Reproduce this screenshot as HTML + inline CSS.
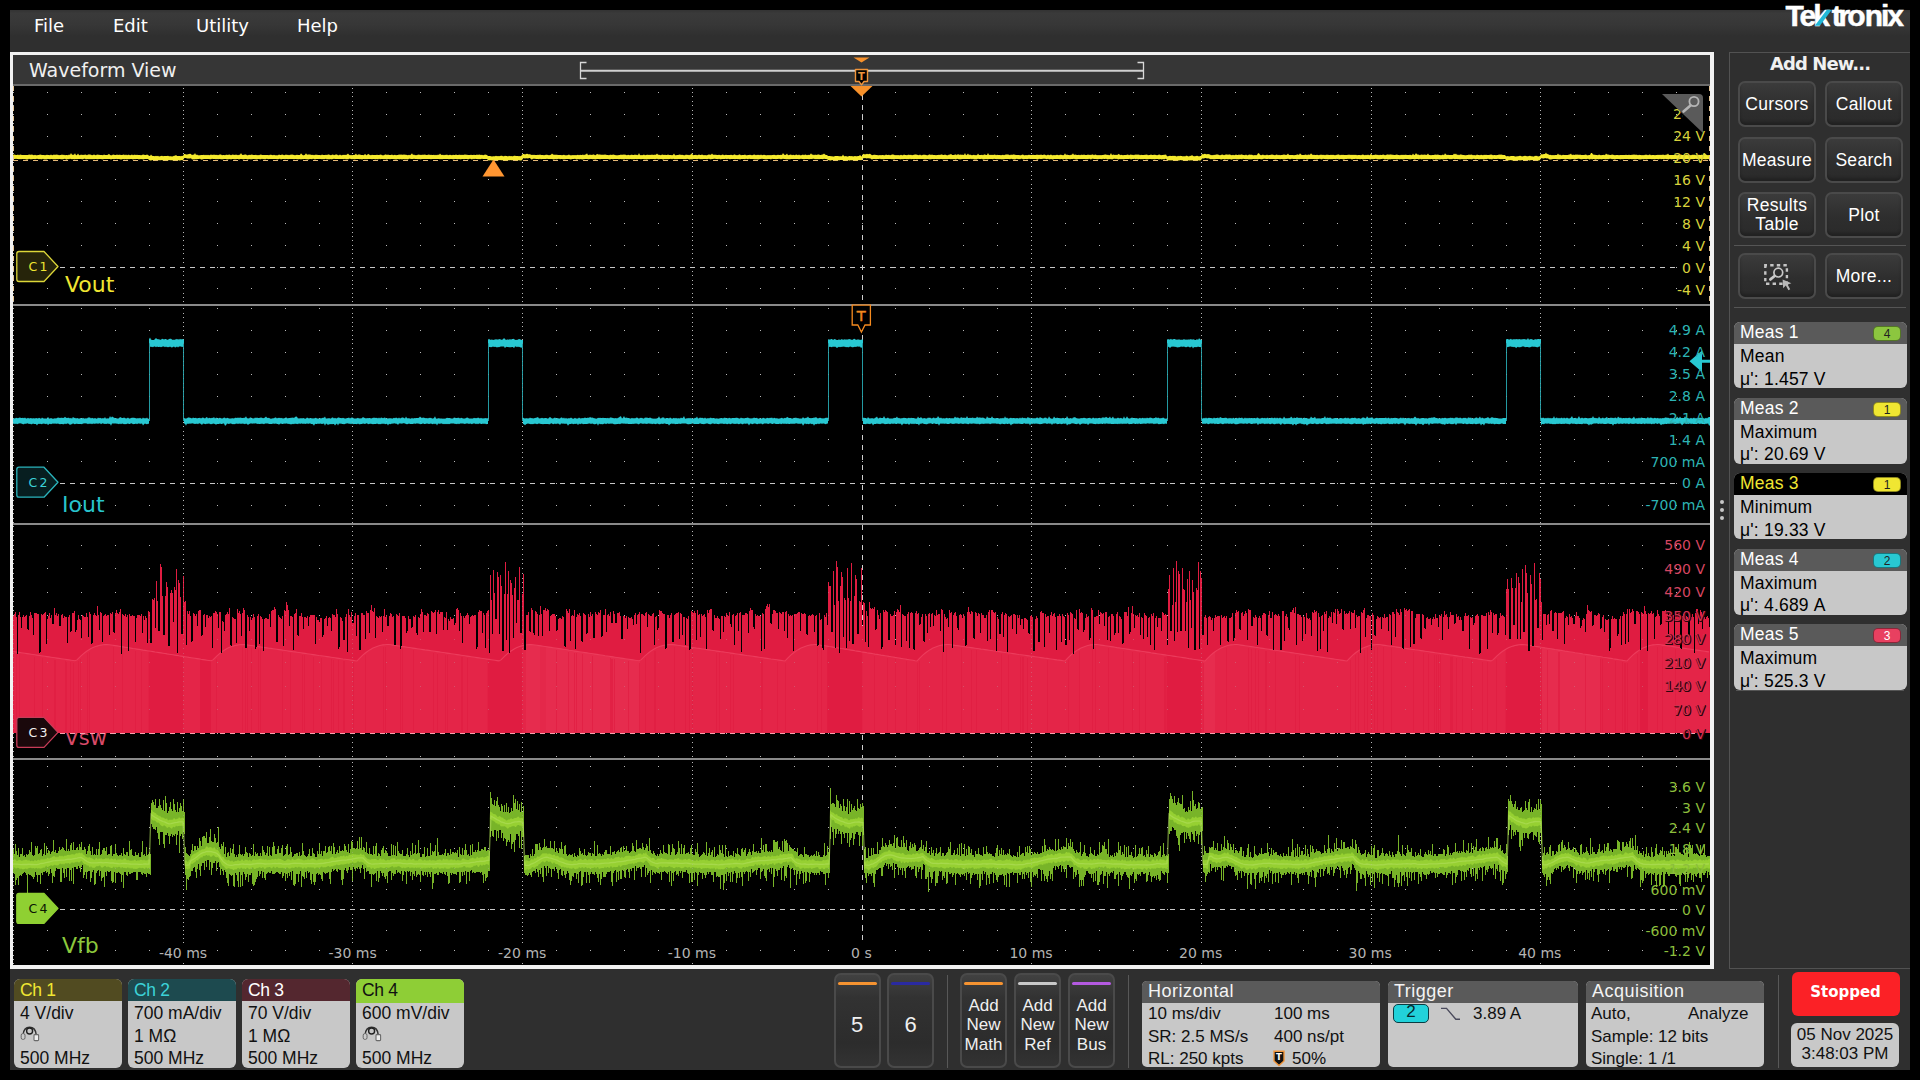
<!DOCTYPE html>
<html lang="en"><head><meta charset="utf-8"><title>Tektronix Waveform View</title>
<style>
html,body{margin:0;padding:0;background:#000;}
body{width:1920px;height:1080px;position:relative;overflow:hidden;font-family:"Liberation Sans",sans-serif;color:#fff;}
.abs{position:absolute;}
#app{position:absolute;left:10px;top:10px;width:1900px;height:1060px;background:#2f2f2f;}
#menubar{position:absolute;left:10px;top:10px;width:1900px;height:42px;background:linear-gradient(#333 0,#3a3a3a 8%,#373737 35%,#2f2f2f 62%,#2f2f2f);}
.menu{position:absolute;top:14px;font:18px "DejaVu Sans",sans-serif;color:#fff;line-height:24px;}
#wvborder{position:absolute;left:10px;top:52px;width:1704px;height:917px;background:#f2f2f2;}
#wvhead{position:absolute;left:13px;top:55px;width:1697px;height:29px;background:#363636;}
#wvline{position:absolute;left:13px;top:84px;width:1697px;height:2px;background:#6a6a6a;}
#wvtitle{position:absolute;left:29px;top:58px;font:19px "DejaVu Sans",sans-serif;color:#f0f0f0;line-height:24px;}
#plot{position:absolute;left:13px;top:86px;width:1697px;height:879px;background:#000;}
.lbl{position:absolute;font:14px "DejaVu Sans",sans-serif;line-height:18px;white-space:nowrap;}
.ylab{right:215px;text-align:right;}
.tl{color:#b4b4b4;transform:translateX(-50%);top:946px;background:#000;line-height:18px;height:18px;margin-top:-2px;padding-top:0;}
.chname{position:absolute;font:22px "DejaVu Sans",sans-serif;line-height:28px;}
/* right panel */
#rpanel{position:absolute;left:1729px;top:52px;width:181px;height:917px;border:1px solid #525252;border-right:none;box-sizing:border-box;}
#addnew{position:absolute;left:1730px;top:53px;width:180px;text-align:center;font:bold 18px "DejaVu Sans",sans-serif;letter-spacing:-.9px;color:#f0f0f0;line-height:22px;}
.btn{position:absolute;width:78px;height:46px;box-sizing:border-box;box-shadow:inset 0 -3px 3px rgba(0,0,0,.22);border:2px solid #4a4a4a;border-radius:7px;background:linear-gradient(#3b3b3b,#2e2e2e 55%,#2a2a2a);color:#fff;font:17.5px "Liberation Sans",sans-serif;letter-spacing:.3px;text-align:center;line-height:42px;}
.btn.two{line-height:19px;padding-top:2px;}
.hr{position:absolute;height:1px;background:#555;}
.meas{position:absolute;left:1734px;width:173px;height:66px;border-radius:6px;background:#c8c8c8;overflow:hidden;color:#000;font:17.5px "Liberation Sans",sans-serif;letter-spacing:.2px;}
.meas .h{position:absolute;left:0;top:0;width:100%;height:22px;background:#5a5a5a;color:#fff;line-height:21px;text-indent:6px;}
.meas .l1{position:absolute;left:6px;top:23px;line-height:22px;}
.meas .l2{position:absolute;left:6px;top:45.5px;line-height:22px;}
.chip{position:absolute;right:6px;top:4px;width:28px;height:15px;box-sizing:border-box;border:1px solid rgba(0,0,0,.4);border-radius:5px;letter-spacing:0;font:12px "Liberation Sans",sans-serif;line-height:14px;text-align:center;color:#222;text-indent:0;}
/* bottom */
.badge{position:absolute;top:979px;width:108px;height:89px;border-radius:6px;background:#c8c8c8;overflow:hidden;color:#111;font:17.5px "Liberation Sans",sans-serif;}
.badge .h{position:absolute;left:0;top:0;width:100%;height:22px;line-height:22px;text-indent:6px;letter-spacing:-.3px;}
.badge .r{position:absolute;left:6px;line-height:22px;white-space:nowrap;}
.sbtn{position:absolute;top:973px;width:47px;height:95px;box-sizing:border-box;border:2px solid #4a4a4a;border-radius:7px;background:linear-gradient(#414141,#323232 25%,#2c2c2c 75%,#333);color:#f0f0f0;text-align:center;font:17px "Liberation Sans",sans-serif;}
.sbtn .bar{position:absolute;left:2px;right:2px;top:6.5px;height:3.5px;border-radius:2px;}
.sbtn .t{position:absolute;left:0;right:0;top:21px;line-height:19.3px;}
.sbtn .n{position:absolute;left:0;right:0;top:36px;font-size:22px;line-height:28px;}
.vr{position:absolute;width:1px;background:#585858;}
.info{position:absolute;top:981px;height:86px;border-radius:5px;background:#c8c8c8;overflow:hidden;color:#111;font:17px "Liberation Sans",sans-serif;}
.info .h{position:absolute;left:0;top:0;width:100%;height:22px;background:#5a5a5a;color:#f4f4f4;line-height:21px;text-indent:6px;font-size:18px;letter-spacing:.5px;}
.info .r{position:absolute;line-height:22px;white-space:nowrap;}
#stopped{position:absolute;left:1791.5px;top:972px;width:108px;height:44px;border-radius:6px;background:#fb2126;color:#fff;font:bold 15px "DejaVu Sans",sans-serif;line-height:40px;text-align:center;}
#datebox{position:absolute;left:1791px;top:1022.5px;width:108px;height:44px;border-radius:6px;background:#c8c8c8;color:#111;font:17px "Liberation Sans",sans-serif;line-height:19.5px;text-align:center;padding-top:2px;box-sizing:border-box;}

</style></head>
<body>
<div id="app"></div>
<div id="menubar"></div>
<div class="menu" style="left:34px">File</div>
<div class="menu" style="left:113px">Edit</div>
<div class="menu" style="left:196px">Utility</div>
<div class="menu" style="left:297px">Help</div>
<svg id="logo" class="abs" style="left:1780px;top:0" width="130" height="34" viewBox="1780 0 130 34"><text y="25.7" x="1785.6 1799.6 1813.2 1831.8 1838.4 1847.2 1864.8 1881 1887.2" font-family="Liberation Sans, sans-serif" font-weight="bold" font-size="30" fill="#fff" stroke="#fff" stroke-width=".5">Tektronix</text><path d="M1814.8 25.7L1826.8 9.8H1831.8L1819.8 25.7Z" fill="#21b8d8"/></svg>
<div id="wvborder"></div><div id="wvhead"></div><div id="wvline"></div>
<div id="wvtitle">Waveform View</div>
<div id="plot"></div>
<svg class="abs" style="left:0;top:0" width="1920" height="1080" viewBox="0 0 1920 1080">
<g id="gridwaves">
<path d="M13 88.5h1M183 88.5h1M352 88.5h1M522 88.5h1M692 88.5h1M1031 88.5h1M1201 88.5h1M1371 88.5h1M1540 88.5h1M13 92.5h1M47 92.5h1M81 92.5h1M115 92.5h1M149 92.5h1M183 92.5h1M217 92.5h1M251 92.5h1M285 92.5h1M319 92.5h1M352 92.5h1M386 92.5h1M420 92.5h1M454 92.5h1M488 92.5h1M522 92.5h1M556 92.5h1M590 92.5h1M624 92.5h1M658 92.5h1M692 92.5h1M726 92.5h1M760 92.5h1M794 92.5h1M828 92.5h1M862 92.5h1M895 92.5h1M929 92.5h1M963 92.5h1M997 92.5h1M1031 92.5h1M1065 92.5h1M1099 92.5h1M1133 92.5h1M1167 92.5h1M1201 92.5h1M1235 92.5h1M1269 92.5h1M1303 92.5h1M1337 92.5h1M1371 92.5h1M1405 92.5h1M1439 92.5h1M1472 92.5h1M1506 92.5h1M1540 92.5h1M1574 92.5h1M1608 92.5h1M1642 92.5h1M1676 92.5h1M13 96.5h1M183 96.5h1M352 96.5h1M522 96.5h1M692 96.5h1M1031 96.5h1M1201 96.5h1M1371 96.5h1M1540 96.5h1M13 101.5h1M183 101.5h1M352 101.5h1M522 101.5h1M692 101.5h1M1031 101.5h1M1201 101.5h1M1371 101.5h1M1540 101.5h1M13 105.5h1M183 105.5h1M352 105.5h1M522 105.5h1M692 105.5h1M1031 105.5h1M1201 105.5h1M1371 105.5h1M1540 105.5h1M13 110.5h1M183 110.5h1M352 110.5h1M522 110.5h1M692 110.5h1M1031 110.5h1M1201 110.5h1M1371 110.5h1M1540 110.5h1M13 114.5h1M47 114.5h1M81 114.5h1M115 114.5h1M149 114.5h1M183 114.5h1M217 114.5h1M251 114.5h1M285 114.5h1M319 114.5h1M352 114.5h1M386 114.5h1M420 114.5h1M454 114.5h1M488 114.5h1M522 114.5h1M556 114.5h1M590 114.5h1M624 114.5h1M658 114.5h1M692 114.5h1M726 114.5h1M760 114.5h1M794 114.5h1M828 114.5h1M862 114.5h1M895 114.5h1M929 114.5h1M963 114.5h1M997 114.5h1M1031 114.5h1M1065 114.5h1M1099 114.5h1M1133 114.5h1M1167 114.5h1M1201 114.5h1M1235 114.5h1M1269 114.5h1M1303 114.5h1M1337 114.5h1M1371 114.5h1M1405 114.5h1M1439 114.5h1M1472 114.5h1M1506 114.5h1M1540 114.5h1M1574 114.5h1M1608 114.5h1M1642 114.5h1M1676 114.5h1M13 118.5h1M183 118.5h1M352 118.5h1M522 118.5h1M692 118.5h1M1031 118.5h1M1201 118.5h1M1371 118.5h1M1540 118.5h1M13 123.5h1M183 123.5h1M352 123.5h1M522 123.5h1M692 123.5h1M1031 123.5h1M1201 123.5h1M1371 123.5h1M1540 123.5h1M13 127.5h1M183 127.5h1M352 127.5h1M522 127.5h1M692 127.5h1M1031 127.5h1M1201 127.5h1M1371 127.5h1M1540 127.5h1M13 131.5h1M183 131.5h1M352 131.5h1M522 131.5h1M692 131.5h1M1031 131.5h1M1201 131.5h1M1371 131.5h1M1540 131.5h1M13 136.5h1M47 136.5h1M81 136.5h1M115 136.5h1M149 136.5h1M183 136.5h1M217 136.5h1M251 136.5h1M285 136.5h1M319 136.5h1M352 136.5h1M386 136.5h1M420 136.5h1M454 136.5h1M488 136.5h1M522 136.5h1M556 136.5h1M590 136.5h1M624 136.5h1M658 136.5h1M692 136.5h1M726 136.5h1M760 136.5h1M794 136.5h1M828 136.5h1M862 136.5h1M895 136.5h1M929 136.5h1M963 136.5h1M997 136.5h1M1031 136.5h1M1065 136.5h1M1099 136.5h1M1133 136.5h1M1167 136.5h1M1201 136.5h1M1235 136.5h1M1269 136.5h1M1303 136.5h1M1337 136.5h1M1371 136.5h1M1405 136.5h1M1439 136.5h1M1472 136.5h1M1506 136.5h1M1540 136.5h1M1574 136.5h1M1608 136.5h1M1642 136.5h1M1676 136.5h1M13 140.5h1M183 140.5h1M352 140.5h1M522 140.5h1M692 140.5h1M1031 140.5h1M1201 140.5h1M1371 140.5h1M1540 140.5h1M13 144.5h1M183 144.5h1M352 144.5h1M522 144.5h1M692 144.5h1M1031 144.5h1M1201 144.5h1M1371 144.5h1M1540 144.5h1M13 149.5h1M183 149.5h1M352 149.5h1M522 149.5h1M692 149.5h1M1031 149.5h1M1201 149.5h1M1371 149.5h1M1540 149.5h1M13 153.5h1M183 153.5h1M352 153.5h1M522 153.5h1M692 153.5h1M1031 153.5h1M1201 153.5h1M1371 153.5h1M1540 153.5h1M13 158.5h1M47 158.5h1M81 158.5h1M115 158.5h1M149 158.5h1M183 158.5h1M217 158.5h1M251 158.5h1M285 158.5h1M319 158.5h1M352 158.5h1M386 158.5h1M420 158.5h1M454 158.5h1M488 158.5h1M522 158.5h1M556 158.5h1M590 158.5h1M624 158.5h1M658 158.5h1M692 158.5h1M726 158.5h1M760 158.5h1M794 158.5h1M828 158.5h1M862 158.5h1M895 158.5h1M929 158.5h1M963 158.5h1M997 158.5h1M1031 158.5h1M1065 158.5h1M1099 158.5h1M1133 158.5h1M1167 158.5h1M1201 158.5h1M1235 158.5h1M1269 158.5h1M1303 158.5h1M1337 158.5h1M1371 158.5h1M1405 158.5h1M1439 158.5h1M1472 158.5h1M1506 158.5h1M1540 158.5h1M1574 158.5h1M1608 158.5h1M1642 158.5h1M1676 158.5h1M13 162.5h1M183 162.5h1M352 162.5h1M522 162.5h1M692 162.5h1M1031 162.5h1M1201 162.5h1M1371 162.5h1M1540 162.5h1M13 166.5h1M183 166.5h1M352 166.5h1M522 166.5h1M692 166.5h1M1031 166.5h1M1201 166.5h1M1371 166.5h1M1540 166.5h1M13 171.5h1M183 171.5h1M352 171.5h1M522 171.5h1M692 171.5h1M1031 171.5h1M1201 171.5h1M1371 171.5h1M1540 171.5h1M13 175.5h1M183 175.5h1M352 175.5h1M522 175.5h1M692 175.5h1M1031 175.5h1M1201 175.5h1M1371 175.5h1M1540 175.5h1M13 179.5h1M47 179.5h1M81 179.5h1M115 179.5h1M149 179.5h1M183 179.5h1M217 179.5h1M251 179.5h1M285 179.5h1M319 179.5h1M352 179.5h1M386 179.5h1M420 179.5h1M454 179.5h1M488 179.5h1M522 179.5h1M556 179.5h1M590 179.5h1M624 179.5h1M658 179.5h1M692 179.5h1M726 179.5h1M760 179.5h1M794 179.5h1M828 179.5h1M862 179.5h1M895 179.5h1M929 179.5h1M963 179.5h1M997 179.5h1M1031 179.5h1M1065 179.5h1M1099 179.5h1M1133 179.5h1M1167 179.5h1M1201 179.5h1M1235 179.5h1M1269 179.5h1M1303 179.5h1M1337 179.5h1M1371 179.5h1M1405 179.5h1M1439 179.5h1M1472 179.5h1M1506 179.5h1M1540 179.5h1M1574 179.5h1M1608 179.5h1M1642 179.5h1M1676 179.5h1M13 184.5h1M183 184.5h1M352 184.5h1M522 184.5h1M692 184.5h1M1031 184.5h1M1201 184.5h1M1371 184.5h1M1540 184.5h1M13 188.5h1M183 188.5h1M352 188.5h1M522 188.5h1M692 188.5h1M1031 188.5h1M1201 188.5h1M1371 188.5h1M1540 188.5h1M13 192.5h1M183 192.5h1M352 192.5h1M522 192.5h1M692 192.5h1M1031 192.5h1M1201 192.5h1M1371 192.5h1M1540 192.5h1M13 197.5h1M183 197.5h1M352 197.5h1M522 197.5h1M692 197.5h1M1031 197.5h1M1201 197.5h1M1371 197.5h1M1540 197.5h1M13 201.5h1M47 201.5h1M81 201.5h1M115 201.5h1M149 201.5h1M183 201.5h1M217 201.5h1M251 201.5h1M285 201.5h1M319 201.5h1M352 201.5h1M386 201.5h1M420 201.5h1M454 201.5h1M488 201.5h1M522 201.5h1M556 201.5h1M590 201.5h1M624 201.5h1M658 201.5h1M692 201.5h1M726 201.5h1M760 201.5h1M794 201.5h1M828 201.5h1M862 201.5h1M895 201.5h1M929 201.5h1M963 201.5h1M997 201.5h1M1031 201.5h1M1065 201.5h1M1099 201.5h1M1133 201.5h1M1167 201.5h1M1201 201.5h1M1235 201.5h1M1269 201.5h1M1303 201.5h1M1337 201.5h1M1371 201.5h1M1405 201.5h1M1439 201.5h1M1472 201.5h1M1506 201.5h1M1540 201.5h1M1574 201.5h1M1608 201.5h1M1642 201.5h1M1676 201.5h1M13 205.5h1M183 205.5h1M352 205.5h1M522 205.5h1M692 205.5h1M1031 205.5h1M1201 205.5h1M1371 205.5h1M1540 205.5h1M13 210.5h1M183 210.5h1M352 210.5h1M522 210.5h1M692 210.5h1M1031 210.5h1M1201 210.5h1M1371 210.5h1M1540 210.5h1M13 214.5h1M183 214.5h1M352 214.5h1M522 214.5h1M692 214.5h1M1031 214.5h1M1201 214.5h1M1371 214.5h1M1540 214.5h1M13 219.5h1M183 219.5h1M352 219.5h1M522 219.5h1M692 219.5h1M1031 219.5h1M1201 219.5h1M1371 219.5h1M1540 219.5h1M13 223.5h1M47 223.5h1M81 223.5h1M115 223.5h1M149 223.5h1M183 223.5h1M217 223.5h1M251 223.5h1M285 223.5h1M319 223.5h1M352 223.5h1M386 223.5h1M420 223.5h1M454 223.5h1M488 223.5h1M522 223.5h1M556 223.5h1M590 223.5h1M624 223.5h1M658 223.5h1M692 223.5h1M726 223.5h1M760 223.5h1M794 223.5h1M828 223.5h1M862 223.5h1M895 223.5h1M929 223.5h1M963 223.5h1M997 223.5h1M1031 223.5h1M1065 223.5h1M1099 223.5h1M1133 223.5h1M1167 223.5h1M1201 223.5h1M1235 223.5h1M1269 223.5h1M1303 223.5h1M1337 223.5h1M1371 223.5h1M1405 223.5h1M1439 223.5h1M1472 223.5h1M1506 223.5h1M1540 223.5h1M1574 223.5h1M1608 223.5h1M1642 223.5h1M1676 223.5h1M13 227.5h1M183 227.5h1M352 227.5h1M522 227.5h1M692 227.5h1M1031 227.5h1M1201 227.5h1M1371 227.5h1M1540 227.5h1M13 232.5h1M183 232.5h1M352 232.5h1M522 232.5h1M692 232.5h1M1031 232.5h1M1201 232.5h1M1371 232.5h1M1540 232.5h1M13 236.5h1M183 236.5h1M352 236.5h1M522 236.5h1M692 236.5h1M1031 236.5h1M1201 236.5h1M1371 236.5h1M1540 236.5h1M13 240.5h1M183 240.5h1M352 240.5h1M522 240.5h1M692 240.5h1M1031 240.5h1M1201 240.5h1M1371 240.5h1M1540 240.5h1M13 245.5h1M47 245.5h1M81 245.5h1M115 245.5h1M149 245.5h1M183 245.5h1M217 245.5h1M251 245.5h1M285 245.5h1M319 245.5h1M352 245.5h1M386 245.5h1M420 245.5h1M454 245.5h1M488 245.5h1M522 245.5h1M556 245.5h1M590 245.5h1M624 245.5h1M658 245.5h1M692 245.5h1M726 245.5h1M760 245.5h1M794 245.5h1M828 245.5h1M862 245.5h1M895 245.5h1M929 245.5h1M963 245.5h1M997 245.5h1M1031 245.5h1M1065 245.5h1M1099 245.5h1M1133 245.5h1M1167 245.5h1M1201 245.5h1M1235 245.5h1M1269 245.5h1M1303 245.5h1M1337 245.5h1M1371 245.5h1M1405 245.5h1M1439 245.5h1M1472 245.5h1M1506 245.5h1M1540 245.5h1M1574 245.5h1M1608 245.5h1M1642 245.5h1M1676 245.5h1M13 249.5h1M183 249.5h1M352 249.5h1M522 249.5h1M692 249.5h1M1031 249.5h1M1201 249.5h1M1371 249.5h1M1540 249.5h1M13 253.5h1M183 253.5h1M352 253.5h1M522 253.5h1M692 253.5h1M1031 253.5h1M1201 253.5h1M1371 253.5h1M1540 253.5h1M13 258.5h1M183 258.5h1M352 258.5h1M522 258.5h1M692 258.5h1M1031 258.5h1M1201 258.5h1M1371 258.5h1M1540 258.5h1M13 262.5h1M183 262.5h1M352 262.5h1M522 262.5h1M692 262.5h1M1031 262.5h1M1201 262.5h1M1371 262.5h1M1540 262.5h1M13 267.5h1M47 267.5h1M81 267.5h1M115 267.5h1M149 267.5h1M183 267.5h1M217 267.5h1M251 267.5h1M285 267.5h1M319 267.5h1M352 267.5h1M386 267.5h1M420 267.5h1M454 267.5h1M488 267.5h1M522 267.5h1M556 267.5h1M590 267.5h1M624 267.5h1M658 267.5h1M692 267.5h1M726 267.5h1M760 267.5h1M794 267.5h1M828 267.5h1M862 267.5h1M895 267.5h1M929 267.5h1M963 267.5h1M997 267.5h1M1031 267.5h1M1065 267.5h1M1099 267.5h1M1133 267.5h1M1167 267.5h1M1201 267.5h1M1235 267.5h1M1269 267.5h1M1303 267.5h1M1337 267.5h1M1371 267.5h1M1405 267.5h1M1439 267.5h1M1472 267.5h1M1506 267.5h1M1540 267.5h1M1574 267.5h1M1608 267.5h1M1642 267.5h1M1676 267.5h1M13 271.5h1M183 271.5h1M352 271.5h1M522 271.5h1M692 271.5h1M1031 271.5h1M1201 271.5h1M1371 271.5h1M1540 271.5h1M13 275.5h1M183 275.5h1M352 275.5h1M522 275.5h1M692 275.5h1M1031 275.5h1M1201 275.5h1M1371 275.5h1M1540 275.5h1M13 280.5h1M183 280.5h1M352 280.5h1M522 280.5h1M692 280.5h1M1031 280.5h1M1201 280.5h1M1371 280.5h1M1540 280.5h1M13 284.5h1M183 284.5h1M352 284.5h1M522 284.5h1M692 284.5h1M1031 284.5h1M1201 284.5h1M1371 284.5h1M1540 284.5h1M13 288.5h1M47 288.5h1M81 288.5h1M115 288.5h1M149 288.5h1M183 288.5h1M217 288.5h1M251 288.5h1M285 288.5h1M319 288.5h1M352 288.5h1M386 288.5h1M420 288.5h1M454 288.5h1M488 288.5h1M522 288.5h1M556 288.5h1M590 288.5h1M624 288.5h1M658 288.5h1M692 288.5h1M726 288.5h1M760 288.5h1M794 288.5h1M828 288.5h1M862 288.5h1M895 288.5h1M929 288.5h1M963 288.5h1M997 288.5h1M1031 288.5h1M1065 288.5h1M1099 288.5h1M1133 288.5h1M1167 288.5h1M1201 288.5h1M1235 288.5h1M1269 288.5h1M1303 288.5h1M1337 288.5h1M1371 288.5h1M1405 288.5h1M1439 288.5h1M1472 288.5h1M1506 288.5h1M1540 288.5h1M1574 288.5h1M1608 288.5h1M1642 288.5h1M1676 288.5h1M13 293.5h1M183 293.5h1M352 293.5h1M522 293.5h1M692 293.5h1M1031 293.5h1M1201 293.5h1M1371 293.5h1M1540 293.5h1M13 297.5h1M183 297.5h1M352 297.5h1M522 297.5h1M692 297.5h1M1031 297.5h1M1201 297.5h1M1371 297.5h1M1540 297.5h1M13 301.5h1M183 301.5h1M352 301.5h1M522 301.5h1M692 301.5h1M1031 301.5h1M1201 301.5h1M1371 301.5h1M1540 301.5h1M13 308.5h1M47 308.5h1M81 308.5h1M115 308.5h1M149 308.5h1M183 308.5h1M217 308.5h1M251 308.5h1M285 308.5h1M319 308.5h1M352 308.5h1M386 308.5h1M420 308.5h1M454 308.5h1M488 308.5h1M522 308.5h1M556 308.5h1M590 308.5h1M624 308.5h1M658 308.5h1M692 308.5h1M726 308.5h1M760 308.5h1M794 308.5h1M828 308.5h1M862 308.5h1M895 308.5h1M929 308.5h1M963 308.5h1M997 308.5h1M1031 308.5h1M1065 308.5h1M1099 308.5h1M1133 308.5h1M1167 308.5h1M1201 308.5h1M1235 308.5h1M1269 308.5h1M1303 308.5h1M1337 308.5h1M1371 308.5h1M1405 308.5h1M1439 308.5h1M1472 308.5h1M1506 308.5h1M1540 308.5h1M1574 308.5h1M1608 308.5h1M1642 308.5h1M1676 308.5h1M13 313.5h1M183 313.5h1M352 313.5h1M522 313.5h1M692 313.5h1M1031 313.5h1M1201 313.5h1M1371 313.5h1M1540 313.5h1M13 317.5h1M183 317.5h1M352 317.5h1M522 317.5h1M692 317.5h1M1031 317.5h1M1201 317.5h1M1371 317.5h1M1540 317.5h1M13 322.5h1M183 322.5h1M352 322.5h1M522 322.5h1M692 322.5h1M1031 322.5h1M1201 322.5h1M1371 322.5h1M1540 322.5h1M13 326.5h1M183 326.5h1M352 326.5h1M522 326.5h1M692 326.5h1M1031 326.5h1M1201 326.5h1M1371 326.5h1M1540 326.5h1M13 330.5h1M47 330.5h1M81 330.5h1M115 330.5h1M149 330.5h1M183 330.5h1M217 330.5h1M251 330.5h1M285 330.5h1M319 330.5h1M352 330.5h1M386 330.5h1M420 330.5h1M454 330.5h1M488 330.5h1M522 330.5h1M556 330.5h1M590 330.5h1M624 330.5h1M658 330.5h1M692 330.5h1M726 330.5h1M760 330.5h1M794 330.5h1M828 330.5h1M862 330.5h1M895 330.5h1M929 330.5h1M963 330.5h1M997 330.5h1M1031 330.5h1M1065 330.5h1M1099 330.5h1M1133 330.5h1M1167 330.5h1M1201 330.5h1M1235 330.5h1M1269 330.5h1M1303 330.5h1M1337 330.5h1M1371 330.5h1M1405 330.5h1M1439 330.5h1M1472 330.5h1M1506 330.5h1M1540 330.5h1M1574 330.5h1M1608 330.5h1M1642 330.5h1M1676 330.5h1M13 335.5h1M183 335.5h1M352 335.5h1M522 335.5h1M692 335.5h1M1031 335.5h1M1201 335.5h1M1371 335.5h1M1540 335.5h1M13 339.5h1M183 339.5h1M352 339.5h1M522 339.5h1M692 339.5h1M1031 339.5h1M1201 339.5h1M1371 339.5h1M1540 339.5h1M13 343.5h1M183 343.5h1M352 343.5h1M522 343.5h1M692 343.5h1M1031 343.5h1M1201 343.5h1M1371 343.5h1M1540 343.5h1M13 348.5h1M183 348.5h1M352 348.5h1M522 348.5h1M692 348.5h1M1031 348.5h1M1201 348.5h1M1371 348.5h1M1540 348.5h1M13 352.5h1M47 352.5h1M81 352.5h1M115 352.5h1M149 352.5h1M183 352.5h1M217 352.5h1M251 352.5h1M285 352.5h1M319 352.5h1M352 352.5h1M386 352.5h1M420 352.5h1M454 352.5h1M488 352.5h1M522 352.5h1M556 352.5h1M590 352.5h1M624 352.5h1M658 352.5h1M692 352.5h1M726 352.5h1M760 352.5h1M794 352.5h1M828 352.5h1M862 352.5h1M895 352.5h1M929 352.5h1M963 352.5h1M997 352.5h1M1031 352.5h1M1065 352.5h1M1099 352.5h1M1133 352.5h1M1167 352.5h1M1201 352.5h1M1235 352.5h1M1269 352.5h1M1303 352.5h1M1337 352.5h1M1371 352.5h1M1405 352.5h1M1439 352.5h1M1472 352.5h1M1506 352.5h1M1540 352.5h1M1574 352.5h1M1608 352.5h1M1642 352.5h1M1676 352.5h1M13 356.5h1M183 356.5h1M352 356.5h1M522 356.5h1M692 356.5h1M1031 356.5h1M1201 356.5h1M1371 356.5h1M1540 356.5h1M13 361.5h1M183 361.5h1M352 361.5h1M522 361.5h1M692 361.5h1M1031 361.5h1M1201 361.5h1M1371 361.5h1M1540 361.5h1M13 365.5h1M183 365.5h1M352 365.5h1M522 365.5h1M692 365.5h1M1031 365.5h1M1201 365.5h1M1371 365.5h1M1540 365.5h1M13 370.5h1M183 370.5h1M352 370.5h1M522 370.5h1M692 370.5h1M1031 370.5h1M1201 370.5h1M1371 370.5h1M1540 370.5h1M13 374.5h1M47 374.5h1M81 374.5h1M115 374.5h1M149 374.5h1M183 374.5h1M217 374.5h1M251 374.5h1M285 374.5h1M319 374.5h1M352 374.5h1M386 374.5h1M420 374.5h1M454 374.5h1M488 374.5h1M522 374.5h1M556 374.5h1M590 374.5h1M624 374.5h1M658 374.5h1M692 374.5h1M726 374.5h1M760 374.5h1M794 374.5h1M828 374.5h1M862 374.5h1M895 374.5h1M929 374.5h1M963 374.5h1M997 374.5h1M1031 374.5h1M1065 374.5h1M1099 374.5h1M1133 374.5h1M1167 374.5h1M1201 374.5h1M1235 374.5h1M1269 374.5h1M1303 374.5h1M1337 374.5h1M1371 374.5h1M1405 374.5h1M1439 374.5h1M1472 374.5h1M1506 374.5h1M1540 374.5h1M1574 374.5h1M1608 374.5h1M1642 374.5h1M1676 374.5h1M13 378.5h1M183 378.5h1M352 378.5h1M522 378.5h1M692 378.5h1M1031 378.5h1M1201 378.5h1M1371 378.5h1M1540 378.5h1M13 383.5h1M183 383.5h1M352 383.5h1M522 383.5h1M692 383.5h1M1031 383.5h1M1201 383.5h1M1371 383.5h1M1540 383.5h1M13 387.5h1M183 387.5h1M352 387.5h1M522 387.5h1M692 387.5h1M1031 387.5h1M1201 387.5h1M1371 387.5h1M1540 387.5h1M13 391.5h1M183 391.5h1M352 391.5h1M522 391.5h1M692 391.5h1M1031 391.5h1M1201 391.5h1M1371 391.5h1M1540 391.5h1M13 396.5h1M47 396.5h1M81 396.5h1M115 396.5h1M149 396.5h1M183 396.5h1M217 396.5h1M251 396.5h1M285 396.5h1M319 396.5h1M352 396.5h1M386 396.5h1M420 396.5h1M454 396.5h1M488 396.5h1M522 396.5h1M556 396.5h1M590 396.5h1M624 396.5h1M658 396.5h1M692 396.5h1M726 396.5h1M760 396.5h1M794 396.5h1M828 396.5h1M862 396.5h1M895 396.5h1M929 396.5h1M963 396.5h1M997 396.5h1M1031 396.5h1M1065 396.5h1M1099 396.5h1M1133 396.5h1M1167 396.5h1M1201 396.5h1M1235 396.5h1M1269 396.5h1M1303 396.5h1M1337 396.5h1M1371 396.5h1M1405 396.5h1M1439 396.5h1M1472 396.5h1M1506 396.5h1M1540 396.5h1M1574 396.5h1M1608 396.5h1M1642 396.5h1M1676 396.5h1M13 400.5h1M183 400.5h1M352 400.5h1M522 400.5h1M692 400.5h1M1031 400.5h1M1201 400.5h1M1371 400.5h1M1540 400.5h1M13 404.5h1M183 404.5h1M352 404.5h1M522 404.5h1M692 404.5h1M1031 404.5h1M1201 404.5h1M1371 404.5h1M1540 404.5h1M13 409.5h1M183 409.5h1M352 409.5h1M522 409.5h1M692 409.5h1M1031 409.5h1M1201 409.5h1M1371 409.5h1M1540 409.5h1M13 413.5h1M183 413.5h1M352 413.5h1M522 413.5h1M692 413.5h1M1031 413.5h1M1201 413.5h1M1371 413.5h1M1540 413.5h1M13 418.5h1M47 418.5h1M81 418.5h1M115 418.5h1M149 418.5h1M183 418.5h1M217 418.5h1M251 418.5h1M285 418.5h1M319 418.5h1M352 418.5h1M386 418.5h1M420 418.5h1M454 418.5h1M488 418.5h1M522 418.5h1M556 418.5h1M590 418.5h1M624 418.5h1M658 418.5h1M692 418.5h1M726 418.5h1M760 418.5h1M794 418.5h1M828 418.5h1M862 418.5h1M895 418.5h1M929 418.5h1M963 418.5h1M997 418.5h1M1031 418.5h1M1065 418.5h1M1099 418.5h1M1133 418.5h1M1167 418.5h1M1201 418.5h1M1235 418.5h1M1269 418.5h1M1303 418.5h1M1337 418.5h1M1371 418.5h1M1405 418.5h1M1439 418.5h1M1472 418.5h1M1506 418.5h1M1540 418.5h1M1574 418.5h1M1608 418.5h1M1642 418.5h1M1676 418.5h1M13 422.5h1M183 422.5h1M352 422.5h1M522 422.5h1M692 422.5h1M1031 422.5h1M1201 422.5h1M1371 422.5h1M1540 422.5h1M13 426.5h1M183 426.5h1M352 426.5h1M522 426.5h1M692 426.5h1M1031 426.5h1M1201 426.5h1M1371 426.5h1M1540 426.5h1M13 431.5h1M183 431.5h1M352 431.5h1M522 431.5h1M692 431.5h1M1031 431.5h1M1201 431.5h1M1371 431.5h1M1540 431.5h1M13 435.5h1M183 435.5h1M352 435.5h1M522 435.5h1M692 435.5h1M1031 435.5h1M1201 435.5h1M1371 435.5h1M1540 435.5h1M13 439.5h1M47 439.5h1M81 439.5h1M115 439.5h1M149 439.5h1M183 439.5h1M217 439.5h1M251 439.5h1M285 439.5h1M319 439.5h1M352 439.5h1M386 439.5h1M420 439.5h1M454 439.5h1M488 439.5h1M522 439.5h1M556 439.5h1M590 439.5h1M624 439.5h1M658 439.5h1M692 439.5h1M726 439.5h1M760 439.5h1M794 439.5h1M828 439.5h1M862 439.5h1M895 439.5h1M929 439.5h1M963 439.5h1M997 439.5h1M1031 439.5h1M1065 439.5h1M1099 439.5h1M1133 439.5h1M1167 439.5h1M1201 439.5h1M1235 439.5h1M1269 439.5h1M1303 439.5h1M1337 439.5h1M1371 439.5h1M1405 439.5h1M1439 439.5h1M1472 439.5h1M1506 439.5h1M1540 439.5h1M1574 439.5h1M1608 439.5h1M1642 439.5h1M1676 439.5h1M13 444.5h1M183 444.5h1M352 444.5h1M522 444.5h1M692 444.5h1M1031 444.5h1M1201 444.5h1M1371 444.5h1M1540 444.5h1M13 448.5h1M183 448.5h1M352 448.5h1M522 448.5h1M692 448.5h1M1031 448.5h1M1201 448.5h1M1371 448.5h1M1540 448.5h1M13 452.5h1M183 452.5h1M352 452.5h1M522 452.5h1M692 452.5h1M1031 452.5h1M1201 452.5h1M1371 452.5h1M1540 452.5h1M13 457.5h1M183 457.5h1M352 457.5h1M522 457.5h1M692 457.5h1M1031 457.5h1M1201 457.5h1M1371 457.5h1M1540 457.5h1M13 461.5h1M47 461.5h1M81 461.5h1M115 461.5h1M149 461.5h1M183 461.5h1M217 461.5h1M251 461.5h1M285 461.5h1M319 461.5h1M352 461.5h1M386 461.5h1M420 461.5h1M454 461.5h1M488 461.5h1M522 461.5h1M556 461.5h1M590 461.5h1M624 461.5h1M658 461.5h1M692 461.5h1M726 461.5h1M760 461.5h1M794 461.5h1M828 461.5h1M862 461.5h1M895 461.5h1M929 461.5h1M963 461.5h1M997 461.5h1M1031 461.5h1M1065 461.5h1M1099 461.5h1M1133 461.5h1M1167 461.5h1M1201 461.5h1M1235 461.5h1M1269 461.5h1M1303 461.5h1M1337 461.5h1M1371 461.5h1M1405 461.5h1M1439 461.5h1M1472 461.5h1M1506 461.5h1M1540 461.5h1M1574 461.5h1M1608 461.5h1M1642 461.5h1M1676 461.5h1M13 465.5h1M183 465.5h1M352 465.5h1M522 465.5h1M692 465.5h1M1031 465.5h1M1201 465.5h1M1371 465.5h1M1540 465.5h1M13 470.5h1M183 470.5h1M352 470.5h1M522 470.5h1M692 470.5h1M1031 470.5h1M1201 470.5h1M1371 470.5h1M1540 470.5h1M13 474.5h1M183 474.5h1M352 474.5h1M522 474.5h1M692 474.5h1M1031 474.5h1M1201 474.5h1M1371 474.5h1M1540 474.5h1M13 479.5h1M183 479.5h1M352 479.5h1M522 479.5h1M692 479.5h1M1031 479.5h1M1201 479.5h1M1371 479.5h1M1540 479.5h1M13 483.5h1M47 483.5h1M81 483.5h1M115 483.5h1M149 483.5h1M183 483.5h1M217 483.5h1M251 483.5h1M285 483.5h1M319 483.5h1M352 483.5h1M386 483.5h1M420 483.5h1M454 483.5h1M488 483.5h1M522 483.5h1M556 483.5h1M590 483.5h1M624 483.5h1M658 483.5h1M692 483.5h1M726 483.5h1M760 483.5h1M794 483.5h1M828 483.5h1M862 483.5h1M895 483.5h1M929 483.5h1M963 483.5h1M997 483.5h1M1031 483.5h1M1065 483.5h1M1099 483.5h1M1133 483.5h1M1167 483.5h1M1201 483.5h1M1235 483.5h1M1269 483.5h1M1303 483.5h1M1337 483.5h1M1371 483.5h1M1405 483.5h1M1439 483.5h1M1472 483.5h1M1506 483.5h1M1540 483.5h1M1574 483.5h1M1608 483.5h1M1642 483.5h1M1676 483.5h1M13 487.5h1M183 487.5h1M352 487.5h1M522 487.5h1M692 487.5h1M1031 487.5h1M1201 487.5h1M1371 487.5h1M1540 487.5h1M13 492.5h1M183 492.5h1M352 492.5h1M522 492.5h1M692 492.5h1M1031 492.5h1M1201 492.5h1M1371 492.5h1M1540 492.5h1M13 496.5h1M183 496.5h1M352 496.5h1M522 496.5h1M692 496.5h1M1031 496.5h1M1201 496.5h1M1371 496.5h1M1540 496.5h1M13 500.5h1M183 500.5h1M352 500.5h1M522 500.5h1M692 500.5h1M1031 500.5h1M1201 500.5h1M1371 500.5h1M1540 500.5h1M13 505.5h1M47 505.5h1M81 505.5h1M115 505.5h1M149 505.5h1M183 505.5h1M217 505.5h1M251 505.5h1M285 505.5h1M319 505.5h1M352 505.5h1M386 505.5h1M420 505.5h1M454 505.5h1M488 505.5h1M522 505.5h1M556 505.5h1M590 505.5h1M624 505.5h1M658 505.5h1M692 505.5h1M726 505.5h1M760 505.5h1M794 505.5h1M828 505.5h1M862 505.5h1M895 505.5h1M929 505.5h1M963 505.5h1M997 505.5h1M1031 505.5h1M1065 505.5h1M1099 505.5h1M1133 505.5h1M1167 505.5h1M1201 505.5h1M1235 505.5h1M1269 505.5h1M1303 505.5h1M1337 505.5h1M1371 505.5h1M1405 505.5h1M1439 505.5h1M1472 505.5h1M1506 505.5h1M1540 505.5h1M1574 505.5h1M1608 505.5h1M1642 505.5h1M1676 505.5h1M13 509.5h1M183 509.5h1M352 509.5h1M522 509.5h1M692 509.5h1M1031 509.5h1M1201 509.5h1M1371 509.5h1M1540 509.5h1M13 513.5h1M183 513.5h1M352 513.5h1M522 513.5h1M692 513.5h1M1031 513.5h1M1201 513.5h1M1371 513.5h1M1540 513.5h1M13 518.5h1M183 518.5h1M352 518.5h1M522 518.5h1M692 518.5h1M1031 518.5h1M1201 518.5h1M1371 518.5h1M1540 518.5h1M13 522.5h1M183 522.5h1M352 522.5h1M522 522.5h1M692 522.5h1M1031 522.5h1M1201 522.5h1M1371 522.5h1M1540 522.5h1M13 526.5h1M183 526.5h1M352 526.5h1M522 526.5h1M692 526.5h1M1031 526.5h1M1201 526.5h1M1371 526.5h1M1540 526.5h1M13 531.5h1M183 531.5h1M352 531.5h1M522 531.5h1M692 531.5h1M1031 531.5h1M1201 531.5h1M1371 531.5h1M1540 531.5h1M13 535.5h1M183 535.5h1M352 535.5h1M522 535.5h1M692 535.5h1M1031 535.5h1M1201 535.5h1M1371 535.5h1M1540 535.5h1M13 540.5h1M183 540.5h1M352 540.5h1M522 540.5h1M692 540.5h1M1031 540.5h1M1201 540.5h1M1371 540.5h1M1540 540.5h1M13 545.5h1M47 545.5h1M81 545.5h1M115 545.5h1M149 545.5h1M183 545.5h1M217 545.5h1M251 545.5h1M285 545.5h1M319 545.5h1M352 545.5h1M386 545.5h1M420 545.5h1M454 545.5h1M488 545.5h1M522 545.5h1M556 545.5h1M590 545.5h1M624 545.5h1M658 545.5h1M692 545.5h1M726 545.5h1M760 545.5h1M794 545.5h1M828 545.5h1M862 545.5h1M895 545.5h1M929 545.5h1M963 545.5h1M997 545.5h1M1031 545.5h1M1065 545.5h1M1099 545.5h1M1133 545.5h1M1167 545.5h1M1201 545.5h1M1235 545.5h1M1269 545.5h1M1303 545.5h1M1337 545.5h1M1371 545.5h1M1405 545.5h1M1439 545.5h1M1472 545.5h1M1506 545.5h1M1540 545.5h1M1574 545.5h1M1608 545.5h1M1642 545.5h1M1676 545.5h1M13 549.5h1M183 549.5h1M352 549.5h1M522 549.5h1M692 549.5h1M1031 549.5h1M1201 549.5h1M1371 549.5h1M1540 549.5h1M13 554.5h1M183 554.5h1M352 554.5h1M522 554.5h1M692 554.5h1M1031 554.5h1M1201 554.5h1M1371 554.5h1M1540 554.5h1M13 559.5h1M183 559.5h1M352 559.5h1M522 559.5h1M692 559.5h1M1031 559.5h1M1201 559.5h1M1371 559.5h1M1540 559.5h1M13 563.5h1M183 563.5h1M352 563.5h1M522 563.5h1M692 563.5h1M1031 563.5h1M1201 563.5h1M1371 563.5h1M1540 563.5h1M13 568.5h1M47 568.5h1M81 568.5h1M115 568.5h1M149 568.5h1M183 568.5h1M217 568.5h1M251 568.5h1M285 568.5h1M319 568.5h1M352 568.5h1M386 568.5h1M420 568.5h1M454 568.5h1M488 568.5h1M522 568.5h1M556 568.5h1M590 568.5h1M624 568.5h1M658 568.5h1M692 568.5h1M726 568.5h1M760 568.5h1M794 568.5h1M828 568.5h1M862 568.5h1M895 568.5h1M929 568.5h1M963 568.5h1M997 568.5h1M1031 568.5h1M1065 568.5h1M1099 568.5h1M1133 568.5h1M1167 568.5h1M1201 568.5h1M1235 568.5h1M1269 568.5h1M1303 568.5h1M1337 568.5h1M1371 568.5h1M1405 568.5h1M1439 568.5h1M1472 568.5h1M1506 568.5h1M1540 568.5h1M1574 568.5h1M1608 568.5h1M1642 568.5h1M1676 568.5h1M13 573.5h1M183 573.5h1M352 573.5h1M522 573.5h1M692 573.5h1M1031 573.5h1M1201 573.5h1M1371 573.5h1M1540 573.5h1M13 578.5h1M183 578.5h1M352 578.5h1M522 578.5h1M692 578.5h1M1031 578.5h1M1201 578.5h1M1371 578.5h1M1540 578.5h1M13 582.5h1M183 582.5h1M352 582.5h1M522 582.5h1M692 582.5h1M1031 582.5h1M1201 582.5h1M1371 582.5h1M1540 582.5h1M13 587.5h1M183 587.5h1M352 587.5h1M522 587.5h1M692 587.5h1M1031 587.5h1M1201 587.5h1M1371 587.5h1M1540 587.5h1M13 592.5h1M47 592.5h1M81 592.5h1M115 592.5h1M149 592.5h1M183 592.5h1M217 592.5h1M251 592.5h1M285 592.5h1M319 592.5h1M352 592.5h1M386 592.5h1M420 592.5h1M454 592.5h1M488 592.5h1M522 592.5h1M556 592.5h1M590 592.5h1M624 592.5h1M658 592.5h1M692 592.5h1M726 592.5h1M760 592.5h1M794 592.5h1M828 592.5h1M862 592.5h1M895 592.5h1M929 592.5h1M963 592.5h1M997 592.5h1M1031 592.5h1M1065 592.5h1M1099 592.5h1M1133 592.5h1M1167 592.5h1M1201 592.5h1M1235 592.5h1M1269 592.5h1M1303 592.5h1M1337 592.5h1M1371 592.5h1M1405 592.5h1M1439 592.5h1M1472 592.5h1M1506 592.5h1M1540 592.5h1M1574 592.5h1M1608 592.5h1M1642 592.5h1M1676 592.5h1M13 596.5h1M183 596.5h1M352 596.5h1M522 596.5h1M692 596.5h1M1031 596.5h1M1201 596.5h1M1371 596.5h1M1540 596.5h1M13 601.5h1M183 601.5h1M352 601.5h1M522 601.5h1M692 601.5h1M1031 601.5h1M1201 601.5h1M1371 601.5h1M1540 601.5h1M13 606.5h1M183 606.5h1M352 606.5h1M522 606.5h1M692 606.5h1M1031 606.5h1M1201 606.5h1M1371 606.5h1M1540 606.5h1M13 610.5h1M183 610.5h1M352 610.5h1M522 610.5h1M692 610.5h1M1031 610.5h1M1201 610.5h1M1371 610.5h1M1540 610.5h1M13 615.5h1M47 615.5h1M81 615.5h1M115 615.5h1M149 615.5h1M183 615.5h1M217 615.5h1M251 615.5h1M285 615.5h1M319 615.5h1M352 615.5h1M386 615.5h1M420 615.5h1M454 615.5h1M488 615.5h1M522 615.5h1M556 615.5h1M590 615.5h1M624 615.5h1M658 615.5h1M692 615.5h1M726 615.5h1M760 615.5h1M794 615.5h1M828 615.5h1M862 615.5h1M895 615.5h1M929 615.5h1M963 615.5h1M997 615.5h1M1031 615.5h1M1065 615.5h1M1099 615.5h1M1133 615.5h1M1167 615.5h1M1201 615.5h1M1235 615.5h1M1269 615.5h1M1303 615.5h1M1337 615.5h1M1371 615.5h1M1405 615.5h1M1439 615.5h1M1472 615.5h1M1506 615.5h1M1540 615.5h1M1574 615.5h1M1608 615.5h1M1642 615.5h1M1676 615.5h1M13 620.5h1M183 620.5h1M352 620.5h1M522 620.5h1M692 620.5h1M1031 620.5h1M1201 620.5h1M1371 620.5h1M1540 620.5h1M13 625.5h1M183 625.5h1M352 625.5h1M522 625.5h1M692 625.5h1M1031 625.5h1M1201 625.5h1M1371 625.5h1M1540 625.5h1M13 629.5h1M183 629.5h1M352 629.5h1M522 629.5h1M692 629.5h1M1031 629.5h1M1201 629.5h1M1371 629.5h1M1540 629.5h1M13 634.5h1M183 634.5h1M352 634.5h1M522 634.5h1M692 634.5h1M1031 634.5h1M1201 634.5h1M1371 634.5h1M1540 634.5h1M13 639.5h1M47 639.5h1M81 639.5h1M115 639.5h1M149 639.5h1M183 639.5h1M217 639.5h1M251 639.5h1M285 639.5h1M319 639.5h1M352 639.5h1M386 639.5h1M420 639.5h1M454 639.5h1M488 639.5h1M522 639.5h1M556 639.5h1M590 639.5h1M624 639.5h1M658 639.5h1M692 639.5h1M726 639.5h1M760 639.5h1M794 639.5h1M828 639.5h1M862 639.5h1M895 639.5h1M929 639.5h1M963 639.5h1M997 639.5h1M1031 639.5h1M1065 639.5h1M1099 639.5h1M1133 639.5h1M1167 639.5h1M1201 639.5h1M1235 639.5h1M1269 639.5h1M1303 639.5h1M1337 639.5h1M1371 639.5h1M1405 639.5h1M1439 639.5h1M1472 639.5h1M1506 639.5h1M1540 639.5h1M1574 639.5h1M1608 639.5h1M1642 639.5h1M1676 639.5h1M13 643.5h1M183 643.5h1M352 643.5h1M522 643.5h1M692 643.5h1M1031 643.5h1M1201 643.5h1M1371 643.5h1M1540 643.5h1M13 648.5h1M183 648.5h1M352 648.5h1M522 648.5h1M692 648.5h1M1031 648.5h1M1201 648.5h1M1371 648.5h1M1540 648.5h1M13 653.5h1M183 653.5h1M352 653.5h1M522 653.5h1M692 653.5h1M1031 653.5h1M1201 653.5h1M1371 653.5h1M1540 653.5h1M13 657.5h1M183 657.5h1M352 657.5h1M522 657.5h1M692 657.5h1M1031 657.5h1M1201 657.5h1M1371 657.5h1M1540 657.5h1M13 662.5h1M47 662.5h1M81 662.5h1M115 662.5h1M149 662.5h1M183 662.5h1M217 662.5h1M251 662.5h1M285 662.5h1M319 662.5h1M352 662.5h1M386 662.5h1M420 662.5h1M454 662.5h1M488 662.5h1M522 662.5h1M556 662.5h1M590 662.5h1M624 662.5h1M658 662.5h1M692 662.5h1M726 662.5h1M760 662.5h1M794 662.5h1M828 662.5h1M862 662.5h1M895 662.5h1M929 662.5h1M963 662.5h1M997 662.5h1M1031 662.5h1M1065 662.5h1M1099 662.5h1M1133 662.5h1M1167 662.5h1M1201 662.5h1M1235 662.5h1M1269 662.5h1M1303 662.5h1M1337 662.5h1M1371 662.5h1M1405 662.5h1M1439 662.5h1M1472 662.5h1M1506 662.5h1M1540 662.5h1M1574 662.5h1M1608 662.5h1M1642 662.5h1M1676 662.5h1M13 667.5h1M183 667.5h1M352 667.5h1M522 667.5h1M692 667.5h1M1031 667.5h1M1201 667.5h1M1371 667.5h1M1540 667.5h1M13 672.5h1M183 672.5h1M352 672.5h1M522 672.5h1M692 672.5h1M1031 672.5h1M1201 672.5h1M1371 672.5h1M1540 672.5h1M13 676.5h1M183 676.5h1M352 676.5h1M522 676.5h1M692 676.5h1M1031 676.5h1M1201 676.5h1M1371 676.5h1M1540 676.5h1M13 681.5h1M183 681.5h1M352 681.5h1M522 681.5h1M692 681.5h1M1031 681.5h1M1201 681.5h1M1371 681.5h1M1540 681.5h1M13 686.5h1M47 686.5h1M81 686.5h1M115 686.5h1M149 686.5h1M183 686.5h1M217 686.5h1M251 686.5h1M285 686.5h1M319 686.5h1M352 686.5h1M386 686.5h1M420 686.5h1M454 686.5h1M488 686.5h1M522 686.5h1M556 686.5h1M590 686.5h1M624 686.5h1M658 686.5h1M692 686.5h1M726 686.5h1M760 686.5h1M794 686.5h1M828 686.5h1M862 686.5h1M895 686.5h1M929 686.5h1M963 686.5h1M997 686.5h1M1031 686.5h1M1065 686.5h1M1099 686.5h1M1133 686.5h1M1167 686.5h1M1201 686.5h1M1235 686.5h1M1269 686.5h1M1303 686.5h1M1337 686.5h1M1371 686.5h1M1405 686.5h1M1439 686.5h1M1472 686.5h1M1506 686.5h1M1540 686.5h1M1574 686.5h1M1608 686.5h1M1642 686.5h1M1676 686.5h1M13 690.5h1M183 690.5h1M352 690.5h1M522 690.5h1M692 690.5h1M1031 690.5h1M1201 690.5h1M1371 690.5h1M1540 690.5h1M13 695.5h1M183 695.5h1M352 695.5h1M522 695.5h1M692 695.5h1M1031 695.5h1M1201 695.5h1M1371 695.5h1M1540 695.5h1M13 700.5h1M183 700.5h1M352 700.5h1M522 700.5h1M692 700.5h1M1031 700.5h1M1201 700.5h1M1371 700.5h1M1540 700.5h1M13 704.5h1M183 704.5h1M352 704.5h1M522 704.5h1M692 704.5h1M1031 704.5h1M1201 704.5h1M1371 704.5h1M1540 704.5h1M13 709.5h1M47 709.5h1M81 709.5h1M115 709.5h1M149 709.5h1M183 709.5h1M217 709.5h1M251 709.5h1M285 709.5h1M319 709.5h1M352 709.5h1M386 709.5h1M420 709.5h1M454 709.5h1M488 709.5h1M522 709.5h1M556 709.5h1M590 709.5h1M624 709.5h1M658 709.5h1M692 709.5h1M726 709.5h1M760 709.5h1M794 709.5h1M828 709.5h1M862 709.5h1M895 709.5h1M929 709.5h1M963 709.5h1M997 709.5h1M1031 709.5h1M1065 709.5h1M1099 709.5h1M1133 709.5h1M1167 709.5h1M1201 709.5h1M1235 709.5h1M1269 709.5h1M1303 709.5h1M1337 709.5h1M1371 709.5h1M1405 709.5h1M1439 709.5h1M1472 709.5h1M1506 709.5h1M1540 709.5h1M1574 709.5h1M1608 709.5h1M1642 709.5h1M1676 709.5h1M13 714.5h1M183 714.5h1M352 714.5h1M522 714.5h1M692 714.5h1M1031 714.5h1M1201 714.5h1M1371 714.5h1M1540 714.5h1M13 719.5h1M183 719.5h1M352 719.5h1M522 719.5h1M692 719.5h1M1031 719.5h1M1201 719.5h1M1371 719.5h1M1540 719.5h1M13 723.5h1M183 723.5h1M352 723.5h1M522 723.5h1M692 723.5h1M1031 723.5h1M1201 723.5h1M1371 723.5h1M1540 723.5h1M13 728.5h1M183 728.5h1M352 728.5h1M522 728.5h1M692 728.5h1M1031 728.5h1M1201 728.5h1M1371 728.5h1M1540 728.5h1M13 733.5h1M47 733.5h1M81 733.5h1M115 733.5h1M149 733.5h1M183 733.5h1M217 733.5h1M251 733.5h1M285 733.5h1M319 733.5h1M352 733.5h1M386 733.5h1M420 733.5h1M454 733.5h1M488 733.5h1M522 733.5h1M556 733.5h1M590 733.5h1M624 733.5h1M658 733.5h1M692 733.5h1M726 733.5h1M760 733.5h1M794 733.5h1M828 733.5h1M862 733.5h1M895 733.5h1M929 733.5h1M963 733.5h1M997 733.5h1M1031 733.5h1M1065 733.5h1M1099 733.5h1M1133 733.5h1M1167 733.5h1M1201 733.5h1M1235 733.5h1M1269 733.5h1M1303 733.5h1M1337 733.5h1M1371 733.5h1M1405 733.5h1M1439 733.5h1M1472 733.5h1M1506 733.5h1M1540 733.5h1M1574 733.5h1M1608 733.5h1M1642 733.5h1M1676 733.5h1M13 737.5h1M183 737.5h1M352 737.5h1M522 737.5h1M692 737.5h1M1031 737.5h1M1201 737.5h1M1371 737.5h1M1540 737.5h1M13 742.5h1M183 742.5h1M352 742.5h1M522 742.5h1M692 742.5h1M1031 742.5h1M1201 742.5h1M1371 742.5h1M1540 742.5h1M13 747.5h1M183 747.5h1M352 747.5h1M522 747.5h1M692 747.5h1M1031 747.5h1M1201 747.5h1M1371 747.5h1M1540 747.5h1M13 751.5h1M183 751.5h1M352 751.5h1M522 751.5h1M692 751.5h1M1031 751.5h1M1201 751.5h1M1371 751.5h1M1540 751.5h1M13 756.5h1M47 756.5h1M81 756.5h1M115 756.5h1M149 756.5h1M183 756.5h1M217 756.5h1M251 756.5h1M285 756.5h1M319 756.5h1M352 756.5h1M386 756.5h1M420 756.5h1M454 756.5h1M488 756.5h1M522 756.5h1M556 756.5h1M590 756.5h1M624 756.5h1M658 756.5h1M692 756.5h1M726 756.5h1M760 756.5h1M794 756.5h1M828 756.5h1M862 756.5h1M895 756.5h1M929 756.5h1M963 756.5h1M997 756.5h1M1031 756.5h1M1065 756.5h1M1099 756.5h1M1133 756.5h1M1167 756.5h1M1201 756.5h1M1235 756.5h1M1269 756.5h1M1303 756.5h1M1337 756.5h1M1371 756.5h1M1405 756.5h1M1439 756.5h1M1472 756.5h1M1506 756.5h1M1540 756.5h1M1574 756.5h1M1608 756.5h1M1642 756.5h1M1676 756.5h1M13 762.5h1M183 762.5h1M352 762.5h1M522 762.5h1M692 762.5h1M1031 762.5h1M1201 762.5h1M1371 762.5h1M1540 762.5h1M13 766.5h1M47 766.5h1M81 766.5h1M115 766.5h1M149 766.5h1M183 766.5h1M217 766.5h1M251 766.5h1M285 766.5h1M319 766.5h1M352 766.5h1M386 766.5h1M420 766.5h1M454 766.5h1M488 766.5h1M522 766.5h1M556 766.5h1M590 766.5h1M624 766.5h1M658 766.5h1M692 766.5h1M726 766.5h1M760 766.5h1M794 766.5h1M828 766.5h1M862 766.5h1M895 766.5h1M929 766.5h1M963 766.5h1M997 766.5h1M1031 766.5h1M1065 766.5h1M1099 766.5h1M1133 766.5h1M1167 766.5h1M1201 766.5h1M1235 766.5h1M1269 766.5h1M1303 766.5h1M1337 766.5h1M1371 766.5h1M1405 766.5h1M1439 766.5h1M1472 766.5h1M1506 766.5h1M1540 766.5h1M1574 766.5h1M1608 766.5h1M1642 766.5h1M1676 766.5h1M13 770.5h1M183 770.5h1M352 770.5h1M522 770.5h1M692 770.5h1M1031 770.5h1M1201 770.5h1M1371 770.5h1M1540 770.5h1M13 774.5h1M183 774.5h1M352 774.5h1M522 774.5h1M692 774.5h1M1031 774.5h1M1201 774.5h1M1371 774.5h1M1540 774.5h1M13 778.5h1M183 778.5h1M352 778.5h1M522 778.5h1M692 778.5h1M1031 778.5h1M1201 778.5h1M1371 778.5h1M1540 778.5h1M13 782.5h1M183 782.5h1M352 782.5h1M522 782.5h1M692 782.5h1M1031 782.5h1M1201 782.5h1M1371 782.5h1M1540 782.5h1M13 786.5h1M47 786.5h1M81 786.5h1M115 786.5h1M149 786.5h1M183 786.5h1M217 786.5h1M251 786.5h1M285 786.5h1M319 786.5h1M352 786.5h1M386 786.5h1M420 786.5h1M454 786.5h1M488 786.5h1M522 786.5h1M556 786.5h1M590 786.5h1M624 786.5h1M658 786.5h1M692 786.5h1M726 786.5h1M760 786.5h1M794 786.5h1M828 786.5h1M862 786.5h1M895 786.5h1M929 786.5h1M963 786.5h1M997 786.5h1M1031 786.5h1M1065 786.5h1M1099 786.5h1M1133 786.5h1M1167 786.5h1M1201 786.5h1M1235 786.5h1M1269 786.5h1M1303 786.5h1M1337 786.5h1M1371 786.5h1M1405 786.5h1M1439 786.5h1M1472 786.5h1M1506 786.5h1M1540 786.5h1M1574 786.5h1M1608 786.5h1M1642 786.5h1M1676 786.5h1M13 790.5h1M183 790.5h1M352 790.5h1M522 790.5h1M692 790.5h1M1031 790.5h1M1201 790.5h1M1371 790.5h1M1540 790.5h1M13 794.5h1M183 794.5h1M352 794.5h1M522 794.5h1M692 794.5h1M1031 794.5h1M1201 794.5h1M1371 794.5h1M1540 794.5h1M13 799.5h1M183 799.5h1M352 799.5h1M522 799.5h1M692 799.5h1M1031 799.5h1M1201 799.5h1M1371 799.5h1M1540 799.5h1M13 803.5h1M183 803.5h1M352 803.5h1M522 803.5h1M692 803.5h1M1031 803.5h1M1201 803.5h1M1371 803.5h1M1540 803.5h1M13 807.5h1M47 807.5h1M81 807.5h1M115 807.5h1M149 807.5h1M183 807.5h1M217 807.5h1M251 807.5h1M285 807.5h1M319 807.5h1M352 807.5h1M386 807.5h1M420 807.5h1M454 807.5h1M488 807.5h1M522 807.5h1M556 807.5h1M590 807.5h1M624 807.5h1M658 807.5h1M692 807.5h1M726 807.5h1M760 807.5h1M794 807.5h1M828 807.5h1M862 807.5h1M895 807.5h1M929 807.5h1M963 807.5h1M997 807.5h1M1031 807.5h1M1065 807.5h1M1099 807.5h1M1133 807.5h1M1167 807.5h1M1201 807.5h1M1235 807.5h1M1269 807.5h1M1303 807.5h1M1337 807.5h1M1371 807.5h1M1405 807.5h1M1439 807.5h1M1472 807.5h1M1506 807.5h1M1540 807.5h1M1574 807.5h1M1608 807.5h1M1642 807.5h1M1676 807.5h1M13 811.5h1M183 811.5h1M352 811.5h1M522 811.5h1M692 811.5h1M1031 811.5h1M1201 811.5h1M1371 811.5h1M1540 811.5h1M13 815.5h1M183 815.5h1M352 815.5h1M522 815.5h1M692 815.5h1M1031 815.5h1M1201 815.5h1M1371 815.5h1M1540 815.5h1M13 819.5h1M183 819.5h1M352 819.5h1M522 819.5h1M692 819.5h1M1031 819.5h1M1201 819.5h1M1371 819.5h1M1540 819.5h1M13 823.5h1M183 823.5h1M352 823.5h1M522 823.5h1M692 823.5h1M1031 823.5h1M1201 823.5h1M1371 823.5h1M1540 823.5h1M13 827.5h1M47 827.5h1M81 827.5h1M115 827.5h1M149 827.5h1M183 827.5h1M217 827.5h1M251 827.5h1M285 827.5h1M319 827.5h1M352 827.5h1M386 827.5h1M420 827.5h1M454 827.5h1M488 827.5h1M522 827.5h1M556 827.5h1M590 827.5h1M624 827.5h1M658 827.5h1M692 827.5h1M726 827.5h1M760 827.5h1M794 827.5h1M828 827.5h1M862 827.5h1M895 827.5h1M929 827.5h1M963 827.5h1M997 827.5h1M1031 827.5h1M1065 827.5h1M1099 827.5h1M1133 827.5h1M1167 827.5h1M1201 827.5h1M1235 827.5h1M1269 827.5h1M1303 827.5h1M1337 827.5h1M1371 827.5h1M1405 827.5h1M1439 827.5h1M1472 827.5h1M1506 827.5h1M1540 827.5h1M1574 827.5h1M1608 827.5h1M1642 827.5h1M1676 827.5h1M13 831.5h1M183 831.5h1M352 831.5h1M522 831.5h1M692 831.5h1M1031 831.5h1M1201 831.5h1M1371 831.5h1M1540 831.5h1M13 836.5h1M183 836.5h1M352 836.5h1M522 836.5h1M692 836.5h1M1031 836.5h1M1201 836.5h1M1371 836.5h1M1540 836.5h1M13 840.5h1M183 840.5h1M352 840.5h1M522 840.5h1M692 840.5h1M1031 840.5h1M1201 840.5h1M1371 840.5h1M1540 840.5h1M13 844.5h1M183 844.5h1M352 844.5h1M522 844.5h1M692 844.5h1M1031 844.5h1M1201 844.5h1M1371 844.5h1M1540 844.5h1M13 848.5h1M47 848.5h1M81 848.5h1M115 848.5h1M149 848.5h1M183 848.5h1M217 848.5h1M251 848.5h1M285 848.5h1M319 848.5h1M352 848.5h1M386 848.5h1M420 848.5h1M454 848.5h1M488 848.5h1M522 848.5h1M556 848.5h1M590 848.5h1M624 848.5h1M658 848.5h1M692 848.5h1M726 848.5h1M760 848.5h1M794 848.5h1M828 848.5h1M862 848.5h1M895 848.5h1M929 848.5h1M963 848.5h1M997 848.5h1M1031 848.5h1M1065 848.5h1M1099 848.5h1M1133 848.5h1M1167 848.5h1M1201 848.5h1M1235 848.5h1M1269 848.5h1M1303 848.5h1M1337 848.5h1M1371 848.5h1M1405 848.5h1M1439 848.5h1M1472 848.5h1M1506 848.5h1M1540 848.5h1M1574 848.5h1M1608 848.5h1M1642 848.5h1M1676 848.5h1M13 852.5h1M183 852.5h1M352 852.5h1M522 852.5h1M692 852.5h1M1031 852.5h1M1201 852.5h1M1371 852.5h1M1540 852.5h1M13 856.5h1M183 856.5h1M352 856.5h1M522 856.5h1M692 856.5h1M1031 856.5h1M1201 856.5h1M1371 856.5h1M1540 856.5h1M13 860.5h1M183 860.5h1M352 860.5h1M522 860.5h1M692 860.5h1M1031 860.5h1M1201 860.5h1M1371 860.5h1M1540 860.5h1M13 864.5h1M183 864.5h1M352 864.5h1M522 864.5h1M692 864.5h1M1031 864.5h1M1201 864.5h1M1371 864.5h1M1540 864.5h1M13 868.5h1M47 868.5h1M81 868.5h1M115 868.5h1M149 868.5h1M183 868.5h1M217 868.5h1M251 868.5h1M285 868.5h1M319 868.5h1M352 868.5h1M386 868.5h1M420 868.5h1M454 868.5h1M488 868.5h1M522 868.5h1M556 868.5h1M590 868.5h1M624 868.5h1M658 868.5h1M692 868.5h1M726 868.5h1M760 868.5h1M794 868.5h1M828 868.5h1M862 868.5h1M895 868.5h1M929 868.5h1M963 868.5h1M997 868.5h1M1031 868.5h1M1065 868.5h1M1099 868.5h1M1133 868.5h1M1167 868.5h1M1201 868.5h1M1235 868.5h1M1269 868.5h1M1303 868.5h1M1337 868.5h1M1371 868.5h1M1405 868.5h1M1439 868.5h1M1472 868.5h1M1506 868.5h1M1540 868.5h1M1574 868.5h1M1608 868.5h1M1642 868.5h1M1676 868.5h1M13 872.5h1M183 872.5h1M352 872.5h1M522 872.5h1M692 872.5h1M1031 872.5h1M1201 872.5h1M1371 872.5h1M1540 872.5h1M13 877.5h1M183 877.5h1M352 877.5h1M522 877.5h1M692 877.5h1M1031 877.5h1M1201 877.5h1M1371 877.5h1M1540 877.5h1M13 881.5h1M183 881.5h1M352 881.5h1M522 881.5h1M692 881.5h1M1031 881.5h1M1201 881.5h1M1371 881.5h1M1540 881.5h1M13 885.5h1M183 885.5h1M352 885.5h1M522 885.5h1M692 885.5h1M1031 885.5h1M1201 885.5h1M1371 885.5h1M1540 885.5h1M13 889.5h1M47 889.5h1M81 889.5h1M115 889.5h1M149 889.5h1M183 889.5h1M217 889.5h1M251 889.5h1M285 889.5h1M319 889.5h1M352 889.5h1M386 889.5h1M420 889.5h1M454 889.5h1M488 889.5h1M522 889.5h1M556 889.5h1M590 889.5h1M624 889.5h1M658 889.5h1M692 889.5h1M726 889.5h1M760 889.5h1M794 889.5h1M828 889.5h1M862 889.5h1M895 889.5h1M929 889.5h1M963 889.5h1M997 889.5h1M1031 889.5h1M1065 889.5h1M1099 889.5h1M1133 889.5h1M1167 889.5h1M1201 889.5h1M1235 889.5h1M1269 889.5h1M1303 889.5h1M1337 889.5h1M1371 889.5h1M1405 889.5h1M1439 889.5h1M1472 889.5h1M1506 889.5h1M1540 889.5h1M1574 889.5h1M1608 889.5h1M1642 889.5h1M1676 889.5h1M13 893.5h1M183 893.5h1M352 893.5h1M522 893.5h1M692 893.5h1M1031 893.5h1M1201 893.5h1M1371 893.5h1M1540 893.5h1M13 897.5h1M183 897.5h1M352 897.5h1M522 897.5h1M692 897.5h1M1031 897.5h1M1201 897.5h1M1371 897.5h1M1540 897.5h1M13 901.5h1M183 901.5h1M352 901.5h1M522 901.5h1M692 901.5h1M1031 901.5h1M1201 901.5h1M1371 901.5h1M1540 901.5h1M13 905.5h1M183 905.5h1M352 905.5h1M522 905.5h1M692 905.5h1M1031 905.5h1M1201 905.5h1M1371 905.5h1M1540 905.5h1M13 909.5h1M47 909.5h1M81 909.5h1M115 909.5h1M149 909.5h1M183 909.5h1M217 909.5h1M251 909.5h1M285 909.5h1M319 909.5h1M352 909.5h1M386 909.5h1M420 909.5h1M454 909.5h1M488 909.5h1M522 909.5h1M556 909.5h1M590 909.5h1M624 909.5h1M658 909.5h1M692 909.5h1M726 909.5h1M760 909.5h1M794 909.5h1M828 909.5h1M862 909.5h1M895 909.5h1M929 909.5h1M963 909.5h1M997 909.5h1M1031 909.5h1M1065 909.5h1M1099 909.5h1M1133 909.5h1M1167 909.5h1M1201 909.5h1M1235 909.5h1M1269 909.5h1M1303 909.5h1M1337 909.5h1M1371 909.5h1M1405 909.5h1M1439 909.5h1M1472 909.5h1M1506 909.5h1M1540 909.5h1M1574 909.5h1M1608 909.5h1M1642 909.5h1M1676 909.5h1M13 914.5h1M183 914.5h1M352 914.5h1M522 914.5h1M692 914.5h1M1031 914.5h1M1201 914.5h1M1371 914.5h1M1540 914.5h1M13 918.5h1M183 918.5h1M352 918.5h1M522 918.5h1M692 918.5h1M1031 918.5h1M1201 918.5h1M1371 918.5h1M1540 918.5h1M13 922.5h1M183 922.5h1M352 922.5h1M522 922.5h1M692 922.5h1M1031 922.5h1M1201 922.5h1M1371 922.5h1M1540 922.5h1M13 926.5h1M183 926.5h1M352 926.5h1M522 926.5h1M692 926.5h1M1031 926.5h1M1201 926.5h1M1371 926.5h1M1540 926.5h1M13 930.5h1M47 930.5h1M81 930.5h1M115 930.5h1M149 930.5h1M183 930.5h1M217 930.5h1M251 930.5h1M285 930.5h1M319 930.5h1M352 930.5h1M386 930.5h1M420 930.5h1M454 930.5h1M488 930.5h1M522 930.5h1M556 930.5h1M590 930.5h1M624 930.5h1M658 930.5h1M692 930.5h1M726 930.5h1M760 930.5h1M794 930.5h1M828 930.5h1M862 930.5h1M895 930.5h1M929 930.5h1M963 930.5h1M997 930.5h1M1031 930.5h1M1065 930.5h1M1099 930.5h1M1133 930.5h1M1167 930.5h1M1201 930.5h1M1235 930.5h1M1269 930.5h1M1303 930.5h1M1337 930.5h1M1371 930.5h1M1405 930.5h1M1439 930.5h1M1472 930.5h1M1506 930.5h1M1540 930.5h1M1574 930.5h1M1608 930.5h1M1642 930.5h1M1676 930.5h1M13 934.5h1M183 934.5h1M352 934.5h1M522 934.5h1M692 934.5h1M1031 934.5h1M1201 934.5h1M1371 934.5h1M1540 934.5h1M13 938.5h1M183 938.5h1M352 938.5h1M522 938.5h1M692 938.5h1M1031 938.5h1M1201 938.5h1M1371 938.5h1M1540 938.5h1M13 942.5h1M183 942.5h1M352 942.5h1M522 942.5h1M692 942.5h1M1031 942.5h1M1201 942.5h1M1371 942.5h1M1540 942.5h1M13 946.5h1M183 946.5h1M352 946.5h1M522 946.5h1M692 946.5h1M1031 946.5h1M1201 946.5h1M1371 946.5h1M1540 946.5h1M13 950.5h1M47 950.5h1M81 950.5h1M115 950.5h1M149 950.5h1M183 950.5h1M217 950.5h1M251 950.5h1M285 950.5h1M319 950.5h1M352 950.5h1M386 950.5h1M420 950.5h1M454 950.5h1M488 950.5h1M522 950.5h1M556 950.5h1M590 950.5h1M624 950.5h1M658 950.5h1M692 950.5h1M726 950.5h1M760 950.5h1M794 950.5h1M828 950.5h1M862 950.5h1M895 950.5h1M929 950.5h1M963 950.5h1M997 950.5h1M1031 950.5h1M1065 950.5h1M1099 950.5h1M1133 950.5h1M1167 950.5h1M1201 950.5h1M1235 950.5h1M1269 950.5h1M1303 950.5h1M1337 950.5h1M1371 950.5h1M1405 950.5h1M1439 950.5h1M1472 950.5h1M1506 950.5h1M1540 950.5h1M1574 950.5h1M1608 950.5h1M1642 950.5h1M1676 950.5h1M13 955.5h1M183 955.5h1M352 955.5h1M522 955.5h1M692 955.5h1M1031 955.5h1M1201 955.5h1M1371 955.5h1M1540 955.5h1M13 959.5h1M183 959.5h1M352 959.5h1M522 959.5h1M692 959.5h1M1031 959.5h1M1201 959.5h1M1371 959.5h1M1540 959.5h1M13 963.5h1M183 963.5h1M352 963.5h1M522 963.5h1M692 963.5h1M1031 963.5h1M1201 963.5h1M1371 963.5h1M1540 963.5h1" stroke="#b8b8b8" stroke-width="1" fill="none" shape-rendering="crispEdges"/>
<path d="M862.5 95V965" stroke="#d0d0d0" stroke-width="1" stroke-dasharray="5 5" shape-rendering="crispEdges"/>
<path d="M60 267.5H1675" stroke="#c8c8c8" stroke-width="1" stroke-dasharray="5 5" shape-rendering="crispEdges"/>
<path d="M60 483.5H1675" stroke="#c8c8c8" stroke-width="1" stroke-dasharray="5 5" shape-rendering="crispEdges"/>
<path d="M60 733.5H1675" stroke="#c8c8c8" stroke-width="1" stroke-dasharray="5 5" shape-rendering="crispEdges"/>
<path d="M60 909.5H1675" stroke="#c8c8c8" stroke-width="1" stroke-dasharray="5 5" shape-rendering="crispEdges"/>
<rect x="13" y="304" width="1697" height="2" fill="#8a8a8a"/>
<rect x="13" y="523" width="1697" height="2" fill="#8a8a8a"/>
<rect x="13" y="758" width="1697" height="2" fill="#8a8a8a"/>
<path d="M13 160.5H1710" stroke="#e6b878" stroke-width="1" stroke-dasharray="5 5" shape-rendering="crispEdges"/>
<polygon points="13,154.8 14,154.6 15,154.7 16,155.1 17,155.1 18,154.6 19,155.3 20,154.6 21,154.7 22,154.9 23,155.1 24,155.1 25,155.1 26,154.9 27,154.9 28,154.9 29,154.5 30,154.7 31,154.8 32,154.5 33,155.1 34,155.2 35,154.8 36,155.3 37,155.3 38,154.9 39,154.9 40,154.6 41,154.8 42,154.9 43,154.9 44,155.1 45,155.3 46,155.1 47,154.7 48,155.1 49,155 50,155.3 51,154.6 52,155.2 53,155.1 54,154.6 55,154.9 56,154.6 57,154.8 58,154.7 59,155.2 60,154.9 61,154.9 62,154.6 63,155 64,154.8 65,155.3 66,155 67,155 68,155.2 69,154.6 70,155 71,153 72,154.8 73,154.8 74,154.8 75,153.3 76,155.2 77,154.9 78,153.6 79,155 80,155.2 81,154.5 82,155.1 83,154.8 84,155.1 85,154.6 86,154.8 87,155.2 88,154.6 89,154.5 90,154.6 91,154.8 92,155.2 93,155.1 94,154.6 95,154.9 96,155.2 97,154.6 98,154.8 99,154.8 100,155 101,155 102,155.1 103,155.3 104,154.6 105,154.9 106,154.9 107,155 108,154.7 109,153.8 110,155 111,155.3 112,155.2 113,154.5 114,154.8 115,155 116,154.9 117,154.6 118,155 119,154.8 120,154.8 121,155 122,154.9 123,154.7 124,154.6 125,155.2 126,154.6 127,155.3 128,154.7 129,154.7 130,155.2 131,155 132,154.6 133,155.3 134,154.8 135,154.7 136,154.9 137,154.7 138,155.1 139,155.1 140,155 141,155.2 142,155 143,154.5 144,154.8 145,155 146,155.1 147,154.5 148,154.9 149,155.7 150,156.1 151,154.6 152,155.8 153,155.9 154,156 155,156.2 156,155.8 157,156.2 158,155.8 159,156.4 160,156.2 161,156.1 162,155.7 163,156.3 164,155.9 165,156 166,155.9 167,156 168,155.7 169,156.2 170,156.2 171,156.3 172,156.5 173,156.3 174,155.8 175,155.8 176,154.9 177,156 178,156.1 179,156 180,156 181,156.3 182,155.7 183,156.1 184,154 185,154 186,154.4 187,154.5 188,154.2 189,153.9 190,153.8 191,153.9 192,155.2 193,154.6 194,154.7 195,153.1 196,154.9 197,154.6 198,155.3 199,155.3 200,155.3 201,155.1 202,155.1 203,155.1 204,154.8 205,155.3 206,154.8 207,155.2 208,154.8 209,155.3 210,155.1 211,154.5 212,154.9 213,154.7 214,154.8 215,154.8 216,155.1 217,154.8 218,155.3 219,154.7 220,154.5 221,154.6 222,155.3 223,155 224,155 225,155.2 226,154.8 227,154.7 228,155 229,154.6 230,154.7 231,155.2 232,154.7 233,154.6 234,155.1 235,154.8 236,154.8 237,154.8 238,155.2 239,154.8 240,154.8 241,153.1 242,154.7 243,155 244,154.7 245,154.6 246,154.6 247,155.2 248,155.3 249,154.8 250,155.1 251,154.8 252,154.5 253,155 254,155.1 255,154.9 256,154.8 257,155.2 258,155 259,155.2 260,154.8 261,154.6 262,155 263,155 264,154.9 265,155.1 266,155.1 267,155 268,154.9 269,155.2 270,154.7 271,154.8 272,155.1 273,155.2 274,154.7 275,155.2 276,155.2 277,155.2 278,155.2 279,154.6 280,155.1 281,155.1 282,154.6 283,154.8 284,155.2 285,155 286,154.6 287,155 288,154.7 289,155.2 290,154.7 291,154.7 292,154.6 293,154.8 294,155 295,155.2 296,154.9 297,154.7 298,155.1 299,155.1 300,154.9 301,153.2 302,154.6 303,155.2 304,155.2 305,154.7 306,153.3 307,154.7 308,154.5 309,154.5 310,154.6 311,154.7 312,155 313,154.8 314,155.2 315,154.7 316,154.7 317,154.7 318,154.9 319,155 320,155 321,155.3 322,154.6 323,154.9 324,155 325,154.9 326,154.7 327,155 328,154.6 329,154.6 330,155 331,155.2 332,154.7 333,154.5 334,155.2 335,154.7 336,154.6 337,154.6 338,155.2 339,155.2 340,154.5 341,155.2 342,155.2 343,154.8 344,154.9 345,154.7 346,155.1 347,154.6 348,153.6 349,154.7 350,155.2 351,154.9 352,155.3 353,155 354,155.1 355,154.7 356,153.4 357,155.3 358,154.5 359,154.6 360,154.6 361,155.1 362,155 363,155.1 364,155.2 365,153.8 366,154.9 367,155.2 368,153.7 369,154.6 370,154.9 371,155.2 372,154.8 373,155.1 374,154.9 375,155.1 376,154.9 377,154.8 378,154.9 379,155 380,154.7 381,154.6 382,155.2 383,155.2 384,155.2 385,154.5 386,154.5 387,155.1 388,154.5 389,155.1 390,154.9 391,154.9 392,154.6 393,155.3 394,155 395,154.8 396,155.2 397,155.1 398,154.9 399,154.6 400,154.7 401,154.6 402,154.7 403,154.7 404,154.6 405,154.8 406,154.7 407,155.1 408,155.2 409,154.7 410,155.2 411,154.6 412,153.3 413,155 414,154.6 415,155.2 416,154.9 417,155.2 418,154.5 419,154.8 420,154.7 421,155.1 422,154.7 423,154.7 424,154.8 425,154.5 426,155 427,155 428,154.7 429,154.6 430,155 431,154.8 432,155.1 433,154.9 434,154.7 435,155.2 436,154.7 437,155.3 438,154.5 439,154.9 440,153.5 441,154.7 442,154.9 443,154.7 444,155.2 445,154.8 446,154.9 447,154.6 448,155.3 449,154.9 450,154.8 451,154.9 452,155.2 453,154.8 454,155.1 455,155.1 456,154.6 457,155.1 458,154.9 459,154.7 460,154.7 461,154.9 462,154.7 463,154.9 464,154.8 465,154.6 466,154.8 467,154.8 468,155 469,154.9 470,155 471,154.7 472,155 473,154.9 474,154.7 475,154.9 476,155 477,154.6 478,155 479,154.6 480,154.7 481,154.9 482,154.7 483,155.3 484,155 485,154.6 486,154.8 487,154.9 488,156 489,156 490,156 491,156.2 492,156.4 493,156.3 494,156.3 495,156.2 496,155.7 497,156.2 498,156.1 499,156.2 500,156 501,155.7 502,155.8 503,156.2 504,156.3 505,155.8 506,156.1 507,156 508,156.4 509,155.8 510,156.2 511,156.1 512,156.3 513,156.2 514,155.8 515,155.8 516,156.1 517,155.9 518,156.1 519,156.2 520,156.1 521,156.3 522,154.7 523,153.9 524,153.9 525,154.5 526,153.9 527,153.8 528,154.1 529,154.5 530,154 531,155.1 532,154.8 533,155 534,154.8 535,155.1 536,154.9 537,154.9 538,154.8 539,155.1 540,154.5 541,155.1 542,155.1 543,155.1 544,155.2 545,155 546,154.7 547,154.7 548,155.1 549,155.2 550,155 551,154.7 552,153.4 553,154.6 554,154.8 555,154.8 556,154.7 557,154.7 558,155 559,155.1 560,154.9 561,154.9 562,155.2 563,154.9 564,154.8 565,155.2 566,155.2 567,155.2 568,155.1 569,154.5 570,155.3 571,155.2 572,155.2 573,154.9 574,155.3 575,154.9 576,155.2 577,155.1 578,154.7 579,155.2 580,154.8 581,155 582,155 583,154.6 584,155.2 585,154.6 586,154.6 587,153.3 588,155.3 589,154.8 590,154.8 591,154.7 592,155.1 593,154.5 594,154.6 595,155.2 596,155 597,153.8 598,154.6 599,154.6 600,154.5 601,154.8 602,154.8 603,154.8 604,154.8 605,154.5 606,154.8 607,155 608,154.9 609,155.3 610,154.7 611,154.7 612,155 613,154.6 614,154.7 615,155 616,155.2 617,155.2 618,155.2 619,155.1 620,154.9 621,154.6 622,155.1 623,154.6 624,154.8 625,154.6 626,155 627,155.3 628,154.7 629,155.1 630,155.2 631,154.7 632,154.8 633,155.1 634,155.1 635,154.5 636,155.1 637,154.7 638,155.2 639,153.1 640,155.2 641,154.9 642,155.3 643,154.9 644,154.6 645,155.2 646,155.1 647,154.7 648,154.8 649,155 650,154.8 651,154.9 652,154.6 653,155.1 654,154.7 655,154.8 656,154.7 657,153.5 658,154.7 659,154.7 660,155 661,155.3 662,154.5 663,154.7 664,155.1 665,154.7 666,155.1 667,154.9 668,154.6 669,154.9 670,155.1 671,155.1 672,155.2 673,155.1 674,153.6 675,155.2 676,155.2 677,154.9 678,155.1 679,154.7 680,154.6 681,155.1 682,154.8 683,154.9 684,155.2 685,155.2 686,154.6 687,154.9 688,154.7 689,155.2 690,154.8 691,154.6 692,153.1 693,155.3 694,154.9 695,155 696,154.7 697,155.2 698,155.1 699,154.6 700,154.9 701,154.9 702,154.5 703,155 704,155.3 705,155 706,155.2 707,155.2 708,154.8 709,154.5 710,154.8 711,154.8 712,153.5 713,154.8 714,154.7 715,154.8 716,154.7 717,154.9 718,155.1 719,154.8 720,154.9 721,155.2 722,154.8 723,154.6 724,155.2 725,154.9 726,154.7 727,155 728,155.1 729,155 730,154.9 731,154.8 732,154.9 733,155.2 734,154.6 735,154.6 736,155.2 737,155.1 738,155.2 739,154.6 740,154.6 741,155.3 742,155 743,155.1 744,154.9 745,154.6 746,155.2 747,155.2 748,154.9 749,154.9 750,154.7 751,154.9 752,155.2 753,155 754,154.5 755,154.7 756,155.2 757,154.7 758,155.1 759,154.7 760,155.3 761,154.6 762,155.2 763,154.9 764,154.8 765,154.9 766,155.2 767,155.2 768,155.1 769,155.3 770,155.1 771,155.2 772,154.9 773,155 774,154.8 775,155.1 776,155.3 777,155 778,154.7 779,155.1 780,155 781,154.7 782,155 783,153.1 784,154.6 785,155.1 786,154.7 787,153.6 788,155.2 789,154.9 790,154.8 791,154.6 792,155.2 793,154.7 794,154.9 795,155.2 796,154.5 797,154.7 798,155.2 799,154.6 800,155.2 801,155.2 802,155 803,154.5 804,155.3 805,154.6 806,154.8 807,155.2 808,154.8 809,154.9 810,154.8 811,153.2 812,154.8 813,154.5 814,155.2 815,154.6 816,155 817,154.7 818,154.6 819,154.5 820,155.1 821,154.9 822,154.5 823,154.5 824,153.5 825,154.5 826,155 827,155 828,155.9 829,156.1 830,156.1 831,156.2 832,156.2 833,156.4 834,156.5 835,155.9 836,156 837,156 838,155.9 839,156.3 840,156.3 841,156.3 842,156.3 843,154.4 844,156.2 845,156.2 846,156 847,156.4 848,156.4 849,155.9 850,155.9 851,156.3 852,156 853,156.5 854,156.2 855,156 856,156.3 857,156.2 858,156 859,156 860,154.9 861,155.9 862,156.4 863,153.7 864,154.3 865,154.3 866,154.3 867,153.7 868,154.3 869,154 870,153.7 871,154.5 872,155.3 873,154.9 874,154.8 875,154.7 876,155 877,155 878,155.3 879,155.3 880,154.9 881,155.2 882,155.1 883,155 884,155.2 885,155.3 886,154.6 887,155 888,155.1 889,154.7 890,155.3 891,155.1 892,154.5 893,154.6 894,154.8 895,155.2 896,155 897,155.3 898,155.1 899,155.3 900,155.2 901,154.8 902,155.2 903,155.2 904,154.6 905,155 906,155 907,155.2 908,154.7 909,154.8 910,154.9 911,154.8 912,155.2 913,155.1 914,154.8 915,154.5 916,154.6 917,154.8 918,154.9 919,155.3 920,154.6 921,155.2 922,155.2 923,154.7 924,154.7 925,154.7 926,154.9 927,155.2 928,155.3 929,154.6 930,154.5 931,155.1 932,154.6 933,155 934,155.1 935,154.9 936,155.3 937,154.9 938,155.1 939,154.7 940,154.9 941,154.6 942,154.6 943,155 944,155.1 945,154.5 946,154.9 947,155.2 948,155.3 949,154.5 950,154.8 951,153.8 952,154.9 953,154.9 954,155 955,154.5 956,154.5 957,155.2 958,153.7 959,155 960,154.6 961,154.8 962,154.7 963,154.8 964,155.1 965,153.1 966,155.3 967,154.7 968,153.6 969,154.9 970,154.5 971,154.9 972,155.3 973,155 974,154.8 975,155.3 976,155.1 977,155.3 978,153.4 979,155 980,154.9 981,155.1 982,154.8 983,155.2 984,154.6 985,154.5 986,154.9 987,154.9 988,153.1 989,155.1 990,154.7 991,155.1 992,154.7 993,155 994,154.8 995,154.6 996,155.3 997,154.7 998,154.9 999,155 1000,155 1001,155.2 1002,155.1 1003,154.8 1004,155.2 1005,154.8 1006,154.5 1007,154.5 1008,154.6 1009,154.7 1010,155.2 1011,154.5 1012,155.1 1013,154.6 1014,154.6 1015,154.8 1016,154.9 1017,155.1 1018,154.9 1019,155.1 1020,155.2 1021,155.2 1022,154.7 1023,154.6 1024,155.2 1025,155.3 1026,155.1 1027,155.2 1028,155.1 1029,154.8 1030,155 1031,155 1032,155.1 1033,154.8 1034,155.1 1035,155 1036,154.9 1037,154.6 1038,155.1 1039,154.7 1040,155.1 1041,154.6 1042,155 1043,154.9 1044,154.6 1045,154.8 1046,155.2 1047,155.2 1048,154.5 1049,155.3 1050,155.1 1051,154.5 1052,155.3 1053,155.2 1054,155.1 1055,155.2 1056,154.9 1057,154.8 1058,155 1059,155.2 1060,154.7 1061,154.7 1062,154.9 1063,155.2 1064,154.9 1065,153.3 1066,155 1067,154.6 1068,155 1069,154.9 1070,155.2 1071,154.8 1072,154.7 1073,153.2 1074,155.1 1075,154.5 1076,154.7 1077,155 1078,155 1079,154.7 1080,155.2 1081,154.8 1082,154.7 1083,154.9 1084,154.6 1085,154.9 1086,154.9 1087,155.1 1088,154.6 1089,155 1090,154.7 1091,155 1092,154.6 1093,154.5 1094,155.3 1095,154.5 1096,154.8 1097,155.2 1098,154.9 1099,155.3 1100,154.9 1101,155.2 1102,155 1103,155.1 1104,154.8 1105,154.6 1106,154.6 1107,155 1108,154.8 1109,155.3 1110,155 1111,153 1112,155.2 1113,154.6 1114,154.8 1115,155.1 1116,154.7 1117,155.1 1118,154.6 1119,153.7 1120,155.2 1121,154.7 1122,154.9 1123,155.2 1124,154.9 1125,155.1 1126,154.9 1127,154.7 1128,154.6 1129,155.3 1130,154.8 1131,154.5 1132,154.9 1133,154.7 1134,155.2 1135,154.6 1136,154.8 1137,154.6 1138,154.7 1139,154.6 1140,155.3 1141,154.7 1142,155.1 1143,155.1 1144,155 1145,154.8 1146,154.8 1147,154.6 1148,155.3 1149,155.1 1150,155 1151,154.6 1152,154.9 1153,154.9 1154,154.7 1155,154.8 1156,155.1 1157,155.2 1158,154.9 1159,154.6 1160,154.8 1161,155.3 1162,154.9 1163,155 1164,154.8 1165,154.8 1166,154.5 1167,156.2 1168,156.2 1169,156 1170,155.8 1171,155.9 1172,156.1 1173,155.8 1174,156.1 1175,155.7 1176,156.3 1177,156.4 1178,155.8 1179,156.3 1180,155.8 1181,156 1182,156.1 1183,156.4 1184,155.9 1185,156.4 1186,155.7 1187,155.8 1188,156.3 1189,156.4 1190,155.8 1191,156.1 1192,154.9 1193,156.1 1194,156.3 1195,156.2 1196,156 1197,155.8 1198,155.9 1199,156.4 1200,156.1 1201,156.1 1202,153.7 1203,154.4 1204,154.1 1205,153.8 1206,154.2 1207,154.3 1208,154.1 1209,154.2 1210,154.6 1211,155.2 1212,155.1 1213,155.2 1214,154.7 1215,155.1 1216,154.6 1217,154.6 1218,154.6 1219,155.1 1220,155.3 1221,155 1222,154.5 1223,154.7 1224,155.3 1225,154.7 1226,154.6 1227,154.5 1228,154.7 1229,154.6 1230,154.6 1231,155 1232,155.2 1233,154.7 1234,155.2 1235,155 1236,154.5 1237,154.9 1238,154.9 1239,154.5 1240,155.1 1241,154.5 1242,154.6 1243,155 1244,155 1245,155.2 1246,154.6 1247,155.2 1248,155.3 1249,154.6 1250,154.8 1251,154.8 1252,154.7 1253,155.3 1254,155.2 1255,154.9 1256,155.3 1257,154.9 1258,153.2 1259,153.3 1260,154.8 1261,155.3 1262,155.1 1263,154.6 1264,155.2 1265,154.9 1266,155.3 1267,154.5 1268,155.2 1269,155 1270,154.9 1271,154.7 1272,154.6 1273,154.7 1274,155 1275,155.2 1276,154.7 1277,154.5 1278,155.3 1279,154.7 1280,155.2 1281,154.9 1282,154.9 1283,154.8 1284,154.5 1285,154.8 1286,155 1287,154.7 1288,153.4 1289,155 1290,155 1291,154.9 1292,155.1 1293,155.1 1294,155.2 1295,154.9 1296,155.1 1297,154.6 1298,154.6 1299,155 1300,153.3 1301,154.6 1302,155 1303,154.9 1304,154.9 1305,154.8 1306,154.5 1307,155.2 1308,154.5 1309,154.8 1310,154.7 1311,153.3 1312,154.6 1313,155 1314,154.7 1315,155.1 1316,154.9 1317,154.8 1318,155.1 1319,155.3 1320,154.7 1321,154.7 1322,154.8 1323,155 1324,154.8 1325,155.2 1326,154.8 1327,154.8 1328,154.8 1329,154.9 1330,155.1 1331,154.7 1332,154.9 1333,154.7 1334,155 1335,155.2 1336,154.9 1337,154.8 1338,154.6 1339,154.6 1340,155.3 1341,154.7 1342,155.1 1343,154.7 1344,155 1345,155 1346,154.9 1347,154.9 1348,154.7 1349,154.8 1350,154.8 1351,155 1352,154.8 1353,155 1354,154.8 1355,154.9 1356,154.8 1357,155.3 1358,154.9 1359,155.1 1360,155 1361,155.2 1362,154.8 1363,154.6 1364,155 1365,155.2 1366,154.8 1367,155.2 1368,154.6 1369,155.2 1370,155 1371,153.4 1372,155.2 1373,155 1374,155.1 1375,154.7 1376,154.5 1377,155 1378,154.7 1379,155.2 1380,154.8 1381,155 1382,155.1 1383,154.6 1384,154.7 1385,155.2 1386,155.1 1387,154.6 1388,154.5 1389,154.8 1390,154.6 1391,154.5 1392,154.7 1393,154.8 1394,155.1 1395,155 1396,154.8 1397,154.6 1398,155.1 1399,155 1400,155.3 1401,154.7 1402,154.9 1403,154.7 1404,155.1 1405,154.8 1406,154.8 1407,154.9 1408,155.1 1409,155 1410,154.7 1411,155.1 1412,155.2 1413,153.4 1414,155.1 1415,154.7 1416,153.1 1417,154.5 1418,154.6 1419,154.8 1420,155.2 1421,154.6 1422,154.7 1423,154.7 1424,154.7 1425,154.6 1426,155.1 1427,154.8 1428,153.4 1429,155 1430,155 1431,155.2 1432,154.9 1433,155 1434,155 1435,154.6 1436,154.8 1437,154.8 1438,154.5 1439,155.1 1440,154.9 1441,155.2 1442,155 1443,154.5 1444,155.2 1445,153.2 1446,154.6 1447,154.9 1448,154.7 1449,154.9 1450,155 1451,154.9 1452,155.1 1453,155.1 1454,153.6 1455,154.5 1456,153.5 1457,155.1 1458,154.5 1459,155.2 1460,154.5 1461,154.6 1462,154.8 1463,155 1464,155.1 1465,155.2 1466,155.2 1467,155 1468,155 1469,154.6 1470,154.9 1471,154.5 1472,154.7 1473,155.2 1474,154.9 1475,155.2 1476,155.3 1477,154.5 1478,155 1479,155.1 1480,155.2 1481,154.8 1482,154.9 1483,155.3 1484,154.7 1485,155.1 1486,154.7 1487,154.9 1488,154.9 1489,154.9 1490,154.8 1491,154.5 1492,154.7 1493,155.2 1494,154.9 1495,155.1 1496,155.2 1497,155.1 1498,155.1 1499,154.5 1500,154.7 1501,154.6 1502,154.7 1503,155 1504,155 1505,154.9 1506,156.3 1507,156.2 1508,155.9 1509,156.4 1510,156.3 1511,156.1 1512,156 1513,156 1514,155.9 1515,156.4 1516,156.4 1517,156.3 1518,156.3 1519,155.9 1520,155.7 1521,156 1522,156.5 1523,156.3 1524,155.9 1525,155.8 1526,156 1527,156.2 1528,156.2 1529,156 1530,155.8 1531,156.2 1532,156.3 1533,156.5 1534,156.4 1535,155.8 1536,156 1537,155.7 1538,156.4 1539,156.2 1540,155.9 1541,154 1542,154.4 1543,154.2 1544,154 1545,153.9 1546,152.6 1547,154.3 1548,153.7 1549,154.9 1550,154.7 1551,154.9 1552,155.2 1553,155.1 1554,155.2 1555,155.1 1556,155.1 1557,155 1558,153.5 1559,155 1560,154.6 1561,155.3 1562,155.2 1563,154.7 1564,154.9 1565,154.9 1566,155.1 1567,154.9 1568,155.1 1569,154.6 1570,154.6 1571,153.5 1572,155.3 1573,154.6 1574,155.1 1575,154.8 1576,154.6 1577,154.7 1578,154.6 1579,154.9 1580,154.6 1581,154.9 1582,155.1 1583,154.9 1584,155 1585,154.7 1586,154.6 1587,155.2 1588,155.2 1589,155 1590,154.9 1591,153 1592,153 1593,154.5 1594,154.7 1595,154.8 1596,155.1 1597,155 1598,155.3 1599,154.6 1600,155.1 1601,155.2 1602,155 1603,155 1604,154.7 1605,155.3 1606,153.6 1607,154.6 1608,154.6 1609,154.8 1610,154.9 1611,155.1 1612,154.6 1613,154.7 1614,154.9 1615,155.2 1616,155.1 1617,155 1618,155 1619,155.3 1620,155 1621,154.9 1622,155.1 1623,155 1624,155 1625,155 1626,154.8 1627,154.9 1628,155.1 1629,154.7 1630,154.9 1631,154.9 1632,154.7 1633,154.7 1634,154.6 1635,154.7 1636,154.8 1637,154.7 1638,155.2 1639,154.7 1640,155.1 1641,155.1 1642,155.2 1643,155 1644,155.3 1645,154.8 1646,154.7 1647,154.7 1648,155.2 1649,154.8 1650,154.6 1651,155.3 1652,155.1 1653,155.1 1654,154.9 1655,155.2 1656,154.9 1657,155 1658,154.8 1659,154.9 1660,154.8 1661,155.1 1662,154.7 1663,154.7 1664,154.7 1665,155.2 1666,154.5 1667,154.8 1668,153.6 1669,155 1670,154.9 1671,154.9 1672,155.1 1673,155.1 1674,155 1675,154.7 1676,155 1677,155.3 1678,154.9 1679,155.1 1680,155.3 1681,154.5 1682,155.1 1683,154.9 1684,155 1685,155.3 1686,154.6 1687,154.6 1688,155.2 1689,155 1690,155 1691,155.2 1692,154.8 1693,154.7 1694,154.7 1695,154.8 1696,155.3 1697,155.1 1698,154.9 1699,154.7 1700,155 1701,154.9 1702,154.6 1703,155.3 1704,153.6 1705,153.6 1706,154.5 1707,155.1 1708,155.3 1709,155 1710,155 1710,158.9 1709,158.9 1708,159.3 1707,158.9 1706,159.4 1705,159.3 1704,159.2 1703,159.1 1702,159 1701,159.2 1700,158.8 1699,159.3 1698,159.1 1697,159.3 1696,158.8 1695,159.1 1694,159.1 1693,159.3 1692,158.9 1691,159.2 1690,159.3 1689,158.9 1688,159.2 1687,158.9 1686,159.3 1685,159.2 1684,159.4 1683,159.2 1682,159.1 1681,159.1 1680,158.9 1679,159.4 1678,159 1677,159 1676,158.9 1675,159 1674,159.2 1673,159 1672,159.3 1671,159.2 1670,158.8 1669,159.3 1668,159.4 1667,159.1 1666,159.3 1665,158.8 1664,159.4 1663,159.1 1662,158.9 1661,159.2 1660,158.8 1659,159.3 1658,159.3 1657,159 1656,158.9 1655,159.3 1654,159.3 1653,159.1 1652,159.2 1651,159.1 1650,159 1649,158.9 1648,158.9 1647,159.3 1646,159.3 1645,159.1 1644,159.3 1643,159.3 1642,159.1 1641,159.4 1640,159.3 1639,159.4 1638,158.9 1637,159 1636,159.2 1635,159.2 1634,159.3 1633,158.9 1632,159.2 1631,159.1 1630,159.1 1629,159.2 1628,159.1 1627,159.1 1626,158.9 1625,159.1 1624,159 1623,159.2 1622,159 1621,159.2 1620,159.3 1619,159.1 1618,159.1 1617,159 1616,158.9 1615,159.4 1614,159.3 1613,159.1 1612,159.2 1611,158.8 1610,158.8 1609,158.9 1608,159.2 1607,159.1 1606,159.2 1605,159.2 1604,159.1 1603,158.9 1602,159.2 1601,159.3 1600,159 1599,159.2 1598,159.2 1597,158.9 1596,159.4 1595,159.4 1594,159 1593,158.9 1592,159.4 1591,158.8 1590,159.4 1589,159.2 1588,158.8 1587,159.1 1586,159.3 1585,159 1584,159 1583,159.1 1582,159.2 1581,159.3 1580,158.9 1579,158.8 1578,158.8 1577,159.1 1576,158.9 1575,159.4 1574,159.2 1573,159 1572,159 1571,159.3 1570,159.3 1569,159.3 1568,158.9 1567,159.1 1566,159.3 1565,159.4 1564,159.1 1563,158.9 1562,159 1561,159 1560,159.3 1559,159.3 1558,159.3 1557,159.2 1556,158.9 1555,158.9 1554,159 1553,159.1 1552,159.3 1551,159.4 1550,159.4 1549,159.2 1548,158.3 1547,158.5 1546,158.3 1545,158 1544,158.5 1543,158.5 1542,158.3 1541,158.2 1540,160.1 1539,160.5 1538,160.6 1537,160.5 1536,160 1535,160.1 1534,160.6 1533,160.1 1532,160.2 1531,160 1530,160.5 1529,160.4 1528,160.1 1527,160.1 1526,160.2 1525,160.6 1524,160.4 1523,160.2 1522,160.1 1521,160.4 1520,160.2 1519,160.4 1518,160 1517,160.4 1516,160.1 1515,160.5 1514,160.4 1513,160.4 1512,160.5 1511,160.1 1510,160.2 1509,160.3 1508,160.5 1507,160.1 1506,160.1 1505,159 1504,159.1 1503,159.2 1502,159 1501,159.2 1500,159 1499,158.9 1498,158.8 1497,159 1496,159 1495,159 1494,159 1493,158.8 1492,159.4 1491,159 1490,159.2 1489,159.1 1488,158.8 1487,159 1486,159.3 1485,158.9 1484,159.4 1483,159.2 1482,158.9 1481,159.3 1480,159 1479,159.4 1478,159.1 1477,159.1 1476,159.2 1475,159.2 1474,158.8 1473,159 1472,159.2 1471,159.2 1470,159.1 1469,159.2 1468,159.1 1467,159 1466,159.4 1465,159 1464,159.4 1463,159.1 1462,159.3 1461,159 1460,159.4 1459,158.9 1458,159.3 1457,158.9 1456,159.1 1455,159.3 1454,158.9 1453,158.8 1452,159.3 1451,159 1450,159.2 1449,158.9 1448,158.8 1447,158.9 1446,159.2 1445,159.1 1444,159.3 1443,159.3 1442,159.3 1441,159.1 1440,159.4 1439,159.2 1438,159.2 1437,159.3 1436,159.4 1435,159.3 1434,158.9 1433,159.4 1432,159 1431,159.1 1430,159.3 1429,159.1 1428,159.3 1427,159.1 1426,159.2 1425,159 1424,159.2 1423,159 1422,159.3 1421,159.3 1420,158.8 1419,159.4 1418,159 1417,159 1416,158.9 1415,159.4 1414,159.3 1413,159 1412,159 1411,159.2 1410,159.2 1409,159.2 1408,159.1 1407,158.9 1406,159 1405,159 1404,159.2 1403,159.2 1402,159.3 1401,158.9 1400,159.3 1399,159.3 1398,158.9 1397,159.4 1396,158.9 1395,159.2 1394,159.1 1393,159.2 1392,158.9 1391,159.2 1390,159.2 1389,159.3 1388,159.4 1387,159.2 1386,159.1 1385,159.4 1384,159.1 1383,158.8 1382,158.9 1381,159 1380,159.3 1379,159.2 1378,159.2 1377,159.2 1376,158.8 1375,159 1374,158.9 1373,159.2 1372,158.9 1371,159.3 1370,159.4 1369,159 1368,159 1367,159.1 1366,159 1365,159.3 1364,158.9 1363,159.4 1362,158.9 1361,158.9 1360,159.3 1359,158.9 1358,158.9 1357,159.3 1356,158.8 1355,158.9 1354,159.1 1353,158.9 1352,159.4 1351,159 1350,158.8 1349,158.9 1348,158.8 1347,159 1346,159 1345,159 1344,159.4 1343,159.2 1342,158.9 1341,159 1340,159 1339,159.4 1338,158.8 1337,158.8 1336,159.2 1335,159.1 1334,159.1 1333,159.1 1332,159.2 1331,159 1330,159.3 1329,158.9 1328,159.4 1327,159 1326,159.2 1325,159 1324,159.1 1323,158.8 1322,159.3 1321,159.3 1320,158.8 1319,159 1318,158.9 1317,159.4 1316,158.9 1315,159.3 1314,159 1313,159.1 1312,158.9 1311,159.1 1310,159.1 1309,159 1308,159.3 1307,159.4 1306,159 1305,159.1 1304,159.3 1303,158.9 1302,158.9 1301,159 1300,159 1299,159.2 1298,159 1297,159.4 1296,159 1295,158.9 1294,158.9 1293,159.1 1292,158.8 1291,159 1290,159.2 1289,159.1 1288,158.8 1287,159 1286,158.9 1285,159.3 1284,159.2 1283,159.2 1282,159.1 1281,159 1280,159.2 1279,159 1278,158.9 1277,159 1276,159.3 1275,159.3 1274,159.1 1273,158.9 1272,158.9 1271,159 1270,158.9 1269,158.8 1268,158.9 1267,159 1266,158.9 1265,158.8 1264,158.8 1263,159 1262,159.2 1261,159.2 1260,158.9 1259,159 1258,159.3 1257,159.3 1256,159.1 1255,159.2 1254,159 1253,159 1252,159.3 1251,159.3 1250,159.3 1249,159.2 1248,159.3 1247,159.1 1246,159.3 1245,158.9 1244,158.9 1243,158.8 1242,159.3 1241,158.9 1240,159 1239,159.3 1238,159.2 1237,159.2 1236,159.2 1235,158.9 1234,159.2 1233,158.9 1232,159.4 1231,159.4 1230,158.9 1229,159.3 1228,159.3 1227,159.3 1226,159 1225,159.4 1224,159.2 1223,159 1222,159.3 1221,159.4 1220,159.1 1219,159 1218,159.1 1217,159.1 1216,159 1215,159.3 1214,159.3 1213,159.2 1212,158.9 1211,159.2 1210,159 1209,158.5 1208,158.2 1207,158.4 1206,158 1205,158 1204,158.5 1203,158.5 1202,158.5 1201,160.3 1200,160.5 1199,160.4 1198,160.3 1197,160.4 1196,160.2 1195,160.4 1194,160.2 1193,160.2 1192,160.6 1191,160.3 1190,160.5 1189,160.4 1188,160.3 1187,160.5 1186,160.2 1185,160.5 1184,160.6 1183,160.3 1182,160.5 1181,160 1180,160.2 1179,160.6 1178,160.5 1177,160.3 1176,160.2 1175,160.4 1174,160.4 1173,160.2 1172,160.4 1171,160.3 1170,160.5 1169,160.2 1168,160.4 1167,160.1 1166,158.8 1165,159 1164,159.4 1163,159 1162,159.4 1161,159.2 1160,159.1 1159,159.4 1158,159 1157,159 1156,158.9 1155,159.2 1154,159.3 1153,158.9 1152,159.2 1151,159 1150,159.1 1149,159 1148,159.3 1147,159.3 1146,159.2 1145,159 1144,158.9 1143,159.3 1142,159 1141,159.2 1140,159 1139,158.9 1138,159.4 1137,158.8 1136,159.2 1135,159.1 1134,158.8 1133,159.1 1132,159 1131,159.4 1130,158.8 1129,159 1128,159 1127,158.9 1126,159 1125,159.1 1124,159.2 1123,159.3 1122,159.1 1121,159.2 1120,159.1 1119,159.2 1118,159.4 1117,158.8 1116,159.1 1115,158.8 1114,158.8 1113,158.9 1112,159.4 1111,158.9 1110,159.3 1109,159 1108,159.4 1107,159.3 1106,158.8 1105,159.1 1104,158.9 1103,158.8 1102,159.3 1101,159.1 1100,159.1 1099,158.9 1098,159.2 1097,159.2 1096,158.9 1095,159 1094,159.1 1093,158.8 1092,158.8 1091,159.4 1090,158.9 1089,158.8 1088,159.3 1087,159.1 1086,159.3 1085,159 1084,159 1083,158.9 1082,159 1081,159 1080,158.9 1079,159 1078,159 1077,159.4 1076,159.2 1075,159.3 1074,158.8 1073,159 1072,159.1 1071,159 1070,159.2 1069,158.9 1068,159.1 1067,159.2 1066,159.4 1065,159 1064,159 1063,159.4 1062,159.1 1061,158.9 1060,159.2 1059,158.9 1058,159 1057,159 1056,159.1 1055,159.1 1054,158.9 1053,159.4 1052,159.2 1051,159 1050,159.3 1049,159.3 1048,158.8 1047,159.2 1046,158.9 1045,158.8 1044,158.8 1043,158.8 1042,159 1041,158.9 1040,159.1 1039,158.8 1038,159.4 1037,159.4 1036,159 1035,159 1034,159.1 1033,158.9 1032,158.9 1031,159.1 1030,159 1029,158.8 1028,158.9 1027,159.2 1026,159.1 1025,159.1 1024,159.2 1023,159.2 1022,158.8 1021,158.8 1020,159.3 1019,159 1018,159.3 1017,158.8 1016,159 1015,159.4 1014,159.3 1013,159.3 1012,158.9 1011,158.8 1010,159.3 1009,158.9 1008,159 1007,158.9 1006,159 1005,159 1004,159.3 1003,159.3 1002,159.3 1001,159.2 1000,159 999,159.2 998,158.9 997,159.3 996,159 995,159.1 994,158.8 993,159.3 992,159 991,158.9 990,158.9 989,159 988,159.3 987,159.3 986,159 985,159.3 984,159.3 983,159.4 982,158.8 981,158.9 980,159 979,158.9 978,158.8 977,159.3 976,159.4 975,159.3 974,159.4 973,158.8 972,159.3 971,158.8 970,158.9 969,159 968,159.1 967,159 966,159.1 965,159.1 964,158.9 963,159.1 962,158.9 961,159.3 960,159.3 959,159.3 958,159 957,158.8 956,159.4 955,159.2 954,158.9 953,159.2 952,159.1 951,159.2 950,158.9 949,159 948,158.9 947,159.3 946,159 945,159.3 944,159 943,159.3 942,159.1 941,158.9 940,158.9 939,159.3 938,158.9 937,159.3 936,159 935,159 934,159.3 933,158.9 932,159.1 931,159.2 930,159.3 929,159.2 928,159.1 927,159 926,159.2 925,159.3 924,159.2 923,159.1 922,159.1 921,158.9 920,158.9 919,159.1 918,158.9 917,159.3 916,159.1 915,158.9 914,159.2 913,159.1 912,158.9 911,159.2 910,158.8 909,159.2 908,159 907,159.3 906,158.9 905,159 904,159 903,159.3 902,158.9 901,159.3 900,159.2 899,159 898,159 897,158.9 896,159 895,158.9 894,159.4 893,158.9 892,159.2 891,159 890,158.9 889,159 888,159.1 887,159.1 886,159 885,159.1 884,159.3 883,159.2 882,159.1 881,159.3 880,158.8 879,159 878,158.9 877,158.9 876,159.3 875,159 874,159.1 873,159.1 872,159.4 871,158.9 870,158.3 869,158.6 868,158 867,158.5 866,158.3 865,158 864,158.2 863,158.2 862,160 861,160.3 860,160.1 859,160.3 858,160 857,160.5 856,160.5 855,160.3 854,160.4 853,160 852,160.5 851,160.1 850,160.5 849,160.4 848,160 847,160.2 846,160.6 845,160.5 844,160.5 843,160.2 842,160.1 841,160 840,160 839,160.6 838,160 837,160.6 836,160.2 835,160.2 834,160.2 833,160.3 832,160.1 831,160.4 830,160.4 829,160.3 828,160.1 827,159.2 826,159.1 825,159 824,158.8 823,159.3 822,159.1 821,159.1 820,158.9 819,159.3 818,159 817,159.2 816,159 815,159.3 814,158.8 813,158.8 812,159.1 811,159.1 810,159 809,159.3 808,159.1 807,158.9 806,159.1 805,158.9 804,159.2 803,158.9 802,159.1 801,158.8 800,159 799,159.2 798,158.9 797,158.9 796,158.9 795,158.9 794,158.9 793,159 792,159.1 791,159 790,159.3 789,159.3 788,159.2 787,159.2 786,159.3 785,159 784,159.1 783,158.8 782,159 781,159.2 780,159 779,158.8 778,159 777,159.1 776,159.3 775,158.9 774,159.1 773,159 772,158.8 771,159.4 770,159 769,159.1 768,159 767,159.2 766,159.2 765,159.2 764,158.9 763,159 762,158.8 761,158.9 760,159 759,159.2 758,159.4 757,159.2 756,159.3 755,159.2 754,159.2 753,159.1 752,159 751,159.1 750,159.1 749,158.8 748,159.3 747,159.1 746,158.8 745,159.3 744,159.1 743,159.1 742,159.1 741,158.9 740,159.4 739,159 738,159.3 737,159 736,158.9 735,159.3 734,158.9 733,159 732,159.1 731,159.1 730,159.2 729,158.9 728,158.8 727,159.3 726,158.8 725,159 724,158.9 723,159.1 722,159.1 721,159.2 720,159.2 719,158.8 718,159.3 717,159 716,159 715,158.8 714,158.8 713,159.1 712,158.9 711,159.2 710,159.2 709,158.8 708,159 707,159.2 706,159 705,158.9 704,159 703,158.9 702,159.3 701,158.9 700,159.2 699,158.8 698,159.1 697,159.3 696,159.1 695,159.1 694,159 693,158.9 692,159.4 691,159.1 690,159.4 689,159.3 688,159.1 687,158.8 686,159.2 685,159 684,159.2 683,159.1 682,159 681,159.1 680,158.9 679,158.9 678,158.9 677,159.3 676,159.1 675,159.2 674,159 673,158.8 672,159.3 671,158.8 670,158.9 669,158.9 668,159.2 667,159.1 666,159.2 665,159.1 664,159.2 663,159.4 662,159.1 661,158.9 660,159.1 659,159.2 658,159.3 657,158.8 656,159.1 655,159.3 654,158.9 653,159 652,158.9 651,158.9 650,159.1 649,159.3 648,159 647,159.4 646,159.3 645,159.2 644,159.3 643,159.1 642,159 641,159.3 640,158.9 639,158.9 638,159 637,159.3 636,158.9 635,158.9 634,159.3 633,159 632,159.2 631,158.9 630,158.9 629,159.2 628,159.1 627,159.2 626,159 625,159 624,159.4 623,159 622,159.2 621,159.1 620,158.9 619,159.3 618,159 617,159 616,158.9 615,159.1 614,158.9 613,159.2 612,159.1 611,158.9 610,159.4 609,159.3 608,159.1 607,158.9 606,159 605,158.9 604,158.9 603,159 602,158.9 601,159 600,159.3 599,159.1 598,159 597,158.9 596,159.2 595,159.4 594,159.1 593,159.3 592,158.9 591,159.1 590,158.9 589,159.3 588,159.3 587,158.9 586,159 585,158.9 584,159.2 583,159.2 582,159.4 581,159 580,159.3 579,159.2 578,159 577,159.4 576,159.2 575,158.8 574,159 573,159 572,158.9 571,159.4 570,159.2 569,158.9 568,159 567,159 566,159.1 565,159.3 564,159.2 563,159.2 562,158.9 561,158.9 560,159.3 559,158.8 558,158.9 557,159.2 556,159.3 555,158.9 554,159.4 553,159.2 552,159 551,158.9 550,159 549,159 548,159.1 547,158.8 546,159 545,159 544,159 543,159.1 542,159 541,159.3 540,158.8 539,159.2 538,159.1 537,158.9 536,159.1 535,158.8 534,158.8 533,158.8 532,159.4 531,159.3 530,158 529,158 528,158.5 527,158.3 526,158.3 525,158.6 524,158.3 523,158.2 522,160.3 521,160.4 520,160.5 519,160.3 518,160.3 517,160.3 516,160.5 515,160.1 514,160.1 513,160 512,160.4 511,160 510,160.2 509,160.2 508,160.2 507,160.4 506,160.2 505,160.4 504,160.4 503,160.1 502,160.5 501,160.1 500,160.3 499,160 498,160.4 497,160 496,160.3 495,160 494,160.4 493,160.5 492,160.4 491,160.3 490,160.3 489,160.5 488,160.3 487,159.1 486,158.9 485,158.9 484,159 483,158.9 482,158.8 481,159 480,159.2 479,159 478,159.2 477,158.9 476,159.1 475,158.8 474,159.2 473,158.8 472,159.4 471,159.1 470,158.8 469,158.9 468,159.4 467,159.1 466,159 465,158.9 464,159.2 463,158.9 462,159 461,159.2 460,159.2 459,158.9 458,159.3 457,159.2 456,159 455,159.1 454,159.3 453,159.3 452,159 451,158.9 450,158.9 449,159.3 448,159 447,159.1 446,159.1 445,159 444,159.1 443,159.1 442,159.2 441,159.1 440,159.2 439,158.9 438,158.9 437,159.1 436,158.9 435,159 434,159 433,158.9 432,159.1 431,159.3 430,158.9 429,159.1 428,158.9 427,159 426,159 425,159 424,158.9 423,159 422,159.1 421,159.3 420,159.3 419,159.1 418,159.3 417,159 416,159.1 415,158.9 414,158.8 413,159.1 412,159.1 411,158.9 410,158.8 409,158.8 408,159.4 407,159.2 406,159.3 405,159.2 404,159.2 403,158.9 402,159.4 401,158.9 400,159.2 399,159.3 398,159 397,159.3 396,159.4 395,159.3 394,159.2 393,159.1 392,159 391,159 390,159.2 389,158.9 388,158.9 387,159.4 386,159.2 385,159.1 384,159.2 383,159.1 382,159 381,159 380,159.2 379,158.8 378,159.4 377,158.9 376,159.3 375,159.3 374,159.1 373,159.1 372,159.3 371,158.9 370,158.9 369,159.1 368,159 367,159.2 366,159 365,159.2 364,159 363,159.1 362,159.4 361,158.9 360,159.3 359,159.1 358,159 357,159 356,158.9 355,159.2 354,159.3 353,159 352,159.3 351,158.9 350,158.8 349,158.8 348,159.4 347,159.1 346,159.4 345,158.8 344,159.2 343,159.1 342,159 341,159 340,159.1 339,159 338,158.9 337,159 336,158.9 335,159.1 334,158.8 333,158.9 332,159.2 331,159.2 330,159 329,159.4 328,159 327,159.4 326,158.8 325,158.9 324,159.2 323,159.1 322,159.3 321,159.1 320,159 319,159 318,159 317,158.9 316,158.9 315,159.4 314,159.1 313,158.8 312,159.3 311,159.1 310,158.9 309,159.3 308,159.4 307,159.2 306,159.3 305,159 304,159.1 303,159.3 302,158.9 301,159.4 300,159 299,159.2 298,159.3 297,159.2 296,159 295,159.1 294,159.2 293,159 292,159 291,159 290,159 289,159.1 288,159.2 287,159.1 286,159 285,159.2 284,159.1 283,159 282,158.9 281,159.4 280,158.8 279,159.1 278,159.3 277,159.2 276,159 275,159.1 274,159 273,158.9 272,159 271,158.9 270,159.1 269,159 268,159.3 267,158.8 266,159 265,159.4 264,159 263,159.2 262,158.8 261,159.3 260,159.2 259,158.9 258,158.9 257,159.4 256,159.3 255,159.2 254,158.9 253,159.1 252,159.3 251,159.3 250,159.3 249,159.1 248,159.4 247,159.2 246,159 245,159.1 244,159.3 243,159.3 242,158.9 241,159 240,159.1 239,159.4 238,159 237,159 236,159.3 235,159.3 234,159.2 233,159.1 232,158.9 231,159.4 230,159 229,159.2 228,159.2 227,159.4 226,159.1 225,158.9 224,158.9 223,159.3 222,159.3 221,159.3 220,159 219,159 218,159.3 217,159 216,159.2 215,159.1 214,159 213,159 212,158.8 211,159.3 210,159.2 209,158.9 208,158.9 207,159 206,159.1 205,158.9 204,158.9 203,159.2 202,159.4 201,159.4 200,158.8 199,159 198,158.9 197,159.2 196,159.2 195,159.2 194,159.4 193,159.2 192,159.4 191,158.3 190,158.4 189,158.5 188,158.6 187,158.4 186,158 185,158.1 184,158.2 183,160.5 182,160.1 181,160.2 180,160.6 179,160.5 178,160.1 177,160.5 176,160.3 175,160.3 174,160.2 173,160.5 172,160.2 171,160.3 170,160.2 169,160.1 168,160.4 167,160.2 166,160.3 165,160.2 164,160.2 163,160.5 162,160.1 161,160.2 160,160.3 159,160.2 158,160.2 157,160 156,160.2 155,160.1 154,160.6 153,160 152,160.2 151,160.4 150,160.4 149,160 148,159 147,158.9 146,159.1 145,159 144,159.3 143,159.4 142,159 141,159.3 140,158.9 139,159.4 138,158.9 137,159 136,158.9 135,159.3 134,158.9 133,159.4 132,158.9 131,158.9 130,158.9 129,159.2 128,158.9 127,159.4 126,158.9 125,159.3 124,159.2 123,159 122,159.3 121,159.4 120,159.3 119,159 118,158.9 117,159.3 116,158.8 115,159 114,159.2 113,159 112,158.9 111,159.4 110,158.9 109,159 108,159.1 107,158.9 106,159.1 105,159.1 104,158.9 103,159.3 102,159.2 101,158.9 100,159 99,159 98,159.3 97,159.2 96,158.9 95,158.9 94,159.3 93,158.9 92,159.2 91,159.1 90,159.3 89,159 88,159.2 87,159.1 86,159.4 85,158.8 84,158.8 83,159.3 82,159.3 81,159.1 80,159 79,158.9 78,159 77,159.2 76,158.9 75,159.3 74,159.3 73,159 72,159.2 71,159 70,158.8 69,159.2 68,159 67,159.4 66,159.4 65,158.8 64,158.9 63,159.2 62,159.3 61,159.3 60,159 59,159 58,159.3 57,159.1 56,159.2 55,159.2 54,159.2 53,159.2 52,159.1 51,159.1 50,159.3 49,158.9 48,159 47,159.3 46,159.4 45,159.3 44,159.4 43,158.8 42,159.3 41,159.2 40,159.1 39,159.2 38,158.9 37,158.8 36,159 35,159.3 34,158.9 33,158.9 32,159.3 31,159.2 30,159.2 29,158.8 28,159.4 27,159.4 26,159.4 25,158.9 24,159.2 23,159.1 22,159 21,159.3 20,158.9 19,159.3 18,159.1 17,159.1 16,158.8 15,158.9 14,159.1 13,159.1" fill="#f5ea2e"/>
<polygon points="13,418.7 14,418.3 15,418.4 16,417.8 17,418 18,418.2 19,417.8 20,417.6 21,417.9 22,417.9 23,417.7 24,418.3 25,417.5 26,418.5 27,418.6 28,417.7 29,418.5 30,418.3 31,418.1 32,418.6 33,418.2 34,418.3 35,418.6 36,418 37,418.2 38,418.5 39,417.8 40,418.2 41,418.7 42,417.6 43,418.2 44,418.6 45,418.4 46,418.4 47,418.6 48,416.8 49,418.5 50,418.4 51,417.9 52,418.5 53,418.7 54,418.5 55,418.3 56,418.5 57,418 58,417.6 59,417.7 60,418.1 61,417.8 62,417.8 63,417.9 64,417.7 65,416.7 66,417.8 67,418.1 68,417.8 69,417.8 70,418.6 71,417.7 72,418.7 73,416.7 74,418 75,417.7 76,418.6 77,417.9 78,418.3 79,418.7 80,418.3 81,417.9 82,418.6 83,417.7 84,418.6 85,418.4 86,418.3 87,418.6 88,417.6 89,417.5 90,417.6 91,418.5 92,417.7 93,418.3 94,418.4 95,417.9 96,418.6 97,418.7 98,417.6 99,418.3 100,417.7 101,418.2 102,418.6 103,418.1 104,418.5 105,417.1 106,418.7 107,418.2 108,418.4 109,418.3 110,416 111,417.7 112,416.4 113,416.9 114,417.8 115,417.9 116,418.1 117,418.4 118,418.5 119,418.2 120,416.9 121,417.6 122,418.1 123,417.9 124,417.6 125,418 126,418.5 127,418.3 128,417.6 129,418.6 130,418.4 131,418 132,417.7 133,417.7 134,417.8 135,417.9 136,418.3 137,418.6 138,417.9 139,418.6 140,417.7 141,418.5 142,418.7 143,417.5 144,418.5 145,418 146,418.6 147,417.5 148,418.7 149,418.7 149,423.7 148,423.7 147,424.2 146,423.9 145,423.5 144,424.2 143,425.6 142,423.4 141,423.7 140,423.7 139,423.4 138,423.6 137,424.3 136,423.5 135,424.1 134,424 133,424.2 132,423.4 131,423.3 130,424 129,424 128,423.6 127,423.8 126,424.2 125,424.1 124,424.3 123,423.8 122,423.6 121,424.2 120,423.5 119,424.3 118,423.7 117,423.8 116,423.5 115,423.6 114,423.5 113,423.5 112,423.6 111,425.7 110,423.7 109,423.9 108,423.4 107,423.7 106,424 105,423.8 104,423.9 103,423.3 102,423.6 101,424.2 100,423.3 99,423.5 98,423.7 97,423.4 96,423.5 95,423.7 94,423.7 93,423.5 92,424.3 91,423.6 90,423.9 89,423.6 88,424.2 87,423.5 86,423.4 85,423.3 84,423.5 83,423.4 82,424.3 81,424 80,423.9 79,423.9 78,423.9 77,423.8 76,423.8 75,424.2 74,423.9 73,423.3 72,424.2 71,424.3 70,424.9 69,424.1 68,423.6 67,423.5 66,424.2 65,423.5 64,424.2 63,424.2 62,424.1 61,424.1 60,424.2 59,424.1 58,423.6 57,423.7 56,423.7 55,423.4 54,423.7 53,423.4 52,423.8 51,424.2 50,423.7 49,424.1 48,425.2 47,423.5 46,424.2 45,423.7 44,423.7 43,423.6 42,424.2 41,423.9 40,423.7 39,423.9 38,423.8 37,425.4 36,424.1 35,424.1 34,423.9 33,423.5 32,424.2 31,424.2 30,423.8 29,423.9 28,423.4 27,423.3 26,423.9 25,423.4 24,424.3 23,424.2 22,423.7 21,423.5 20,423.3 19,423.6 18,423.7 17,424.2 16,423.4 15,424.3 14,423.5 13,424.1" fill="#28c8d2"/>
<polygon points="149,339.2 150,337.5 151,339.6 152,340 153,340 154,339.9 155,339.1 156,337.9 157,338.9 158,339.2 159,339.3 160,339.8 161,339.7 162,338.8 163,338.9 164,339.5 165,339 166,339.1 167,339.7 168,339.8 169,339.1 170,338.8 171,338.8 172,339.6 173,339.9 174,339.6 175,339.9 176,338.8 177,339.6 178,339 179,339.7 180,338.8 181,339.4 182,339 183,339.3 184,339.3 184,346.8 183,346.8 182,347 181,346.4 180,346.5 179,346.5 178,347.4 177,346.6 176,347.2 175,347.4 174,346.5 173,347.1 172,347.4 171,347.3 170,346.5 169,347.3 168,346.9 167,347.3 166,346.6 165,347.3 164,346.5 163,346.6 162,346.7 161,347.3 160,346.7 159,347.1 158,346.9 157,346.6 156,347.3 155,346.4 154,346.6 153,347.2 152,346.7 151,346.9 150,346.6 149,346.9" fill="#28c8d2"/>
<polygon points="184,417.8 185,418.6 186,418.6 187,418.3 188,417.6 189,417.6 190,417.8 191,418 192,418.6 193,417.6 194,417.9 195,418 196,417.7 197,418.4 198,418 199,417.9 200,417.8 201,418.6 202,417.8 203,417.6 204,417.9 205,418.5 206,417.6 207,417.1 208,418.4 209,417.7 210,418 211,418.3 212,417.7 213,417.9 214,417.1 215,418.4 216,417.7 217,417.7 218,418.6 219,418.1 220,417.8 221,418.3 222,418.6 223,418.2 224,417.6 225,417.8 226,418.4 227,417.7 228,417.9 229,418.4 230,418.4 231,418.5 232,418.2 233,418.3 234,418.4 235,417.7 236,417.8 237,418.1 238,417.5 239,417.9 240,417.6 241,417.7 242,417.9 243,417.9 244,417.8 245,417.8 246,416.2 247,418.3 248,418.3 249,418.4 250,417.6 251,417.6 252,418.2 253,418.2 254,418.5 255,417.5 256,417.9 257,417.5 258,417.9 259,418.1 260,417.8 261,417.6 262,417.7 263,418.3 264,418.1 265,417.6 266,416.6 267,417.7 268,418.1 269,417.7 270,418.6 271,418.7 272,418.6 273,418.2 274,418.3 275,417.5 276,417.5 277,418.5 278,417.7 279,418.1 280,417.7 281,418.3 282,417.8 283,418.7 284,418.1 285,418.3 286,416.9 287,418.3 288,418.2 289,418.1 290,418.1 291,417.8 292,417.7 293,417.5 294,417.9 295,416.9 296,416.5 297,416.7 298,418.4 299,418.3 300,418.4 301,418.1 302,418.6 303,418 304,418.2 305,418.7 306,418.4 307,417.5 308,418 309,418.6 310,418 311,417.9 312,418.5 313,418.2 314,418.4 315,418 316,417.7 317,418.4 318,418.5 319,418.5 320,418 321,418.6 322,418.1 323,417.7 324,417.8 325,416.4 326,418.7 327,418.2 328,418.4 329,418.1 330,418.5 331,418.5 332,417.6 333,417.6 334,418.6 335,417.7 336,418.6 337,418.3 338,417.5 339,417.6 340,418.1 341,417.9 342,418.2 343,417.7 344,418.3 345,418.5 346,418.5 347,417.9 348,418 349,417.6 350,418.5 351,417.7 352,417.6 353,417.8 354,418.6 355,418.5 356,418.6 357,418.3 358,417.8 359,418.5 360,418.2 361,418.6 362,417.9 363,417.1 364,417.7 365,418 366,418.5 367,417.9 368,418.3 369,418.1 370,418 371,418.4 372,418.2 373,417.8 374,417.7 375,417.7 376,418 377,417.7 378,418.5 379,417.5 380,418.6 381,417.6 382,417.7 383,418.2 384,417.8 385,417.6 386,418.5 387,417.9 388,418.7 389,417.9 390,418.6 391,417.9 392,418.7 393,418.2 394,417.7 395,418.3 396,417.5 397,418.1 398,418.5 399,417.6 400,418.5 401,418 402,417.6 403,417.6 404,418 405,418.4 406,416.6 407,418.3 408,418.3 409,418.3 410,418.5 411,418.7 412,417.8 413,418.7 414,418 415,418.3 416,417.9 417,418 418,418.1 419,417.8 420,416.5 421,417.6 422,418 423,417.6 424,417.7 425,417.9 426,418.3 427,418.1 428,418.6 429,417.8 430,417.9 431,417.7 432,418.6 433,418.5 434,417.9 435,416.3 436,418.6 437,418.7 438,418.3 439,418.3 440,418.6 441,418.6 442,418.5 443,418.7 444,418.5 445,418.7 446,418.3 447,417.8 448,417.9 449,418 450,418.1 451,418.5 452,418.6 453,418.5 454,417.6 455,417.7 456,418 457,418 458,417.8 459,417.7 460,418.4 461,417.7 462,417.9 463,418.4 464,418.4 465,418.5 466,418 467,417.5 468,417.8 469,418.5 470,418.6 471,418.4 472,418.5 473,418.5 474,417.8 475,418.3 476,418 477,418.3 478,417.5 479,418 480,418.5 481,417.8 482,418.4 483,418.2 484,418.4 485,418.1 486,418.3 487,418.3 488,418.3 488,423.9 487,423.9 486,424.2 485,423.4 484,424 483,423.6 482,423.9 481,424.1 480,423.5 479,423.4 478,424.2 477,423.4 476,424.2 475,423.6 474,423.4 473,423.6 472,424.2 471,423.8 470,423.4 469,424.1 468,423.4 467,423.5 466,423.4 465,424.1 464,423.7 463,423.6 462,423.6 461,423.6 460,423.5 459,424.2 458,423.5 457,424.2 456,423.7 455,424 454,423.4 453,423.4 452,423.5 451,423.6 450,423.8 449,424.3 448,423.7 447,424.2 446,423.8 445,424.3 444,423.7 443,424.3 442,423.5 441,423.4 440,423.7 439,423.8 438,423.6 437,425.5 436,423.4 435,424.2 434,423.6 433,424.2 432,424 431,423.6 430,423.7 429,423.9 428,423.8 427,423.6 426,423.8 425,424.1 424,424 423,423.3 422,424.1 421,424 420,424.3 419,423.6 418,423.8 417,423.3 416,423.7 415,423.8 414,423.6 413,424 412,424.1 411,424.1 410,424.1 409,423.4 408,424.1 407,424.2 406,424 405,423.5 404,423.3 403,423.3 402,423.7 401,423.6 400,423.6 399,423.6 398,424.9 397,423.8 396,423.8 395,423.4 394,423.3 393,423.8 392,423.4 391,423.9 390,424.2 389,423.8 388,425.4 387,423.7 386,424.1 385,424.2 384,423.6 383,424.1 382,423.5 381,424.2 380,424.1 379,424.2 378,423.9 377,423.4 376,424.1 375,424 374,423.9 373,424.3 372,423.9 371,423.8 370,423.7 369,424.1 368,424.2 367,423.3 366,423.6 365,423.9 364,423.8 363,423.5 362,424 361,423.9 360,424.2 359,424.2 358,423.5 357,424.2 356,423.9 355,424.1 354,424.1 353,424.3 352,423.5 351,424.3 350,423.6 349,424 348,423.3 347,423.5 346,423.4 345,424.1 344,424.2 343,423.9 342,423.9 341,423.6 340,423.8 339,423.5 338,425.5 337,423.5 336,424.2 335,425.5 334,424 333,424.1 332,424.2 331,424 330,424.2 329,424.2 328,425 327,423.9 326,423.4 325,425.7 324,423.6 323,423.8 322,423.9 321,423.7 320,423.6 319,424 318,423.4 317,423.9 316,423.9 315,423.7 314,425.7 313,424.2 312,424 311,424 310,423.3 309,423.7 308,423.8 307,423.5 306,423.8 305,424 304,423.4 303,423.9 302,423.6 301,423.4 300,423.9 299,423.3 298,424.2 297,423.7 296,424.1 295,423.4 294,424.2 293,423.7 292,424.2 291,424.2 290,424.2 289,423.7 288,424 287,423.5 286,423.5 285,423.8 284,423.4 283,423.9 282,424.1 281,423.4 280,423.8 279,424.8 278,424.1 277,423.9 276,423.4 275,423.7 274,423.7 273,423.4 272,424 271,424 270,423.9 269,423.9 268,423.6 267,423.4 266,423.5 265,423.6 264,424.2 263,423.8 262,423.8 261,423.7 260,423.9 259,423.9 258,423.8 257,424 256,423.3 255,423.6 254,423.6 253,423.6 252,423.8 251,423.3 250,423.7 249,424.1 248,425.1 247,424 246,423.6 245,424.3 244,423.8 243,423.7 242,423.6 241,424.1 240,423.6 239,423.7 238,423.7 237,423.7 236,423.6 235,424.2 234,424 233,424.2 232,423.9 231,423.5 230,423.4 229,424 228,423.7 227,423.6 226,425.2 225,425.7 224,423.4 223,423.4 222,423.9 221,424.1 220,423.5 219,424.1 218,424 217,424.1 216,424.8 215,424 214,423.8 213,423.5 212,424.2 211,424 210,424.2 209,423.3 208,424 207,423.6 206,424.2 205,424.1 204,423.8 203,423.6 202,424.9 201,423.9 200,423.5 199,423.3 198,424.3 197,423.5 196,424 195,423.7 194,423.9 193,423.3 192,423.6 191,423.6 190,423.8 189,423.5 188,423.9 187,423.4 186,425.7 185,423.8 184,423.4" fill="#28c8d2"/>
<polygon points="488,339.8 489,338.8 490,339.8 491,339.7 492,339.5 493,339.9 494,339.7 495,339.5 496,339.3 497,339.4 498,339.6 499,339.2 500,339.1 501,339.7 502,339.7 503,339.2 504,338 505,339 506,340 507,339.4 508,339.6 509,339.7 510,339 511,339.7 512,339.1 513,339 514,338.8 515,339.9 516,339.8 517,339.9 518,339.6 519,338.9 520,339.2 521,339.8 522,339.9 523,339.9 523,347.2 522,347.2 521,348 520,346.8 519,347.3 518,346.5 517,347.3 516,346.4 515,346.5 514,348.3 513,346.9 512,347.1 511,347.3 510,347.2 509,347.2 508,347.1 507,347.1 506,346.7 505,348.2 504,346.6 503,346.4 502,346.4 501,346.4 500,346.8 499,347.2 498,347 497,347.4 496,347 495,346.7 494,347 493,346.5 492,347 491,347.3 490,347 489,347 488,348.8" fill="#28c8d2"/>
<polygon points="523,417.8 524,418 525,418.7 526,418 527,418.5 528,418.3 529,418.6 530,417.5 531,418.2 532,418 533,418.5 534,418.2 535,417.9 536,417.8 537,417.6 538,416.9 539,418.4 540,418.2 541,418.3 542,417.7 543,418.3 544,418.3 545,418.1 546,418 547,418.3 548,418.7 549,417.8 550,417.1 551,417.7 552,418.4 553,418.4 554,418.1 555,417.6 556,418.2 557,418.1 558,418.2 559,418.6 560,418.4 561,417.6 562,417.6 563,418.4 564,417.6 565,418.7 566,417.8 567,418.7 568,418.2 569,418.2 570,418.2 571,417.6 572,418.3 573,418.7 574,418.6 575,417.8 576,418.5 577,418.6 578,418.5 579,417.5 580,418.2 581,418.5 582,417.9 583,418.2 584,418 585,417.5 586,417.9 587,418.1 588,417.5 589,418.1 590,416.7 591,417.7 592,417.6 593,417.8 594,418.3 595,418.2 596,418.7 597,418.4 598,417.8 599,418.1 600,417.7 601,417.9 602,418 603,417.7 604,418.1 605,417.9 606,418.1 607,418.3 608,417.8 609,418.6 610,417.5 611,417.5 612,417.7 613,418.1 614,418.2 615,418.2 616,418.1 617,418.4 618,417.7 619,417.6 620,416.6 621,416.2 622,418.4 623,417.7 624,416 625,417.9 626,417.5 627,417.8 628,417.9 629,418.1 630,418.6 631,418.5 632,417.7 633,418.5 634,417.9 635,418.5 636,417.8 637,417.6 638,418 639,418.7 640,417.8 641,418.1 642,417.7 643,418.5 644,418.4 645,417.6 646,417.7 647,417.6 648,418.1 649,417.9 650,417.6 651,417.9 652,418.6 653,418.5 654,418.7 655,418.6 656,418.7 657,418.2 658,418 659,416.2 660,418.2 661,418.5 662,417.6 663,417.6 664,417.5 665,418.7 666,418 667,417.9 668,418.1 669,418.5 670,417.6 671,418.1 672,418.7 673,418.3 674,417.8 675,418.5 676,417.8 677,418.4 678,418.2 679,418.3 680,418.5 681,417.6 682,418.3 683,417.8 684,416.1 685,418.4 686,418.7 687,418.1 688,418.4 689,417.7 690,418.5 691,417.8 692,418.7 693,418.4 694,418.5 695,417.7 696,418 697,416.4 698,418.6 699,418.3 700,417.6 701,418 702,417.8 703,418.1 704,418.5 705,417.6 706,418.4 707,418.5 708,417.9 709,418.6 710,417.8 711,417.8 712,418.2 713,418.1 714,418.1 715,418.6 716,418.6 717,418.3 718,418.7 719,418.5 720,418.3 721,417.9 722,418.1 723,418.5 724,417.8 725,417.7 726,417.9 727,417.9 728,418.4 729,417.7 730,418 731,418.5 732,417.9 733,417.9 734,418 735,418.1 736,417.8 737,417.8 738,418 739,418.6 740,418.4 741,417.5 742,418.2 743,417.9 744,418.5 745,418 746,418 747,417.8 748,417.5 749,418.2 750,418.3 751,418.5 752,418.3 753,418.2 754,417.5 755,418.1 756,417.9 757,417.8 758,418.7 759,418.4 760,418.1 761,418.6 762,418.5 763,417.8 764,417.9 765,418.5 766,418.6 767,417.7 768,418.1 769,418.3 770,417.8 771,417.9 772,417.5 773,418.6 774,417.8 775,418.1 776,418.4 777,418.1 778,418.7 779,418.6 780,418.6 781,417.9 782,417.8 783,418.4 784,418.3 785,417.8 786,418.2 787,416.8 788,417.6 789,418 790,418.1 791,418 792,418.7 793,418.2 794,417.8 795,417.9 796,417.6 797,418.3 798,418.1 799,418.4 800,418.5 801,418.6 802,418.5 803,417 804,418.2 805,418.2 806,417.8 807,417.8 808,416.6 809,417.9 810,418.1 811,418.3 812,418.1 813,417.9 814,417.6 815,417.7 816,417.1 817,417.9 818,418.6 819,418 820,417.7 821,417.9 822,418.6 823,418.2 824,418.5 825,417.9 826,417.8 827,417.8 828,417.8 828,423.6 827,423.6 826,424.2 825,423.9 824,423.4 823,423.5 822,423.7 821,423.5 820,423.5 819,424.2 818,423.4 817,424 816,424.3 815,424.1 814,425.7 813,423.8 812,424.2 811,423.7 810,423.5 809,424.2 808,424 807,423.8 806,424.2 805,423.3 804,424.2 803,425.7 802,423.7 801,423.6 800,423.9 799,423.6 798,423.9 797,423.3 796,423.4 795,423.5 794,424.1 793,423.5 792,424 791,423.6 790,424 789,423.9 788,423.8 787,423.7 786,423.9 785,423.6 784,424 783,423.4 782,423.7 781,424.2 780,423.6 779,424.1 778,424 777,423.9 776,423.9 775,423.8 774,423.3 773,424 772,424 771,423.5 770,423.3 769,423.7 768,424 767,423.5 766,423.6 765,423.6 764,423.5 763,424.2 762,424.2 761,423.3 760,423.9 759,423.5 758,424.1 757,424.2 756,423.7 755,423.5 754,423.6 753,424 752,424.2 751,423.6 750,423.7 749,425.5 748,423.8 747,423.6 746,423.7 745,423.8 744,423.4 743,424.3 742,424.3 741,423.6 740,423.7 739,424.2 738,424.1 737,423.4 736,423.9 735,423.8 734,424 733,423.5 732,423.6 731,424 730,424.2 729,423.6 728,424.1 727,424.2 726,423.8 725,423.8 724,424.1 723,423.8 722,423.4 721,423.7 720,423.6 719,424.2 718,423.9 717,424.1 716,423.5 715,424.1 714,423.7 713,423.4 712,423.4 711,424.2 710,424.2 709,423.9 708,423.8 707,423.3 706,423.8 705,423.8 704,424.2 703,424.1 702,424.1 701,423.8 700,423.3 699,424 698,424.1 697,424.1 696,423.9 695,423.9 694,424.1 693,423.4 692,423.4 691,423.9 690,423.9 689,424.3 688,424.3 687,424.1 686,423.4 685,423.4 684,423.6 683,423.4 682,423.5 681,423.8 680,424 679,423.4 678,423.9 677,424.1 676,424 675,424.2 674,423.5 673,424.1 672,423.6 671,423.7 670,424.2 669,425.6 668,423.9 667,423.9 666,423.9 665,423.4 664,423.4 663,424.1 662,423.7 661,423.7 660,424.2 659,424.3 658,423.7 657,423.5 656,424.2 655,424 654,423.7 653,423.8 652,424.2 651,423.4 650,423.9 649,423.3 648,423.7 647,423.7 646,423.9 645,423.6 644,423.8 643,423.8 642,423.7 641,423.3 640,423.4 639,424.2 638,424.3 637,423.4 636,423.8 635,423.6 634,423.9 633,423.8 632,424.1 631,424 630,424 629,423.9 628,424 627,423.5 626,424 625,423.4 624,423.7 623,423.4 622,423.5 621,423.4 620,424.2 619,423.7 618,424 617,424 616,424.3 615,424.2 614,424.2 613,423.8 612,423.4 611,423.8 610,423.4 609,423.9 608,423.6 607,423.6 606,424.2 605,423.6 604,423.8 603,424.3 602,424.3 601,424 600,424.2 599,423.4 598,425.7 597,423.5 596,424.1 595,424.2 594,424.2 593,423.7 592,423.4 591,423.9 590,423.4 589,423.6 588,423.7 587,424 586,424.1 585,424.1 584,423.9 583,424.3 582,423.4 581,423.8 580,424.2 579,423.4 578,425.3 577,423.5 576,424 575,423.8 574,423.9 573,424.3 572,423.4 571,424.1 570,424 569,424.2 568,425.7 567,424.1 566,423.6 565,423.9 564,423.4 563,423.7 562,423.4 561,423.5 560,425.1 559,423.7 558,423.8 557,423.4 556,424.2 555,423.4 554,424 553,424.3 552,423.4 551,423.3 550,424.2 549,424.2 548,423.9 547,424.1 546,424.1 545,424.1 544,424 543,424.2 542,424.1 541,423.9 540,423.7 539,423.4 538,423.7 537,424.2 536,423.8 535,423.8 534,423.8 533,424.2 532,424.1 531,424.2 530,424 529,423.7 528,423.6 527,423.8 526,424.2 525,425.3 524,424.3 523,424" fill="#28c8d2"/>
<polygon points="828,339.6 829,339.3 830,339.8 831,338.9 832,338.9 833,340 834,339.3 835,339.1 836,339.7 837,340 838,340 839,339.2 840,340 841,339.5 842,339 843,339.9 844,339.2 845,339.5 846,339.5 847,339.4 848,339.6 849,339 850,339.2 851,339.5 852,339.9 853,339.4 854,338.8 855,338.9 856,339.9 857,339.6 858,339.4 859,339.5 860,339.9 861,339.8 862,339.4 863,339.4 863,347.2 862,347.2 861,348.1 860,346.5 859,346.8 858,346.5 857,346.4 856,346.9 855,346.8 854,347 853,347.2 852,347.2 851,346.7 850,346.5 849,347.3 848,347.2 847,347 846,347.3 845,346.8 844,346.7 843,346.5 842,346.9 841,346.8 840,347.3 839,346.8 838,347.2 837,348.1 836,347.2 835,346.6 834,346.9 833,346.5 832,347.3 831,346.9 830,346.7 829,347 828,346.8" fill="#28c8d2"/>
<polygon points="863,417.8 864,417.8 865,417.9 866,417.9 867,418.7 868,416.9 869,418.3 870,418.4 871,418.2 872,418.2 873,418.3 874,418.7 875,417.7 876,417.6 877,416.5 878,418.4 879,418.2 880,417.6 881,418 882,417.9 883,417.9 884,416 885,417.9 886,418.6 887,418.1 888,417.6 889,418.5 890,418.6 891,418.6 892,418.6 893,418.5 894,417.8 895,418 896,417.8 897,416.5 898,418.3 899,417.8 900,418.5 901,418.3 902,418.2 903,417.9 904,417.8 905,418 906,418 907,418.4 908,418 909,417.7 910,418.2 911,417.8 912,418.1 913,418.1 914,418 915,418.5 916,418.4 917,418.5 918,416.6 919,417.9 920,417.9 921,416.9 922,418.3 923,418.5 924,417.9 925,418.2 926,418.4 927,418.4 928,417.6 929,418.1 930,417.5 931,418.3 932,418.4 933,417.8 934,417.6 935,418.5 936,417.7 937,418 938,416.1 939,417.6 940,418.2 941,417.6 942,418.5 943,418.2 944,418.2 945,418.4 946,418.1 947,417.8 948,418.6 949,418.1 950,418.1 951,418.5 952,417.9 953,418.4 954,418 955,416.5 956,417.8 957,417.6 958,417.6 959,418.1 960,418.4 961,416.9 962,417.8 963,417.8 964,417.7 965,417.7 966,418 967,416.1 968,417.9 969,417.9 970,417.7 971,417.9 972,417.8 973,417.6 974,418.2 975,417.8 976,418.3 977,416.6 978,417.7 979,417.5 980,417.6 981,417.8 982,417.7 983,417.6 984,418 985,418.4 986,418.7 987,416.3 988,417.8 989,417.8 990,418 991,417.9 992,416.3 993,418.1 994,417.9 995,418.4 996,418.1 997,417.9 998,418 999,418.4 1000,418.5 1001,417.9 1002,418.6 1003,417.7 1004,418.5 1005,416.3 1006,418.3 1007,417.6 1008,418.4 1009,418.5 1010,417.9 1011,417.8 1012,418.3 1013,418.1 1014,417.9 1015,418.3 1016,418.2 1017,418 1018,418.3 1019,418.5 1020,417.6 1021,418.6 1022,417.5 1023,417.7 1024,418.2 1025,417.7 1026,418.6 1027,418 1028,416.8 1029,418.3 1030,417.6 1031,418.7 1032,417.7 1033,418.6 1034,417.9 1035,418.4 1036,418.1 1037,417.6 1038,417.7 1039,418.6 1040,416.8 1041,418.1 1042,417.8 1043,418.7 1044,417.7 1045,417.7 1046,417.6 1047,418.5 1048,418.4 1049,416.2 1050,418.1 1051,418.4 1052,418.7 1053,418.4 1054,416.4 1055,417.8 1056,418.3 1057,417.6 1058,418.1 1059,418.1 1060,418.2 1061,418.2 1062,418.3 1063,417.7 1064,418.2 1065,418.4 1066,418.2 1067,416.1 1068,417.9 1069,418.6 1070,418.2 1071,418.1 1072,418.7 1073,417.5 1074,417.6 1075,417.1 1076,418 1077,418.3 1078,418.4 1079,418.4 1080,418.6 1081,417.9 1082,418.3 1083,417.9 1084,417.7 1085,418 1086,418.3 1087,418.5 1088,417.9 1089,417.9 1090,417.8 1091,418.5 1092,418.6 1093,417.6 1094,418 1095,418.6 1096,417.8 1097,418.6 1098,417.9 1099,418 1100,417.8 1101,418.6 1102,417.6 1103,417.6 1104,417.5 1105,417.8 1106,416.8 1107,417.5 1108,418 1109,417.8 1110,416.4 1111,418.5 1112,417.7 1113,416.4 1114,418.4 1115,418.2 1116,418.5 1117,418.2 1118,417.5 1119,418.2 1120,418.2 1121,417.7 1122,418.6 1123,418.6 1124,416.3 1125,418.5 1126,418 1127,416.2 1128,418 1129,418.6 1130,418.5 1131,418.1 1132,417.6 1133,417.9 1134,417.9 1135,418 1136,418.3 1137,418 1138,418.7 1139,418.2 1140,417.7 1141,418.5 1142,417.9 1143,417.8 1144,418.5 1145,417.7 1146,418.4 1147,417.5 1148,418.3 1149,418 1150,417.6 1151,417.7 1152,418.1 1153,418.5 1154,418 1155,418 1156,417.1 1157,418.2 1158,417.6 1159,418.1 1160,418.5 1161,417.9 1162,418.2 1163,417.6 1164,418.1 1165,418.7 1166,418.5 1167,418.5 1167,423.8 1166,423.8 1165,423.5 1164,424.2 1163,423.8 1162,423.7 1161,424.1 1160,424.1 1159,424.3 1158,424 1157,423.3 1156,423.9 1155,423.6 1154,424.2 1153,423.4 1152,423.6 1151,423.4 1150,423.5 1149,423.8 1148,423.3 1147,423.5 1146,423.8 1145,423.8 1144,423.6 1143,423.7 1142,423.7 1141,423.9 1140,424.1 1139,423.3 1138,424.2 1137,423.5 1136,424.1 1135,424 1134,423.4 1133,423.4 1132,424.1 1131,424.1 1130,423.9 1129,424.2 1128,423.4 1127,423.5 1126,424.1 1125,423.4 1124,424 1123,423.4 1122,424.2 1121,423.3 1120,424.2 1119,423.4 1118,424.2 1117,423.7 1116,424 1115,423.7 1114,424.1 1113,423.9 1112,424.1 1111,423.9 1110,423.5 1109,423.9 1108,423.5 1107,423.8 1106,423.3 1105,424.2 1104,423.3 1103,424 1102,424 1101,423.6 1100,424.1 1099,423.7 1098,424.3 1097,423.4 1096,424.2 1095,424 1094,423.9 1093,423.7 1092,423.5 1091,423.4 1090,423.4 1089,423.7 1088,425.3 1087,423.5 1086,424.1 1085,423.8 1084,423.8 1083,423.5 1082,423.8 1081,424.1 1080,424.9 1079,423.7 1078,423.6 1077,424.3 1076,424 1075,423.9 1074,423.6 1073,423.6 1072,423.3 1071,423.7 1070,424.2 1069,424.2 1068,424.2 1067,425.4 1066,423.3 1065,424.1 1064,423.6 1063,423.7 1062,424.1 1061,424.2 1060,423.6 1059,424.1 1058,424 1057,424.2 1056,423.3 1055,423.5 1054,423.7 1053,423.6 1052,425.1 1051,423.5 1050,423.7 1049,423.6 1048,423.4 1047,424.1 1046,423.4 1045,423.3 1044,423.5 1043,423.5 1042,424 1041,424.1 1040,424.3 1039,424.1 1038,423.8 1037,423.8 1036,423.6 1035,423.7 1034,423.7 1033,423.4 1032,424.2 1031,423.4 1030,425.5 1029,423.6 1028,424.1 1027,423.5 1026,424 1025,423.6 1024,423.3 1023,424.1 1022,423.9 1021,424 1020,423.7 1019,423.7 1018,423.5 1017,424.1 1016,423.6 1015,424.1 1014,423.3 1013,424.2 1012,424.1 1011,425.5 1010,423.9 1009,423.5 1008,423.9 1007,423.9 1006,423.6 1005,424.2 1004,423.9 1003,424.1 1002,423.5 1001,424.2 1000,424.3 999,424.1 998,423.4 997,424 996,423.4 995,423.4 994,423.5 993,423.6 992,423.5 991,423.8 990,424.2 989,423.5 988,423.7 987,423.4 986,423.7 985,423.5 984,424 983,423.7 982,423.8 981,423.8 980,424.2 979,424.3 978,423.5 977,424.2 976,423.5 975,423.9 974,423.3 973,423.7 972,423.4 971,423.9 970,423.3 969,423.9 968,424.3 967,423.8 966,423.8 965,423.4 964,423.7 963,424 962,423.8 961,423.6 960,423.5 959,423.9 958,423.8 957,423.6 956,423.6 955,423.6 954,423.9 953,423.7 952,424 951,423.3 950,423.5 949,424 948,423.9 947,423.9 946,423.4 945,423.8 944,423.7 943,423.6 942,423.8 941,423.6 940,423.7 939,425.7 938,423.7 937,423.9 936,424.1 935,423.8 934,423.3 933,424.1 932,424 931,423.3 930,423.5 929,423.6 928,423.7 927,424.2 926,424.2 925,423.9 924,424.1 923,423.6 922,423.3 921,424 920,423.4 919,425.6 918,424 917,423.9 916,424 915,423.4 914,424.2 913,423.6 912,424.2 911,423.4 910,423.7 909,424.9 908,423.8 907,423.7 906,424.3 905,423.8 904,423.7 903,423.8 902,425.4 901,423.9 900,423.4 899,424 898,423.3 897,424.1 896,423.9 895,423.7 894,423.5 893,424.1 892,423.4 891,423.8 890,424.2 889,423.7 888,423.8 887,424 886,424 885,424.3 884,423.8 883,423.6 882,423.5 881,423.7 880,424.2 879,423.8 878,423.9 877,423.5 876,424.1 875,424 874,424.1 873,425.6 872,423.5 871,423.6 870,424.2 869,423.7 868,423.9 867,423.5 866,424.2 865,423.9 864,424 863,424.1" fill="#28c8d2"/>
<polygon points="1167,339.8 1168,338.9 1169,339.6 1170,339.6 1171,338.8 1172,339.8 1173,339.3 1174,338.9 1175,338.9 1176,339.8 1177,339.4 1178,339.7 1179,339.2 1180,339.7 1181,339.8 1182,339.7 1183,339.8 1184,339.1 1185,339.7 1186,339.5 1187,339.7 1188,339.5 1189,339.6 1190,339.6 1191,339.1 1192,339.8 1193,339.2 1194,339.6 1195,339.9 1196,339.9 1197,338.9 1198,339.9 1199,338.2 1200,339 1201,339.9 1202,339.9 1202,347.2 1201,347.2 1200,347 1199,347.1 1198,346.4 1197,347.3 1196,347 1195,347.2 1194,346.9 1193,348.6 1192,346.5 1191,346.9 1190,347.4 1189,347.1 1188,346.6 1187,346.9 1186,347.2 1185,346.9 1184,346.6 1183,346.8 1182,346.7 1181,346.6 1180,347.1 1179,347.3 1178,347.2 1177,347.4 1176,346.8 1175,347.1 1174,346.6 1173,346.7 1172,346.6 1171,347.1 1170,347.9 1169,346.9 1168,346.7 1167,347.1" fill="#28c8d2"/>
<polygon points="1202,418.4 1203,418.4 1204,417.7 1205,418.6 1206,417.6 1207,418.6 1208,418 1209,417.8 1210,418 1211,418.1 1212,418.2 1213,418.4 1214,417.5 1215,418.2 1216,417.9 1217,418 1218,417.5 1219,418.4 1220,417 1221,417.6 1222,418.1 1223,417.9 1224,417.9 1225,417.8 1226,417.7 1227,417.9 1228,418.7 1229,417.7 1230,418.6 1231,417.7 1232,418.7 1233,417.8 1234,417.9 1235,418.7 1236,417.8 1237,418 1238,418.6 1239,417.6 1240,418 1241,418.1 1242,417.6 1243,418.5 1244,418.5 1245,417.6 1246,418.5 1247,417.7 1248,418.4 1249,417.7 1250,418.2 1251,418 1252,418 1253,418.2 1254,418.1 1255,417.9 1256,418.5 1257,417.6 1258,417.7 1259,418.5 1260,418.4 1261,418.2 1262,417.8 1263,418.1 1264,418.3 1265,417.8 1266,418.5 1267,417.8 1268,417.8 1269,418.6 1270,418 1271,418 1272,417.5 1273,418.3 1274,418.1 1275,417.6 1276,418.5 1277,417.6 1278,418.3 1279,418.3 1280,417.5 1281,418.2 1282,418.4 1283,418.5 1284,416.4 1285,417.9 1286,418.4 1287,418.1 1288,418.4 1289,417.7 1290,418.3 1291,416.5 1292,417.6 1293,418.4 1294,417.6 1295,418.1 1296,417.9 1297,416.9 1298,417.9 1299,417.8 1300,418 1301,417.7 1302,418.1 1303,418.7 1304,417.6 1305,418 1306,418 1307,418 1308,418.7 1309,418.4 1310,418.6 1311,416.4 1312,417.7 1313,417.9 1314,417.7 1315,416.8 1316,418.7 1317,418.2 1318,418.5 1319,418.3 1320,418.4 1321,418.5 1322,417.9 1323,418 1324,417.7 1325,416 1326,418.4 1327,417.6 1328,417.8 1329,418 1330,417.5 1331,418.1 1332,418.7 1333,418.6 1334,418.3 1335,417.9 1336,418 1337,417.9 1338,418.7 1339,418.4 1340,418 1341,417.9 1342,418.2 1343,418.4 1344,418.3 1345,417.8 1346,417.8 1347,418.4 1348,417.6 1349,418.6 1350,418.4 1351,418.2 1352,417.7 1353,418 1354,417.9 1355,417.6 1356,418.3 1357,418.5 1358,418.2 1359,418 1360,418.5 1361,418.7 1362,417.8 1363,417.5 1364,417.6 1365,418.2 1366,418.2 1367,416.2 1368,417.5 1369,418.3 1370,417.6 1371,417.9 1372,417 1373,418.2 1374,418.7 1375,418.2 1376,418.1 1377,417.7 1378,418.3 1379,417.9 1380,417.9 1381,418.1 1382,418 1383,418.1 1384,418 1385,418.1 1386,417.6 1387,418.6 1388,417.7 1389,417.8 1390,418.7 1391,417.8 1392,418.3 1393,418.1 1394,418.1 1395,417.8 1396,418.1 1397,417.9 1398,418.4 1399,418.6 1400,417.9 1401,417.5 1402,418.6 1403,417.6 1404,418.2 1405,417.9 1406,418.4 1407,417.9 1408,418.2 1409,417.7 1410,418.4 1411,418.3 1412,417.9 1413,418.6 1414,417.5 1415,416.5 1416,417.5 1417,418.5 1418,417.8 1419,418.5 1420,418.6 1421,418.2 1422,418.1 1423,418 1424,418.1 1425,418.5 1426,417.9 1427,418.4 1428,418.4 1429,417.8 1430,417.9 1431,417.8 1432,417.6 1433,417.7 1434,416.9 1435,417.5 1436,418.1 1437,418 1438,418.4 1439,418.2 1440,418 1441,418.7 1442,417.8 1443,418.3 1444,417.9 1445,417.8 1446,418 1447,418.6 1448,418 1449,418.3 1450,417.8 1451,417.8 1452,418.1 1453,417.8 1454,418.5 1455,417.7 1456,417.5 1457,417.6 1458,417.7 1459,418.2 1460,417.6 1461,418 1462,418.4 1463,418 1464,417.7 1465,417.9 1466,417.7 1467,418.7 1468,417.5 1469,417.6 1470,418.1 1471,417.6 1472,418.5 1473,418.3 1474,418.5 1475,417.9 1476,417.6 1477,417.6 1478,418.6 1479,417.8 1480,416.5 1481,418.4 1482,417.6 1483,418.1 1484,418.6 1485,418.2 1486,417.9 1487,417.7 1488,417 1489,418 1490,418.6 1491,417.6 1492,417.2 1493,417.5 1494,418 1495,417.8 1496,417.9 1497,418.1 1498,418.2 1499,418.5 1500,418.4 1501,418.6 1502,418.4 1503,417.9 1504,418 1505,418 1506,418 1506,424 1505,424 1504,424 1503,423.9 1502,423.3 1501,423.7 1500,424 1499,424.3 1498,424.1 1497,423.9 1496,423.7 1495,424.2 1494,424.2 1493,423.6 1492,424 1491,423.7 1490,423.4 1489,424.1 1488,423.4 1487,423.4 1486,423.3 1485,423.4 1484,425.5 1483,423.9 1482,423.9 1481,425.5 1480,423.4 1479,423.8 1478,423.7 1477,423.9 1476,424.2 1475,424.1 1474,423.4 1473,424.2 1472,424 1471,423.9 1470,424 1469,423.5 1468,424.2 1467,424.1 1466,424.2 1465,423.3 1464,424 1463,424 1462,423.6 1461,423.5 1460,423.6 1459,423.4 1458,423.4 1457,423.4 1456,425.3 1455,423.5 1454,423.8 1453,424.2 1452,424.1 1451,424.2 1450,423.7 1449,423.5 1448,424 1447,424.1 1446,423.4 1445,425 1444,424.2 1443,424.2 1442,424.2 1441,423.7 1440,423.5 1439,423.3 1438,423.8 1437,423.5 1436,423.5 1435,423.4 1434,423.6 1433,423.8 1432,424.1 1431,423.5 1430,423.4 1429,425.4 1428,423.5 1427,423.7 1426,424.1 1425,423.5 1424,424.2 1423,425.2 1422,424.2 1421,423.7 1420,424.2 1419,423.7 1418,423.6 1417,423.9 1416,425.8 1415,423.9 1414,424.1 1413,423.8 1412,423.9 1411,423.6 1410,424.2 1409,423.7 1408,423.7 1407,423.3 1406,423.8 1405,425.4 1404,423.7 1403,423.4 1402,423.3 1401,423.6 1400,423.4 1399,424.2 1398,423.9 1397,423.5 1396,423.4 1395,424.2 1394,423.3 1393,424 1392,424.3 1391,423.7 1390,424.2 1389,423.9 1388,423.4 1387,423.5 1386,424 1385,423.8 1384,424.2 1383,423.5 1382,424.3 1381,424.2 1380,424 1379,423.7 1378,424.3 1377,423.3 1376,423.8 1375,423.9 1374,423.8 1373,423.6 1372,423.4 1371,423.9 1370,424 1369,423.4 1368,424.2 1367,423.4 1366,424.3 1365,423.9 1364,424.2 1363,425.1 1362,423.6 1361,424.1 1360,423.8 1359,424 1358,423.8 1357,423.9 1356,423.9 1355,423.4 1354,423.6 1353,423.9 1352,424.2 1351,424.3 1350,423.9 1349,423.7 1348,423.4 1347,424 1346,423.7 1345,423.9 1344,423.6 1343,423.4 1342,423.5 1341,424.3 1340,423.5 1339,423.9 1338,423.5 1337,423.9 1336,423.8 1335,423.7 1334,423.5 1333,423.8 1332,423.6 1331,423.9 1330,423.5 1329,424.2 1328,423.7 1327,424.2 1326,424.1 1325,423.4 1324,423.3 1323,424 1322,424 1321,424.1 1320,423.5 1319,423.7 1318,424.2 1317,424.1 1316,424.2 1315,423.3 1314,423.7 1313,423.9 1312,424 1311,423.8 1310,423.5 1309,424.2 1308,424.2 1307,425.7 1306,424.2 1305,423.9 1304,424.8 1303,423.8 1302,424.2 1301,423.5 1300,423.6 1299,423.6 1298,424 1297,424.1 1296,425.6 1295,424 1294,424 1293,425.5 1292,424.2 1291,423.9 1290,424.2 1289,423.7 1288,423.9 1287,423.8 1286,423.9 1285,424.2 1284,424.2 1283,423.4 1282,423.5 1281,425 1280,424.3 1279,423.5 1278,423.8 1277,423.8 1276,423.7 1275,424.2 1274,424.3 1273,423.8 1272,423.6 1271,423.9 1270,424.2 1269,423.7 1268,423.6 1267,423.9 1266,423.4 1265,424.2 1264,423.8 1263,423.4 1262,423.4 1261,423.7 1260,423.9 1259,423.4 1258,425.3 1257,423.6 1256,423.3 1255,423.8 1254,423.5 1253,423.8 1252,424 1251,424.1 1250,423.5 1249,423.3 1248,423.4 1247,423.9 1246,423.4 1245,423.5 1244,423.7 1243,423.8 1242,423.4 1241,423.5 1240,423.4 1239,423.8 1238,423.9 1237,424.2 1236,424.2 1235,424.3 1234,423.4 1233,423.5 1232,423.9 1231,423.7 1230,423.5 1229,424 1228,423.6 1227,423.5 1226,423.8 1225,423.5 1224,423.7 1223,424.3 1222,423.9 1221,423.5 1220,423.6 1219,424 1218,424 1217,424 1216,423.5 1215,424.3 1214,423.4 1213,423.5 1212,423.7 1211,423.6 1210,423.6 1209,424 1208,424.2 1207,423.5 1206,423.4 1205,424.1 1204,423.6 1203,423.9 1202,423.5" fill="#28c8d2"/>
<polygon points="1506,339.4 1507,338.9 1508,339 1509,339.7 1510,339.3 1511,338.8 1512,339.7 1513,339.2 1514,339.2 1515,339.2 1516,339.3 1517,339.1 1518,339.5 1519,338.9 1520,339.3 1521,339.6 1522,339.2 1523,339.2 1524,338.9 1525,339.2 1526,339.4 1527,339.6 1528,338 1529,339.7 1530,339.3 1531,339 1532,339.3 1533,339.8 1534,340 1535,338.9 1536,339.6 1537,339.2 1538,338.9 1539,338.9 1540,339.3 1541,339.3 1541,346.6 1540,346.6 1539,346.6 1538,347.2 1537,347.2 1536,347.1 1535,346.8 1534,346.8 1533,346.8 1532,346.6 1531,346.9 1530,347.2 1529,347.4 1528,346.9 1527,347.1 1526,346.9 1525,347.3 1524,346.4 1523,346.4 1522,346.5 1521,347.3 1520,347 1519,347.4 1518,346.8 1517,347.2 1516,348.2 1515,346.7 1514,347.3 1513,346.7 1512,347.1 1511,346.4 1510,346.6 1509,346.8 1508,347 1507,347.3 1506,346.7" fill="#28c8d2"/>
<polygon points="1541,417.6 1542,418.2 1543,417.6 1544,417.9 1545,418.6 1546,417.7 1547,418.5 1548,417.5 1549,418.6 1550,417.8 1551,418.5 1552,418.1 1553,418.3 1554,416.1 1555,418.4 1556,417.8 1557,417.6 1558,418.6 1559,417.8 1560,418.6 1561,417.8 1562,417.7 1563,418.5 1564,417.6 1565,418.2 1566,418.3 1567,417.5 1568,418.2 1569,418.4 1570,418.3 1571,417.6 1572,416 1573,418.2 1574,418.1 1575,418 1576,417.7 1577,418.7 1578,417.7 1579,416 1580,418.2 1581,418.2 1582,417.6 1583,418.2 1584,418.2 1585,417.7 1586,418.1 1587,417.9 1588,418.4 1589,417.9 1590,418.3 1591,417.8 1592,418.1 1593,416.1 1594,418 1595,417.7 1596,418.2 1597,417.9 1598,418.4 1599,416.5 1600,417.9 1601,418.5 1602,418 1603,417.6 1604,418.5 1605,418.1 1606,417.7 1607,416.7 1608,418.7 1609,418.1 1610,418.1 1611,417.6 1612,417.9 1613,417.8 1614,418.3 1615,417.6 1616,417.7 1617,418.6 1618,416.4 1619,417.6 1620,417.9 1621,417.5 1622,418.4 1623,418 1624,418.1 1625,418.3 1626,417.8 1627,418.2 1628,417.9 1629,417.8 1630,417.8 1631,418.6 1632,418.6 1633,417.7 1634,416.4 1635,418.5 1636,418.5 1637,418.1 1638,418.5 1639,417.6 1640,418.4 1641,417.6 1642,417.8 1643,418 1644,417.9 1645,417.9 1646,418.4 1647,418.1 1648,417.1 1649,418.6 1650,417.6 1651,417.7 1652,417.8 1653,418.6 1654,418 1655,417.8 1656,418.2 1657,418.2 1658,417.8 1659,418.7 1660,418.1 1661,418.4 1662,418.2 1663,418 1664,418.2 1665,417.6 1666,417.6 1667,417.8 1668,417.7 1669,418.1 1670,418.4 1671,417.7 1672,418.6 1673,418 1674,417.9 1675,418.6 1676,418.5 1677,416.4 1678,417.7 1679,418.2 1680,416.6 1681,417.9 1682,418 1683,418.1 1684,417.9 1685,416.3 1686,417.7 1687,418 1688,417.9 1689,418.5 1690,418.5 1691,417.7 1692,418.4 1693,418.2 1694,417.6 1695,418.5 1696,417.9 1697,418.4 1698,417.9 1699,417.7 1700,417.7 1701,417.8 1702,418.1 1703,418 1704,418.5 1705,418.6 1706,417.8 1707,418.6 1708,417.6 1709,417 1710,417 1710,425.6 1709,425.6 1708,423.3 1707,423.9 1706,423.6 1705,424.2 1704,424 1703,423.9 1702,424 1701,423.6 1700,423.9 1699,423.7 1698,423.3 1697,423.9 1696,423.9 1695,424.1 1694,424.1 1693,424.1 1692,423.6 1691,424.2 1690,423.3 1689,424.1 1688,423.7 1687,423.8 1686,424 1685,423.6 1684,423.4 1683,424.2 1682,425.5 1681,423.7 1680,423.5 1679,423.6 1678,423.8 1677,423.5 1676,424.1 1675,424.1 1674,423.8 1673,423.4 1672,423.4 1671,423.7 1670,423.6 1669,424 1668,423.6 1667,424 1666,424.1 1665,423.8 1664,424.2 1663,424.3 1662,424.3 1661,425.3 1660,424 1659,423.3 1658,423.8 1657,424.1 1656,423.3 1655,423.4 1654,424.3 1653,423.4 1652,424.2 1651,424 1650,423.5 1649,424 1648,423.6 1647,424.1 1646,423.3 1645,424.2 1644,423.7 1643,423.4 1642,423.9 1641,424.1 1640,423.7 1639,423.7 1638,424.1 1637,423.7 1636,423.4 1635,423.6 1634,424.1 1633,423.8 1632,423.9 1631,423.6 1630,423.4 1629,424.2 1628,423.7 1627,423.4 1626,423.8 1625,423.8 1624,423.3 1623,424.1 1622,423.7 1621,423.7 1620,423.6 1619,424.3 1618,423.4 1617,423.5 1616,424.2 1615,424.1 1614,423.9 1613,425.7 1612,423.9 1611,424.1 1610,424 1609,423.7 1608,423.5 1607,423.8 1606,424 1605,424.1 1604,424.1 1603,423.7 1602,423.4 1601,424.1 1600,423.6 1599,423.7 1598,423.9 1597,423.3 1596,423.4 1595,423.4 1594,423.6 1593,423.8 1592,424.3 1591,424.8 1590,424 1589,425.6 1588,424.2 1587,423.9 1586,423.5 1585,424.1 1584,423.5 1583,423.7 1582,424.2 1581,424 1580,423.9 1579,424 1578,423.7 1577,424.3 1576,424 1575,424.1 1574,423.5 1573,424 1572,423.6 1571,423.4 1570,424.2 1569,424.2 1568,423.8 1567,424 1566,423.4 1565,423.8 1564,424 1563,423.7 1562,423.9 1561,424 1560,423.7 1559,423.8 1558,423.9 1557,423.8 1556,424.1 1555,424.2 1554,423.9 1553,424.2 1552,423.9 1551,423.8 1550,424 1549,423.4 1548,423.6 1547,423.7 1546,423.4 1545,423.6 1544,424.2 1543,424.1 1542,424 1541,425.5" fill="#28c8d2"/>
<rect x="149" y="343.2" width="1" height="77.8" fill="#239aa2"/>
<rect x="183" y="343.2" width="1" height="77.8" fill="#239aa2"/>
<rect x="488" y="343.2" width="1" height="77.8" fill="#239aa2"/>
<rect x="522" y="343.2" width="1" height="77.8" fill="#239aa2"/>
<rect x="828" y="343.2" width="1" height="77.8" fill="#239aa2"/>
<rect x="862" y="343.2" width="1" height="77.8" fill="#239aa2"/>
<rect x="1167" y="343.2" width="1" height="77.8" fill="#239aa2"/>
<rect x="1201" y="343.2" width="1" height="77.8" fill="#239aa2"/>
<rect x="1506" y="343.2" width="1" height="77.8" fill="#239aa2"/>
<rect x="1540" y="343.2" width="1" height="77.8" fill="#239aa2"/>
<text x="64.5" y="745.3" font-family="DejaVu Sans, sans-serif" font-size="21" fill="#d84a68">Vsw</text>
<path d="M13.5 733V615.7M14.5 733V613.9M15.5 733V612M16.5 733V616.9M17.5 733V653.5M18.5 733V614.7M19.5 733V611.5M20.5 733V616.6M21.5 733V627.7M22.5 733V616.5M23.5 733V614.8M24.5 733V616.8M25.5 733V615.9M26.5 733V615.4M27.5 733V629.1M28.5 733V630.1M29.5 733V616.1M30.5 733V612.4M31.5 733V615.1M32.5 733V617.6M33.5 733V634.8M34.5 733V612.5M35.5 733V612.5M36.5 733V612.6M37.5 733V614M38.5 733V613.9M39.5 733V652.5M40.5 733V651.6M41.5 733V614M42.5 733V614.9M43.5 733V614.2M44.5 733V613.2M45.5 733V612M46.5 733V643.7M47.5 733V618.8M48.5 733V616.3M49.5 733V613.1M50.5 733V618.1M51.5 733V615.2M52.5 733V624.3M53.5 733V624.1M54.5 733V608.1M55.5 733V614.9M56.5 733V612.9M57.5 733V616.4M58.5 733V614.1M59.5 733V626.1M60.5 733V626.2M61.5 733V615.1M62.5 733V614.1M63.5 733V617.5M64.5 733V615.5M65.5 733V616.8M66.5 733V617.1M67.5 733V642.5M68.5 733V616.9M69.5 733V614.7M70.5 733V631.9M71.5 733V630.9M72.5 733V613.3M73.5 733V612.7M74.5 733V611.4M75.5 733V631.5M76.5 733V629.9M77.5 733V620.3M78.5 733V615.3M79.5 733V618.9M80.5 733V620.2M81.5 733V637.9M82.5 733V614.5M83.5 733V615.9M84.5 733V616.5M85.5 733V616.6M86.5 733V612.6M87.5 733V616.6M88.5 733V637.2M89.5 733V612.3M90.5 733V613.7M91.5 733V643.6M92.5 733V642.8M93.5 733V614.8M94.5 733V612.9M95.5 733V615.3M96.5 733V616.1M97.5 733V606.3M98.5 733V614.7M99.5 733V629.5M100.5 733V611.8M101.5 733V613.1M102.5 733V642.2M103.5 733V615.5M104.5 733V614.7M105.5 733V614.1M106.5 733V615.5M107.5 733V614.5M108.5 733V615.1M109.5 733V635.3M110.5 733V613M111.5 733V614M112.5 733V612.2M113.5 733V632.2M114.5 733V633.2M115.5 733V612.7M116.5 733V610M117.5 733V612.5M118.5 733V613.6M119.5 733V612.2M120.5 733V609.4M121.5 733V654.2M122.5 733V614M123.5 733V615.4M124.5 733V616.1M125.5 733V614.4M126.5 733V617M127.5 733V615.4M128.5 733V651.4M129.5 733V614.4M130.5 733V615.6M131.5 733V615.6M132.5 733V615.3M133.5 733V616M134.5 733V615.5M135.5 733V641.8M136.5 733V617.5M137.5 733V614.8M138.5 733V614.7M139.5 733V614.9M140.5 733V615.5M141.5 733V614M142.5 733V633.1M143.5 733V615.9M144.5 733V620.1M145.5 733V616.3M146.5 733V618.1M147.5 733V643.2M148.5 733V611.1M149.5 733V611.9M150.5 733V642.5M151.5 733V642.5M152.5 733V598.9M153.5 733V599.6M154.5 733V598.1M155.5 733V628.2M156.5 733V581M157.5 733V600.8M158.5 733V631.2M159.5 733V631.2M160.5 733V564.2M161.5 733V566.8M162.5 733V596.1M163.5 733V634.7M164.5 733V634.7M165.5 733V595.7M166.5 733V582.1M167.5 733V587.2M168.5 733V646.3M169.5 733V646.3M170.5 733V592.5M171.5 733V589.8M172.5 733V592.5M173.5 733V621.7M174.5 733V587.4M175.5 733V590.2M176.5 733V569.3M177.5 733V653.2M178.5 733V579.9M179.5 733V582.6M180.5 733V596.5M181.5 733V634.3M182.5 733V634.3M183.5 733V576.4M184.5 733V601.6M185.5 733V601.4M186.5 733V645.2M187.5 733V610.5M188.5 733V614.2M189.5 733V611.1M190.5 733V615.8M191.5 733V642M192.5 733V641.4M193.5 733V613.3M194.5 733V614.2M195.5 733V616.4M196.5 733V613.9M197.5 733V625.6M198.5 733V610.8M199.5 733V610.1M200.5 733V610.2M201.5 733V636.2M202.5 733V635.4M203.5 733V615.4M204.5 733V613.7M205.5 733V626.5M206.5 733V615.3M207.5 733V614.9M208.5 733V617.7M209.5 733V615.8M210.5 733V616.8M211.5 733V615.8M212.5 733V648M213.5 733V612.9M214.5 733V612.8M215.5 733V611.3M216.5 733V612.3M217.5 733V614M218.5 733V627.8M219.5 733V612.2M220.5 733V612.4M221.5 733V652.8M222.5 733V621M223.5 733V622.3M224.5 733V631.3M225.5 733V614.7M226.5 733V614.3M227.5 733V612.3M228.5 733V613.5M229.5 733V607.5M230.5 733V645.2M231.5 733V645.6M232.5 733V616.5M233.5 733V618M234.5 733V618.8M235.5 733V619.3M236.5 733V642.6M237.5 733V608.5M238.5 733V613.4M239.5 733V610.6M240.5 733V613.6M241.5 733V635.5M242.5 733V612.8M243.5 733V608M244.5 733V610.3M245.5 733V648.1M246.5 733V648M247.5 733V615.2M248.5 733V616.9M249.5 733V630.6M250.5 733V616.5M251.5 733V620M252.5 733V617.8M253.5 733V613.9M254.5 733V616.6M255.5 733V649.2M256.5 733V647.4M257.5 733V616M258.5 733V613.7M259.5 733V644M260.5 733V616.1M261.5 733V617.4M262.5 733V618.7M263.5 733V651.1M264.5 733V619.2M265.5 733V618.1M266.5 733V618.3M267.5 733V618.9M268.5 733V618.8M269.5 733V614.2M270.5 733V627.2M271.5 733V610.7M272.5 733V610M273.5 733V610.1M274.5 733V606.7M275.5 733V608.7M276.5 733V641.9M277.5 733V641.6M278.5 733V614.7M279.5 733V616.5M280.5 733V617.8M281.5 733V619M282.5 733V616.3M283.5 733V645.7M284.5 733V609.6M285.5 733V610.5M286.5 733V602.3M287.5 733V605.2M288.5 733V610M289.5 733V626M290.5 733V615.7M291.5 733V616.1M292.5 733V616.7M293.5 733V650.2M294.5 733V614.4M295.5 733V612.8M296.5 733V609M297.5 733V634.7M298.5 733V635.8M299.5 733V615.8M300.5 733V616.2M301.5 733V613.4M302.5 733V616.5M303.5 733V628.7M304.5 733V617.4M305.5 733V616.9M306.5 733V618.1M307.5 733V615.5M308.5 733V626M309.5 733V617M310.5 733V615.3M311.5 733V615.2M312.5 733V615.2M313.5 733V615M314.5 733V614.9M315.5 733V644.3M316.5 733V617.4M317.5 733V619.8M318.5 733V620M319.5 733V621.7M320.5 733V617.8M321.5 733V617.5M322.5 733V637.3M323.5 733V635M324.5 733V618.8M325.5 733V617.5M326.5 733V615.9M327.5 733V626.2M328.5 733V618M329.5 733V617M330.5 733V617.8M331.5 733V630.9M332.5 733V614.3M333.5 733V615M334.5 733V614.7M335.5 733V616.7M336.5 733V608.6M337.5 733V614M338.5 733V649.4M339.5 733V647.3M340.5 733V616.5M341.5 733V618.2M342.5 733V620.5M343.5 733V639.6M344.5 733V639.8M345.5 733V616.6M346.5 733V613.6M347.5 733V651.9M348.5 733V609M349.5 733V614.8M350.5 733V617.1M351.5 733V611.6M352.5 733V623.2M353.5 733V623.4M354.5 733V615.7M355.5 733V613.4M356.5 733V635.6M357.5 733V614.7M358.5 733V615.4M359.5 733V650.4M360.5 733V650.1M361.5 733V613.3M362.5 733V613.1M363.5 733V615.4M364.5 733V615.1M365.5 733V638.7M366.5 733V611.3M367.5 733V613.1M368.5 733V613.2M369.5 733V632.7M370.5 733V610.1M371.5 733V605.3M372.5 733V611M373.5 733V612M374.5 733V608.4M375.5 733V637.9M376.5 733V616M377.5 733V617.2M378.5 733V618M379.5 733V616.1M380.5 733V616.6M381.5 733V615.7M382.5 733V631.7M383.5 733V615.9M384.5 733V609.1M385.5 733V616.5M386.5 733V615M387.5 733V626M388.5 733V625.9M389.5 733V615.6M390.5 733V613.3M391.5 733V614.1M392.5 733V617.1M393.5 733V615.9M394.5 733V644.9M395.5 733V644.5M396.5 733V613.6M397.5 733V614.5M398.5 733V616.1M399.5 733V612.7M400.5 733V648.6M401.5 733V645.8M402.5 733V615.7M403.5 733V615.6M404.5 733V616.3M405.5 733V617.7M406.5 733V633M407.5 733V630.8M408.5 733V616.3M409.5 733V619.4M410.5 733V619.3M411.5 733V627.9M412.5 733V626.9M413.5 733V616.4M414.5 733V616.5M415.5 733V615M416.5 733V632.8M417.5 733V635.4M418.5 733V616.9M419.5 733V617.9M420.5 733V613.5M421.5 733V609M422.5 733V612.3M423.5 733V632.1M424.5 733V614.5M425.5 733V615.4M426.5 733V615.5M427.5 733V613.4M428.5 733V613.5M429.5 733V632.2M430.5 733V631.9M431.5 733V610.9M432.5 733V612M433.5 733V612.7M434.5 733V611.7M435.5 733V610.1M436.5 733V634.3M437.5 733V612.1M438.5 733V610.4M439.5 733V613.7M440.5 733V612M441.5 733V611.6M442.5 733V612.2M443.5 733V630.2M444.5 733V617.4M445.5 733V618.1M446.5 733V611.6M447.5 733V630M448.5 733V619.2M449.5 733V620.6M450.5 733V617.1M451.5 733V619.4M452.5 733V618.5M453.5 733V617.9M454.5 733V624.5M455.5 733V622.6M456.5 733V608.8M457.5 733V608.1M458.5 733V609.9M459.5 733V630.6M460.5 733V613.2M461.5 733V615.9M462.5 733V642.6M463.5 733V616.1M464.5 733V617.8M465.5 733V615.8M466.5 733V614.5M467.5 733V613.2M468.5 733V615.4M469.5 733V624.3M470.5 733V617.1M471.5 733V616.1M472.5 733V615M473.5 733V615.5M474.5 733V614.8M475.5 733V614.9M476.5 733V649.2M477.5 733V646.9M478.5 733V612M479.5 733V610M480.5 733V611.2M481.5 733V611.4M482.5 733V633.1M483.5 733V613.2M484.5 733V614.9M485.5 733V647.8M486.5 733V612.5M487.5 733V610.8M488.5 733V609.7M489.5 733V652.7M490.5 733V575M491.5 733V599.9M492.5 733V634.3M493.5 733V569.7M494.5 733V593.2M495.5 733V619.2M496.5 733V619.2M497.5 733V571.7M498.5 733V576.9M499.5 733V634.3M500.5 733V574.9M501.5 733V586.3M502.5 733V651M503.5 733V651M504.5 733V593.5M505.5 733V561.6M506.5 733V639.8M507.5 733V593.7M508.5 733V571M509.5 733V653.2M510.5 733V580.1M511.5 733V582.5M512.5 733V595.1M513.5 733V638.3M514.5 733V587.9M515.5 733V576.8M516.5 733V623M517.5 733V600.4M518.5 733V600M519.5 733V566.9M520.5 733V632.5M521.5 733V632.5M522.5 733V593.7M523.5 733V573.8M524.5 733V649.6M525.5 733V649.6M526.5 733V614.6M527.5 733V615.1M528.5 733V612.3M529.5 733V631.4M530.5 733V632.2M531.5 733V607.8M532.5 733V610M533.5 733V632.9M534.5 733V634.6M535.5 733V610.9M536.5 733V612.3M537.5 733V613.9M538.5 733V636.3M539.5 733V615.1M540.5 733V606.4M541.5 733V614M542.5 733V635.9M543.5 733V610.4M544.5 733V609.8M545.5 733V607.8M546.5 733V611.3M547.5 733V608.7M548.5 733V610.3M549.5 733V630.5M550.5 733V615.9M551.5 733V614.5M552.5 733V613.5M553.5 733V614.3M554.5 733V614M555.5 733V615.9M556.5 733V630.7M557.5 733V630.2M558.5 733V619.3M559.5 733V617.8M560.5 733V617.8M561.5 733V619.3M562.5 733V615.6M563.5 733V616.5M564.5 733V645.7M565.5 733V646.6M566.5 733V608.5M567.5 733V611M568.5 733V612.8M569.5 733V609.3M570.5 733V640.9M571.5 733V616.1M572.5 733V615.4M573.5 733V616.1M574.5 733V610.1M575.5 733V648.9M576.5 733V617.3M577.5 733V613.9M578.5 733V614.9M579.5 733V612.9M580.5 733V616.3M581.5 733V640.5M582.5 733V641.7M583.5 733V612.7M584.5 733V614.3M585.5 733V615M586.5 733V633.9M587.5 733V633.2M588.5 733V613.5M589.5 733V616.7M590.5 733V612.4M591.5 733V616M592.5 733V613.9M593.5 733V638M594.5 733V638.3M595.5 733V612.1M596.5 733V613.9M597.5 733V615.4M598.5 733V612.2M599.5 733V613.4M600.5 733V610.3M601.5 733V637.1M602.5 733V636.1M603.5 733V615.3M604.5 733V614.9M605.5 733V609M606.5 733V631.6M607.5 733V615M608.5 733V614M609.5 733V615.7M610.5 733V612.1M611.5 733V623.3M612.5 733V623.3M613.5 733V611.3M614.5 733V613.7M615.5 733V623.1M616.5 733V622.7M617.5 733V613.3M618.5 733V612.8M619.5 733V611.8M620.5 733V616.4M621.5 733V639.4M622.5 733V639.2M623.5 733V616M624.5 733V616.3M625.5 733V617.6M626.5 733V615.9M627.5 733V628.7M628.5 733V617.2M629.5 733V617.6M630.5 733V617.6M631.5 733V617.2M632.5 733V618.9M633.5 733V624.9M634.5 733V615.3M635.5 733V612.9M636.5 733V624.1M637.5 733V614.8M638.5 733V614M639.5 733V611.6M640.5 733V652.6M641.5 733V614.4M642.5 733V613.7M643.5 733V615.2M644.5 733V615.9M645.5 733V612.6M646.5 733V611.9M647.5 733V627.1M648.5 733V613.8M649.5 733V615.4M650.5 733V615.6M651.5 733V616.2M652.5 733V614.3M653.5 733V612.9M654.5 733V645.2M655.5 733V616.7M656.5 733V616.2M657.5 733V629.9M658.5 733V628.4M659.5 733V609.6M660.5 733V610.9M661.5 733V610.8M662.5 733V613.2M663.5 733V613.8M664.5 733V613.5M665.5 733V649.3M666.5 733V647.6M667.5 733V614.5M668.5 733V615.2M669.5 733V618.2M670.5 733V614.9M671.5 733V613M672.5 733V642.3M673.5 733V642.4M674.5 733V614.5M675.5 733V613.9M676.5 733V613.3M677.5 733V612.5M678.5 733V612.2M679.5 733V638.5M680.5 733V613.2M681.5 733V614M682.5 733V634.9M683.5 733V616.6M684.5 733V616.9M685.5 733V644.7M686.5 733V617.8M687.5 733V618.7M688.5 733V615.5M689.5 733V649.5M690.5 733V649.1M691.5 733V611.1M692.5 733V612.3M693.5 733V612.8M694.5 733V611.1M695.5 733V612.6M696.5 733V640.3M697.5 733V609.6M698.5 733V614.9M699.5 733V614.1M700.5 733V636.7M701.5 733V613.5M702.5 733V615.8M703.5 733V615.3M704.5 733V614M705.5 733V616.5M706.5 733V648.5M707.5 733V610.1M708.5 733V613.1M709.5 733V609.9M710.5 733V609.4M711.5 733V608.7M712.5 733V629.8M713.5 733V631.1M714.5 733V615.4M715.5 733V617.6M716.5 733V618.2M717.5 733V616M718.5 733V618.1M719.5 733V619.4M720.5 733V638.6M721.5 733V615.5M722.5 733V615.9M723.5 733V632M724.5 733V615.8M725.5 733V617.3M726.5 733V613.2M727.5 733V614.6M728.5 733V616M729.5 733V612.2M730.5 733V623.9M731.5 733V626.8M732.5 733V614.7M733.5 733V614.2M734.5 733V645.2M735.5 733V616.3M736.5 733V615M737.5 733V612.5M738.5 733V631.1M739.5 733V613.4M740.5 733V612.1M741.5 733V652.1M742.5 733V614.5M743.5 733V614.5M744.5 733V615.1M745.5 733V612.5M746.5 733V612.8M747.5 733V613.8M748.5 733V632.7M749.5 733V611M750.5 733V608.3M751.5 733V610.3M752.5 733V609.9M753.5 733V626.7M754.5 733V629M755.5 733V613.8M756.5 733V615.8M757.5 733V614.8M758.5 733V616.3M759.5 733V615.9M760.5 733V615.5M761.5 733V650.7M762.5 733V613M763.5 733V613.9M764.5 733V649.1M765.5 733V608.9M766.5 733V605.9M767.5 733V604.3M768.5 733V606.7M769.5 733V603.6M770.5 733V622.8M771.5 733V624M772.5 733V614.3M773.5 733V610.3M774.5 733V610.4M775.5 733V611.3M776.5 733V613.1M777.5 733V612.8M778.5 733V628.9M779.5 733V611.6M780.5 733V612.5M781.5 733V614.4M782.5 733V611.8M783.5 733V612.2M784.5 733V631.2M785.5 733V611.9M786.5 733V611.1M787.5 733V638M788.5 733V614.1M789.5 733V616.1M790.5 733V615.4M791.5 733V616.3M792.5 733V614.8M793.5 733V650.8M794.5 733V613.7M795.5 733V613.7M796.5 733V614.1M797.5 733V612.6M798.5 733V612M799.5 733V611.8M800.5 733V631.2M801.5 733V612.9M802.5 733V613.8M803.5 733V614M804.5 733V612.6M805.5 733V614.3M806.5 733V634.1M807.5 733V635.1M808.5 733V615.9M809.5 733V615.2M810.5 733V615.9M811.5 733V614.9M812.5 733V613.5M813.5 733V614.6M814.5 733V631.5M815.5 733V615.5M816.5 733V615M817.5 733V646.4M818.5 733V644.6M819.5 733V613.2M820.5 733V619.7M821.5 733V619.1M822.5 733V648.2M823.5 733V650.2M824.5 733V614.8M825.5 733V616.5M826.5 733V612.8M827.5 733V625.3M828.5 733V582.4M829.5 733V585.7M830.5 733V586M831.5 733V631.8M832.5 733V631.8M833.5 733V571.1M834.5 733V604.6M835.5 733V647.7M836.5 733V561M837.5 733V566.8M838.5 733V601.4M839.5 733V652.7M840.5 733V585.5M841.5 733V572.3M842.5 733V576.5M843.5 733V636.8M844.5 733V597.5M845.5 733V599.5M846.5 733V647.7M847.5 733V567.9M848.5 733V598.4M849.5 733V641.7M850.5 733V600.9M851.5 733V562.5M852.5 733V643.7M853.5 733V643.7M854.5 733V596.1M855.5 733V574.8M856.5 733V579M857.5 733V633.9M858.5 733V633.9M859.5 733V601M860.5 733V602.1M861.5 733V568.2M862.5 733V626.3M863.5 733V601.7M864.5 733V603.2M865.5 733V641.6M866.5 733V610.6M867.5 733V615.7M868.5 733V646.5M869.5 733V602.4M870.5 733V607.6M871.5 733V609.2M872.5 733V607.5M873.5 733V609.4M874.5 733V607.1M875.5 733V629.6M876.5 733V629M877.5 733V610.3M878.5 733V614.9M879.5 733V618.5M880.5 733V612.9M881.5 733V648.5M882.5 733V647.4M883.5 733V609.6M884.5 733V612.2M885.5 733V609.6M886.5 733V611M887.5 733V611.8M888.5 733V639.9M889.5 733V639.5M890.5 733V613.7M891.5 733V616.2M892.5 733V616.2M893.5 733V615.2M894.5 733V611.2M895.5 733V645.2M896.5 733V611.5M897.5 733V608.6M898.5 733V610.3M899.5 733V612M900.5 733V605.4M901.5 733V646.9M902.5 733V614.2M903.5 733V614.9M904.5 733V615.7M905.5 733V615.6M906.5 733V640.8M907.5 733V613.7M908.5 733V611.9M909.5 733V647.7M910.5 733V613.1M911.5 733V611.9M912.5 733V613M913.5 733V649.4M914.5 733V649.6M915.5 733V612.7M916.5 733V611.2M917.5 733V614.4M918.5 733V613.4M919.5 733V625.2M920.5 733V624.4M921.5 733V617.3M922.5 733V613.7M923.5 733V641.1M924.5 733V641.9M925.5 733V614.1M926.5 733V616.1M927.5 733V633.2M928.5 733V613.5M929.5 733V613.1M930.5 733V626.6M931.5 733V614.4M932.5 733V613M933.5 733V626M934.5 733V615M935.5 733V615.8M936.5 733V609.5M937.5 733V614.5M938.5 733V613.5M939.5 733V614.4M940.5 733V631.2M941.5 733V609M942.5 733V610.2M943.5 733V651.9M944.5 733V613.9M945.5 733V616.9M946.5 733V619.4M947.5 733V618.3M948.5 733V626.7M949.5 733V610.4M950.5 733V612.5M951.5 733V611.9M952.5 733V647.7M953.5 733V614.6M954.5 733V613.1M955.5 733V611.9M956.5 733V615.7M957.5 733V628.2M958.5 733V629.9M959.5 733V614.9M960.5 733V614.2M961.5 733V615.2M962.5 733V617.8M963.5 733V614.3M964.5 733V615.9M965.5 733V645.9M966.5 733V644.6M967.5 733V611.5M968.5 733V607.1M969.5 733V611.9M970.5 733V614.2M971.5 733V611.4M972.5 733V612.4M973.5 733V638.2M974.5 733V638.5M975.5 733V612M976.5 733V613.2M977.5 733V615.8M978.5 733V612.5M979.5 733V614.1M980.5 733V633.1M981.5 733V613.4M982.5 733V614.8M983.5 733V615.1M984.5 733V617.7M985.5 733V618M986.5 733V615.2M987.5 733V640.6M988.5 733V611.9M989.5 733V610.4M990.5 733V639.3M991.5 733V609.5M992.5 733V609.7M993.5 733V612.1M994.5 733V612.5M995.5 733V612.1M996.5 733V650.8M997.5 733V617.3M998.5 733V618.6M999.5 733V634M1000.5 733V634.3M1001.5 733V614.2M1002.5 733V612.4M1003.5 733V636.8M1004.5 733V615M1005.5 733V613.4M1006.5 733V614M1007.5 733V651.9M1008.5 733V615.5M1009.5 733V616.9M1010.5 733V615.5M1011.5 733V615.1M1012.5 733V629.1M1013.5 733V614.4M1014.5 733V613.6M1015.5 733V615.2M1016.5 733V633.7M1017.5 733V614.6M1018.5 733V617.5M1019.5 733V614.7M1020.5 733V624.6M1021.5 733V618.6M1022.5 733V619M1023.5 733V629.1M1024.5 733V617.8M1025.5 733V618M1026.5 733V618.5M1027.5 733V620.3M1028.5 733V633M1029.5 733V633.7M1030.5 733V615.9M1031.5 733V614.7M1032.5 733V616.9M1033.5 733V651.3M1034.5 733V651.4M1035.5 733V618.8M1036.5 733V616.4M1037.5 733V617.9M1038.5 733V641.7M1039.5 733V642.1M1040.5 733V611.8M1041.5 733V611.2M1042.5 733V613.1M1043.5 733V612.9M1044.5 733V647M1045.5 733V614.1M1046.5 733V616.8M1047.5 733V616.4M1048.5 733V616.2M1049.5 733V632.7M1050.5 733V614.9M1051.5 733V612.1M1052.5 733V615.7M1053.5 733V614.3M1054.5 733V613.2M1055.5 733V616.6M1056.5 733V650.3M1057.5 733V615.8M1058.5 733V616.1M1059.5 733V613.6M1060.5 733V615.7M1061.5 733V642.4M1062.5 733V614.4M1063.5 733V616.4M1064.5 733V617M1065.5 733V644.9M1066.5 733V645M1067.5 733V613.4M1068.5 733V615M1069.5 733V640M1070.5 733V612.4M1071.5 733V612.7M1072.5 733V614.3M1073.5 733V653.9M1074.5 733V618.1M1075.5 733V618.7M1076.5 733V609.8M1077.5 733V629M1078.5 733V630.1M1079.5 733V609.3M1080.5 733V613.4M1081.5 733V612.1M1082.5 733V613.4M1083.5 733V631.7M1084.5 733V630M1085.5 733V617.8M1086.5 733V614M1087.5 733V617.2M1088.5 733V616.4M1089.5 733V639.7M1090.5 733V638.1M1091.5 733V607.6M1092.5 733V610M1093.5 733V649M1094.5 733V617.2M1095.5 733V617.1M1096.5 733V615.8M1097.5 733V616.1M1098.5 733V610.2M1099.5 733V624M1100.5 733V612.1M1101.5 733V612.9M1102.5 733V614.1M1103.5 733V613.4M1104.5 733V626.3M1105.5 733V611.8M1106.5 733V611.5M1107.5 733V640.3M1108.5 733V616.8M1109.5 733V615.6M1110.5 733V640.5M1111.5 733V613.6M1112.5 733V614.1M1113.5 733V616M1114.5 733V634.7M1115.5 733V632.7M1116.5 733V613.7M1117.5 733V612.3M1118.5 733V633M1119.5 733V616M1120.5 733V616.5M1121.5 733V618.6M1122.5 733V643.8M1123.5 733V642.8M1124.5 733V612M1125.5 733V612.1M1126.5 733V612.2M1127.5 733V616.4M1128.5 733V607.4M1129.5 733V633.6M1130.5 733V631.7M1131.5 733V612.5M1132.5 733V606.4M1133.5 733V614.2M1134.5 733V628.1M1135.5 733V614.7M1136.5 733V615.9M1137.5 733V615.2M1138.5 733V617.4M1139.5 733V613.3M1140.5 733V635M1141.5 733V616.7M1142.5 733V617.5M1143.5 733V639.4M1144.5 733V612.5M1145.5 733V614.9M1146.5 733V615.7M1147.5 733V636.9M1148.5 733V617.6M1149.5 733V616.7M1150.5 733V645M1151.5 733V613.5M1152.5 733V615.5M1153.5 733V613M1154.5 733V649.8M1155.5 733V618.3M1156.5 733V616.4M1157.5 733V627M1158.5 733V617.6M1159.5 733V617.8M1160.5 733V617.6M1161.5 733V631.1M1162.5 733V612.1M1163.5 733V612.6M1164.5 733V614.9M1165.5 733V614.4M1166.5 733V614.8M1167.5 733V644.6M1168.5 733V589.1M1169.5 733V575M1170.5 733V631.1M1171.5 733V631.1M1172.5 733V604.9M1173.5 733V567.6M1174.5 733V641.8M1175.5 733V602.3M1176.5 733V561M1177.5 733V631.9M1178.5 733V571.2M1179.5 733V573.5M1180.5 733V631.3M1181.5 733V631.3M1182.5 733V567.9M1183.5 733V588.5M1184.5 733V590.3M1185.5 733V631.2M1186.5 733V601.7M1187.5 733V578.7M1188.5 733V647.9M1189.5 733V571.3M1190.5 733V600.2M1191.5 733V628.3M1192.5 733V579.6M1193.5 733V591.6M1194.5 733V649.5M1195.5 733V649.5M1196.5 733V588M1197.5 733V590.2M1198.5 733V561.9M1199.5 733V649.4M1200.5 733V571.4M1201.5 733V577.7M1202.5 733V634.6M1203.5 733V634.6M1204.5 733V617.4M1205.5 733V615.3M1206.5 733V618.1M1207.5 733V645.3M1208.5 733V617.1M1209.5 733V615.8M1210.5 733V617.4M1211.5 733V619.5M1212.5 733V618.4M1213.5 733V630.6M1214.5 733V618M1215.5 733V615.2M1216.5 733V616.7M1217.5 733V615.5M1218.5 733V616.2M1219.5 733V616.1M1220.5 733V645M1221.5 733V614.5M1222.5 733V618.3M1223.5 733V616.7M1224.5 733V616M1225.5 733V617.7M1226.5 733V615.8M1227.5 733V641M1228.5 733V641.8M1229.5 733V617.5M1230.5 733V617.7M1231.5 733V617.3M1232.5 733V613M1233.5 733V641.1M1234.5 733V638.3M1235.5 733V612.8M1236.5 733V609.5M1237.5 733V611.7M1238.5 733V610.8M1239.5 733V628.9M1240.5 733V629.8M1241.5 733V613.3M1242.5 733V611.6M1243.5 733V615.5M1244.5 733V614.1M1245.5 733V610.6M1246.5 733V612.7M1247.5 733V639.8M1248.5 733V609.2M1249.5 733V609.7M1250.5 733V610.3M1251.5 733V626.3M1252.5 733V626M1253.5 733V616.5M1254.5 733V617.6M1255.5 733V615.4M1256.5 733V617.2M1257.5 733V645.1M1258.5 733V617.7M1259.5 733V616.2M1260.5 733V618M1261.5 733V631.1M1262.5 733V614.7M1263.5 733V613.3M1264.5 733V613.2M1265.5 733V613.5M1266.5 733V635.1M1267.5 733V635.5M1268.5 733V614.8M1269.5 733V611M1270.5 733V618.1M1271.5 733V618.4M1272.5 733V611.9M1273.5 733V649.5M1274.5 733V614.7M1275.5 733V613.8M1276.5 733V615M1277.5 733V616.3M1278.5 733V614.2M1279.5 733V615.7M1280.5 733V650.4M1281.5 733V649.5M1282.5 733V611.1M1283.5 733V611M1284.5 733V640.8M1285.5 733V616.3M1286.5 733V613.8M1287.5 733V616.9M1288.5 733V628.4M1289.5 733V630.3M1290.5 733V612.1M1291.5 733V612M1292.5 733V610.3M1293.5 733V607.6M1294.5 733V612.8M1295.5 733V607.2M1296.5 733V644.9M1297.5 733V614.3M1298.5 733V614.4M1299.5 733V614.5M1300.5 733V615.2M1301.5 733V617M1302.5 733V640.5M1303.5 733V616.4M1304.5 733V617M1305.5 733V633.9M1306.5 733V612.8M1307.5 733V618.2M1308.5 733V618.6M1309.5 733V618.2M1310.5 733V619.9M1311.5 733V635.7M1312.5 733V611.9M1313.5 733V613.2M1314.5 733V610.3M1315.5 733V611.6M1316.5 733V611.3M1317.5 733V650.6M1318.5 733V613M1319.5 733V617.3M1320.5 733V649M1321.5 733V615.6M1322.5 733V614.7M1323.5 733V630.9M1324.5 733V612.3M1325.5 733V613.9M1326.5 733V611.4M1327.5 733V651.7M1328.5 733V617.5M1329.5 733V616.3M1330.5 733V617.4M1331.5 733V612.4M1332.5 733V623.3M1333.5 733V612.4M1334.5 733V613.1M1335.5 733V609.2M1336.5 733V623.8M1337.5 733V609.2M1338.5 733V611.3M1339.5 733V613.6M1340.5 733V612.7M1341.5 733V609.4M1342.5 733V629.4M1343.5 733V629.7M1344.5 733V611.1M1345.5 733V614.4M1346.5 733V613.1M1347.5 733V613.5M1348.5 733V612.8M1349.5 733V610.8M1350.5 733V628.8M1351.5 733V611.7M1352.5 733V613.1M1353.5 733V612.8M1354.5 733V609.7M1355.5 733V627.7M1356.5 733V614.8M1357.5 733V616.7M1358.5 733V615.9M1359.5 733V616.1M1360.5 733V653.2M1361.5 733V612M1362.5 733V613.1M1363.5 733V609.9M1364.5 733V608M1365.5 733V636.7M1366.5 733V617.7M1367.5 733V615.1M1368.5 733V615.2M1369.5 733V615.7M1370.5 733V616.1M1371.5 733V649.5M1372.5 733V612.6M1373.5 733V614.6M1374.5 733V634.6M1375.5 733V635.9M1376.5 733V618.6M1377.5 733V615.5M1378.5 733V616.9M1379.5 733V617.9M1380.5 733V616.8M1381.5 733V629.2M1382.5 733V616.5M1383.5 733V617.6M1384.5 733V614.4M1385.5 733V617.7M1386.5 733V617.4M1387.5 733V616.9M1388.5 733V630.7M1389.5 733V614.3M1390.5 733V615.4M1391.5 733V645.3M1392.5 733V611.6M1393.5 733V612M1394.5 733V613.8M1395.5 733V636.8M1396.5 733V609.4M1397.5 733V612.4M1398.5 733V612.9M1399.5 733V615M1400.5 733V609.3M1401.5 733V612M1402.5 733V647.5M1403.5 733V648.5M1404.5 733V607.6M1405.5 733V609.5M1406.5 733V608.6M1407.5 733V610.9M1408.5 733V610.3M1409.5 733V608.5M1410.5 733V646.5M1411.5 733V610.6M1412.5 733V610.9M1413.5 733V644.4M1414.5 733V643.9M1415.5 733V617.6M1416.5 733V614M1417.5 733V614.3M1418.5 733V613.8M1419.5 733V614.3M1420.5 733V638.4M1421.5 733V639M1422.5 733V613.8M1423.5 733V615.4M1424.5 733V628.4M1425.5 733V628.7M1426.5 733V617.8M1427.5 733V616.6M1428.5 733V619.1M1429.5 733V618.5M1430.5 733V617.8M1431.5 733V625.2M1432.5 733V618.8M1433.5 733V617.1M1434.5 733V618.6M1435.5 733V614M1436.5 733V618.2M1437.5 733V617.5M1438.5 733V626.7M1439.5 733V615.2M1440.5 733V616.2M1441.5 733V614M1442.5 733V640.3M1443.5 733V616.7M1444.5 733V610.7M1445.5 733V615M1446.5 733V614.2M1447.5 733V616.6M1448.5 733V629.1M1449.5 733V616.5M1450.5 733V612M1451.5 733V615.4M1452.5 733V615.3M1453.5 733V614.9M1454.5 733V624M1455.5 733V623.4M1456.5 733V613.9M1457.5 733V617.4M1458.5 733V615.8M1459.5 733V619.9M1460.5 733V616.9M1461.5 733V619.9M1462.5 733V631.2M1463.5 733V631M1464.5 733V615.6M1465.5 733V613.1M1466.5 733V616.1M1467.5 733V616.4M1468.5 733V614.6M1469.5 733V648.7M1470.5 733V616.8M1471.5 733V618.2M1472.5 733V616.5M1473.5 733V624.6M1474.5 733V623.2M1475.5 733V616M1476.5 733V614.8M1477.5 733V613.9M1478.5 733V615.7M1479.5 733V653.6M1480.5 733V652.8M1481.5 733V615.1M1482.5 733V614.7M1483.5 733V615.5M1484.5 733V616.2M1485.5 733V615.6M1486.5 733V613.4M1487.5 733V649.4M1488.5 733V611.5M1489.5 733V615M1490.5 733V610.4M1491.5 733V612.3M1492.5 733V633.1M1493.5 733V612.8M1494.5 733V614.8M1495.5 733V613.6M1496.5 733V614M1497.5 733V634.8M1498.5 733V632.9M1499.5 733V617.5M1500.5 733V612.9M1501.5 733V616.2M1502.5 733V614.6M1503.5 733V615.7M1504.5 733V616.8M1505.5 733V634.5M1506.5 733V588.7M1507.5 733V578.9M1508.5 733V588.9M1509.5 733V638.9M1510.5 733V638.9M1511.5 733V577.8M1512.5 733V588.3M1513.5 733V624.5M1514.5 733V624.5M1515.5 733V588.3M1516.5 733V572.7M1517.5 733V638.5M1518.5 733V577.2M1519.5 733V583M1520.5 733V638.6M1521.5 733V602.2M1522.5 733V568.9M1523.5 733V632.2M1524.5 733V632.2M1525.5 733V565.3M1526.5 733V572.6M1527.5 733V592.8M1528.5 733V650.5M1529.5 733V650.5M1530.5 733V575.1M1531.5 733V583.7M1532.5 733V645.8M1533.5 733V645.8M1534.5 733V563.3M1535.5 733V599.6M1536.5 733V598.8M1537.5 733V627.5M1538.5 733V627.5M1539.5 733V572.6M1540.5 733V579.4M1541.5 733V601.9M1542.5 733V640.2M1543.5 733V614.3M1544.5 733V614.3M1545.5 733V614.2M1546.5 733V625.1M1547.5 733V615.3M1548.5 733V613.9M1549.5 733V624M1550.5 733V610.9M1551.5 733V610.4M1552.5 733V630.8M1553.5 733V630.9M1554.5 733V612.7M1555.5 733V612.4M1556.5 733V612.9M1557.5 733V638.9M1558.5 733V612.5M1559.5 733V612.9M1560.5 733V612.8M1561.5 733V612.8M1562.5 733V612.2M1563.5 733V610.8M1564.5 733V644.2M1565.5 733V618M1566.5 733V615.8M1567.5 733V617.4M1568.5 733V624.7M1569.5 733V613.8M1570.5 733V617.3M1571.5 733V615.7M1572.5 733V618.1M1573.5 733V624M1574.5 733V624M1575.5 733V616.1M1576.5 733V612.4M1577.5 733V615.9M1578.5 733V615.6M1579.5 733V618.2M1580.5 733V627.8M1581.5 733V626.3M1582.5 733V620M1583.5 733V618.3M1584.5 733V619.3M1585.5 733V631.9M1586.5 733V613.9M1587.5 733V604.9M1588.5 733V609.8M1589.5 733V610.9M1590.5 733V612.4M1591.5 733V611.2M1592.5 733V625.7M1593.5 733V625M1594.5 733V614.7M1595.5 733V614.8M1596.5 733V616.4M1597.5 733V615.2M1598.5 733V613.4M1599.5 733V614.3M1600.5 733V629.1M1601.5 733V628.2M1602.5 733V617.1M1603.5 733V614.9M1604.5 733V632.3M1605.5 733V619.4M1606.5 733V619.5M1607.5 733V620M1608.5 733V619.2M1609.5 733V650.5M1610.5 733V648M1611.5 733V619.1M1612.5 733V616.1M1613.5 733V619.1M1614.5 733V617.6M1615.5 733V619.2M1616.5 733V618.8M1617.5 733V636.1M1618.5 733V634.4M1619.5 733V619.3M1620.5 733V616.1M1621.5 733V645.3M1622.5 733V616.3M1623.5 733V612.4M1624.5 733V613.8M1625.5 733V643.9M1626.5 733V614M1627.5 733V609.4M1628.5 733V642.1M1629.5 733V609.4M1630.5 733V613.1M1631.5 733V611.6M1632.5 733V609.4M1633.5 733V611.3M1634.5 733V623.8M1635.5 733V623.9M1636.5 733V611.4M1637.5 733V610.9M1638.5 733V612.1M1639.5 733V613.9M1640.5 733V649.7M1641.5 733V611.9M1642.5 733V612.6M1643.5 733V614.1M1644.5 733V606.4M1645.5 733V610.8M1646.5 733V613.9M1647.5 733V650.6M1648.5 733V613.1M1649.5 733V614.1M1650.5 733V613.4M1651.5 733V611.4M1652.5 733V614M1653.5 733V613M1654.5 733V639.3M1655.5 733V616.5M1656.5 733V615.9M1657.5 733V610.1M1658.5 733V614M1659.5 733V616M1660.5 733V624.8M1661.5 733V624.2M1662.5 733V611.1M1663.5 733V611.1M1664.5 733V611.2M1665.5 733V610.4M1666.5 733V613.4M1667.5 733V610.9M1668.5 733V635.3M1669.5 733V611.6M1670.5 733V616.5M1671.5 733V617.7M1672.5 733V615M1673.5 733V614.6M1674.5 733V639.7M1675.5 733V612.7M1676.5 733V613.8M1677.5 733V613.7M1678.5 733V612.4M1679.5 733V612.3M1680.5 733V648.3M1681.5 733V649M1682.5 733V616M1683.5 733V614.1M1684.5 733V614.3M1685.5 733V611.6M1686.5 733V615.9M1687.5 733V616.5M1688.5 733V637.1M1689.5 733V637.9M1690.5 733V615.1M1691.5 733V617.1M1692.5 733V613.7M1693.5 733V617.1M1694.5 733V652.5M1695.5 733V612.5M1696.5 733V609.3M1697.5 733V608.5M1698.5 733V623.8M1699.5 733V614.5M1700.5 733V610M1701.5 733V611.5M1702.5 733V629M1703.5 733V614.8M1704.5 733V617.4M1705.5 733V618.9M1706.5 733V616.6M1707.5 733V616.3M1708.5 733V618.3M1709.5 733V626.9" stroke="#e01c41" stroke-width="1" fill="none" shape-rendering="crispEdges"/>
<clipPath id="sawclip"><polygon points="13,651.5 15,651.8 17,652.1 19,652.4 21,652.7 23,653 25,653.3 27,653.6 29,653.9 31,654.2 33,654.5 35,654.8 37,655.1 39,655.4 41,655.7 43,656 45,656.3 47,656.6 49,656.9 51,657.2 53,657.5 55,657.8 57,658.1 59,658.4 61,658.7 63,659 65,659.3 67,659.6 69,659.9 71,660.2 73,660.5 75,660.8 77,659.9 79,657.8 81,655.9 83,654.1 85,652.5 87,651 89,649.7 91,648.6 93,647.6 95,646.8 97,646.1 99,645.5 101,645.1 103,644.8 105,644.6 107,644.5 109,644.7 111,645 113,645.3 115,645.6 117,645.9 119,646.2 121,646.6 123,646.9 125,647.2 127,647.5 129,647.8 131,648.1 133,648.5 135,648.8 137,649.1 139,649.4 141,649.7 143,650.1 145,650.4 147,650.7 149,651 151,651.3 153,651.6 155,652 157,652.3 159,652.6 161,652.9 163,653.2 165,653.5 167,653.9 169,654.2 171,654.5 173,654.8 175,655.1 177,655.4 179,655.8 181,656.1 183,656.4 185,656.7 187,657 189,657.4 191,657.7 193,658 195,658.3 197,658.6 199,658.9 201,659.3 203,659.6 205,659.9 207,660.2 209,660.5 211,660.8 213,659.9 215,657.8 217,655.9 219,654.1 221,652.5 223,651 225,649.7 227,648.6 229,647.6 231,646.8 233,646.1 235,645.5 237,645.1 239,644.8 241,644.6 243,644.5 245,644.6 247,644.9 249,645.2 251,645.5 253,645.8 255,646.1 257,646.4 259,646.7 261,647 263,647.3 265,647.6 267,647.9 269,648.2 271,648.4 273,648.7 275,649 277,649.3 279,649.6 281,649.9 283,650.2 285,650.5 287,650.8 289,651.1 291,651.4 293,651.7 295,651.9 297,652.2 299,652.5 301,652.8 303,653.1 305,653.4 307,653.7 309,654 311,654.3 313,654.6 315,654.9 317,655.2 319,655.5 321,655.7 323,656 325,656.3 327,656.6 329,656.9 331,657.2 333,657.5 335,657.8 337,658.1 339,658.4 341,658.7 343,659 345,659.2 347,659.5 349,659.8 351,660.1 353,660.4 355,660.7 357,661 359,658.8 361,656.8 363,654.9 365,653.3 367,651.7 369,650.4 371,649.2 373,648.1 375,647.2 377,646.4 379,645.8 381,645.3 383,644.9 385,644.7 387,644.5 389,644.5 391,644.8 393,645.1 395,645.4 397,645.7 399,646 401,646.3 403,646.6 405,646.9 407,647.2 409,647.5 411,647.8 413,648.1 415,648.4 417,648.7 419,649 421,649.3 423,649.6 425,649.9 427,650.1 429,650.4 431,650.7 433,651 435,651.3 437,651.6 439,651.9 441,652.2 443,652.5 445,652.8 447,653.1 449,653.4 451,653.7 453,654 455,654.3 457,654.6 459,654.9 461,655.2 463,655.5 465,655.8 467,656.1 469,656.4 471,656.7 473,657 475,657.3 477,657.6 479,657.9 481,658.2 483,658.5 485,658.8 487,659.1 489,659.4 491,659.7 493,660 495,660.3 497,660.6 499,660.9 501,659.9 503,657.8 505,655.9 507,654.1 509,652.5 511,651 513,649.7 515,648.6 517,647.6 519,646.8 521,646.1 523,645.5 525,645.1 527,644.8 529,644.6 531,644.5 533,644.7 535,645 537,645.3 539,645.6 541,645.9 543,646.2 545,646.5 547,646.8 549,647.1 551,647.4 553,647.7 555,648 557,648.3 559,648.6 561,648.9 563,649.2 565,649.5 567,649.8 569,650.2 571,650.5 573,650.8 575,651.1 577,651.4 579,651.7 581,652 583,652.3 585,652.6 587,652.9 589,653.2 591,653.5 593,653.8 595,654.1 597,654.4 599,654.7 601,655 603,655.3 605,655.7 607,656 609,656.3 611,656.6 613,656.9 615,657.2 617,657.5 619,657.8 621,658.1 623,658.4 625,658.7 627,659 629,659.3 631,659.6 633,659.9 635,660.2 637,660.5 639,660.8 641,659.9 643,657.8 645,655.9 647,654.1 649,652.5 651,651 653,649.7 655,648.6 657,647.6 659,646.8 661,646.1 663,645.5 665,645.1 667,644.8 669,644.6 671,644.5 673,644.6 675,644.9 677,645.2 679,645.5 681,645.8 683,646.1 685,646.4 687,646.7 689,647 691,647.3 693,647.6 695,647.9 697,648.2 699,648.4 701,648.7 703,649 705,649.3 707,649.6 709,649.9 711,650.2 713,650.5 715,650.8 717,651.1 719,651.4 721,651.7 723,651.9 725,652.2 727,652.5 729,652.8 731,653.1 733,653.4 735,653.7 737,654 739,654.3 741,654.6 743,654.9 745,655.2 747,655.5 749,655.7 751,656 753,656.3 755,656.6 757,656.9 759,657.2 761,657.5 763,657.8 765,658.1 767,658.4 769,658.7 771,659 773,659.2 775,659.5 777,659.8 779,660.1 781,660.4 783,660.7 785,661 787,658.8 789,656.8 791,654.9 793,653.3 795,651.7 797,650.4 799,649.2 801,648.1 803,647.2 805,646.4 807,645.8 809,645.3 811,644.9 813,644.7 815,644.5 817,644.5 819,644.8 821,645.2 823,645.5 825,645.8 827,646.1 829,646.5 831,646.8 833,647.1 835,647.5 837,647.8 839,648.1 841,648.5 843,648.8 845,649.1 847,649.5 849,649.8 851,650.1 853,650.4 855,650.8 857,651.1 859,651.4 861,651.8 863,652.1 865,652.4 867,652.8 869,653.1 871,653.4 873,653.7 875,654.1 877,654.4 879,654.7 881,655.1 883,655.4 885,655.7 887,656 889,656.4 891,656.7 893,657 895,657.4 897,657.7 899,658 901,658.4 903,658.7 905,659 907,659.4 909,659.7 911,660 913,660.3 915,660.7 917,661 919,658.8 921,656.8 923,654.9 925,653.3 927,651.7 929,650.4 931,649.2 933,648.1 935,647.2 937,646.4 939,645.8 941,645.3 943,644.9 945,644.7 947,644.5 949,644.5 951,644.8 953,645.1 955,645.4 957,645.6 959,645.9 961,646.2 963,646.5 965,646.8 967,647.1 969,647.3 971,647.6 973,647.9 975,648.2 977,648.5 979,648.8 981,649.1 983,649.3 985,649.6 987,649.9 989,650.2 991,650.5 993,650.8 995,651 997,651.3 999,651.6 1001,651.9 1003,652.2 1005,652.5 1007,652.8 1009,653 1011,653.3 1013,653.6 1015,653.9 1017,654.2 1019,654.5 1021,654.7 1023,655 1025,655.3 1027,655.6 1029,655.9 1031,656.2 1033,656.4 1035,656.7 1037,657 1039,657.3 1041,657.6 1043,657.9 1045,658.2 1047,658.4 1049,658.7 1051,659 1053,659.3 1055,659.6 1057,659.9 1059,660.1 1061,660.4 1063,660.7 1065,661 1067,658.8 1069,656.8 1071,654.9 1073,653.3 1075,651.7 1077,650.4 1079,649.2 1081,648.1 1083,647.2 1085,646.4 1087,645.8 1089,645.3 1091,644.9 1093,644.7 1095,644.5 1097,644.5 1099,644.8 1101,645.1 1103,645.4 1105,645.7 1107,646 1109,646.3 1111,646.6 1113,646.9 1115,647.2 1117,647.6 1119,647.9 1121,648.2 1123,648.5 1125,648.8 1127,649.1 1129,649.4 1131,649.7 1133,650 1135,650.3 1137,650.6 1139,650.9 1141,651.2 1143,651.5 1145,651.8 1147,652.1 1149,652.4 1151,652.8 1153,653.1 1155,653.4 1157,653.7 1159,654 1161,654.3 1163,654.6 1165,654.9 1167,655.2 1169,655.5 1171,655.8 1173,656.1 1175,656.4 1177,656.7 1179,657 1181,657.3 1183,657.6 1185,657.9 1187,658.2 1189,658.6 1191,658.9 1193,659.2 1195,659.5 1197,659.8 1199,660.1 1201,660.4 1203,660.7 1205,661 1207,658.8 1209,656.8 1211,654.9 1213,653.3 1215,651.7 1217,650.4 1219,649.2 1221,648.1 1223,647.2 1225,646.4 1227,645.8 1229,645.3 1231,644.9 1233,644.7 1235,644.5 1237,644.5 1239,644.8 1241,645.1 1243,645.4 1245,645.7 1247,646 1249,646.3 1251,646.6 1253,646.9 1255,647.2 1257,647.5 1259,647.8 1261,648.1 1263,648.4 1265,648.7 1267,649 1269,649.3 1271,649.6 1273,649.9 1275,650.2 1277,650.5 1279,650.8 1281,651.1 1283,651.4 1285,651.7 1287,652 1289,652.3 1291,652.6 1293,652.9 1295,653.2 1297,653.5 1299,653.8 1301,654.1 1303,654.4 1305,654.7 1307,655 1309,655.3 1311,655.6 1313,655.9 1315,656.2 1317,656.5 1319,656.8 1321,657.1 1323,657.4 1325,657.7 1327,658 1329,658.3 1331,658.6 1333,658.9 1335,659.2 1337,659.5 1339,659.8 1341,660.1 1343,660.4 1345,660.7 1347,661 1349,658.8 1351,656.8 1353,654.9 1355,653.3 1357,651.7 1359,650.4 1361,649.2 1363,648.1 1365,647.2 1367,646.4 1369,645.8 1371,645.3 1373,644.9 1375,644.7 1377,644.5 1379,644.5 1381,644.8 1383,645.1 1385,645.4 1387,645.7 1389,646 1391,646.3 1393,646.5 1395,646.8 1397,647.1 1399,647.4 1401,647.7 1403,648 1405,648.3 1407,648.6 1409,648.9 1411,649.2 1413,649.5 1415,649.8 1417,650 1419,650.3 1421,650.6 1423,650.9 1425,651.2 1427,651.5 1429,651.8 1431,652.1 1433,652.4 1435,652.7 1437,653 1439,653.3 1441,653.6 1443,653.8 1445,654.1 1447,654.4 1449,654.7 1451,655 1453,655.3 1455,655.6 1457,655.9 1459,656.2 1461,656.5 1463,656.8 1465,657.1 1467,657.3 1469,657.6 1471,657.9 1473,658.2 1475,658.5 1477,658.8 1479,659.1 1481,659.4 1483,659.7 1485,660 1487,660.3 1489,660.6 1491,660.9 1493,659.9 1495,657.8 1497,655.9 1499,654.1 1501,652.5 1503,651 1505,649.7 1507,648.6 1509,647.6 1511,646.8 1513,646.1 1515,645.5 1517,645.1 1519,644.8 1521,644.6 1523,644.5 1525,644.7 1527,645 1529,645.3 1531,645.6 1533,645.9 1535,646.3 1537,646.6 1539,646.9 1541,647.2 1543,647.5 1545,647.9 1547,648.2 1549,648.5 1551,648.8 1553,649.1 1555,649.5 1557,649.8 1559,650.1 1561,650.4 1563,650.7 1565,651.1 1567,651.4 1569,651.7 1571,652 1573,652.3 1575,652.7 1577,653 1579,653.3 1581,653.6 1583,654 1585,654.3 1587,654.6 1589,654.9 1591,655.2 1593,655.6 1595,655.9 1597,656.2 1599,656.5 1601,656.8 1603,657.2 1605,657.5 1607,657.8 1609,658.1 1611,658.4 1613,658.8 1615,659.1 1617,659.4 1619,659.7 1621,660 1623,660.4 1625,660.7 1627,661 1629,658.8 1631,656.8 1633,654.9 1635,653.3 1637,651.7 1639,650.4 1641,649.2 1643,648.1 1645,647.2 1647,646.4 1649,645.8 1651,645.3 1653,644.9 1655,644.7 1657,644.5 1659,644.5 1661,644.8 1663,645.1 1665,645.4 1667,645.7 1669,646 1671,646.3 1673,646.6 1675,646.9 1677,647.2 1679,647.5 1681,647.8 1683,648.1 1685,648.4 1687,648.7 1689,649 1691,649.3 1693,649.6 1695,649.9 1697,650.1 1699,650.4 1701,650.7 1703,651 1705,651.3 1707,651.6 1709,651.9 1710,733 13,733"/></clipPath>
<polygon points="13,651.5 15,651.8 17,652.1 19,652.4 21,652.7 23,653 25,653.3 27,653.6 29,653.9 31,654.2 33,654.5 35,654.8 37,655.1 39,655.4 41,655.7 43,656 45,656.3 47,656.6 49,656.9 51,657.2 53,657.5 55,657.8 57,658.1 59,658.4 61,658.7 63,659 65,659.3 67,659.6 69,659.9 71,660.2 73,660.5 75,660.8 77,659.9 79,657.8 81,655.9 83,654.1 85,652.5 87,651 89,649.7 91,648.6 93,647.6 95,646.8 97,646.1 99,645.5 101,645.1 103,644.8 105,644.6 107,644.5 109,644.7 111,645 113,645.3 115,645.6 117,645.9 119,646.2 121,646.6 123,646.9 125,647.2 127,647.5 129,647.8 131,648.1 133,648.5 135,648.8 137,649.1 139,649.4 141,649.7 143,650.1 145,650.4 147,650.7 149,651 151,651.3 153,651.6 155,652 157,652.3 159,652.6 161,652.9 163,653.2 165,653.5 167,653.9 169,654.2 171,654.5 173,654.8 175,655.1 177,655.4 179,655.8 181,656.1 183,656.4 185,656.7 187,657 189,657.4 191,657.7 193,658 195,658.3 197,658.6 199,658.9 201,659.3 203,659.6 205,659.9 207,660.2 209,660.5 211,660.8 213,659.9 215,657.8 217,655.9 219,654.1 221,652.5 223,651 225,649.7 227,648.6 229,647.6 231,646.8 233,646.1 235,645.5 237,645.1 239,644.8 241,644.6 243,644.5 245,644.6 247,644.9 249,645.2 251,645.5 253,645.8 255,646.1 257,646.4 259,646.7 261,647 263,647.3 265,647.6 267,647.9 269,648.2 271,648.4 273,648.7 275,649 277,649.3 279,649.6 281,649.9 283,650.2 285,650.5 287,650.8 289,651.1 291,651.4 293,651.7 295,651.9 297,652.2 299,652.5 301,652.8 303,653.1 305,653.4 307,653.7 309,654 311,654.3 313,654.6 315,654.9 317,655.2 319,655.5 321,655.7 323,656 325,656.3 327,656.6 329,656.9 331,657.2 333,657.5 335,657.8 337,658.1 339,658.4 341,658.7 343,659 345,659.2 347,659.5 349,659.8 351,660.1 353,660.4 355,660.7 357,661 359,658.8 361,656.8 363,654.9 365,653.3 367,651.7 369,650.4 371,649.2 373,648.1 375,647.2 377,646.4 379,645.8 381,645.3 383,644.9 385,644.7 387,644.5 389,644.5 391,644.8 393,645.1 395,645.4 397,645.7 399,646 401,646.3 403,646.6 405,646.9 407,647.2 409,647.5 411,647.8 413,648.1 415,648.4 417,648.7 419,649 421,649.3 423,649.6 425,649.9 427,650.1 429,650.4 431,650.7 433,651 435,651.3 437,651.6 439,651.9 441,652.2 443,652.5 445,652.8 447,653.1 449,653.4 451,653.7 453,654 455,654.3 457,654.6 459,654.9 461,655.2 463,655.5 465,655.8 467,656.1 469,656.4 471,656.7 473,657 475,657.3 477,657.6 479,657.9 481,658.2 483,658.5 485,658.8 487,659.1 489,659.4 491,659.7 493,660 495,660.3 497,660.6 499,660.9 501,659.9 503,657.8 505,655.9 507,654.1 509,652.5 511,651 513,649.7 515,648.6 517,647.6 519,646.8 521,646.1 523,645.5 525,645.1 527,644.8 529,644.6 531,644.5 533,644.7 535,645 537,645.3 539,645.6 541,645.9 543,646.2 545,646.5 547,646.8 549,647.1 551,647.4 553,647.7 555,648 557,648.3 559,648.6 561,648.9 563,649.2 565,649.5 567,649.8 569,650.2 571,650.5 573,650.8 575,651.1 577,651.4 579,651.7 581,652 583,652.3 585,652.6 587,652.9 589,653.2 591,653.5 593,653.8 595,654.1 597,654.4 599,654.7 601,655 603,655.3 605,655.7 607,656 609,656.3 611,656.6 613,656.9 615,657.2 617,657.5 619,657.8 621,658.1 623,658.4 625,658.7 627,659 629,659.3 631,659.6 633,659.9 635,660.2 637,660.5 639,660.8 641,659.9 643,657.8 645,655.9 647,654.1 649,652.5 651,651 653,649.7 655,648.6 657,647.6 659,646.8 661,646.1 663,645.5 665,645.1 667,644.8 669,644.6 671,644.5 673,644.6 675,644.9 677,645.2 679,645.5 681,645.8 683,646.1 685,646.4 687,646.7 689,647 691,647.3 693,647.6 695,647.9 697,648.2 699,648.4 701,648.7 703,649 705,649.3 707,649.6 709,649.9 711,650.2 713,650.5 715,650.8 717,651.1 719,651.4 721,651.7 723,651.9 725,652.2 727,652.5 729,652.8 731,653.1 733,653.4 735,653.7 737,654 739,654.3 741,654.6 743,654.9 745,655.2 747,655.5 749,655.7 751,656 753,656.3 755,656.6 757,656.9 759,657.2 761,657.5 763,657.8 765,658.1 767,658.4 769,658.7 771,659 773,659.2 775,659.5 777,659.8 779,660.1 781,660.4 783,660.7 785,661 787,658.8 789,656.8 791,654.9 793,653.3 795,651.7 797,650.4 799,649.2 801,648.1 803,647.2 805,646.4 807,645.8 809,645.3 811,644.9 813,644.7 815,644.5 817,644.5 819,644.8 821,645.2 823,645.5 825,645.8 827,646.1 829,646.5 831,646.8 833,647.1 835,647.5 837,647.8 839,648.1 841,648.5 843,648.8 845,649.1 847,649.5 849,649.8 851,650.1 853,650.4 855,650.8 857,651.1 859,651.4 861,651.8 863,652.1 865,652.4 867,652.8 869,653.1 871,653.4 873,653.7 875,654.1 877,654.4 879,654.7 881,655.1 883,655.4 885,655.7 887,656 889,656.4 891,656.7 893,657 895,657.4 897,657.7 899,658 901,658.4 903,658.7 905,659 907,659.4 909,659.7 911,660 913,660.3 915,660.7 917,661 919,658.8 921,656.8 923,654.9 925,653.3 927,651.7 929,650.4 931,649.2 933,648.1 935,647.2 937,646.4 939,645.8 941,645.3 943,644.9 945,644.7 947,644.5 949,644.5 951,644.8 953,645.1 955,645.4 957,645.6 959,645.9 961,646.2 963,646.5 965,646.8 967,647.1 969,647.3 971,647.6 973,647.9 975,648.2 977,648.5 979,648.8 981,649.1 983,649.3 985,649.6 987,649.9 989,650.2 991,650.5 993,650.8 995,651 997,651.3 999,651.6 1001,651.9 1003,652.2 1005,652.5 1007,652.8 1009,653 1011,653.3 1013,653.6 1015,653.9 1017,654.2 1019,654.5 1021,654.7 1023,655 1025,655.3 1027,655.6 1029,655.9 1031,656.2 1033,656.4 1035,656.7 1037,657 1039,657.3 1041,657.6 1043,657.9 1045,658.2 1047,658.4 1049,658.7 1051,659 1053,659.3 1055,659.6 1057,659.9 1059,660.1 1061,660.4 1063,660.7 1065,661 1067,658.8 1069,656.8 1071,654.9 1073,653.3 1075,651.7 1077,650.4 1079,649.2 1081,648.1 1083,647.2 1085,646.4 1087,645.8 1089,645.3 1091,644.9 1093,644.7 1095,644.5 1097,644.5 1099,644.8 1101,645.1 1103,645.4 1105,645.7 1107,646 1109,646.3 1111,646.6 1113,646.9 1115,647.2 1117,647.6 1119,647.9 1121,648.2 1123,648.5 1125,648.8 1127,649.1 1129,649.4 1131,649.7 1133,650 1135,650.3 1137,650.6 1139,650.9 1141,651.2 1143,651.5 1145,651.8 1147,652.1 1149,652.4 1151,652.8 1153,653.1 1155,653.4 1157,653.7 1159,654 1161,654.3 1163,654.6 1165,654.9 1167,655.2 1169,655.5 1171,655.8 1173,656.1 1175,656.4 1177,656.7 1179,657 1181,657.3 1183,657.6 1185,657.9 1187,658.2 1189,658.6 1191,658.9 1193,659.2 1195,659.5 1197,659.8 1199,660.1 1201,660.4 1203,660.7 1205,661 1207,658.8 1209,656.8 1211,654.9 1213,653.3 1215,651.7 1217,650.4 1219,649.2 1221,648.1 1223,647.2 1225,646.4 1227,645.8 1229,645.3 1231,644.9 1233,644.7 1235,644.5 1237,644.5 1239,644.8 1241,645.1 1243,645.4 1245,645.7 1247,646 1249,646.3 1251,646.6 1253,646.9 1255,647.2 1257,647.5 1259,647.8 1261,648.1 1263,648.4 1265,648.7 1267,649 1269,649.3 1271,649.6 1273,649.9 1275,650.2 1277,650.5 1279,650.8 1281,651.1 1283,651.4 1285,651.7 1287,652 1289,652.3 1291,652.6 1293,652.9 1295,653.2 1297,653.5 1299,653.8 1301,654.1 1303,654.4 1305,654.7 1307,655 1309,655.3 1311,655.6 1313,655.9 1315,656.2 1317,656.5 1319,656.8 1321,657.1 1323,657.4 1325,657.7 1327,658 1329,658.3 1331,658.6 1333,658.9 1335,659.2 1337,659.5 1339,659.8 1341,660.1 1343,660.4 1345,660.7 1347,661 1349,658.8 1351,656.8 1353,654.9 1355,653.3 1357,651.7 1359,650.4 1361,649.2 1363,648.1 1365,647.2 1367,646.4 1369,645.8 1371,645.3 1373,644.9 1375,644.7 1377,644.5 1379,644.5 1381,644.8 1383,645.1 1385,645.4 1387,645.7 1389,646 1391,646.3 1393,646.5 1395,646.8 1397,647.1 1399,647.4 1401,647.7 1403,648 1405,648.3 1407,648.6 1409,648.9 1411,649.2 1413,649.5 1415,649.8 1417,650 1419,650.3 1421,650.6 1423,650.9 1425,651.2 1427,651.5 1429,651.8 1431,652.1 1433,652.4 1435,652.7 1437,653 1439,653.3 1441,653.6 1443,653.8 1445,654.1 1447,654.4 1449,654.7 1451,655 1453,655.3 1455,655.6 1457,655.9 1459,656.2 1461,656.5 1463,656.8 1465,657.1 1467,657.3 1469,657.6 1471,657.9 1473,658.2 1475,658.5 1477,658.8 1479,659.1 1481,659.4 1483,659.7 1485,660 1487,660.3 1489,660.6 1491,660.9 1493,659.9 1495,657.8 1497,655.9 1499,654.1 1501,652.5 1503,651 1505,649.7 1507,648.6 1509,647.6 1511,646.8 1513,646.1 1515,645.5 1517,645.1 1519,644.8 1521,644.6 1523,644.5 1525,644.7 1527,645 1529,645.3 1531,645.6 1533,645.9 1535,646.3 1537,646.6 1539,646.9 1541,647.2 1543,647.5 1545,647.9 1547,648.2 1549,648.5 1551,648.8 1553,649.1 1555,649.5 1557,649.8 1559,650.1 1561,650.4 1563,650.7 1565,651.1 1567,651.4 1569,651.7 1571,652 1573,652.3 1575,652.7 1577,653 1579,653.3 1581,653.6 1583,654 1585,654.3 1587,654.6 1589,654.9 1591,655.2 1593,655.6 1595,655.9 1597,656.2 1599,656.5 1601,656.8 1603,657.2 1605,657.5 1607,657.8 1609,658.1 1611,658.4 1613,658.8 1615,659.1 1617,659.4 1619,659.7 1621,660 1623,660.4 1625,660.7 1627,661 1629,658.8 1631,656.8 1633,654.9 1635,653.3 1637,651.7 1639,650.4 1641,649.2 1643,648.1 1645,647.2 1647,646.4 1649,645.8 1651,645.3 1653,644.9 1655,644.7 1657,644.5 1659,644.5 1661,644.8 1663,645.1 1665,645.4 1667,645.7 1669,646 1671,646.3 1673,646.6 1675,646.9 1677,647.2 1679,647.5 1681,647.8 1683,648.1 1685,648.4 1687,648.7 1689,649 1691,649.3 1693,649.6 1695,649.9 1697,650.1 1699,650.4 1701,650.7 1703,651 1705,651.3 1707,651.6 1709,651.9 1710,733 13,733" fill="#e42548"/>
<rect x="148.6" y="641" width="34.6" height="92" fill="#e01c41"/>
<rect x="487.6" y="641" width="34.6" height="92" fill="#e01c41"/>
<rect x="827.6" y="641" width="34.6" height="92" fill="#e01c41"/>
<rect x="1166.6" y="641" width="34.6" height="92" fill="#e01c41"/>
<rect x="1505.6" y="641" width="34.6" height="92" fill="#e01c41"/>
<rect x="200" y="641" width="11" height="92" fill="#e01c41"/>
<rect x="540" y="641" width="6" height="92" fill="#e01c41"/>
<rect x="1640" y="641" width="8" height="92" fill="#e01c41"/>
<rect x="526" y="640" width="114" height="93" fill="#e83454" opacity=".5" clip-path="url(#sawclip)"/>
<rect x="1203" y="640" width="12" height="93" fill="#e83454" opacity=".5" clip-path="url(#sawclip)"/>
<rect x="1542" y="640" width="58" height="93" fill="#e83454" opacity=".5" clip-path="url(#sawclip)"/>
<polyline points="13,651.5 15,651.8 17,652.1 19,652.4 21,652.7 23,653 25,653.3 27,653.6 29,653.9 31,654.2 33,654.5 35,654.8 37,655.1 39,655.4 41,655.7 43,656 45,656.3 47,656.6 49,656.9 51,657.2 53,657.5 55,657.8 57,658.1 59,658.4 61,658.7 63,659 65,659.3 67,659.6 69,659.9 71,660.2 73,660.5 75,660.8 77,659.9 79,657.8 81,655.9 83,654.1 85,652.5 87,651 89,649.7 91,648.6 93,647.6 95,646.8 97,646.1 99,645.5 101,645.1 103,644.8 105,644.6 107,644.5 109,644.7 111,645 113,645.3 115,645.6 117,645.9 119,646.2 121,646.6 123,646.9 125,647.2 127,647.5 129,647.8 131,648.1 133,648.5 135,648.8 137,649.1 139,649.4 141,649.7 143,650.1 145,650.4 147,650.7 149,651 151,651.3 153,651.6 155,652 157,652.3 159,652.6 161,652.9 163,653.2 165,653.5 167,653.9 169,654.2 171,654.5 173,654.8 175,655.1 177,655.4 179,655.8 181,656.1 183,656.4 185,656.7 187,657 189,657.4 191,657.7 193,658 195,658.3 197,658.6 199,658.9 201,659.3 203,659.6 205,659.9 207,660.2 209,660.5 211,660.8 213,659.9 215,657.8 217,655.9 219,654.1 221,652.5 223,651 225,649.7 227,648.6 229,647.6 231,646.8 233,646.1 235,645.5 237,645.1 239,644.8 241,644.6 243,644.5 245,644.6 247,644.9 249,645.2 251,645.5 253,645.8 255,646.1 257,646.4 259,646.7 261,647 263,647.3 265,647.6 267,647.9 269,648.2 271,648.4 273,648.7 275,649 277,649.3 279,649.6 281,649.9 283,650.2 285,650.5 287,650.8 289,651.1 291,651.4 293,651.7 295,651.9 297,652.2 299,652.5 301,652.8 303,653.1 305,653.4 307,653.7 309,654 311,654.3 313,654.6 315,654.9 317,655.2 319,655.5 321,655.7 323,656 325,656.3 327,656.6 329,656.9 331,657.2 333,657.5 335,657.8 337,658.1 339,658.4 341,658.7 343,659 345,659.2 347,659.5 349,659.8 351,660.1 353,660.4 355,660.7 357,661 359,658.8 361,656.8 363,654.9 365,653.3 367,651.7 369,650.4 371,649.2 373,648.1 375,647.2 377,646.4 379,645.8 381,645.3 383,644.9 385,644.7 387,644.5 389,644.5 391,644.8 393,645.1 395,645.4 397,645.7 399,646 401,646.3 403,646.6 405,646.9 407,647.2 409,647.5 411,647.8 413,648.1 415,648.4 417,648.7 419,649 421,649.3 423,649.6 425,649.9 427,650.1 429,650.4 431,650.7 433,651 435,651.3 437,651.6 439,651.9 441,652.2 443,652.5 445,652.8 447,653.1 449,653.4 451,653.7 453,654 455,654.3 457,654.6 459,654.9 461,655.2 463,655.5 465,655.8 467,656.1 469,656.4 471,656.7 473,657 475,657.3 477,657.6 479,657.9 481,658.2 483,658.5 485,658.8 487,659.1 489,659.4 491,659.7 493,660 495,660.3 497,660.6 499,660.9 501,659.9 503,657.8 505,655.9 507,654.1 509,652.5 511,651 513,649.7 515,648.6 517,647.6 519,646.8 521,646.1 523,645.5 525,645.1 527,644.8 529,644.6 531,644.5 533,644.7 535,645 537,645.3 539,645.6 541,645.9 543,646.2 545,646.5 547,646.8 549,647.1 551,647.4 553,647.7 555,648 557,648.3 559,648.6 561,648.9 563,649.2 565,649.5 567,649.8 569,650.2 571,650.5 573,650.8 575,651.1 577,651.4 579,651.7 581,652 583,652.3 585,652.6 587,652.9 589,653.2 591,653.5 593,653.8 595,654.1 597,654.4 599,654.7 601,655 603,655.3 605,655.7 607,656 609,656.3 611,656.6 613,656.9 615,657.2 617,657.5 619,657.8 621,658.1 623,658.4 625,658.7 627,659 629,659.3 631,659.6 633,659.9 635,660.2 637,660.5 639,660.8 641,659.9 643,657.8 645,655.9 647,654.1 649,652.5 651,651 653,649.7 655,648.6 657,647.6 659,646.8 661,646.1 663,645.5 665,645.1 667,644.8 669,644.6 671,644.5 673,644.6 675,644.9 677,645.2 679,645.5 681,645.8 683,646.1 685,646.4 687,646.7 689,647 691,647.3 693,647.6 695,647.9 697,648.2 699,648.4 701,648.7 703,649 705,649.3 707,649.6 709,649.9 711,650.2 713,650.5 715,650.8 717,651.1 719,651.4 721,651.7 723,651.9 725,652.2 727,652.5 729,652.8 731,653.1 733,653.4 735,653.7 737,654 739,654.3 741,654.6 743,654.9 745,655.2 747,655.5 749,655.7 751,656 753,656.3 755,656.6 757,656.9 759,657.2 761,657.5 763,657.8 765,658.1 767,658.4 769,658.7 771,659 773,659.2 775,659.5 777,659.8 779,660.1 781,660.4 783,660.7 785,661 787,658.8 789,656.8 791,654.9 793,653.3 795,651.7 797,650.4 799,649.2 801,648.1 803,647.2 805,646.4 807,645.8 809,645.3 811,644.9 813,644.7 815,644.5 817,644.5 819,644.8 821,645.2 823,645.5 825,645.8 827,646.1 829,646.5 831,646.8 833,647.1 835,647.5 837,647.8 839,648.1 841,648.5 843,648.8 845,649.1 847,649.5 849,649.8 851,650.1 853,650.4 855,650.8 857,651.1 859,651.4 861,651.8 863,652.1 865,652.4 867,652.8 869,653.1 871,653.4 873,653.7 875,654.1 877,654.4 879,654.7 881,655.1 883,655.4 885,655.7 887,656 889,656.4 891,656.7 893,657 895,657.4 897,657.7 899,658 901,658.4 903,658.7 905,659 907,659.4 909,659.7 911,660 913,660.3 915,660.7 917,661 919,658.8 921,656.8 923,654.9 925,653.3 927,651.7 929,650.4 931,649.2 933,648.1 935,647.2 937,646.4 939,645.8 941,645.3 943,644.9 945,644.7 947,644.5 949,644.5 951,644.8 953,645.1 955,645.4 957,645.6 959,645.9 961,646.2 963,646.5 965,646.8 967,647.1 969,647.3 971,647.6 973,647.9 975,648.2 977,648.5 979,648.8 981,649.1 983,649.3 985,649.6 987,649.9 989,650.2 991,650.5 993,650.8 995,651 997,651.3 999,651.6 1001,651.9 1003,652.2 1005,652.5 1007,652.8 1009,653 1011,653.3 1013,653.6 1015,653.9 1017,654.2 1019,654.5 1021,654.7 1023,655 1025,655.3 1027,655.6 1029,655.9 1031,656.2 1033,656.4 1035,656.7 1037,657 1039,657.3 1041,657.6 1043,657.9 1045,658.2 1047,658.4 1049,658.7 1051,659 1053,659.3 1055,659.6 1057,659.9 1059,660.1 1061,660.4 1063,660.7 1065,661 1067,658.8 1069,656.8 1071,654.9 1073,653.3 1075,651.7 1077,650.4 1079,649.2 1081,648.1 1083,647.2 1085,646.4 1087,645.8 1089,645.3 1091,644.9 1093,644.7 1095,644.5 1097,644.5 1099,644.8 1101,645.1 1103,645.4 1105,645.7 1107,646 1109,646.3 1111,646.6 1113,646.9 1115,647.2 1117,647.6 1119,647.9 1121,648.2 1123,648.5 1125,648.8 1127,649.1 1129,649.4 1131,649.7 1133,650 1135,650.3 1137,650.6 1139,650.9 1141,651.2 1143,651.5 1145,651.8 1147,652.1 1149,652.4 1151,652.8 1153,653.1 1155,653.4 1157,653.7 1159,654 1161,654.3 1163,654.6 1165,654.9 1167,655.2 1169,655.5 1171,655.8 1173,656.1 1175,656.4 1177,656.7 1179,657 1181,657.3 1183,657.6 1185,657.9 1187,658.2 1189,658.6 1191,658.9 1193,659.2 1195,659.5 1197,659.8 1199,660.1 1201,660.4 1203,660.7 1205,661 1207,658.8 1209,656.8 1211,654.9 1213,653.3 1215,651.7 1217,650.4 1219,649.2 1221,648.1 1223,647.2 1225,646.4 1227,645.8 1229,645.3 1231,644.9 1233,644.7 1235,644.5 1237,644.5 1239,644.8 1241,645.1 1243,645.4 1245,645.7 1247,646 1249,646.3 1251,646.6 1253,646.9 1255,647.2 1257,647.5 1259,647.8 1261,648.1 1263,648.4 1265,648.7 1267,649 1269,649.3 1271,649.6 1273,649.9 1275,650.2 1277,650.5 1279,650.8 1281,651.1 1283,651.4 1285,651.7 1287,652 1289,652.3 1291,652.6 1293,652.9 1295,653.2 1297,653.5 1299,653.8 1301,654.1 1303,654.4 1305,654.7 1307,655 1309,655.3 1311,655.6 1313,655.9 1315,656.2 1317,656.5 1319,656.8 1321,657.1 1323,657.4 1325,657.7 1327,658 1329,658.3 1331,658.6 1333,658.9 1335,659.2 1337,659.5 1339,659.8 1341,660.1 1343,660.4 1345,660.7 1347,661 1349,658.8 1351,656.8 1353,654.9 1355,653.3 1357,651.7 1359,650.4 1361,649.2 1363,648.1 1365,647.2 1367,646.4 1369,645.8 1371,645.3 1373,644.9 1375,644.7 1377,644.5 1379,644.5 1381,644.8 1383,645.1 1385,645.4 1387,645.7 1389,646 1391,646.3 1393,646.5 1395,646.8 1397,647.1 1399,647.4 1401,647.7 1403,648 1405,648.3 1407,648.6 1409,648.9 1411,649.2 1413,649.5 1415,649.8 1417,650 1419,650.3 1421,650.6 1423,650.9 1425,651.2 1427,651.5 1429,651.8 1431,652.1 1433,652.4 1435,652.7 1437,653 1439,653.3 1441,653.6 1443,653.8 1445,654.1 1447,654.4 1449,654.7 1451,655 1453,655.3 1455,655.6 1457,655.9 1459,656.2 1461,656.5 1463,656.8 1465,657.1 1467,657.3 1469,657.6 1471,657.9 1473,658.2 1475,658.5 1477,658.8 1479,659.1 1481,659.4 1483,659.7 1485,660 1487,660.3 1489,660.6 1491,660.9 1493,659.9 1495,657.8 1497,655.9 1499,654.1 1501,652.5 1503,651 1505,649.7 1507,648.6 1509,647.6 1511,646.8 1513,646.1 1515,645.5 1517,645.1 1519,644.8 1521,644.6 1523,644.5 1525,644.7 1527,645 1529,645.3 1531,645.6 1533,645.9 1535,646.3 1537,646.6 1539,646.9 1541,647.2 1543,647.5 1545,647.9 1547,648.2 1549,648.5 1551,648.8 1553,649.1 1555,649.5 1557,649.8 1559,650.1 1561,650.4 1563,650.7 1565,651.1 1567,651.4 1569,651.7 1571,652 1573,652.3 1575,652.7 1577,653 1579,653.3 1581,653.6 1583,654 1585,654.3 1587,654.6 1589,654.9 1591,655.2 1593,655.6 1595,655.9 1597,656.2 1599,656.5 1601,656.8 1603,657.2 1605,657.5 1607,657.8 1609,658.1 1611,658.4 1613,658.8 1615,659.1 1617,659.4 1619,659.7 1621,660 1623,660.4 1625,660.7 1627,661 1629,658.8 1631,656.8 1633,654.9 1635,653.3 1637,651.7 1639,650.4 1641,649.2 1643,648.1 1645,647.2 1647,646.4 1649,645.8 1651,645.3 1653,644.9 1655,644.7 1657,644.5 1659,644.5 1661,644.8 1663,645.1 1665,645.4 1667,645.7 1669,646 1671,646.3 1673,646.6 1675,646.9 1677,647.2 1679,647.5 1681,647.8 1683,648.1 1685,648.4 1687,648.7 1689,649 1691,649.3 1693,649.6 1695,649.9 1697,650.1 1699,650.4 1701,650.7 1703,651 1705,651.3 1707,651.6 1709,651.9" fill="none" stroke="#ec3c5c" stroke-width="1.1"/>
<path d="M13.5 653.5V732M16.5 653.9V732M19.5 654.4V732M34.5 656.6V732M42.5 657.9V732M54.5 659.7V732M55.5 659.8V732M65.5 661.3V732M66.5 661.5V732M70.5 662.1V732M73.5 662.5V732M78.5 660.8V732M80.5 658.8V732M87.5 653V732M89.5 651.7V732M113.5 647.3V732M122.5 648.7V732M135.5 650.8V732M141.5 651.7V732M216.5 658.8V732M242.5 646.5V732M245.5 646.6V732M247.5 646.9V732M251.5 647.5V732M258.5 648.5V732M260.5 648.8V732M282.5 652V732M290.5 653.2V732M302.5 655V732M304.5 655.3V732M313.5 656.6V732M321.5 657.7V732M331.5 659.2V732M333.5 659.5V732M338.5 660.2V732M343.5 661V732M344.5 661.1V732M353.5 662.4V732M365.5 655.3V732M383.5 646.9V732M385.5 646.7V732M400.5 648.1V732M402.5 648.4V732M413.5 650.1V732M433.5 653V732M437.5 653.6V732M445.5 654.8V732M447.5 655.1V732M461.5 657.2V732M462.5 657.4V732M467.5 658.1V732M556.5 650.2V732M568.5 652V732M574.5 652.9V732M576.5 653.2V732M582.5 654.1V732M592.5 655.7V732M610.5 658.4V732M611.5 658.6V732M612.5 658.7V732M614.5 659V732M628.5 661.2V732M639.5 662.8V732M645.5 657.9V732M654.5 651.2V732M655.5 650.6V732M674.5 646.8V732M685.5 648.4V732M689.5 649V732M692.5 649.4V732M716.5 652.9V732M719.5 653.4V732M730.5 655V732M733.5 655.4V732M761.5 659.5V732M762.5 659.6V732M777.5 661.8V732M785.5 663V732M817.5 646.5V732M821.5 647.2V732M827.5 648.1V732M874.5 655.9V732M887.5 658V732M895.5 659.4V732M906.5 661.2V732M917.5 663V732M919.5 660.8V732M942.5 647.1V732M946.5 646.6V732M961.5 648.2V732M971.5 649.6V732M976.5 650.3V732M1001.5 653.9V732M1008.5 654.9V732M1020.5 656.6V732M1022.5 656.9V732M1023.5 657V732M1027.5 657.6V732M1047.5 660.4V732M1068.5 659.8V732M1079.5 651.2V732M1092.5 646.8V732M1095.5 646.5V732M1108.5 648.2V732M1123.5 650.5V732M1132.5 651.8V732M1139.5 652.9V732M1145.5 653.8V732M1164.5 656.7V732M1165.5 656.9V732M1203.5 662.7V732M1226.5 648.1V732M1248.5 648.1V732M1251.5 648.6V732M1255.5 649.2V732M1258.5 649.6V732M1265.5 650.7V732M1266.5 650.9V732M1275.5 652.2V732M1295.5 655.2V732M1299.5 655.8V732M1350.5 659.8V732M1355.5 655.3V732M1358.5 653V732M1364.5 649.6V732M1367.5 648.4V732M1371.5 647.3V732M1374.5 646.8V732M1377.5 646.5V732M1383.5 647.1V732M1391.5 648.3V732M1413.5 651.5V732M1423.5 652.9V732M1428.5 653.7V732M1434.5 654.5V732M1436.5 654.8V732M1438.5 655.1V732M1440.5 655.4V732M1450.5 656.9V732M1451.5 657V732M1452.5 657.2V732M1456.5 657.7V732M1462.5 658.6V732M1471.5 659.9V732M1482.5 661.5V732M1487.5 662.3V732M1496.5 658.8V732M1541.5 649.2V732M1547.5 650.2V732M1558.5 651.9V732M1559.5 652.1V732M1585.5 656.3V732M1600.5 658.7V732M1602.5 659V732M1615.5 661.1V732M1622.5 662.2V732M1624.5 662.5V732M1625.5 662.7V732M1627.5 663V732M1637.5 653.7V732M1657.5 646.5V732M1662.5 646.9V732M1675.5 648.9V732" stroke="#e01c41" stroke-width="1" fill="none" opacity=".7" shape-rendering="crispEdges"/>
<path d="M17.5 641V653.5M39.5 641V652.5M40.5 641V651.6M46.5 641V643.7M67.5 641V642.5M91.5 641V643.6M92.5 641V642.8M102.5 641V642.2M121.5 641V654.2M128.5 641V651.4M147.5 641V643.2M150.5 641V642.5M151.5 641V642.5M168.5 641V646.3M169.5 641V646.3M177.5 641V653.2M186.5 641V645.2M191.5 641V642M212.5 641V648M221.5 641V652.8M230.5 641V645.2M231.5 641V645.6M236.5 641V642.6M245.5 641V648.1M246.5 641V648M255.5 641V649.2M256.5 641V647.4M259.5 641V644M263.5 641V651.1M283.5 641V645.7M293.5 641V650.2M315.5 641V644.3M338.5 641V649.4M339.5 641V647.3M347.5 641V651.9M359.5 641V650.4M360.5 641V650.1M394.5 641V644.9M395.5 641V644.5M400.5 641V648.6M401.5 641V645.8M462.5 641V642.6M476.5 641V649.2M477.5 641V646.9M485.5 641V647.8M489.5 641V652.7M502.5 641V651M503.5 641V651M509.5 641V653.2M524.5 641V649.6M525.5 641V649.6M564.5 641V645.7M565.5 641V646.6M575.5 641V648.9M640.5 641V652.6M654.5 641V645.2M665.5 641V649.3M666.5 641V647.6M672.5 641V642.3M673.5 641V642.4M685.5 641V644.7M689.5 641V649.5M690.5 641V649.1M706.5 641V648.5M734.5 641V645.2M741.5 641V652.1M761.5 641V650.7M764.5 641V649.1M793.5 641V650.8M817.5 641V646.4M818.5 641V644.6M822.5 641V648.2M823.5 641V650.2M835.5 641V647.7M839.5 641V652.7M846.5 641V647.7M852.5 641V643.7M853.5 641V643.7M868.5 641V646.5M881.5 641V648.5M882.5 641V647.4M895.5 641V645.2M901.5 641V646.9M909.5 641V647.7M913.5 641V649.4M914.5 641V649.6M943.5 641V651.9M952.5 641V647.7M965.5 641V645.9M966.5 641V644.6M996.5 641V650.8M1007.5 641V651.9M1033.5 641V651.3M1034.5 641V651.4M1039.5 641V642.1M1044.5 641V647M1056.5 641V650.3M1061.5 641V642.4M1065.5 641V644.9M1066.5 641V645M1073.5 641V653.9M1093.5 641V649M1122.5 641V643.8M1123.5 641V642.8M1150.5 641V645M1154.5 641V649.8M1167.5 641V644.6M1188.5 641V647.9M1194.5 641V649.5M1195.5 641V649.5M1199.5 641V649.4M1207.5 641V645.3M1220.5 641V645M1257.5 641V645.1M1273.5 641V649.5M1280.5 641V650.4M1281.5 641V649.5M1296.5 641V644.9M1317.5 641V650.6M1320.5 641V649M1327.5 641V651.7M1360.5 641V653.2M1371.5 641V649.5M1391.5 641V645.3M1402.5 641V647.5M1403.5 641V648.5M1410.5 641V646.5M1413.5 641V644.4M1414.5 641V643.9M1469.5 641V648.7M1479.5 641V653.6M1480.5 641V652.8M1487.5 641V649.4M1528.5 641V650.5M1529.5 641V650.5M1532.5 641V645.8M1533.5 641V645.8M1564.5 641V644.2M1609.5 641V650.5M1610.5 641V648M1621.5 641V645.3M1625.5 641V643.9M1628.5 641V642.1M1640.5 641V649.7M1647.5 641V650.6M1680.5 641V648.3M1681.5 641V649M1694.5 641V652.5" stroke="#000" stroke-width="1" fill="none" shape-rendering="crispEdges"/>
<path d="M60 733.5H1700" stroke="#f4a0ac" stroke-width="1" stroke-dasharray="5 5" shape-rendering="crispEdges"/>
<path d="M13.5 848.9V872.7M14.5 853.7V874.3M15.5 844.2V885.2M16.5 851V880.4M17.5 854.9V878.4M18.5 847.8V885M19.5 857V875.5M20.5 854V874.9M21.5 853.6V875.5M22.5 847.6V874M23.5 856.4V872.5M24.5 855.2V872.4M25.5 856.5V872.9M26.5 854V875.3M27.5 854.8V893.2M28.5 854.4V874.1M29.5 850.4V875M30.5 851.8V875.1M31.5 842.1V876.2M32.5 854.5V877.4M33.5 855.7V878.6M34.5 854.6V876.7M35.5 846.4V871.9M36.5 847.7V874.8M37.5 846.4V882M38.5 854.1V874.7M39.5 852.8V875.2M40.5 849.5V884.4M41.5 849.4V873.2M42.5 855.6V874.9M43.5 853.5V871.9M44.5 843.2V872.2M45.5 855V870.6M46.5 845.8V872.7M47.5 853.4V871.5M48.5 850.1V876.2M49.5 851.1V873.5M50.5 853.9V869.4M51.5 851.9V872.8M52.5 851.1V883.3M53.5 840.2V876.4M54.5 851.9V877.4M55.5 849.9V870.5M56.5 853V868M57.5 853.2V868.7M58.5 850.9V869.4M59.5 846.6V869.2M60.5 849.7V882.4M61.5 848.6V881.5M62.5 846.6V867.7M63.5 847.6V872.5M64.5 849.9V877.9M65.5 850.8V868.8M66.5 839.1V876.6M67.5 850.6V867.5M68.5 849V868.1M69.5 850.6V881.1M70.5 845.2V870M71.5 842.7V880.9M72.5 849.8V868M73.5 841.5V883.5M74.5 850.2V866.9M75.5 850.1V867M76.5 847.5V869M77.5 847.3V869M78.5 849.6V866.3M79.5 844.4V868M80.5 846.7V871.7M81.5 841.8V867M82.5 850.1V864.8M83.5 850.3V877.8M84.5 846.8V875.3M85.5 849.3V872.3M86.5 853.6V878.8M87.5 851V871.9M88.5 846.1V871.4M89.5 843.8V870.5M90.5 851.2V882.3M91.5 854.9V877.7M92.5 846.9V872.1M93.5 854.5V870.4M94.5 854.1V884.5M95.5 854.6V884.1M96.5 849V873.3M97.5 855.1V870.9M98.5 848.5V870.1M99.5 842.4V876.3M100.5 854.7V870.8M101.5 854V880.9M102.5 849.9V877.6M103.5 848.4V877.1M104.5 848V886.9M105.5 850.5V871.8M106.5 846.6V875.5M107.5 854.6V870.8M108.5 853.7V872.1M109.5 853.5V872.1M110.5 846.2V870.6M111.5 845.4V880.7M112.5 855.6V883.4M113.5 854.2V882.2M114.5 854.1V872.2M115.5 844.3V882.6M116.5 852.8V873.4M117.5 855.1V872.6M118.5 855.6V871.6M119.5 854.7V873M120.5 854.6V874.4M121.5 853.1V881.8M122.5 856V875.3M123.5 848.3V887.8M124.5 854.3V872.4M125.5 855.1V871.6M126.5 851.9V874.6M127.5 851.5V875.7M128.5 855.6V872.2M129.5 841.4V874.4M130.5 850.1V874M131.5 848.9V873.3M132.5 855.4V872.7M133.5 856.4V871.7M134.5 856.3V871.9M135.5 851.9V871.5M136.5 855.2V879.5M137.5 855.1V880M138.5 852.8V871.7M139.5 856.9V872.1M140.5 856.5V872.4M141.5 852.1V873.5M142.5 841.4V874.9M143.5 855V873.4M144.5 854.4V874.4M145.5 855.5V873.8M146.5 846.7V876.6M147.5 855V873.2M148.5 854.3V873.9M149.5 852.2V874.1M150.5 853.9V874.9M151.5 802.7V824.2M152.5 799.9V827M153.5 801.7V829.1M154.5 805.4V829.2M155.5 799.1V829.7M156.5 807.6V827.4M157.5 808V832.8M158.5 805.6V838.6M159.5 799.2V844.6M160.5 805.4V832.2M161.5 808.1V832.2M162.5 810.3V832.4M163.5 800.3V844.2M164.5 811V848.2M165.5 796.3V835.1M166.5 802.8V835.2M167.5 812.6V832.8M168.5 811.1V836.4M169.5 806.6V843.5M170.5 801.8V835.5M171.5 809.3V833.9M172.5 810.8V836.7M173.5 799.4V834.8M174.5 804.1V835.8M175.5 810V834.4M176.5 811.5V844.6M177.5 801.8V834.5M178.5 812.2V831.2M179.5 808.1V853.1M180.5 802.5V836.4M181.5 806V834.3M182.5 810.6V839.2M183.5 798.9V832.2M184.5 811.8V833.5M185.5 847.1V875.2M186.5 852.8V889.6M187.5 854.1V878.8M188.5 855.1V879.9M189.5 855.7V876.5M190.5 854.1V876.4M191.5 850.4V870.6M192.5 844.1V871.2M193.5 851.3V867.7M194.5 845.6V866.5M195.5 845.7V872M196.5 849.9V877.5M197.5 845.9V868.7M198.5 847.7V864.2M199.5 837.8V870.1M200.5 841.1V875.6M201.5 845.9V865.8M202.5 836.5V862.8M203.5 835.6V863.2M204.5 835.6V869.8M205.5 838.1V861.4M206.5 831.8V866.7M207.5 843.3V859.6M208.5 842.8V860.1M209.5 837.2V869.6M210.5 829.1V862.2M211.5 840.7V874.9M212.5 842.2V867.8M213.5 842.1V862.9M214.5 833.7V863M215.5 837.8V861.2M216.5 843.4V870.7M217.5 842.1V863.4M218.5 826.9V861.8M219.5 847.1V867.4M220.5 848.6V874.7M221.5 843.8V868.6M222.5 846.3V871M223.5 841.6V875.1M224.5 853.9V869.5M225.5 846.6V872.2M226.5 856.6V878.1M227.5 853.4V882.8M228.5 852.3V886.3M229.5 855.9V874.4M230.5 848.2V874.6M231.5 852.6V875.8M232.5 848.8V874.6M233.5 844V886.4M234.5 854.4V887M235.5 856.9V872.6M236.5 854.8V874.8M237.5 857.2V880.7M238.5 853.8V887.4M239.5 845.3V872.2M240.5 854.4V886.9M241.5 855.2V874.5M242.5 854.1V886.3M243.5 856.2V871.8M244.5 854V874.4M245.5 847.1V879.7M246.5 852.2V876.6M247.5 853.2V874.2M248.5 857.2V882M249.5 852.5V875.3M250.5 854.1V874.7M251.5 855.9V873M252.5 855.4V884.4M253.5 844.4V886M254.5 855.9V885M255.5 851.7V881.9M256.5 853.6V879.2M257.5 852.6V876.6M258.5 855.6V871.4M259.5 856V876.3M260.5 853.2V873.6M261.5 856.1V870.8M262.5 845.8V877.5M263.5 850.2V871.7M264.5 852.2V877.9M265.5 854.5V879.9M266.5 853.4V874.2M267.5 845.9V873.1M268.5 855.9V871.8M269.5 846.7V873.3M270.5 854.9V872.7M271.5 856.4V871.4M272.5 846.5V874.2M273.5 842.1V874.1M274.5 845.9V873.7M275.5 854.3V872.8M276.5 853.8V872.1M277.5 849.1V872.4M278.5 845.5V872.8M279.5 852.9V874M280.5 853.4V874.3M281.5 848.1V871.7M282.5 844.5V877.5M283.5 856.3V876M284.5 855.3V872.8M285.5 854V880.9M286.5 845.8V874.4M287.5 844.1V878M288.5 855.4V872.6M289.5 853.5V875.8M290.5 846.5V872.2M291.5 851.7V880.2M292.5 856.5V870.9M293.5 855.7V884.7M294.5 854.1V886.3M295.5 853.6V883.5M296.5 853V873.8M297.5 853.3V874M298.5 855.6V882.1M299.5 851.8V874.3M300.5 856.2V870.7M301.5 854.7V887.3M302.5 842.7V875.5M303.5 850.6V876.7M304.5 855.2V879M305.5 856V871.6M306.5 856.5V878M307.5 856.4V871M308.5 854.2V873.2M309.5 848.9V872.1M310.5 855.7V880.4M311.5 856.1V883.7M312.5 847.6V874.4M313.5 853.1V882M314.5 853.8V884.6M315.5 856.6V881.9M316.5 856.8V873.9M317.5 851.1V873.3M318.5 853.8V874.5M319.5 843.1V873.7M320.5 853.7V874.7M321.5 851V878.9M322.5 856.1V881.4M323.5 851.4V871.9M324.5 850.9V872.5M325.5 845.8V874M326.5 852.6V873.1M327.5 851.8V873.4M328.5 846.5V872M329.5 845.6V879M330.5 851.3V884.2M331.5 846.2V871.6M332.5 854V869.3M333.5 842.5V870.7M334.5 847.2V870.2M335.5 853.7V869M336.5 851.8V870.5M337.5 850.2V871.8M338.5 853V868.7M339.5 845.7V870M340.5 850.7V870.3M341.5 851.4V880M342.5 850.1V885.1M343.5 850.5V879M344.5 844.2V869.7M345.5 845.5V868.2M346.5 849.8V870.5M347.5 851.5V873.1M348.5 844.2V870.3M349.5 852.5V866.6M350.5 848.9V869.9M351.5 841.4V869.6M352.5 842.2V881.4M353.5 848.1V867.2M354.5 848.1V869.1M355.5 848.5V871.1M356.5 848.3V868.2M357.5 840.6V868.8M358.5 848.5V867.4M359.5 836.6V869M360.5 847.5V872.6M361.5 836.9V867.8M362.5 849.5V865.1M363.5 846.8V868.8M364.5 848.1V879.3M365.5 852.3V867.6M366.5 842.4V872M367.5 853.4V870.9M368.5 853.6V871M369.5 847.7V874.4M370.5 853.9V874.4M371.5 854.4V886.6M372.5 855.3V873.5M373.5 845.5V874.8M374.5 854.4V873.7M375.5 846.4V872.8M376.5 842.9V880.7M377.5 856.4V871.1M378.5 853.1V881.7M379.5 853.6V877.8M380.5 855.8V870.6M381.5 849.7V873.1M382.5 847.8V875.8M383.5 846.2V873.4M384.5 852.9V877.1M385.5 849.6V879M386.5 851.4V876.2M387.5 853V882.6M388.5 856.2V871.5M389.5 855.9V871.4M390.5 856.3V870.8M391.5 844.3V880M392.5 855.2V872.7M393.5 845.3V875.8M394.5 855V874.2M395.5 845.7V873.9M396.5 855.8V870.1M397.5 842.3V873.4M398.5 850.6V871.9M399.5 852.8V873M400.5 853.9V874.4M401.5 853.7V871.3M402.5 850.4V881.1M403.5 855.7V874.9M404.5 856.4V871M405.5 855.6V871.9M406.5 854.4V884.2M407.5 847.9V871.1M408.5 855.3V872.4M409.5 856.5V871.2M410.5 851V876.2M411.5 855.3V871.8M412.5 842.9V880.1M413.5 853.6V874M414.5 853.4V876.4M415.5 845.3V871.3M416.5 853.5V876.7M417.5 853.2V874.6M418.5 840V873.7M419.5 853.2V874.5M420.5 856.8V882.3M421.5 856.5V871.3M422.5 853.5V874.5M423.5 853.7V875.5M424.5 847.4V872.3M425.5 857V875.3M426.5 855.8V872.4M427.5 848.2V877.3M428.5 856.2V871.8M429.5 855.9V873.7M430.5 842.5V877M431.5 854.8V871.7M432.5 850.9V888.6M433.5 851.6V883.2M434.5 851.1V874.3M435.5 845.3V874.2M436.5 855.6V872.5M437.5 837.9V874.5M438.5 852.3V874.7M439.5 855.4V872.1M440.5 855.2V872.7M441.5 855V873M442.5 854.4V873.5M443.5 855.3V872.3M444.5 852.5V874.1M445.5 849V874.7M446.5 855.5V871.9M447.5 852.9V876.2M448.5 853.1V884.1M449.5 855.1V882.7M450.5 849.3V873.1M451.5 853.5V874.5M452.5 851.6V873.1M453.5 852.3V874.4M454.5 853.3V874.4M455.5 851.9V874.1M456.5 853V874.7M457.5 849.9V871.9M458.5 856.7V871.5M459.5 846.8V883.3M460.5 854.3V882M461.5 855.3V872.4M462.5 848.2V876M463.5 854.5V872M464.5 849.6V874.7M465.5 844V870.9M466.5 850.2V884.2M467.5 854.5V871.9M468.5 853.9V872.2M469.5 855.7V880.5M470.5 845.1V870.6M471.5 855.1V870.2M472.5 844V872.9M473.5 852.3V872.4M474.5 852V872.7M475.5 849.5V873M476.5 851.9V871.8M477.5 850.2V872M478.5 842.4V872.1M479.5 851.4V871.6M480.5 850.6V872.7M481.5 849.2V871.7M482.5 848.9V875.4M483.5 850.4V882.9M484.5 846.9V873.6M485.5 846.7V881.3M486.5 850.6V877.6M487.5 849.6V877M488.5 849.8V870.9M489.5 851.2V871.1M490.5 791.7V836.7M491.5 798.2V830.5M492.5 804.3V836.2M493.5 805.1V836.7M494.5 799.8V829.6M495.5 806.1V829.8M496.5 801.1V840.6M497.5 797.4V831.2M498.5 805.3V838.3M499.5 806.6V829.6M500.5 810.9V830.4M501.5 804.3V837.6M502.5 806.1V832.6M503.5 811.8V840.6M504.5 804.5V838.2M505.5 811.6V838.7M506.5 802.6V846.4M507.5 811.9V842.4M508.5 806.6V840.2M509.5 812.6V842.4M510.5 812.3V833.5M511.5 808V849M512.5 811.4V844.1M513.5 794.6V842.1M514.5 802.9V851.9M515.5 798.9V839.9M516.5 808.7V833.9M517.5 801.4V833.9M518.5 810.4V835.6M519.5 803.8V848M520.5 811.5V830.6M521.5 801.6V849.1M522.5 811.5V837M523.5 806.2V837.1M524.5 855.6V872.7M525.5 855.4V875.2M526.5 855.2V875.4M527.5 854.8V875.9M528.5 855V875.4M529.5 858V873.1M530.5 854.4V874.6M531.5 855.9V877.1M532.5 848.6V871.6M533.5 855.5V871M534.5 854V871.3M535.5 843.8V873.1M536.5 844.3V869.1M537.5 844V871.5M538.5 850.2V876.5M539.5 842.7V870M540.5 846.6V874.3M541.5 850.4V868.3M542.5 848.1V876.7M543.5 847.3V881.8M544.5 839.1V865.6M545.5 847.4V867.7M546.5 845.9V876.1M547.5 848.1V866.3M548.5 847.5V873.3M549.5 847.7V868.1M550.5 841.2V868.8M551.5 847.6V877.4M552.5 848V868.8M553.5 849V868.6M554.5 841.2V871.1M555.5 852.1V866.9M556.5 847.7V868.6M557.5 851.4V872.8M558.5 852.6V878.6M559.5 847.5V869.5M560.5 848.9V868.6M561.5 841.8V875.4M562.5 849V876.2M563.5 853.9V871.4M564.5 845.9V874.6M565.5 844.8V877.7M566.5 853.6V873.5M567.5 855.5V871.3M568.5 855.2V873.3M569.5 854.1V880.4M570.5 854.5V885.2M571.5 854.7V881M572.5 853.7V875.6M573.5 857.2V876.8M574.5 853.2V873.4M575.5 855.6V872.9M576.5 856.5V879.4M577.5 854.8V873.6M578.5 856.2V882.7M579.5 847.9V871.9M580.5 850.9V871.4M581.5 853.8V886.4M582.5 852.9V884.8M583.5 854.7V877.1M584.5 849.1V871.8M585.5 855.2V872.3M586.5 855.5V883.1M587.5 855.1V872.2M588.5 851.5V875M589.5 853.2V882.8M590.5 852.8V874.4M591.5 855.6V871.6M592.5 853.4V874M593.5 854.3V873.7M594.5 841.2V874.7M595.5 855.9V871.6M596.5 856V874.3M597.5 845.3V878.3M598.5 853.5V882.3M599.5 853.4V874.1M600.5 854V885.4M601.5 855.5V878.5M602.5 854.2V872.3M603.5 854.9V877M604.5 851.7V876.7M605.5 850V877M606.5 849.8V873.5M607.5 853.9V872.3M608.5 854.3V871.8M609.5 853.9V872.1M610.5 846V870.5M611.5 854.7V882.2M612.5 852.4V885.7M613.5 851.8V872.6M614.5 850.5V870.5M615.5 854.2V870.3M616.5 851.5V881.7M617.5 851.3V871.7M618.5 849.7V879.9M619.5 852.3V870.6M620.5 848.1V879.2M621.5 847V878.8M622.5 852.2V870.2M623.5 846V870.5M624.5 850.6V877.2M625.5 850V877.7M626.5 845.9V869.7M627.5 851.3V869.3M628.5 851.4V872M629.5 852.7V878.3M630.5 851.7V868.6M631.5 851.2V870.5M632.5 843.1V868M633.5 846.1V868.3M634.5 851.2V880M635.5 852.2V866.4M636.5 839.7V871.1M637.5 849.4V867.7M638.5 849.1V867.7M639.5 848V867.3M640.5 847.6V868.9M641.5 848.6V877.2M642.5 843V866.5M643.5 846.8V867.1M644.5 849.6V865.3M645.5 847.7V876.9M646.5 844.1V868.1M647.5 845.6V874.8M648.5 851.4V872.8M649.5 838.3V870.7M650.5 849.9V883.4M651.5 853.4V869.6M652.5 853.5V874.8M653.5 850.9V872M654.5 852.9V872.6M655.5 855.3V874.3M656.5 855.8V871.6M657.5 853.8V873.4M658.5 855.5V873.1M659.5 853.9V874.2M660.5 850V871.5M661.5 852.6V879.9M662.5 853.7V871.8M663.5 845.2V871.9M664.5 851.6V871.1M665.5 853.4V872.1M666.5 853.1V872.6M667.5 854V873.6M668.5 843.8V872.1M669.5 845.4V881.9M670.5 855.1V870.8M671.5 852.1V886M672.5 843.8V872.9M673.5 848.1V881.2M674.5 848.8V872.4M675.5 855.1V871.4M676.5 853.8V874.5M677.5 852.2V873.9M678.5 840.5V875.7M679.5 848.1V871.3M680.5 854.1V872.9M681.5 844.3V871.2M682.5 853.8V877.9M683.5 848.1V872.3M684.5 844.5V872.4M685.5 853.5V871.5M686.5 852.9V870.4M687.5 852.7V873.4M688.5 852.4V874.2M689.5 853.8V882.8M690.5 848.2V872.6M691.5 844.5V882.2M692.5 853.8V881.5M693.5 854.8V872.9M694.5 854.6V880.2M695.5 849.2V871.5M696.5 851.8V873M697.5 842.9V886.2M698.5 854V875.2M699.5 856.7V871.8M700.5 856.4V872.5M701.5 855.1V873.3M702.5 854.3V879.4M703.5 851.7V873.4M704.5 853V875M705.5 855V878.2M706.5 842.3V875.4M707.5 856.4V872.2M708.5 853.4V874.2M709.5 847.9V872.1M710.5 855.1V872.1M711.5 852.4V874.9M712.5 849.9V874.6M713.5 857.1V882.4M714.5 847.3V872.3M715.5 856.8V872.2M716.5 855.5V876.6M717.5 854V875.5M718.5 855.3V876.6M719.5 845V877.1M720.5 849.7V888.9M721.5 852.8V875.3M722.5 845.3V874.5M723.5 854.3V890.3M724.5 857.2V882.7M725.5 845.3V873.7M726.5 855.7V880.8M727.5 856.7V871.6M728.5 850.5V876M729.5 855.9V872.7M730.5 854.6V882.2M731.5 855.2V872.4M732.5 856.1V882.4M733.5 850.5V874.4M734.5 856.5V870.7M735.5 853.4V873.2M736.5 853.7V882.6M737.5 848.1V878.4M738.5 853.9V873.3M739.5 854.6V877.9M740.5 855.6V872.2M741.5 848.8V876.6M742.5 847.9V886M743.5 851.9V871.7M744.5 850.2V873.5M745.5 847.9V872.2M746.5 855.7V871.1M747.5 853.5V872.3M748.5 852V880.5M749.5 848.9V872.3M750.5 852.4V877.2M751.5 854.5V869.4M752.5 851.2V873.4M753.5 844.2V871.9M754.5 851.6V870.8M755.5 851.7V870.2M756.5 851.1V875.3M757.5 853.2V870.2M758.5 850.9V868.4M759.5 853.2V868.1M760.5 853.4V879.2M761.5 837.5V871.8M762.5 850.2V871.1M763.5 845.2V869.4M764.5 852.3V876M765.5 844.3V877.6M766.5 844.3V881.1M767.5 850.9V870M768.5 851.9V868.8M769.5 850.6V872.3M770.5 851.7V868.2M771.5 850V874.3M772.5 851.6V867.8M773.5 840.1V886.5M774.5 840V876.8M775.5 842.2V869.1M776.5 841.6V870.5M777.5 841.1V876.4M778.5 848.8V869.7M779.5 847.4V869.5M780.5 849.9V868.4M781.5 851.1V879.7M782.5 840.8V867.6M783.5 852V866.1M784.5 838.9V881M785.5 841.3V875.8M786.5 839.6V878.3M787.5 843.2V866.8M788.5 851.1V865.3M789.5 845.4V868.1M790.5 847.1V887.8M791.5 848.4V869.2M792.5 848.9V868.4M793.5 848.9V870.4M794.5 851.3V875.4M795.5 851V869.6M796.5 852.2V884.5M797.5 847.6V873.5M798.5 856V870.6M799.5 854.5V879.3M800.5 854.2V873.8M801.5 854.1V871.4M802.5 854.5V873.4M803.5 856.6V883.7M804.5 847V872.2M805.5 853.7V883.2M806.5 853.7V881.3M807.5 854.9V871.5M808.5 855.4V873.2M809.5 857.4V882.3M810.5 855.5V874.3M811.5 855.4V872M812.5 855.8V872.9M813.5 854.7V873.1M814.5 853.8V874.6M815.5 855.6V872.7M816.5 850.8V874.5M817.5 855.6V872.6M818.5 851.9V872.7M819.5 854.8V874.7M820.5 857.3V871.4M821.5 856.8V871.9M822.5 856.9V871.8M823.5 854.8V873.8M824.5 843.2V873.7M825.5 856.4V884.9M826.5 855.4V872.6M827.5 845.6V872.7M828.5 851.9V877.6M829.5 848.5V872.8M830.5 787.7V838.6M831.5 803.8V826.9M832.5 803.3V831.9M833.5 802.7V845M834.5 803.8V829.4M835.5 806.7V838.4M836.5 795.3V834.1M837.5 800.4V828.7M838.5 800.7V833.7M839.5 808.3V830.9M840.5 803.6V834.4M841.5 805.6V843.6M842.5 810.5V831.6M843.5 799.1V833.9M844.5 805.9V837.8M845.5 811.2V832.9M846.5 807.2V832.8M847.5 799.1V843M848.5 813.6V832.7M849.5 801.2V846.8M850.5 811.7V840.2M851.5 803.9V837.9M852.5 810.1V833.1M853.5 808.4V844.9M854.5 805.6V838.7M855.5 810V833.5M856.5 811.4V832.1M857.5 799.4V832.4M858.5 808V835.4M859.5 808.6V845.5M860.5 803.7V836.4M861.5 807.4V832.2M862.5 802.5V845.8M863.5 805.6V834.9M864.5 849.2V873M865.5 847.1V878.4M866.5 858V883.1M867.5 857.5V873.1M868.5 847.8V876M869.5 855.6V874.4M870.5 855.9V873.9M871.5 848.1V876.4M872.5 854.5V873.3M873.5 847.8V882.6M874.5 853.8V886.9M875.5 853.5V873.9M876.5 854.4V870.2M877.5 841.9V870.4M878.5 853.5V868.7M879.5 849.8V867.6M880.5 850.1V868M881.5 847.3V875.7M882.5 837.5V875.7M883.5 846.1V866.7M884.5 847.4V865.3M885.5 842.9V862.9M886.5 844.5V866.3M887.5 847.2V863.5M888.5 844.7V868.8M889.5 840.2V864.4M890.5 844.2V867M891.5 844.4V865.8M892.5 845.9V870M893.5 842.5V862.8M894.5 834.9V877.8M895.5 848.4V863.7M896.5 837.9V863.9M897.5 836.6V866.7M898.5 846.2V875.3M899.5 846.5V868.4M900.5 847.1V870.4M901.5 840.4V867.5M902.5 847.1V874.8M903.5 836.4V868.2M904.5 843.1V870.6M905.5 846.8V878.4M906.5 840.2V867.8M907.5 849.8V867M908.5 850.6V866.1M909.5 846.2V867.8M910.5 842.2V867.3M911.5 847.7V869.5M912.5 843.9V869M913.5 847.1V869.2M914.5 842.5V865.9M915.5 845.4V875.9M916.5 850.8V877.9M917.5 850.5V867.1M918.5 850V871.5M919.5 847.7V868.7M920.5 847.4V867.1M921.5 840.4V878.8M922.5 848.8V870.2M923.5 845.2V864.2M924.5 850.6V865.3M925.5 847.4V878.6M926.5 840.5V879.4M927.5 852.7V877M928.5 853.2V892.3M929.5 851.3V871.5M930.5 855.2V876.8M931.5 847.3V883M932.5 853.3V879M933.5 850V872.3M934.5 855.6V871.3M935.5 853.1V886M936.5 847.6V883.4M937.5 853.5V882.7M938.5 853.4V875.6M939.5 852.4V871.1M940.5 847V871.6M941.5 855.6V870.7M942.5 853.3V880.1M943.5 852.5V875.7M944.5 855.5V877.7M945.5 855.2V871.8M946.5 852.7V883.7M947.5 852.4V882.6M948.5 847.4V871.5M949.5 848.6V874.1M950.5 841.8V874.4M951.5 855V872.7M952.5 854.7V877.4M953.5 853V874.8M954.5 849.8V873.3M955.5 855.2V885.4M956.5 854.2V873.8M957.5 848.2V872.7M958.5 855.1V873.5M959.5 844V875.4M960.5 856.2V876.9M961.5 842.9V873.6M962.5 853.6V874.9M963.5 853.7V874M964.5 843.9V876.2M965.5 855.8V873.1M966.5 849V879.8M967.5 855.4V872.3M968.5 845.8V873.6M969.5 846.9V872.9M970.5 853.3V883.8M971.5 848.8V877.6M972.5 855.1V875M973.5 855.4V872.8M974.5 856.8V875M975.5 851.4V873.9M976.5 854.2V874.3M977.5 853.6V879.7M978.5 848.2V873.8M979.5 854.2V887.7M980.5 855.2V885.8M981.5 854.9V874.2M982.5 856.4V879.7M983.5 847.3V871M984.5 854.2V873.6M985.5 854V872M986.5 845.8V885M987.5 852V875.3M988.5 853.5V878.1M989.5 852.6V883.5M990.5 853.7V873.8M991.5 853.6V874M992.5 855.6V872.2M993.5 856V883.1M994.5 857V873.1M995.5 853.2V874.9M996.5 848.1V879.9M997.5 844.5V882.3M998.5 856.1V877.2M999.5 850.2V874.5M1000.5 853.8V874.7M1001.5 848.3V874.6M1002.5 855.4V873.8M1003.5 849.8V875.6M1004.5 855.4V885.4M1005.5 853.8V874.8M1006.5 855.1V887.3M1007.5 852.8V872.8M1008.5 853.8V873.5M1009.5 849V887M1010.5 855.1V873.3M1011.5 855.8V873M1012.5 856.6V872.2M1013.5 854.7V874.5M1014.5 856V873.2M1015.5 855.9V873.2M1016.5 857V872.8M1017.5 852V882.5M1018.5 856.5V873.3M1019.5 846.3V874.7M1020.5 854.6V875M1021.5 854V872.4M1022.5 853.1V879.3M1023.5 852.8V874.3M1024.5 856.1V878.9M1025.5 846.9V872.4M1026.5 851.6V874.7M1027.5 845.5V872.7M1028.5 853V878M1029.5 846V872.4M1030.5 848.9V881.9M1031.5 854.5V887.2M1032.5 851.9V871.6M1033.5 853.8V877.4M1034.5 852V875.4M1035.5 853.1V875.7M1036.5 854.4V874M1037.5 851.6V878M1038.5 854.1V869.4M1039.5 853.8V868.9M1040.5 853V869.5M1041.5 853.4V880.8M1042.5 845.6V869.6M1043.5 852.1V874.3M1044.5 839V881.4M1045.5 844.6V876.4M1046.5 850.7V878.7M1047.5 848.8V881.8M1048.5 850.1V876M1049.5 846.5V871.4M1050.5 849.2V879.4M1051.5 849.8V873.8M1052.5 849V880.6M1053.5 849.6V867.6M1054.5 851.1V866M1055.5 838.7V869.7M1056.5 850.8V866.2M1057.5 850.3V866.7M1058.5 839.3V868.9M1059.5 848.6V865.8M1060.5 849.6V865.1M1061.5 846.5V871.8M1062.5 848.7V865.5M1063.5 846.2V868.6M1064.5 846.9V871.9M1065.5 846.5V867.7M1066.5 838.4V878.4M1067.5 849V864.8M1068.5 843.4V865.4M1069.5 846.2V866.7M1070.5 839.2V868.3M1071.5 847.1V866.9M1072.5 842.3V867.3M1073.5 848.6V879.2M1074.5 850.5V871.9M1075.5 853.3V877.1M1076.5 849.9V874.6M1077.5 851.7V870.2M1078.5 852.5V874M1079.5 851.6V887M1080.5 842.1V879.8M1081.5 855.6V885.5M1082.5 854.4V880.2M1083.5 851.8V885.6M1084.5 844.5V877.3M1085.5 852.9V874.7M1086.5 856.1V871.2M1087.5 856.3V871.3M1088.5 856.8V872.8M1089.5 854.1V873.5M1090.5 846.8V874.4M1091.5 852.8V878.1M1092.5 853.7V874.3M1093.5 855.2V881.8M1094.5 849.5V872.9M1095.5 855.9V881.2M1096.5 856.4V870.6M1097.5 854.2V885.3M1098.5 855.2V884.5M1099.5 841.5V881.5M1100.5 853V875M1101.5 852.2V874.1M1102.5 845.3V870.9M1103.5 846.4V883.9M1104.5 842.1V876.4M1105.5 848.5V876.4M1106.5 849.1V871.8M1107.5 854.1V888M1108.5 838.9V873.9M1109.5 856.5V875.5M1110.5 854.8V872.6M1111.5 856.2V871.6M1112.5 855.3V873.3M1113.5 856.7V871.4M1114.5 853.3V879M1115.5 856.2V879.4M1116.5 852.1V874.9M1117.5 852.9V873.9M1118.5 842.1V886.1M1119.5 849.8V871.9M1120.5 846.3V875M1121.5 855V879.5M1122.5 852.1V876.4M1123.5 854.4V874.1M1124.5 845.3V871.6M1125.5 856.9V872M1126.5 846.5V875.4M1127.5 856.9V877.2M1128.5 846.4V877.9M1129.5 854.7V888.5M1130.5 854.8V874.8M1131.5 851.9V875.5M1132.5 855.7V874.1M1133.5 857.8V871.9M1134.5 856.6V883.1M1135.5 845.3V879M1136.5 856.6V881.3M1137.5 855.8V873.7M1138.5 854.3V875.2M1139.5 848.3V873.6M1140.5 854.1V876.3M1141.5 848V871.9M1142.5 847V871.9M1143.5 856V873.6M1144.5 855.2V873.9M1145.5 856.9V872.8M1146.5 850.1V882.3M1147.5 854.3V881.3M1148.5 845.8V875.4M1149.5 857.1V872.4M1150.5 853.9V875.6M1151.5 855.3V881.9M1152.5 855.3V877.1M1153.5 857.1V876.3M1154.5 853.3V877.8M1155.5 853.6V875.8M1156.5 855.7V880M1157.5 855V875M1158.5 852.3V878.8M1159.5 851.4V881.1M1160.5 845.5V880.1M1161.5 856.7V871.3M1162.5 855.3V872.8M1163.5 843.2V874.2M1164.5 854.4V874.9M1165.5 856V871.8M1166.5 855V872.8M1167.5 855.6V883.2M1168.5 854.3V873.3M1169.5 799.4V834.1M1170.5 793.4V831.3M1171.5 796.1V830.6M1172.5 798.8V826.6M1173.5 802.9V827.8M1174.5 796.3V830.3M1175.5 802.5V830.1M1176.5 805.2V836.4M1177.5 802.3V837.9M1178.5 797.8V844.5M1179.5 802.6V850.5M1180.5 804.4V834.5M1181.5 803.9V833.4M1182.5 794.7V832.7M1183.5 809.4V831.7M1184.5 807.8V842.5M1185.5 811.9V832.1M1186.5 810.9V839.2M1187.5 812.3V833M1188.5 806.9V835.8M1189.5 809.8V839.2M1190.5 800.9V841.7M1191.5 810.5V832.2M1192.5 790.9V834.3M1193.5 800.4V840.2M1194.5 806.2V841.8M1195.5 803.6V830.6M1196.5 808.7V836.1M1197.5 807.8V834.1M1198.5 802.2V843.9M1199.5 803V835.4M1200.5 809.3V832.2M1201.5 808.2V844.2M1202.5 807V831.3M1203.5 855.4V872.4M1204.5 846V873M1205.5 851.3V882.2M1206.5 853.1V876.4M1207.5 852.6V873.6M1208.5 852.5V872.2M1209.5 846.9V872.7M1210.5 847.5V864.2M1211.5 846.8V870.8M1212.5 846.5V867.8M1213.5 840.5V868.4M1214.5 849.8V866.5M1215.5 847.8V872.2M1216.5 850.4V867M1217.5 842.8V870.4M1218.5 850.8V866.8M1219.5 850.7V866.6M1220.5 850.9V867.5M1221.5 843.6V880.2M1222.5 849.7V866M1223.5 846.6V880.7M1224.5 836.1V868.2M1225.5 848.3V868.2M1226.5 848.5V865.8M1227.5 839.8V867.4M1228.5 843.3V865.1M1229.5 849.7V865.9M1230.5 843.9V865.7M1231.5 847.4V869.2M1232.5 849.5V866.6M1233.5 844.4V867M1234.5 852.8V871.8M1235.5 850V876.1M1236.5 850.4V874.9M1237.5 850.6V880M1238.5 853V871.2M1239.5 850.9V873.2M1240.5 847.3V870.6M1241.5 847.3V878M1242.5 856.4V871M1243.5 850.5V871.8M1244.5 857.1V876.3M1245.5 856.6V872.6M1246.5 854.7V872.5M1247.5 847.7V888.6M1248.5 843.5V875M1249.5 857.2V872.6M1250.5 852.3V883.5M1251.5 856.8V884.5M1252.5 857.5V873.2M1253.5 856.9V873M1254.5 846.4V879.3M1255.5 854.3V888.7M1256.5 854.6V874.5M1257.5 855.7V873.1M1258.5 854.6V872M1259.5 852.9V883.4M1260.5 854V878M1261.5 847.9V880.9M1262.5 853.5V877.4M1263.5 854.2V872.4M1264.5 852.8V883.1M1265.5 853.2V876M1266.5 853.4V878.3M1267.5 843.3V873.8M1268.5 851.8V881.9M1269.5 856.2V870.3M1270.5 853.8V872.7M1271.5 847.6V870.6M1272.5 855.2V883.9M1273.5 850.4V874.3M1274.5 853.3V873.3M1275.5 851.9V881.8M1276.5 851.8V873.4M1277.5 854.9V872.9M1278.5 854.5V882.7M1279.5 855.8V872.3M1280.5 853.7V874.1M1281.5 856.4V878.3M1282.5 856.6V875.3M1283.5 852.9V875M1284.5 855.6V872.6M1285.5 855.6V874.7M1286.5 854.3V873.5M1287.5 856.3V871.8M1288.5 846.7V873.4M1289.5 855.9V873.5M1290.5 855.5V872.3M1291.5 852.2V884.7M1292.5 839.3V873.9M1293.5 849.8V874.4M1294.5 857.3V871.7M1295.5 848.3V875.4M1296.5 856.4V872.7M1297.5 844.1V878.2M1298.5 857.1V883.4M1299.5 847V874.2M1300.5 854.9V874M1301.5 851.2V873.1M1302.5 851.4V874.7M1303.5 854.7V873M1304.5 853.5V874.7M1305.5 844.7V872.2M1306.5 856.3V871.7M1307.5 848.7V875.2M1308.5 854.2V883.9M1309.5 856.5V876M1310.5 845.2V871.9M1311.5 852.3V876.5M1312.5 846.1V870.4M1313.5 849.4V871M1314.5 852.5V877.5M1315.5 851.8V887.3M1316.5 848.8V876.9M1317.5 851.1V871.7M1318.5 851.2V872.9M1319.5 850.9V869.4M1320.5 852.4V877.1M1321.5 854.1V868.7M1322.5 852.9V869.4M1323.5 852.9V876.4M1324.5 845.2V870.6M1325.5 851.1V868.8M1326.5 853.2V867.2M1327.5 848.8V874.4M1328.5 834.8V872.6M1329.5 848.4V875.4M1330.5 852.6V866.7M1331.5 849.3V870M1332.5 851.4V867.4M1333.5 852.2V875.6M1334.5 843.3V872.5M1335.5 849.1V868.9M1336.5 838.3V867.9M1337.5 851.4V866M1338.5 847.6V867.4M1339.5 847.8V870.4M1340.5 849.2V878M1341.5 840.1V865.6M1342.5 848.5V868.1M1343.5 842.2V871.1M1344.5 842.2V875M1345.5 848.1V869.6M1346.5 848.1V877.5M1347.5 847.1V873.5M1348.5 846.6V867.5M1349.5 849V867.2M1350.5 846.3V874.1M1351.5 846.6V870M1352.5 839.4V863.6M1353.5 847.9V865.4M1354.5 848.6V867.5M1355.5 839.6V869.5M1356.5 843.8V890.9M1357.5 852.8V883.4M1358.5 847V871M1359.5 850.3V873.2M1360.5 853.3V879.4M1361.5 855.4V879.4M1362.5 853.8V873.9M1363.5 853.5V875M1364.5 853.1V878.1M1365.5 850.1V886.1M1366.5 857V871.3M1367.5 854.1V874M1368.5 851.9V877.3M1369.5 854.2V874.5M1370.5 854.6V884.5M1371.5 846.1V873.4M1372.5 855.2V881.7M1373.5 848V873.9M1374.5 845.1V888.3M1375.5 858V872.4M1376.5 857.8V873M1377.5 850.1V877.9M1378.5 849.5V873.1M1379.5 856.3V881.9M1380.5 854.8V874.3M1381.5 853.4V872.8M1382.5 848V883.7M1383.5 852.9V873.8M1384.5 855.6V873.5M1385.5 853.6V875.4M1386.5 852.9V874.7M1387.5 853.9V876M1388.5 855.8V886.3M1389.5 850.8V874M1390.5 854.5V873.7M1391.5 856.8V871.2M1392.5 852.4V877.6M1393.5 855.1V877.8M1394.5 857.2V886.9M1395.5 854.4V879.9M1396.5 853.9V874.5M1397.5 850.6V883.3M1398.5 835.4V887M1399.5 852.2V883M1400.5 854.3V872.2M1401.5 855.5V885.7M1402.5 845V876.4M1403.5 853.7V875M1404.5 854.7V880.6M1405.5 856.1V871.5M1406.5 852.5V877.4M1407.5 844.9V885.8M1408.5 849.5V872.1M1409.5 851.6V878.2M1410.5 852.3V872.2M1411.5 848.3V880.9M1412.5 855.5V872.5M1413.5 855.9V871.5M1414.5 856.6V879.6M1415.5 851.7V871.8M1416.5 856V871.7M1417.5 855.4V872M1418.5 853.3V884.3M1419.5 854.7V874.1M1420.5 848.5V877.4M1421.5 855.8V880.9M1422.5 856.7V871.6M1423.5 857.3V874.2M1424.5 853.6V875.4M1425.5 851.9V874.8M1426.5 853.9V879.2M1427.5 855.4V873.9M1428.5 850.1V874.7M1429.5 854.3V873.5M1430.5 851.3V871.4M1431.5 854.6V873.2M1432.5 843.6V873.2M1433.5 855.8V872M1434.5 854.3V873.2M1435.5 854.4V878.2M1436.5 855.6V872.9M1437.5 856.4V877.1M1438.5 854.3V873.8M1439.5 853.5V873.6M1440.5 853.8V873.1M1441.5 854.1V872.7M1442.5 853.7V874M1443.5 848.6V875.3M1444.5 850.4V874.9M1445.5 856V872.3M1446.5 853.8V878M1447.5 845V874.6M1448.5 847.3V873M1449.5 855.4V872.6M1450.5 853.3V873.5M1451.5 855.1V870.6M1452.5 853V885.3M1453.5 851.6V873.3M1454.5 851.6V873.1M1455.5 843.3V882.5M1456.5 851.7V876.5M1457.5 851.1V874.9M1458.5 853.1V870.1M1459.5 851.3V870.3M1460.5 853.1V871.1M1461.5 850.8V880.8M1462.5 851.7V870.7M1463.5 840.1V872M1464.5 852.1V880.4M1465.5 852.9V871.7M1466.5 850.4V876.9M1467.5 850.5V870M1468.5 842.6V871.3M1469.5 853.1V868.4M1470.5 851.8V873.8M1471.5 842.7V876.8M1472.5 853.2V868M1473.5 846.1V875.5M1474.5 849.7V868.2M1475.5 846.6V880.6M1476.5 839.2V874.1M1477.5 850.6V878.9M1478.5 851.2V867.8M1479.5 848.6V870.4M1480.5 848.1V866.6M1481.5 851V867.5M1482.5 846.5V880.7M1483.5 847.8V867.4M1484.5 851.2V866.4M1485.5 847.5V875.2M1486.5 847.3V869.9M1487.5 848.6V872.2M1488.5 836.9V868.9M1489.5 848.8V866.3M1490.5 847.3V868.3M1491.5 847.7V869.1M1492.5 847.4V867.8M1493.5 847.8V874.7M1494.5 840.9V864.4M1495.5 846.9V878.6M1496.5 838.3V869.3M1497.5 837.8V871M1498.5 849.2V865.1M1499.5 847.8V872.2M1500.5 845.1V881.3M1501.5 850.5V870.4M1502.5 850.2V885.2M1503.5 852.5V882.7M1504.5 853.9V871.2M1505.5 852.7V879.3M1506.5 843.7V874.1M1507.5 856.4V871.9M1508.5 799.1V834.6M1509.5 801.4V830.1M1510.5 794.7V825.3M1511.5 801.2V839.2M1512.5 804.2V830.1M1513.5 807.4V835.5M1514.5 804.2V832.1M1515.5 801.1V834.5M1516.5 808.6V829.8M1517.5 806.8V831.8M1518.5 809.6V831.9M1519.5 809.5V846.9M1520.5 807.7V850.5M1521.5 807V839.8M1522.5 812.1V845.6M1523.5 810.7V833.3M1524.5 810.3V838.4M1525.5 800.7V833.2M1526.5 807.6V832.9M1527.5 809.6V837.9M1528.5 801.9V838.6M1529.5 798.6V833.6M1530.5 812.2V833.1M1531.5 806.8V832.3M1532.5 811.7V831.6M1533.5 809.9V840.4M1534.5 807.9V834.9M1535.5 809.3V836.2M1536.5 803.5V837.2M1537.5 810.1V831.6M1538.5 799.1V841.7M1539.5 809.1V843.7M1540.5 799.6V832.8M1541.5 803.7V844.1M1542.5 856.1V873.2M1543.5 853.3V874.9M1544.5 847.1V877.1M1545.5 854.6V873.8M1546.5 852.9V886.2M1547.5 852.1V879.8M1548.5 853.6V876.6M1549.5 846.6V879.9M1550.5 844.7V883.6M1551.5 855.8V873.1M1552.5 851.2V873.6M1553.5 850.7V872.1M1554.5 854.5V868.7M1555.5 853.9V867.9M1556.5 851V870.1M1557.5 852.1V867.6M1558.5 845.2V868.6M1559.5 844.2V865.8M1560.5 851.2V865.5M1561.5 842.1V872M1562.5 840.3V867.1M1563.5 848.1V870.3M1564.5 845V868.5M1565.5 847V868.2M1566.5 849.6V865.8M1567.5 849.1V865.4M1568.5 841.8V867.7M1569.5 848.2V870.7M1570.5 849.5V866.4M1571.5 849.7V867M1572.5 849.3V867.3M1573.5 846.5V878.2M1574.5 851.7V868.3M1575.5 847.9V870.1M1576.5 849.9V882.7M1577.5 851.5V874.4M1578.5 852.5V870.5M1579.5 854.6V873.6M1580.5 844.9V872.9M1581.5 844.4V870.9M1582.5 854.4V875M1583.5 852.3V872.6M1584.5 852.9V872.4M1585.5 852.3V880.1M1586.5 847V870.4M1587.5 851.1V878.5M1588.5 853.4V873.4M1589.5 855.3V879.6M1590.5 837.9V870.5M1591.5 854.1V876.7M1592.5 847V869.3M1593.5 852.3V880.7M1594.5 851.7V872M1595.5 854V869.3M1596.5 853.9V868.8M1597.5 851.6V875.1M1598.5 848.9V882.1M1599.5 843.7V874.3M1600.5 851.6V870.2M1601.5 851.3V869.9M1602.5 849.6V871.5M1603.5 853.2V874.2M1604.5 843.5V868.7M1605.5 850.5V875.2M1606.5 846.9V870.9M1607.5 843.1V869.6M1608.5 842.8V869.2M1609.5 850.8V882.5M1610.5 849.3V870.6M1611.5 849.8V869.7M1612.5 851.8V867.4M1613.5 848.9V870.8M1614.5 849.2V871.1M1615.5 849.4V869.4M1616.5 848.8V871.8M1617.5 840.4V872.3M1618.5 840.9V867M1619.5 842.3V869.2M1620.5 849.7V866.8M1621.5 850.9V870.2M1622.5 842.1V866.5M1623.5 842V868.2M1624.5 847.4V868.4M1625.5 846V867.1M1626.5 842.2V864.9M1627.5 843.8V876.8M1628.5 847.1V867.4M1629.5 840.7V865.5M1630.5 837.8V866.5M1631.5 848.4V878.9M1632.5 837.5V877.5M1633.5 845.9V870.5M1634.5 850.3V865.1M1635.5 834.9V868.9M1636.5 850.4V870M1637.5 845.7V868.2M1638.5 854.4V868.5M1639.5 850.6V870.2M1640.5 853.2V886.5M1641.5 853.4V879.9M1642.5 855.4V883.2M1643.5 850.6V880.8M1644.5 856.6V871.4M1645.5 854.2V878.1M1646.5 846.7V874.1M1647.5 855.9V872.6M1648.5 853.3V875.2M1649.5 856V874.4M1650.5 856.5V872.5M1651.5 846.8V885.1M1652.5 851.5V873.6M1653.5 856.7V874.9M1654.5 856V872.8M1655.5 848.1V881.3M1656.5 844.4V886.7M1657.5 854.3V875M1658.5 855.2V873.9M1659.5 852.6V885.6M1660.5 850.1V885M1661.5 851V875.2M1662.5 847.3V872.2M1663.5 854.8V887.1M1664.5 851V886.1M1665.5 856.9V874.1M1666.5 851V872M1667.5 853.6V874.1M1668.5 851V876M1669.5 853V876.2M1670.5 849.3V873.8M1671.5 855.9V872.6M1672.5 854.2V874.2M1673.5 855.3V873.4M1674.5 856.4V872.7M1675.5 846.9V875.6M1676.5 846.9V876.6M1677.5 848.8V874.7M1678.5 843.7V875.4M1679.5 852.9V884.3M1680.5 852.8V885.8M1681.5 854.4V874.5M1682.5 853.5V872.6M1683.5 854.7V874.2M1684.5 849.5V875M1685.5 853.6V881.7M1686.5 847.1V871.9M1687.5 849.6V881.7M1688.5 857.2V878.2M1689.5 842.4V873.3M1690.5 844.6V873.4M1691.5 848.4V880.1M1692.5 844.8V874.7M1693.5 854.1V881.9M1694.5 852.5V873.9M1695.5 854.4V875.5M1696.5 852.9V876.6M1697.5 854V874.2M1698.5 855V872.8M1699.5 856V878.1M1700.5 845.2V878.3M1701.5 854.9V882.1M1702.5 854.9V873.2M1703.5 853.3V875.1M1704.5 845V875.3M1705.5 855.1V873.3M1706.5 856.8V871.3M1707.5 856.4V877.5M1708.5 856.1V871.9M1709.5 856.3V875.4" stroke="#78b428" stroke-width="1" fill="none" shape-rendering="crispEdges"/>
<polygon points="13,860.1 14,859.8 15,858.9 16,860.2 17,861.1 18,860.5 19,859.5 20,860.3 21,860.2 22,861.3 23,860 24,860.5 25,859.4 26,860 27,859.5 28,861.1 29,859.4 30,861.2 31,861 32,860.5 33,861.2 34,861.1 35,859.6 36,861.1 37,860.5 38,859.7 39,859.8 40,860.8 41,858.5 42,860 43,858.5 44,859.9 45,858.3 46,859.5 47,858.1 48,857.6 49,858.9 50,857.7 51,857.9 52,856.9 53,856.5 54,855.9 55,856.5 56,857.4 57,856.4 58,857.4 59,856 60,855.5 61,856.4 62,855.6 63,856.5 64,856.2 65,855.2 66,855.9 67,855.1 68,855 69,854.7 70,855.2 71,854.2 72,854.5 73,854 74,854.7 75,854.3 76,853.3 77,853.2 78,853.6 79,852.6 80,853 81,853.4 82,852.3 83,854.6 84,855.1 85,855.7 86,857.3 87,856.9 88,858.1 89,857.1 90,857.6 91,858.3 92,858.3 93,858.9 94,859.4 95,859.8 96,857.5 97,858.4 98,859.4 99,857.9 100,859.2 101,857.9 102,859 103,859.3 104,859 105,858.9 106,857.7 107,859 108,857.9 109,858.7 110,859.7 111,858 112,858.9 113,859 114,859.7 115,858.2 116,859.4 117,860.4 118,858.6 119,860.2 120,858.5 121,859.5 122,859.8 123,859.5 124,858.6 125,858.3 126,858.9 127,860.5 128,859.5 129,860.4 130,860.5 131,860.8 132,860.5 133,860.6 134,860.2 135,859.3 136,860.7 137,861.1 138,859.7 139,860.9 140,859.4 141,860.1 142,859.7 143,860.6 144,859.2 145,860.6 146,860.3 147,860.6 148,859.7 149,859.3 150,859.8 151,810.1 152,810 153,811.7 154,812.3 155,812.9 156,813.3 157,814.9 158,814.7 159,816.5 160,815.6 161,817.2 162,817.5 163,817.4 164,817.9 165,818.8 166,819.1 167,818.2 168,820.6 169,820 170,819.6 171,820 172,819.4 173,819.7 174,817.8 175,819.1 176,819.4 177,818.6 178,819.1 179,817 180,818.3 181,818.5 182,817.8 183,817.8 184,818.2 185,861.4 186,860.2 187,861.3 188,861.9 189,859.7 190,859.7 191,857.1 192,855.2 193,854.5 194,854 195,853.3 196,853.4 197,851.8 198,852.4 199,850.2 200,850.6 201,850.2 202,849 203,849.5 204,848.9 205,848.8 206,846.8 207,846.3 208,847.4 209,847.7 210,846.8 211,847.5 212,847.4 213,848.7 214,847 215,848.1 216,849.9 217,849.2 218,850.3 219,851.6 220,853.8 221,854.4 222,856.9 223,856.4 224,857.4 225,859.9 226,859 227,860.8 228,859.8 229,860 230,861 231,861.6 232,860.2 233,861.6 234,861.9 235,860.8 236,861.3 237,860.7 238,860.1 239,860.8 240,861.1 241,860.4 242,859 243,860.2 244,861.2 245,859.3 246,860 247,859.5 248,860.5 249,860.4 250,859.6 251,861.4 252,860.2 253,859.7 254,858.9 255,860.1 256,859.7 257,859.4 258,859.8 259,858.9 260,859 261,858.3 262,859.5 263,859.2 264,859.5 265,860 266,858.6 267,860.4 268,859.5 269,860 270,859.8 271,859.8 272,859.1 273,859.2 274,859.5 275,858.7 276,859 277,859.6 278,858.6 279,858.8 280,859 281,858.9 282,859.9 283,860.1 284,861.1 285,860.9 286,860.5 287,859.5 288,859 289,859.5 290,859.6 291,860.7 292,858.6 293,859.1 294,860.1 295,859.8 296,859.5 297,859 298,858.4 299,858.4 300,859.2 301,859.2 302,859.6 303,860.3 304,860.3 305,860.2 306,859.6 307,860.3 308,858.6 309,860.1 310,859.6 311,858.9 312,858.3 313,858.4 314,858.9 315,859.5 316,859.7 317,860.4 318,859.1 319,859.6 320,858.8 321,858.9 322,858.5 323,859.5 324,859.4 325,859 326,858.6 327,859.4 328,858.6 329,859.2 330,857.7 331,857.4 332,856.7 333,856.4 334,858.3 335,858.1 336,857.8 337,857.8 338,855.9 339,857.7 340,856.3 341,856.1 342,856.3 343,856.2 344,855.1 345,857 346,855.7 347,855.9 348,856.5 349,854.5 350,854.9 351,854.6 352,854.4 353,853.8 354,854.6 355,854.2 356,854.5 357,854.8 358,854.4 359,854.9 360,854.3 361,853.3 362,854.9 363,854.5 364,854.5 365,856.4 366,857.6 367,858.6 368,859.3 369,859.3 370,859.8 371,859.5 372,858.9 373,859.3 374,859.1 375,859 376,859 377,859.7 378,860.3 379,859.7 380,858.3 381,858.5 382,860.1 383,858.5 384,859.5 385,860 386,860.7 387,860 388,859.6 389,860.2 390,859.9 391,858.7 392,858.6 393,858.6 394,858.3 395,858.5 396,860 397,859.7 398,858.8 399,859.8 400,859 401,858.5 402,860.2 403,858.9 404,859.3 405,858.9 406,860.1 407,860.3 408,859.7 409,858.5 410,858.6 411,859.9 412,859.5 413,858.8 414,859.1 415,860.8 416,860.1 417,860.7 418,860.2 419,858.9 420,858.7 421,859.3 422,860 423,860.8 424,859.9 425,859.4 426,860.7 427,860.3 428,860.4 429,860.2 430,859.2 431,860.7 432,860.2 433,860.2 434,860.3 435,860.6 436,860.8 437,860 438,859.7 439,859.8 440,859.2 441,860 442,860.8 443,859 444,858.6 445,860.2 446,858.6 447,859.7 448,858.9 449,860.8 450,859.3 451,859.7 452,858.9 453,860.5 454,859.4 455,859.8 456,860.7 457,860.2 458,859.7 459,860.6 460,860.3 461,860.7 462,859 463,858.4 464,858.5 465,859.5 466,859.4 467,859.9 468,859.9 469,860 470,858.3 471,858.6 472,857.9 473,857.5 474,858.7 475,858.3 476,858.7 477,856.6 478,857.6 479,858.2 480,857.3 481,857.6 482,856.7 483,857.1 484,857.7 485,856.9 486,857 487,856 488,856 489,856.4 490,811.3 491,812.3 492,812.2 493,813.7 494,814.1 495,814.2 496,814.8 497,816.2 498,817.2 499,815.9 500,816.2 501,817.1 502,817.8 503,817.6 504,819.2 505,819 506,820.4 507,820.4 508,819.5 509,819.5 510,819.3 511,818.1 512,819 513,818.9 514,818.3 515,818.1 516,817.9 517,817.6 518,816.6 519,817.1 520,818.5 521,817.7 522,818.3 523,817.4 524,860.6 525,862 526,860.2 527,860.4 528,861 529,861.3 530,860.8 531,859.6 532,858.7 533,860.1 534,858.4 535,857.9 536,858.7 537,856.6 538,856.2 539,856.9 540,856.1 541,855.1 542,853.7 543,853.2 544,853.6 545,853.3 546,853.4 547,853.3 548,854.5 549,852.9 550,854.2 551,854.1 552,855.3 553,855.1 554,854.2 555,855.3 556,856.4 557,855.4 558,856.1 559,856.7 560,858 561,857 562,857.8 563,858 564,858.8 565,859.8 566,859.3 567,860.3 568,860.3 569,860.8 570,860.4 571,860.4 572,861.6 573,860.7 574,860.4 575,859.2 576,860.7 577,861 578,859.9 579,859.7 580,858.9 581,858.5 582,860.1 583,859.9 584,859.5 585,858.6 586,858.7 587,860.3 588,860.1 589,858.8 590,860.1 591,858.9 592,859.1 593,860.1 594,860.6 595,860.4 596,860 597,858.6 598,859.4 599,859.1 600,859.8 601,859.1 602,859.5 603,859.2 604,859 605,858.8 606,859.4 607,858.2 608,858 609,858.4 610,859.6 611,857.6 612,858.4 613,859 614,858.6 615,857.6 616,857.2 617,857.2 618,857 619,856.5 620,858 621,857.8 622,856.4 623,858 624,857.4 625,856.4 626,855.8 627,855.9 628,855.8 629,855.7 630,855.7 631,856.2 632,856.6 633,856.1 634,856.1 635,856.2 636,854.4 637,855.4 638,853.7 639,853.5 640,853.8 641,853.3 642,854.9 643,853.5 644,852.8 645,854 646,851.7 647,854.8 648,855.1 649,856.7 650,856.3 651,858.4 652,858 653,857.8 654,857.9 655,859.7 656,860.2 657,859.1 658,858.4 659,858.5 660,859 661,858 662,858.1 663,858.9 664,858.4 665,859.5 666,858.8 667,859.9 668,859.7 669,859.8 670,859 671,859.8 672,859.2 673,859.9 674,859.6 675,858.6 676,859.1 677,858.8 678,858.1 679,858.2 680,860 681,858.9 682,860.4 683,859.3 684,859.7 685,858.8 686,859.3 687,859.9 688,859.1 689,858.7 690,858.8 691,859.9 692,859.7 693,860.3 694,860.5 695,860.9 696,860.5 697,859.3 698,860.9 699,860.7 700,859.4 701,860.2 702,859.9 703,859.9 704,859.4 705,860 706,860.4 707,859.1 708,860.7 709,860.6 710,861.1 711,859.6 712,860.1 713,859.7 714,859.8 715,861.2 716,860.1 717,859.9 718,859.7 719,859.9 720,860.8 721,859.3 722,859.6 723,859.8 724,861.2 725,860.1 726,859.9 727,859.6 728,858.9 729,859.3 730,858.9 731,859.6 732,858.6 733,858.5 734,859.4 735,860.2 736,858.7 737,860 738,860.4 739,858.8 740,858.7 741,860.9 742,859.8 743,860.4 744,860 745,860.3 746,859.2 747,858.3 748,858.8 749,859 750,859 751,858.8 752,857.1 753,856.9 754,857.9 755,856.3 756,856.9 757,857.3 758,855.9 759,856.4 760,857.2 761,856.8 762,857.3 763,856.2 764,856.4 765,855.4 766,857.1 767,857.1 768,855.4 769,856.6 770,856.6 771,856.9 772,855 773,856.5 774,855.9 775,856.2 776,855.9 777,855.3 778,855.8 779,856 780,854 781,854.3 782,855.1 783,853.9 784,853.9 785,854.2 786,854 787,854.5 788,853.2 789,853.6 790,853.9 791,853.5 792,853.8 793,854.5 794,857.3 795,858.7 796,858.5 797,857.9 798,859.1 799,858.7 800,859.4 801,859.8 802,860.8 803,859.7 804,860.5 805,859.9 806,859.3 807,860.5 808,860.8 809,859.6 810,859.5 811,860.5 812,859.2 813,859.3 814,859.8 815,860.8 816,860.9 817,861 818,860.4 819,861.2 820,861 821,861.3 822,861.1 823,859.9 824,859.9 825,860.5 826,859.7 827,860 828,859 829,860.7 830,809.7 831,811.4 832,812.5 833,812.5 834,813.2 835,814.4 836,814.4 837,814.1 838,816.3 839,815.8 840,817.1 841,817.1 842,817.2 843,818.4 844,819.2 845,817.6 846,819.1 847,818.2 848,819.8 849,820.6 850,819.8 851,818.7 852,819.5 853,818.8 854,819 855,818.8 856,818.2 857,818.9 858,817.4 859,817.1 860,818.5 861,818 862,817.5 863,818.8 864,861.8 865,861.6 866,861.7 867,860 868,860.6 869,861.8 870,860.1 871,859.7 872,859.1 873,860.4 874,859.3 875,859.4 876,858.5 877,857.8 878,856.8 879,857.1 880,854.3 881,855 882,852.7 883,853.5 884,851.6 885,852.6 886,851 887,852.2 888,850.8 889,850 890,850.3 891,851.8 892,851.8 893,851.8 894,851.6 895,852.6 896,852.5 897,853.1 898,852.9 899,852.8 900,852.9 901,854 902,853 903,852.9 904,853.7 905,855 906,854.7 907,855.1 908,854 909,854.7 910,854.1 911,854.9 912,854.5 913,853.6 914,853.7 915,854.4 916,853 917,853.2 918,853.1 919,854.5 920,853.6 921,853.1 922,853.2 923,852.6 924,854.5 925,854.7 926,856.3 927,856.2 928,857.9 929,857.2 930,859.2 931,857.7 932,857.9 933,858.7 934,859.2 935,859.9 936,860.3 937,859.9 938,859.4 939,860.3 940,858.8 941,859.5 942,859.6 943,858.9 944,859.4 945,859.5 946,859.4 947,858.8 948,858.4 949,860 950,860 951,859.5 952,859.6 953,860.5 954,860 955,859 956,859.2 957,858.9 958,860.2 959,860.6 960,859.4 961,859.4 962,861.1 963,861 964,860.5 965,860.4 966,859.1 967,859.9 968,860.2 969,859 970,860.7 971,859.4 972,860.4 973,861 974,859 975,859.4 976,859.7 977,860.8 978,860 979,859.7 980,860.5 981,860.6 982,860 983,859.9 984,859.3 985,859.8 986,860.1 987,859.5 988,860 989,859.5 990,858.7 991,858.8 992,858.8 993,860.6 994,859.3 995,860.7 996,861 997,860.8 998,860.1 999,860 1000,860.1 1001,859.8 1002,860.8 1003,860.6 1004,860.5 1005,860.3 1006,859.6 1007,859 1008,860.2 1009,859.6 1010,859.2 1011,860.7 1012,860.2 1013,860.8 1014,861.2 1015,859.8 1016,860.9 1017,861.3 1018,861.1 1019,860.9 1020,860 1021,861.4 1022,861.4 1023,860.7 1024,859.4 1025,860.8 1026,859.3 1027,860.4 1028,858.7 1029,860.4 1030,859 1031,858 1032,858.3 1033,858.3 1034,857.5 1035,857.4 1036,858 1037,857.6 1038,858.2 1039,857.1 1040,857.5 1041,857.6 1042,857.2 1043,856.8 1044,855.6 1045,855.7 1046,856.3 1047,854.4 1048,854 1049,855 1050,855 1051,854.1 1052,853.9 1053,855 1054,855.4 1055,853.7 1056,854.1 1057,854.3 1058,853 1059,853.5 1060,852.6 1061,853.4 1062,853.9 1063,853.4 1064,853.8 1065,853.5 1066,852.1 1067,851.9 1068,853 1069,851.9 1070,853.3 1071,853.7 1072,853.8 1073,855.5 1074,856.1 1075,857.2 1076,858.9 1077,858.3 1078,858.5 1079,858.8 1080,860.3 1081,860.3 1082,860.1 1083,859.8 1084,858.7 1085,860 1086,859.1 1087,859.5 1088,860.7 1089,860.7 1090,859.2 1091,859.1 1092,860.4 1093,859.6 1094,859.1 1095,858.9 1096,859.7 1097,859 1098,858.4 1099,859.2 1100,859.8 1101,858.8 1102,859.9 1103,859.7 1104,859.9 1105,859.8 1106,860.2 1107,860 1108,859.7 1109,859.6 1110,860.8 1111,859.3 1112,858.8 1113,860.1 1114,859.3 1115,860.3 1116,859.7 1117,859.4 1118,860.9 1119,859.5 1120,860.9 1121,860.7 1122,859.4 1123,859.8 1124,861.1 1125,859.3 1126,861.1 1127,861.5 1128,860.2 1129,861.5 1130,860 1131,860 1132,861.7 1133,860.2 1134,860.2 1135,860.4 1136,861.5 1137,860.5 1138,860.4 1139,860.5 1140,860.5 1141,860.4 1142,860 1143,860.5 1144,861 1145,859.7 1146,859.6 1147,860.6 1148,860.4 1149,861.2 1150,861.4 1151,861.5 1152,859.8 1153,859.4 1154,859.5 1155,860.9 1156,860.1 1157,858.6 1158,860.6 1159,860.5 1160,858.8 1161,859.4 1162,859.5 1163,859.8 1164,859.3 1165,860.7 1166,860.3 1167,859.7 1168,858.6 1169,810.6 1170,810.4 1171,810.7 1172,811.9 1173,812.5 1174,813.9 1175,813.8 1176,815.1 1177,816.1 1178,814.8 1179,815.2 1180,817.2 1181,817.5 1182,816.2 1183,817.5 1184,817.4 1185,818.5 1186,819.7 1187,819.7 1188,818.1 1189,819.2 1190,819.4 1191,819.1 1192,817.3 1193,817.1 1194,818 1195,817.2 1196,816.3 1197,818 1198,817.5 1199,817.2 1200,816.9 1201,816.8 1202,817.6 1203,860.1 1204,860.6 1205,859.5 1206,860.2 1207,859.5 1208,860.3 1209,851.8 1210,853.1 1211,852.4 1212,853.4 1213,852.7 1214,854.3 1215,854.4 1216,854 1217,854.4 1218,855.1 1219,854.9 1220,854.6 1221,854.7 1222,853.7 1223,853.4 1224,853 1225,852.2 1226,853.8 1227,852.9 1228,852.1 1229,853.7 1230,854.9 1231,854.4 1232,854.5 1233,855.7 1234,855.9 1235,856.7 1236,856.8 1237,857.1 1238,858.3 1239,858.5 1240,859.1 1241,860.3 1242,859.9 1243,859.3 1244,860.6 1245,860.3 1246,860.1 1247,860.2 1248,860.1 1249,860.9 1250,860.7 1251,860.1 1252,860.8 1253,859.8 1254,861.2 1255,860.3 1256,860.1 1257,859.9 1258,859.6 1259,860.5 1260,859.6 1261,860.3 1262,860 1263,859.1 1264,859.1 1265,858.2 1266,859.4 1267,858.2 1268,860.1 1269,858.6 1270,858 1271,860.2 1272,859.4 1273,858.9 1274,860.5 1275,859.6 1276,859.1 1277,859.5 1278,860.6 1279,859.2 1280,861 1281,859.5 1282,859.9 1283,859.4 1284,858.9 1285,859.9 1286,860.2 1287,859.5 1288,859.9 1289,861.1 1290,859.5 1291,859.7 1292,861.3 1293,860.1 1294,861.3 1295,860.5 1296,859.4 1297,859.6 1298,859.4 1299,859.8 1300,861.4 1301,859.3 1302,860.5 1303,860.7 1304,860.1 1305,859.1 1306,859.2 1307,859.6 1308,860.9 1309,859.5 1310,859.4 1311,858.3 1312,859.7 1313,859.3 1314,858.3 1315,858 1316,857.8 1317,857.5 1318,858.7 1319,856.7 1320,856.5 1321,857.7 1322,856.5 1323,857.5 1324,855.4 1325,856.4 1326,855.9 1327,856.4 1328,855.5 1329,855.2 1330,855.7 1331,855.4 1332,855 1333,855.9 1334,856 1335,854.5 1336,853.9 1337,854.5 1338,854.3 1339,854.8 1340,855.1 1341,854.5 1342,852.8 1343,853.9 1344,854.9 1345,853.5 1346,854 1347,853.2 1348,853.7 1349,853.2 1350,853.7 1351,853.6 1352,851.8 1353,853.5 1354,854 1355,856.3 1356,855.4 1357,857.3 1358,858 1359,858.7 1360,860.1 1361,860.5 1362,859.3 1363,859.1 1364,860.9 1365,859.7 1366,859.1 1367,858.8 1368,861.2 1369,861 1370,860.9 1371,860 1372,861.5 1373,860.7 1374,860.3 1375,860.8 1376,860.5 1377,861.5 1378,860.3 1379,859.9 1380,861.2 1381,859.9 1382,860.6 1383,860.1 1384,859.4 1385,861 1386,860.6 1387,859.3 1388,859 1389,860.1 1390,860 1391,860.7 1392,859.3 1393,859.7 1394,859.1 1395,859.9 1396,859.4 1397,859.8 1398,859.3 1399,860 1400,860.6 1401,859.2 1402,860.2 1403,860.3 1404,860 1405,860.1 1406,859.4 1407,858.9 1408,859.8 1409,859.3 1410,859.3 1411,860.6 1412,859.7 1413,860 1414,860.1 1415,860.1 1416,859.7 1417,861 1418,860.2 1419,861.2 1420,860.7 1421,860.2 1422,860.4 1423,860.6 1424,860.1 1425,860 1426,859.5 1427,859.4 1428,860.2 1429,860.4 1430,859.7 1431,858.8 1432,860.3 1433,860.5 1434,860.8 1435,860.6 1436,860.6 1437,858.8 1438,860.8 1439,860.6 1440,859.4 1441,859.2 1442,859 1443,859.6 1444,858.8 1445,858.9 1446,859.9 1447,859.8 1448,859.6 1449,858.6 1450,858.4 1451,857.8 1452,859.4 1453,857.7 1454,857.7 1455,859.2 1456,859 1457,858 1458,857.8 1459,858 1460,857.3 1461,857.5 1462,856.6 1463,857.4 1464,857.3 1465,857.2 1466,857.7 1467,857.4 1468,856.2 1469,856.5 1470,856.2 1471,855.9 1472,855.4 1473,855.6 1474,856.4 1475,856.8 1476,856.9 1477,855.7 1478,855.3 1479,854.4 1480,854.1 1481,856.2 1482,854.6 1483,854.3 1484,854.1 1485,855.3 1486,853.8 1487,853.5 1488,854.7 1489,853.5 1490,852.6 1491,854.1 1492,853.5 1493,853.4 1494,852.4 1495,853.6 1496,853.1 1497,852.3 1498,852.5 1499,854.7 1500,854.5 1501,855.4 1502,856.7 1503,856.9 1504,857.6 1505,858.9 1506,858.7 1507,860.4 1508,809.6 1509,811.6 1510,811.4 1511,812.1 1512,813.7 1513,813.5 1514,815.5 1515,815.7 1516,816.3 1517,816.3 1518,816.2 1519,817.8 1520,818.3 1521,817.6 1522,818.6 1523,818.4 1524,818.4 1525,818.7 1526,819.4 1527,818.7 1528,818.1 1529,817.9 1530,817.5 1531,818.7 1532,818.2 1533,817.1 1534,817.8 1535,817.7 1536,817.3 1537,817.7 1538,817 1539,817.8 1540,817.5 1541,817.6 1542,860.3 1543,859.7 1544,860.8 1545,860.5 1546,860.7 1547,859.9 1548,859.2 1549,859.6 1550,860.3 1551,859.7 1552,858.5 1553,859.1 1554,858.3 1555,855.9 1556,857.2 1557,854.8 1558,856.4 1559,855 1560,855.1 1561,853.8 1562,853.4 1563,853.8 1564,854 1565,852.9 1566,853 1567,853.9 1568,852.4 1569,853.4 1570,854.3 1571,853.9 1572,855.6 1573,856.1 1574,855.3 1575,857.2 1576,856.2 1577,857.7 1578,856.7 1579,856.8 1580,857.7 1581,857.3 1582,858.9 1583,857.6 1584,857.5 1585,858.1 1586,858.4 1587,860.2 1588,860.3 1589,858.6 1590,858.2 1591,858.5 1592,857.4 1593,858.8 1594,857.4 1595,858.2 1596,857.1 1597,857.3 1598,857.3 1599,858 1600,856 1601,856.4 1602,855.4 1603,856 1604,855.1 1605,856.5 1606,855.2 1607,856.4 1608,856.2 1609,855.4 1610,856.6 1611,855 1612,854.9 1613,855.7 1614,856.2 1615,854.5 1616,855.1 1617,855.5 1618,853.5 1619,854.8 1620,853.3 1621,854.1 1622,854.8 1623,854.7 1624,853.9 1625,852.2 1626,852.6 1627,852.7 1628,853.8 1629,853.3 1630,852.8 1631,853.1 1632,852 1633,852.1 1634,854.7 1635,855.3 1636,856.7 1637,857.2 1638,858.4 1639,858 1640,857.8 1641,860.5 1642,858.7 1643,859.6 1644,860.4 1645,859.6 1646,860.1 1647,861 1648,860.4 1649,860.9 1650,861.5 1651,860.1 1652,859.8 1653,859.8 1654,859.9 1655,861.5 1656,861.3 1657,859.4 1658,859.7 1659,860.7 1660,860.9 1661,860.6 1662,860.3 1663,860.5 1664,859.5 1665,859.9 1666,861.4 1667,860.5 1668,861.2 1669,861 1670,860.4 1671,859.7 1672,860.6 1673,859.2 1674,860 1675,860.5 1676,861 1677,859.1 1678,860 1679,859.6 1680,860.9 1681,859.5 1682,861.1 1683,861.1 1684,861.2 1685,861 1686,859.9 1687,859.4 1688,861.1 1689,860.8 1690,859.4 1691,860.7 1692,861.1 1693,860.4 1694,859.4 1695,859.8 1696,859.6 1697,860.4 1698,860.5 1699,860.1 1700,859.3 1701,859.8 1702,860.7 1703,859.9 1704,860.1 1705,860.7 1706,859 1707,860.6 1708,859.7 1709,858.7 1710,858.7 1710,868.6 1709,868.6 1708,868.6 1707,867.5 1706,868.4 1705,868.6 1704,869 1703,869.3 1702,868.4 1701,868.6 1700,868.2 1699,868.1 1698,867 1697,868.8 1696,867.2 1695,868 1694,867.8 1693,867.5 1692,869.6 1691,867.8 1690,869.2 1689,868.6 1688,868.5 1687,869.6 1686,867.4 1685,867.7 1684,868.5 1683,868 1682,867.9 1681,868.5 1680,868.3 1679,868.7 1678,868.7 1677,868.4 1676,868.5 1675,868.7 1674,868.2 1673,868.3 1672,867.6 1671,868 1670,869.5 1669,869.1 1668,869.3 1667,869.6 1666,869.4 1665,868.3 1664,867.6 1663,867.4 1662,867.7 1661,869.2 1660,868.7 1659,869.1 1658,867.8 1657,869.5 1656,868.5 1655,868 1654,868.8 1653,869 1652,869.1 1651,868.6 1650,867.6 1649,869.1 1648,867.3 1647,868.9 1646,868.1 1645,867.8 1644,867.7 1643,869.2 1642,867.8 1641,866.8 1640,866.8 1639,867.3 1638,864.8 1637,864.7 1636,865.1 1635,862.9 1634,862.5 1633,861.4 1632,860.7 1631,860.2 1630,861.3 1629,861.5 1628,861.9 1627,860.8 1626,861.3 1625,862.5 1624,862.5 1623,861.1 1622,862.5 1621,862.5 1620,861.5 1619,862 1618,863.5 1617,863.3 1616,863.6 1615,864.2 1614,864.1 1613,864.7 1612,864.7 1611,863.1 1610,864.9 1609,863.5 1608,864.8 1607,863.2 1606,863.7 1605,863.4 1604,863.8 1603,865.3 1602,865.4 1601,865.3 1600,865.5 1599,866 1598,866 1597,865.5 1596,865.4 1595,866.2 1594,867 1593,867 1592,866.7 1591,865.6 1590,867.3 1589,868 1588,867.1 1587,868.1 1586,867.4 1585,867.5 1584,866.6 1583,866.3 1582,866.3 1581,867.5 1580,866.2 1579,864.8 1578,864.5 1577,865.8 1576,865.7 1575,864.1 1574,863.5 1573,862.5 1572,862.8 1571,862.1 1570,862.5 1569,862 1568,861.7 1567,860.5 1566,861.8 1565,861.2 1564,861.7 1563,862.4 1562,861.9 1561,862.3 1560,863 1559,862.8 1558,863.6 1557,864.1 1556,863.6 1555,864.9 1554,865.1 1553,866.3 1552,866.6 1551,866.6 1550,868.6 1549,866.6 1548,866.8 1547,868.4 1546,868.6 1545,868 1544,869.9 1543,869.1 1542,867.9 1541,826.4 1540,825.6 1539,825.3 1538,826.2 1537,826.3 1536,825.9 1535,826.3 1534,826.6 1533,825.2 1532,826.5 1531,827.1 1530,826.1 1529,826.8 1528,827.8 1527,828.3 1526,828.6 1525,828.2 1524,827.7 1523,827.9 1522,827.4 1521,825.5 1520,825.3 1519,826.8 1518,825 1517,825.4 1516,824.6 1515,823.6 1514,823.3 1513,821.4 1512,822.8 1511,821.5 1510,819.6 1509,819.7 1508,819.5 1507,868.5 1506,867.2 1505,866.6 1504,866 1503,867.1 1502,866.5 1501,865 1500,863.9 1499,863.6 1498,860.2 1497,861.8 1496,860.2 1495,862.5 1494,860.4 1493,861.8 1492,861.4 1491,862.1 1490,861.3 1489,861.5 1488,861.2 1487,862 1486,861.5 1485,862.9 1484,863.4 1483,862.5 1482,862.5 1481,863.9 1480,862.6 1479,862.9 1478,863.8 1477,863 1476,864.4 1475,863.1 1474,863.8 1473,864.6 1472,865.6 1471,863.6 1470,864.4 1469,864.8 1468,863.9 1467,864.1 1466,865 1465,866.2 1464,865 1463,864.9 1462,865.9 1461,866.4 1460,864.7 1459,866.6 1458,866.3 1457,866.7 1456,865.6 1455,866.5 1454,866.8 1453,865.7 1452,865.6 1451,866.3 1450,866.8 1449,866.6 1448,866.4 1447,868.2 1446,867.6 1445,868.2 1444,867.6 1443,866.5 1442,867.5 1441,867 1440,866.9 1439,867.7 1438,868.7 1437,868.1 1436,867.8 1435,868.6 1434,868.6 1433,868.1 1432,867.5 1431,868.4 1430,868.2 1429,868 1428,868.1 1427,869.4 1426,868.3 1425,868.6 1424,868.2 1423,867.8 1422,869.2 1421,868.8 1420,868.3 1419,867.9 1418,869.2 1417,868.7 1416,867.1 1415,868.1 1414,868.4 1413,867.5 1412,867.8 1411,867.6 1410,868.9 1409,868.5 1408,867 1407,867.4 1406,867.9 1405,868.3 1404,868.1 1403,867 1402,869.1 1401,867.8 1400,868.2 1399,869 1398,867.6 1397,867.8 1396,867.9 1395,867.6 1394,869.3 1393,868.1 1392,867.4 1391,867.2 1390,868 1389,868.8 1388,869.4 1387,869.4 1386,867.9 1385,868 1384,868.1 1383,869.2 1382,868 1381,869.7 1380,868.3 1379,869.8 1378,869.8 1377,870 1376,869 1375,869.4 1374,868.9 1373,868.3 1372,868.5 1371,868.9 1370,867.5 1369,869.2 1368,867.8 1367,868.3 1366,869.2 1365,867.3 1364,868.2 1363,867.2 1362,868.7 1361,867.8 1360,866.8 1359,866.6 1358,865.2 1357,864.7 1356,864.7 1355,862.9 1354,861.5 1353,860.6 1352,860.4 1351,861.5 1350,862 1349,861.4 1348,860.4 1347,862 1346,861.6 1345,861.4 1344,861.2 1343,862.2 1342,862.7 1341,862.4 1340,861.5 1339,861.7 1338,861.9 1337,862.8 1336,862.9 1335,864.1 1334,864 1333,863.1 1332,864.1 1331,863.8 1330,863.6 1329,864.9 1328,863.2 1327,864.6 1326,865 1325,864.4 1324,863.5 1323,864 1322,865.9 1321,864.8 1320,865 1319,865.5 1318,865.8 1317,866.3 1316,865.2 1315,866.9 1314,866.9 1313,866.9 1312,866.1 1311,868.4 1310,867.1 1309,868.3 1308,868.2 1307,869 1306,868.8 1305,867.3 1304,867.8 1303,867.4 1302,867.8 1301,868.2 1300,868.3 1299,869.5 1298,869.4 1297,868 1296,869.3 1295,868.6 1294,868.3 1293,868.3 1292,869 1291,867.5 1290,868.7 1289,867.5 1288,867.5 1287,868.7 1286,869.1 1285,868.5 1284,867.7 1283,868.7 1282,869.1 1281,868.7 1280,869.2 1279,867.4 1278,869.1 1277,867.4 1276,868.2 1275,867.8 1274,868.6 1273,867.4 1272,867.3 1271,867.9 1270,867.7 1269,866.9 1268,866.7 1267,868 1266,867.9 1265,867.6 1264,867.5 1263,867.4 1262,866.9 1261,867.7 1260,867.7 1259,866.8 1258,868.4 1257,868.5 1256,869.5 1255,869.6 1254,868.1 1253,868.8 1252,869.8 1251,869.1 1250,868.1 1249,869 1248,869.5 1247,869.7 1246,869.7 1245,867.8 1244,867.6 1243,867.8 1242,868.9 1241,868.3 1240,867.7 1239,866.2 1238,867.1 1237,864.7 1236,866.2 1235,864.9 1234,864.1 1233,863.2 1232,862.9 1231,862.5 1230,862.4 1229,863 1228,862 1227,861.6 1226,860.2 1225,860.9 1224,861.6 1223,860.9 1222,861.4 1221,862.5 1220,863.2 1219,862.6 1218,862.1 1217,863.8 1216,862.9 1215,862 1214,861.7 1213,862.3 1212,861.5 1211,859.8 1210,860.7 1209,860.3 1208,868.7 1207,869.5 1206,867.8 1205,867.8 1204,868.2 1203,867.9 1202,824.4 1201,825.4 1200,825.9 1199,824.3 1198,824.9 1197,826.2 1196,824.9 1195,826.1 1194,825.6 1193,826.4 1192,825.3 1191,827.4 1190,826.4 1189,828.1 1188,827.5 1187,827.4 1186,827.1 1185,826.1 1184,825.9 1183,826.2 1182,825.8 1181,824.5 1180,824.6 1179,824.5 1178,824 1177,824.1 1176,822.5 1175,822.5 1174,822.6 1173,820.1 1172,819.6 1171,820.2 1170,819.3 1169,818.8 1168,867.1 1167,868.5 1166,869.1 1165,868.1 1164,868.1 1163,868.8 1162,867.9 1161,867.2 1160,868.3 1159,868 1158,867.9 1157,867.4 1156,868.6 1155,868.7 1154,868.2 1153,869 1152,867.8 1151,869.2 1150,869.2 1149,868.2 1148,868 1147,870 1146,869.4 1145,868.3 1144,868.3 1143,869.4 1142,869.7 1141,869 1140,868.8 1139,868.8 1138,868.7 1137,868.2 1136,869.8 1135,868.7 1134,869.8 1133,869.9 1132,868.3 1131,867.8 1130,869.2 1129,869 1128,868.5 1127,869 1126,869.1 1125,869.6 1124,869.3 1123,868 1122,868.9 1121,869.1 1120,867.3 1119,868.1 1118,868.2 1117,867.1 1116,869 1115,867.9 1114,867.6 1113,867.4 1112,868 1111,867.5 1110,869 1109,868.6 1108,867.7 1107,868.7 1106,866.6 1105,866.2 1104,867.5 1103,868 1102,866.5 1101,867.5 1100,866.9 1099,866.6 1098,867.2 1097,868 1096,867.1 1095,868.4 1094,868.6 1093,868.2 1092,869.1 1091,869 1090,867.2 1089,867.2 1088,867.9 1087,869 1086,868.9 1085,868.5 1084,868.9 1083,867.6 1082,867 1081,868.4 1080,868.1 1079,866.9 1078,867.5 1077,866.3 1076,865.5 1075,864.7 1074,865.7 1073,862.7 1072,861.8 1071,861 1070,860.4 1069,860.7 1068,861.9 1067,860.6 1066,860.5 1065,861.4 1064,862 1063,861.7 1062,860.6 1061,862.2 1060,861.9 1059,862.5 1058,861.1 1057,863.1 1056,862.4 1055,863.4 1054,861.8 1053,861.6 1052,864 1051,862.6 1050,863 1049,862.7 1048,862.8 1047,864.1 1046,862.8 1045,864.8 1044,863.3 1043,865.3 1042,864.6 1041,864.4 1040,864.6 1039,864.6 1038,865.6 1037,865.9 1036,865.6 1035,866.8 1034,866.5 1033,867.7 1032,868.1 1031,868.2 1030,866.9 1029,867.6 1028,866.6 1027,868.2 1026,867.2 1025,867.8 1024,868 1023,868.7 1022,868.6 1021,869.9 1020,869.5 1019,869.1 1018,869.3 1017,869.7 1016,869.4 1015,869.9 1014,867.9 1013,869.4 1012,869.4 1011,869.4 1010,868.9 1009,869.2 1008,868.2 1007,868.8 1006,867.4 1005,868.9 1004,868.5 1003,868.2 1002,867.7 1001,868.5 1000,868.9 999,868.2 998,869.3 997,868.8 996,867.8 995,869 994,867.2 993,867.4 992,867.9 991,868.4 990,867.4 989,868.9 988,868.2 987,868.5 986,867.9 985,867.3 984,867.8 983,866.9 982,867.5 981,867.9 980,867.6 979,869.2 978,867.8 977,869.1 976,868.6 975,868.7 974,869.2 973,867.2 972,867.8 971,867.9 970,868.4 969,867.6 968,868.9 967,868.5 966,867.4 965,869.6 964,869.3 963,869 962,868.5 961,867.6 960,867.8 959,868.2 958,867.7 957,867.7 956,868.5 955,867.9 954,867 953,867.2 952,868.4 951,867 950,867 949,867.8 948,868.3 947,867.2 946,868.3 945,868.6 944,868.5 943,868 942,867.7 941,866.8 940,868.1 939,867.6 938,867.8 937,867.1 936,867.2 935,866.9 934,867.2 933,867.2 932,867.7 931,866.6 930,866.9 929,865.2 928,866.2 927,864.6 926,863.9 925,863.7 924,861.5 923,860.6 922,860 921,861.7 920,861.2 919,862.2 918,861.9 917,861.6 916,861.4 915,861.6 914,862.4 913,861.4 912,861.7 911,862.8 910,861.4 909,861.9 908,863.1 907,862.4 906,861.7 905,862.9 904,863.3 903,861 902,863.3 901,862.8 900,860.6 899,861.2 898,861.8 897,861.3 896,861.5 895,860.1 894,860.7 893,859.3 892,858.1 891,858.3 890,858.7 889,859.4 888,858.2 887,859.7 886,860.2 885,859.6 884,861.3 883,860.2 882,861.7 881,862.8 880,862.5 879,863.1 878,864.4 877,865.7 876,867 875,867.1 874,867.8 873,868.4 872,867 871,868.4 870,868.9 869,870.4 868,870.1 867,868.7 866,868.6 865,868.5 864,869.9 863,826.7 862,825.5 861,826.2 860,827 859,826.5 858,826.1 857,825.2 856,825.4 855,826.2 854,826.6 853,826.2 852,827.9 851,826.3 850,828.7 849,828.6 848,827.4 847,827.5 846,826.3 845,827.5 844,825.2 843,824.7 842,825.4 841,826.3 840,825 839,824.3 838,823.9 837,823.4 836,823.1 835,822.9 834,820.4 833,819.8 832,820.6 831,818 830,817.3 829,868.9 828,867.3 827,868.7 826,867.3 825,868.9 824,869.2 823,869.1 822,867.6 821,869.2 820,868.9 819,869.2 818,867.3 817,867.2 816,867.4 815,867.7 814,868.2 813,868.1 812,869 811,868.6 810,867.4 809,868.7 808,868.1 807,868.5 806,868.1 805,868.7 804,868.3 803,867.6 802,868.4 801,868.5 800,869 799,867.6 798,866.6 797,867.3 796,866.8 795,865.5 794,863.8 793,862.8 792,862.6 791,860.7 790,862.6 789,861.1 788,863.4 787,861.5 786,861.6 785,862.2 784,862 783,862.2 782,863.6 781,864 780,863.6 779,863.1 778,862.8 777,863.9 776,862.9 775,865 774,864.8 773,862.8 772,864.1 771,864.2 770,863.8 769,864.8 768,865.1 767,865.4 766,863.5 765,864.8 764,865.7 763,865.4 762,863.9 761,864.1 760,865.8 759,864.8 758,864.4 757,866 756,864.1 755,864.6 754,866 753,866.3 752,866.1 751,866 750,866.5 749,865.8 748,867.6 747,866.8 746,866.9 745,868.1 744,867 743,867 742,868.2 741,869 740,868.1 739,868.5 738,867.2 737,867.1 736,866.5 735,867.9 734,867.3 733,868.4 732,868 731,867.3 730,867.8 729,868.4 728,867.6 727,867.2 726,867.5 725,868.6 724,869.1 723,869.5 722,869 721,869.2 720,869.4 719,869 718,869.5 717,868 716,869.8 715,869.1 714,867.5 713,869.2 712,867.8 711,869.2 710,868.2 709,868.8 708,867.8 707,868.2 706,868.2 705,868.1 704,868.6 703,868.1 702,868.9 701,869 700,867.7 699,867.7 698,868.2 697,868.3 696,867.3 695,868.3 694,867.1 693,867.4 692,867.1 691,868.6 690,867.6 689,866.7 688,868.1 687,867.2 686,867.2 685,866.5 684,867.8 683,867.8 682,868.6 681,867.9 680,867.4 679,866.9 678,867.2 677,867.6 676,866.8 675,868.3 674,868.1 673,867.9 672,866.8 671,867.4 670,866.3 669,866.3 668,866.9 667,866.9 666,867.3 665,867.1 664,866.5 663,867.4 662,867.3 661,866.3 660,866.6 659,867.3 658,868.4 657,868.5 656,867.1 655,867 654,866 653,866.4 652,866.1 651,865.7 650,865.4 649,863.3 648,862.5 647,861.1 646,860.6 645,861.2 644,862.7 643,862.7 642,862.3 641,861.9 640,861.4 639,862.5 638,861.7 637,862.7 636,863.5 635,862.4 634,864.7 633,863.3 632,863.5 631,863.7 630,863.7 629,863.7 628,864.2 627,864.7 626,865.1 625,865.2 624,865.1 623,865.3 622,865.5 621,866.8 620,866.8 619,864.7 618,866.7 617,866.9 616,866.9 615,867.2 614,866.8 613,867.6 612,867.5 611,865.8 610,867.5 609,868 608,867 607,866.9 606,868.3 605,866.5 604,868.2 603,868 602,868.1 601,868.3 600,868.4 599,868.9 598,867.1 597,867.3 596,868.8 595,867.1 594,867.7 593,867.9 592,867.9 591,868.4 590,868.8 589,867.8 588,868 587,868.5 586,867.1 585,867.3 584,868.6 583,867.6 582,867 581,868.3 580,867.8 579,866.9 578,869 577,868.3 576,869.4 575,869 574,868.5 573,867.5 572,869.2 571,868.3 570,868.7 569,867.9 568,867.4 567,868.5 566,867.2 565,867.5 564,867.4 563,866.6 562,867.5 561,866.9 560,865.5 559,865.7 558,864.4 557,864 556,864.3 555,863.4 554,862 553,863.8 552,863.6 551,861.9 550,861.3 549,862.2 548,861.4 547,860.6 546,861.3 545,862.3 544,862.4 543,861.1 542,862 541,862.6 540,864.2 539,863.8 538,865.7 537,866.3 536,866.6 535,867.5 534,867.9 533,867 532,867.2 531,868.8 530,869 529,869.4 528,870.1 527,868.4 526,870.5 525,869.8 524,869.8 523,826 522,826.9 521,825.2 520,826 519,825.1 518,825 517,825.4 516,827.1 515,827 514,825.7 513,826.6 512,826.1 511,827.3 510,826.9 509,827.6 508,828.8 507,828.2 506,827.1 505,826.5 504,825.9 503,826.7 502,826.1 501,826.8 500,825.3 499,823.5 498,825 497,822.7 496,823.8 495,821.7 494,821.6 493,820.6 492,820.4 491,819.3 490,819.1 489,865.5 488,864.4 487,864.2 486,864 485,865.2 484,865.1 483,864.4 482,866.3 481,864.7 480,864.7 479,866.7 478,866.9 477,865.1 476,865.2 475,866 474,865.5 473,866.8 472,866.9 471,867.5 470,867.8 469,867.5 468,867.6 467,867.3 466,867.7 465,866.3 464,866.1 463,866.7 462,867.5 461,867.3 460,867.8 459,867.3 458,868.5 457,867.2 456,868.3 455,868.3 454,867 453,867.5 452,868.1 451,867 450,868.7 449,868.2 448,869.2 447,868.3 446,868.9 445,867.1 444,868.8 443,868.2 442,868.3 441,868.3 440,868.9 439,868.5 438,867.3 437,868 436,869.1 435,867.8 434,868.7 433,868.9 432,867.4 431,867.1 430,868.1 429,868.1 428,867.3 427,868.4 426,867.5 425,868.9 424,867.2 423,868.7 422,868.1 421,868.7 420,867 419,868.5 418,867 417,868.4 416,867.5 415,867.6 414,868.6 413,867.3 412,868.1 411,867.3 410,868.6 409,867.3 408,867.1 407,867.7 406,867.6 405,868.5 404,867.6 403,867.8 402,868.5 401,867.3 400,867.1 399,865.9 398,866.4 397,866.4 396,867.5 395,866.6 394,867.9 393,866.6 392,866.1 391,867 390,867 389,868 388,867.5 387,867.8 386,867.1 385,868.1 384,868 383,868.3 382,867.4 381,867.4 380,867.2 379,868.6 378,867.7 377,868.2 376,868.2 375,869 374,869 373,867.4 372,868.4 371,868.9 370,867.2 369,867 368,867.4 367,867.3 366,864.8 365,864.1 364,863.7 363,862.1 362,862.5 361,861.3 360,862.4 359,861.8 358,861.1 357,862 356,863 355,862.7 354,863.4 353,862 352,862.4 351,863 350,862.7 349,864.4 348,863.5 347,863.6 346,864 345,864.1 344,864.4 343,864.6 342,864.4 341,864.2 340,865 339,864.9 338,865.3 337,864.4 336,864.8 335,865.7 334,865.2 333,866.5 332,866.2 331,866.2 330,867.3 329,866.3 328,866.1 327,866.7 326,866.9 325,867.5 324,867.1 323,867.7 322,866.5 321,866.8 320,867.7 319,868 318,867.2 317,867.6 316,867.4 315,868.7 314,868.3 313,867 312,867.9 311,867.1 310,867.8 309,867.2 308,867.2 307,867.5 306,869 305,867.6 304,867.5 303,868.9 302,868 301,866.9 300,867.8 299,866.4 298,867.4 297,867.8 296,866.7 295,867.3 294,868 293,867.7 292,867.6 291,868.1 290,868.8 289,868.4 288,868.1 287,867.1 286,868.4 285,868.3 284,868.4 283,867.7 282,867.8 281,867.9 280,867.7 279,868.2 278,867.4 277,866.8 276,867.5 275,868.4 274,866.6 273,866.9 272,868.4 271,868.1 270,866.9 269,867 268,867.6 267,867.3 266,868 265,868.9 264,868.4 263,866.8 262,867.9 261,867.9 260,867.2 259,867.3 258,868.2 257,867.7 256,868.6 255,869 254,869 253,867.1 252,867.7 251,868.5 250,869.1 249,869.2 248,867.9 247,867.4 246,868.9 245,869 244,868 243,869.2 242,868.1 241,867.5 240,868.9 239,868.4 238,867.8 237,868.7 236,869.8 235,868.9 234,869.9 233,869.9 232,868.8 231,869.2 230,868.5 229,868.5 228,868.1 227,869.3 226,868.8 225,868.2 224,866.4 223,866 222,865 221,863 220,861.3 219,858.6 218,857 217,857.2 216,857.2 215,856.8 214,855.4 213,855.2 212,856.4 211,856.7 210,856.4 209,854.7 208,856.3 207,854.9 206,855 205,855.9 204,855.8 203,855.9 202,858 201,856.8 200,858.8 199,858.4 198,861 197,859.8 196,861 195,862.3 194,862.4 193,863.5 192,863.9 191,863.6 190,869.5 189,868.1 188,870 187,868.8 186,868.4 185,869.6 184,827.4 183,826 182,825.5 181,825.9 180,825.7 179,826 178,826.1 177,826.6 176,825.6 175,827.4 174,827.1 173,826.8 172,828.7 171,828.3 170,827.5 169,826.8 168,827.4 167,828 166,826.4 165,825.9 164,824.9 163,826.5 162,825.9 161,825.4 160,824.4 159,822.7 158,822.4 157,822.8 156,821.4 155,820.4 154,820.6 153,820.6 152,819.7 151,818.1 150,868.4 149,867.7 148,868.6 147,868.6 146,867.1 145,868.9 144,868.4 143,868 142,867.8 141,868.4 140,867.5 139,868 138,868.3 137,869.1 136,868.7 135,869.1 134,868.5 133,868.9 132,867.4 131,869 130,867.4 129,868.7 128,866.9 127,868.1 126,868.5 125,867.8 124,868 123,867.8 122,866.7 121,868.8 120,866.7 119,867.1 118,866.8 117,868.1 116,866.4 115,868.4 114,866.3 113,867.4 112,868 111,868 110,867.2 109,867.2 108,866.3 107,867.6 106,866.4 105,865.8 104,866.6 103,867.2 102,867.8 101,867.1 100,865.6 99,865.8 98,866.6 97,865.9 96,866.5 95,867.6 94,867.9 93,867.4 92,867.8 91,866 90,867.7 89,866.5 88,865 87,866 86,864.1 85,864.5 84,863.8 83,863.1 82,861.1 81,860.8 80,862.2 79,862.5 78,862.3 77,861.5 76,862.6 75,861.8 74,863.5 73,862.3 72,862.7 71,862.5 70,864.4 69,863.2 68,863.1 67,863.7 66,862.9 65,863.6 64,864.8 63,863.4 62,864.4 61,863.8 60,863.6 59,864.6 58,865.4 57,865.3 56,865.5 55,864.7 54,864.9 53,865.8 52,865.7 51,865 50,866.1 49,866.1 48,867.2 47,866.8 46,865.6 45,867.5 44,867.7 43,867.4 42,868.4 41,868.2 40,869 39,867.7 38,868.7 37,868.2 36,867.8 35,868.7 34,868.3 33,868.1 32,868.5 31,867.8 30,867.7 29,868.3 28,868.2 27,869.4 26,868.4 25,868.8 24,869.3 23,869.3 22,869.3 21,868.2 20,869.5 19,868 18,868 17,867.7 16,869.1 15,867.4 14,867.4 13,868.6" fill="#96d032"/>
<polyline points="13,863.9 15,864.1 17,864.2 19,864.3 21,864.6 23,864.4 25,864.5 27,864.5 29,864.2 31,864.5 33,864.4 35,864.6 37,864.7 39,864.2 41,863.5 43,863.3 45,862.8 47,862.4 49,862 51,861.3 53,860.8 55,860.7 57,860.5 59,860.4 61,860.1 63,860.1 65,859.8 67,859.3 69,859.2 71,859.3 73,858.9 75,858.5 77,858.1 79,857.6 81,857.4 83,858.6 85,860.1 87,861.5 89,862.3 91,862.9 93,862.9 95,862.9 97,862.9 99,862.7 101,862.5 103,862.8 105,862.7 107,862.7 109,862.8 111,863 113,863 115,863.3 117,863.5 119,863.8 121,863.7 123,863.5 125,863.4 127,863.7 129,863.9 131,864.2 133,864.1 135,864.1 137,864.1 139,864.4 141,864.3 143,864.2 145,864 147,864.1 149,864.1 151,814.1 153,816 155,817.3 157,818.4 159,819.6 161,820.7 163,821.5 165,822.2 167,823.2 169,823.8 171,823.6 173,823.1 175,822.7 177,822.4 179,821.8 181,821.9 183,821.9 185,865.1 187,865.1 189,864.9 191,860.5 193,859.5 195,858.3 197,856.8 199,855.1 201,853.6 203,852.7 205,852.1 207,851.4 209,851.5 211,851.7 213,852.1 215,852.5 217,853.5 219,855.5 221,858.7 223,861.4 225,863.1 227,864.5 229,865.1 231,865.4 233,865.1 235,864.7 237,864.7 239,864.5 241,864.1 243,864 245,864.3 247,864.2 249,864.5 251,864.5 253,864 255,863.9 257,863.5 259,863.5 261,863.5 263,863.6 265,864 267,863.8 269,863.8 271,863.9 273,863.7 275,863.5 277,863.6 279,863.5 281,863.6 283,864.1 285,863.9 287,864 289,864 291,863.7 293,863.4 295,863.2 297,863.4 299,863.3 301,863.5 303,863.8 305,863.8 307,863.7 309,863.7 311,863.6 313,863.4 315,863.8 317,863.8 319,863.6 321,863.5 323,863.4 325,863 327,862.6 329,862.3 331,861.9 333,861.4 335,861.3 337,861 339,860.7 341,860.4 343,860.1 345,860.1 347,859.9 349,859.5 351,859.3 353,858.8 355,858.5 357,858.1 359,857.9 361,857.8 363,857.8 365,860 367,862.1 369,863.5 371,863.9 373,864.2 375,863.9 377,863.8 379,863.7 381,863.5 383,863.7 385,863.6 387,863.7 389,863.5 391,863.5 393,863 395,863 397,863 399,862.9 401,863.2 403,863.7 405,863.7 407,863.9 409,863.6 411,863.5 413,863.8 415,864.1 417,863.8 419,863.9 421,863.9 423,863.9 425,864 427,864.1 429,864 431,864.1 433,864.1 435,864 437,863.7 439,863.8 441,864 443,863.8 445,863.6 447,863.8 449,864 451,864 453,864 455,863.9 457,863.9 459,864 461,863.7 463,863.2 465,863 467,863.2 469,863.2 471,862.6 473,862.3 475,862.1 477,861.7 479,861.5 481,861.2 483,861.4 485,861 487,860.4 489,860.3 491,816.1 493,817.3 495,818.4 497,819.6 499,820.5 501,821.8 503,822.4 505,823.1 507,823.7 509,823.7 511,823.1 513,822.4 515,821.9 517,821.8 519,821.3 521,821.8 523,822.2 525,865.3 527,865.3 529,865.3 531,864.1 533,863.3 535,862.5 537,861.2 539,860 541,858.9 543,858 545,857.4 547,857.2 549,857.8 551,858.1 553,858.8 555,859.5 557,860.2 559,861.4 561,862 563,862.6 565,863.4 567,864 569,864.3 571,864.6 573,864.5 575,864.3 577,864.1 579,863.7 581,863.6 583,863.6 585,863.7 587,864 589,863.8 591,863.6 593,864 595,863.7 597,863.8 599,863.8 601,863.5 603,863.3 605,863.2 607,863.1 609,863 611,862.7 613,862.5 615,862.3 617,861.9 619,861.7 621,861.7 623,861.3 625,861 627,860.3 629,860.1 631,860.1 633,859.7 635,859.3 637,858.6 639,858.3 641,858.1 643,857.7 645,857.2 647,858 649,859.8 651,861.5 653,862.4 655,863.1 657,863.6 659,863.2 661,862.8 663,862.8 665,862.8 667,862.9 669,863 671,863 673,863 675,863.2 677,863 679,863.4 681,863.4 683,863.3 685,863.2 687,863.1 689,863.5 691,863.9 693,863.9 695,864.2 697,864.1 699,864.2 701,864.2 703,864 705,864.1 707,864.3 709,864.4 711,864.2 713,864.3 715,864.5 717,864.7 719,864.8 721,864.4 723,864.5 725,864.2 727,864.2 729,864 731,863.8 733,863.7 735,863.4 737,863.5 739,863.6 741,863.9 743,863.9 745,863.4 747,862.9 749,862.5 751,862 753,861.5 755,861.1 757,861 759,860.6 761,860.7 763,860.7 765,860.6 767,860.4 769,860.2 771,860 773,859.7 775,859.9 777,859.6 779,859 781,859.1 783,859 785,858.6 787,858.4 789,858 791,857.4 793,859.7 795,861.7 797,863 799,863.7 801,864 803,864.1 805,864 807,864.3 809,864.5 811,864.1 813,864.3 815,864.1 817,864.1 819,864.3 821,864.3 823,864.3 825,864.2 827,864 829,864.1 831,814.8 833,816.5 835,818 837,819.2 839,820.1 841,821.2 843,821.7 845,822.6 847,823.2 849,823.7 851,823.2 853,822.6 855,822.2 857,822.1 859,822 861,822.4 863,822.5 865,865.1 867,865.1 869,865.4 871,864.3 873,863.9 875,862.8 877,861.7 879,860.1 881,858.3 883,857.1 885,855.9 887,855.3 889,854.8 891,855 893,855.3 895,856.2 897,856.8 899,857.4 901,857.8 903,858 905,858.2 907,858.4 909,858.3 911,858.6 913,858.3 915,858.2 917,857.9 919,857.5 921,857.1 923,856.6 925,859 927,860.5 929,861.5 931,862.9 933,863.4 935,863.4 937,863.5 939,863.6 941,863.2 943,863.4 945,863.5 947,863.4 949,863.7 951,863.8 953,863.9 955,863.8 957,864 959,864.5 961,864.2 963,864.3 965,864.5 967,864.2 969,864 971,864.2 973,864.1 975,864.2 977,864.2 979,864.3 981,864.1 983,863.9 985,863.8 987,864 989,863.9 991,863.8 993,863.9 995,864 997,864.3 999,864.3 1001,864.4 1003,864.6 1005,864.3 1007,864.1 1009,864.2 1011,864.4 1013,864.5 1015,864.8 1017,864.8 1019,864.7 1021,864.7 1023,864.6 1025,864.2 1027,863.5 1029,863.4 1031,863.2 1033,862.7 1035,862.1 1037,862.1 1039,861.3 1041,860.8 1043,860.4 1045,859.9 1047,859.3 1049,859 1051,858.9 1053,858.6 1055,858.5 1057,858.5 1059,857.7 1061,857.2 1063,857.1 1065,857.1 1067,856.9 1069,857 1071,857 1073,859.5 1075,861.5 1077,862.8 1079,863.6 1081,863.7 1083,863.6 1085,863.8 1087,863.8 1089,863.9 1091,864.2 1093,863.8 1095,863.7 1097,863.4 1099,863.2 1101,863.1 1103,862.9 1105,863.1 1107,863.5 1109,863.7 1111,863.9 1113,864.1 1115,864 1117,863.9 1119,864 1121,864 1123,864.2 1125,864.4 1127,864.9 1129,865 1131,864.7 1133,864.8 1135,864.8 1137,864.7 1139,864.7 1141,864.8 1143,864.8 1145,864.8 1147,865 1149,864.8 1151,864.6 1153,864.5 1155,864.1 1157,863.7 1159,863.6 1161,864 1163,864.1 1165,863.9 1167,863.7 1169,814.1 1171,815.7 1173,817.1 1175,818.2 1177,819.2 1179,820.2 1181,821 1183,821.6 1185,822.3 1187,823.1 1189,823 1191,822.3 1193,821.5 1195,821.2 1197,821.1 1199,821.1 1201,821.2 1203,864.4 1205,864.3 1207,864.4 1209,856.9 1211,856.1 1213,857.6 1215,858.5 1217,858.8 1219,858.6 1221,858.2 1223,857.5 1225,857.3 1227,857.1 1229,857.8 1231,858.3 1233,859.5 1235,860.6 1237,861.6 1239,862.5 1241,863.3 1243,864 1245,864.6 1247,864.7 1249,864.9 1251,864.9 1253,865 1255,864.5 1257,864.4 1259,863.8 1261,863.8 1263,863.3 1265,863.3 1267,863.4 1269,863.2 1271,863.3 1273,863.8 1275,863.7 1277,863.9 1279,864 1281,863.9 1283,864 1285,864.1 1287,864 1289,864.1 1291,864.2 1293,864.6 1295,864.5 1297,864.4 1299,864.5 1301,864.4 1303,864 1305,864.1 1307,864.2 1309,863.6 1311,863.2 1313,862.6 1315,862.2 1317,861.8 1319,861.7 1321,861.4 1323,860.7 1325,860.3 1327,860.2 1329,859.9 1331,859.5 1333,859.3 1335,859 1337,858.7 1339,858.4 1341,857.9 1343,857.9 1345,857.5 1347,857.4 1349,857.2 1351,856.8 1353,856.6 1355,859.3 1357,861.4 1359,862.8 1361,863.7 1363,864.2 1365,864.3 1367,864 1369,864.3 1371,864.8 1373,864.9 1375,865.1 1377,865 1379,864.8 1381,864.7 1383,864.8 1385,864.5 1387,864.2 1389,864 1391,864 1393,864.2 1395,864.2 1397,864.4 1399,864.2 1401,864.1 1403,863.8 1405,863.8 1407,863.6 1409,863.8 1411,864 1413,863.7 1415,863.7 1417,864.1 1419,864.4 1421,864.3 1423,864.4 1425,864.3 1427,864.4 1429,863.9 1431,863.9 1433,863.9 1435,863.8 1437,863.9 1439,863.6 1441,863.4 1443,863.4 1445,863.4 1447,863.1 1449,862.9 1451,862.8 1453,862.5 1455,862.3 1457,861.8 1459,861.4 1461,861.3 1463,861.1 1465,861 1467,860.8 1469,860.8 1471,860.6 1473,860.4 1475,860.1 1477,859.7 1479,859.4 1481,859.3 1483,859.4 1485,858.4 1487,858.1 1489,858.1 1491,857.7 1493,857.6 1495,857.3 1497,857.1 1499,858.4 1501,860.5 1503,862 1505,863.3 1507,864.2 1509,815.5 1511,817 1513,818.2 1515,819.7 1517,820.8 1519,821.6 1521,822.4 1523,822.8 1525,823.6 1527,823.8 1529,823 1531,822.4 1533,822 1535,821.5 1537,821.7 1539,821.7 1541,821.8 1543,864.7 1545,864.8 1547,864.8 1549,863.6 1551,863 1553,862.2 1555,860.9 1557,859.9 1559,858.7 1561,858 1563,857.5 1565,857.6 1567,857.2 1569,857.5 1571,858.5 1573,859.4 1575,860.3 1577,861.1 1579,861.7 1581,862.3 1583,862.5 1585,862.9 1587,863.2 1589,863 1591,862.4 1593,862.1 1595,861.6 1597,861.2 1599,861.1 1601,860.5 1603,860.4 1605,860.3 1607,859.8 1609,860.3 1611,859.7 1613,859.6 1615,859.2 1617,858.9 1619,858.4 1621,858 1623,857.8 1625,857.4 1627,857.4 1629,857.1 1631,856.7 1633,856.6 1635,858.8 1637,861 1639,862.2 1641,863.5 1643,864 1645,864.3 1647,864.3 1649,864.4 1651,864.7 1653,864.4 1655,864.5 1657,864.4 1659,864.2 1661,864.7 1663,864.1 1665,864.4 1667,864.5 1669,864.7 1671,864.5 1673,864.4 1675,864.2 1677,864.3 1679,864.3 1681,864.5 1683,864.5 1685,864.3 1687,864.4 1689,864.6 1691,864.2 1693,864.4 1695,864 1697,864.1 1699,864 1701,864 1703,864.2 1705,864.2 1707,864 1709,863.8" fill="none" stroke="#b4e060" stroke-width="1.3" opacity=".55"/>
<path d="M13 88.5h1M183 88.5h1M352 88.5h1M522 88.5h1M692 88.5h1M1031 88.5h1M1201 88.5h1M1371 88.5h1M1540 88.5h1M13 92.5h1M47 92.5h1M81 92.5h1M115 92.5h1M149 92.5h1M183 92.5h1M217 92.5h1M251 92.5h1M285 92.5h1M319 92.5h1M352 92.5h1M386 92.5h1M420 92.5h1M454 92.5h1M488 92.5h1M522 92.5h1M556 92.5h1M590 92.5h1M624 92.5h1M658 92.5h1M692 92.5h1M726 92.5h1M760 92.5h1M794 92.5h1M828 92.5h1M862 92.5h1M895 92.5h1M929 92.5h1M963 92.5h1M997 92.5h1M1031 92.5h1M1065 92.5h1M1099 92.5h1M1133 92.5h1M1167 92.5h1M1201 92.5h1M1235 92.5h1M1269 92.5h1M1303 92.5h1M1337 92.5h1M1371 92.5h1M1405 92.5h1M1439 92.5h1M1472 92.5h1M1506 92.5h1M1540 92.5h1M1574 92.5h1M1608 92.5h1M1642 92.5h1M1676 92.5h1M13 96.5h1M183 96.5h1M352 96.5h1M522 96.5h1M692 96.5h1M1031 96.5h1M1201 96.5h1M1371 96.5h1M1540 96.5h1M13 101.5h1M183 101.5h1M352 101.5h1M522 101.5h1M692 101.5h1M1031 101.5h1M1201 101.5h1M1371 101.5h1M1540 101.5h1M13 105.5h1M183 105.5h1M352 105.5h1M522 105.5h1M692 105.5h1M1031 105.5h1M1201 105.5h1M1371 105.5h1M1540 105.5h1M13 110.5h1M183 110.5h1M352 110.5h1M522 110.5h1M692 110.5h1M1031 110.5h1M1201 110.5h1M1371 110.5h1M1540 110.5h1M13 114.5h1M47 114.5h1M81 114.5h1M115 114.5h1M149 114.5h1M183 114.5h1M217 114.5h1M251 114.5h1M285 114.5h1M319 114.5h1M352 114.5h1M386 114.5h1M420 114.5h1M454 114.5h1M488 114.5h1M522 114.5h1M556 114.5h1M590 114.5h1M624 114.5h1M658 114.5h1M692 114.5h1M726 114.5h1M760 114.5h1M794 114.5h1M828 114.5h1M862 114.5h1M895 114.5h1M929 114.5h1M963 114.5h1M997 114.5h1M1031 114.5h1M1065 114.5h1M1099 114.5h1M1133 114.5h1M1167 114.5h1M1201 114.5h1M1235 114.5h1M1269 114.5h1M1303 114.5h1M1337 114.5h1M1371 114.5h1M1405 114.5h1M1439 114.5h1M1472 114.5h1M1506 114.5h1M1540 114.5h1M1574 114.5h1M1608 114.5h1M1642 114.5h1M1676 114.5h1M13 118.5h1M183 118.5h1M352 118.5h1M522 118.5h1M692 118.5h1M1031 118.5h1M1201 118.5h1M1371 118.5h1M1540 118.5h1M13 123.5h1M183 123.5h1M352 123.5h1M522 123.5h1M692 123.5h1M1031 123.5h1M1201 123.5h1M1371 123.5h1M1540 123.5h1M13 127.5h1M183 127.5h1M352 127.5h1M522 127.5h1M692 127.5h1M1031 127.5h1M1201 127.5h1M1371 127.5h1M1540 127.5h1M13 131.5h1M183 131.5h1M352 131.5h1M522 131.5h1M692 131.5h1M1031 131.5h1M1201 131.5h1M1371 131.5h1M1540 131.5h1M13 136.5h1M47 136.5h1M81 136.5h1M115 136.5h1M149 136.5h1M183 136.5h1M217 136.5h1M251 136.5h1M285 136.5h1M319 136.5h1M352 136.5h1M386 136.5h1M420 136.5h1M454 136.5h1M488 136.5h1M522 136.5h1M556 136.5h1M590 136.5h1M624 136.5h1M658 136.5h1M692 136.5h1M726 136.5h1M760 136.5h1M794 136.5h1M828 136.5h1M862 136.5h1M895 136.5h1M929 136.5h1M963 136.5h1M997 136.5h1M1031 136.5h1M1065 136.5h1M1099 136.5h1M1133 136.5h1M1167 136.5h1M1201 136.5h1M1235 136.5h1M1269 136.5h1M1303 136.5h1M1337 136.5h1M1371 136.5h1M1405 136.5h1M1439 136.5h1M1472 136.5h1M1506 136.5h1M1540 136.5h1M1574 136.5h1M1608 136.5h1M1642 136.5h1M1676 136.5h1M13 140.5h1M183 140.5h1M352 140.5h1M522 140.5h1M692 140.5h1M1031 140.5h1M1201 140.5h1M1371 140.5h1M1540 140.5h1M13 144.5h1M183 144.5h1M352 144.5h1M522 144.5h1M692 144.5h1M1031 144.5h1M1201 144.5h1M1371 144.5h1M1540 144.5h1M13 149.5h1M183 149.5h1M352 149.5h1M522 149.5h1M692 149.5h1M1031 149.5h1M1201 149.5h1M1371 149.5h1M1540 149.5h1M13 153.5h1M183 153.5h1M352 153.5h1M522 153.5h1M692 153.5h1M1031 153.5h1M1201 153.5h1M1371 153.5h1M1540 153.5h1M13 158.5h1M47 158.5h1M81 158.5h1M115 158.5h1M149 158.5h1M183 158.5h1M217 158.5h1M251 158.5h1M285 158.5h1M319 158.5h1M352 158.5h1M386 158.5h1M420 158.5h1M454 158.5h1M488 158.5h1M522 158.5h1M556 158.5h1M590 158.5h1M624 158.5h1M658 158.5h1M692 158.5h1M726 158.5h1M760 158.5h1M794 158.5h1M828 158.5h1M862 158.5h1M895 158.5h1M929 158.5h1M963 158.5h1M997 158.5h1M1031 158.5h1M1065 158.5h1M1099 158.5h1M1133 158.5h1M1167 158.5h1M1201 158.5h1M1235 158.5h1M1269 158.5h1M1303 158.5h1M1337 158.5h1M1371 158.5h1M1405 158.5h1M1439 158.5h1M1472 158.5h1M1506 158.5h1M1540 158.5h1M1574 158.5h1M1608 158.5h1M1642 158.5h1M1676 158.5h1M13 162.5h1M183 162.5h1M352 162.5h1M522 162.5h1M692 162.5h1M1031 162.5h1M1201 162.5h1M1371 162.5h1M1540 162.5h1M13 166.5h1M183 166.5h1M352 166.5h1M522 166.5h1M692 166.5h1M1031 166.5h1M1201 166.5h1M1371 166.5h1M1540 166.5h1M13 171.5h1M183 171.5h1M352 171.5h1M522 171.5h1M692 171.5h1M1031 171.5h1M1201 171.5h1M1371 171.5h1M1540 171.5h1M13 175.5h1M183 175.5h1M352 175.5h1M522 175.5h1M692 175.5h1M1031 175.5h1M1201 175.5h1M1371 175.5h1M1540 175.5h1M13 179.5h1M47 179.5h1M81 179.5h1M115 179.5h1M149 179.5h1M183 179.5h1M217 179.5h1M251 179.5h1M285 179.5h1M319 179.5h1M352 179.5h1M386 179.5h1M420 179.5h1M454 179.5h1M488 179.5h1M522 179.5h1M556 179.5h1M590 179.5h1M624 179.5h1M658 179.5h1M692 179.5h1M726 179.5h1M760 179.5h1M794 179.5h1M828 179.5h1M862 179.5h1M895 179.5h1M929 179.5h1M963 179.5h1M997 179.5h1M1031 179.5h1M1065 179.5h1M1099 179.5h1M1133 179.5h1M1167 179.5h1M1201 179.5h1M1235 179.5h1M1269 179.5h1M1303 179.5h1M1337 179.5h1M1371 179.5h1M1405 179.5h1M1439 179.5h1M1472 179.5h1M1506 179.5h1M1540 179.5h1M1574 179.5h1M1608 179.5h1M1642 179.5h1M1676 179.5h1M13 184.5h1M183 184.5h1M352 184.5h1M522 184.5h1M692 184.5h1M1031 184.5h1M1201 184.5h1M1371 184.5h1M1540 184.5h1M13 188.5h1M183 188.5h1M352 188.5h1M522 188.5h1M692 188.5h1M1031 188.5h1M1201 188.5h1M1371 188.5h1M1540 188.5h1M13 192.5h1M183 192.5h1M352 192.5h1M522 192.5h1M692 192.5h1M1031 192.5h1M1201 192.5h1M1371 192.5h1M1540 192.5h1M13 197.5h1M183 197.5h1M352 197.5h1M522 197.5h1M692 197.5h1M1031 197.5h1M1201 197.5h1M1371 197.5h1M1540 197.5h1M13 201.5h1M47 201.5h1M81 201.5h1M115 201.5h1M149 201.5h1M183 201.5h1M217 201.5h1M251 201.5h1M285 201.5h1M319 201.5h1M352 201.5h1M386 201.5h1M420 201.5h1M454 201.5h1M488 201.5h1M522 201.5h1M556 201.5h1M590 201.5h1M624 201.5h1M658 201.5h1M692 201.5h1M726 201.5h1M760 201.5h1M794 201.5h1M828 201.5h1M862 201.5h1M895 201.5h1M929 201.5h1M963 201.5h1M997 201.5h1M1031 201.5h1M1065 201.5h1M1099 201.5h1M1133 201.5h1M1167 201.5h1M1201 201.5h1M1235 201.5h1M1269 201.5h1M1303 201.5h1M1337 201.5h1M1371 201.5h1M1405 201.5h1M1439 201.5h1M1472 201.5h1M1506 201.5h1M1540 201.5h1M1574 201.5h1M1608 201.5h1M1642 201.5h1M1676 201.5h1M13 205.5h1M183 205.5h1M352 205.5h1M522 205.5h1M692 205.5h1M1031 205.5h1M1201 205.5h1M1371 205.5h1M1540 205.5h1M13 210.5h1M183 210.5h1M352 210.5h1M522 210.5h1M692 210.5h1M1031 210.5h1M1201 210.5h1M1371 210.5h1M1540 210.5h1M13 214.5h1M183 214.5h1M352 214.5h1M522 214.5h1M692 214.5h1M1031 214.5h1M1201 214.5h1M1371 214.5h1M1540 214.5h1M13 219.5h1M183 219.5h1M352 219.5h1M522 219.5h1M692 219.5h1M1031 219.5h1M1201 219.5h1M1371 219.5h1M1540 219.5h1M13 223.5h1M47 223.5h1M81 223.5h1M115 223.5h1M149 223.5h1M183 223.5h1M217 223.5h1M251 223.5h1M285 223.5h1M319 223.5h1M352 223.5h1M386 223.5h1M420 223.5h1M454 223.5h1M488 223.5h1M522 223.5h1M556 223.5h1M590 223.5h1M624 223.5h1M658 223.5h1M692 223.5h1M726 223.5h1M760 223.5h1M794 223.5h1M828 223.5h1M862 223.5h1M895 223.5h1M929 223.5h1M963 223.5h1M997 223.5h1M1031 223.5h1M1065 223.5h1M1099 223.5h1M1133 223.5h1M1167 223.5h1M1201 223.5h1M1235 223.5h1M1269 223.5h1M1303 223.5h1M1337 223.5h1M1371 223.5h1M1405 223.5h1M1439 223.5h1M1472 223.5h1M1506 223.5h1M1540 223.5h1M1574 223.5h1M1608 223.5h1M1642 223.5h1M1676 223.5h1M13 227.5h1M183 227.5h1M352 227.5h1M522 227.5h1M692 227.5h1M1031 227.5h1M1201 227.5h1M1371 227.5h1M1540 227.5h1M13 232.5h1M183 232.5h1M352 232.5h1M522 232.5h1M692 232.5h1M1031 232.5h1M1201 232.5h1M1371 232.5h1M1540 232.5h1M13 236.5h1M183 236.5h1M352 236.5h1M522 236.5h1M692 236.5h1M1031 236.5h1M1201 236.5h1M1371 236.5h1M1540 236.5h1M13 240.5h1M183 240.5h1M352 240.5h1M522 240.5h1M692 240.5h1M1031 240.5h1M1201 240.5h1M1371 240.5h1M1540 240.5h1M13 245.5h1M47 245.5h1M81 245.5h1M115 245.5h1M149 245.5h1M183 245.5h1M217 245.5h1M251 245.5h1M285 245.5h1M319 245.5h1M352 245.5h1M386 245.5h1M420 245.5h1M454 245.5h1M488 245.5h1M522 245.5h1M556 245.5h1M590 245.5h1M624 245.5h1M658 245.5h1M692 245.5h1M726 245.5h1M760 245.5h1M794 245.5h1M828 245.5h1M862 245.5h1M895 245.5h1M929 245.5h1M963 245.5h1M997 245.5h1M1031 245.5h1M1065 245.5h1M1099 245.5h1M1133 245.5h1M1167 245.5h1M1201 245.5h1M1235 245.5h1M1269 245.5h1M1303 245.5h1M1337 245.5h1M1371 245.5h1M1405 245.5h1M1439 245.5h1M1472 245.5h1M1506 245.5h1M1540 245.5h1M1574 245.5h1M1608 245.5h1M1642 245.5h1M1676 245.5h1M13 249.5h1M183 249.5h1M352 249.5h1M522 249.5h1M692 249.5h1M1031 249.5h1M1201 249.5h1M1371 249.5h1M1540 249.5h1M13 253.5h1M183 253.5h1M352 253.5h1M522 253.5h1M692 253.5h1M1031 253.5h1M1201 253.5h1M1371 253.5h1M1540 253.5h1M13 258.5h1M183 258.5h1M352 258.5h1M522 258.5h1M692 258.5h1M1031 258.5h1M1201 258.5h1M1371 258.5h1M1540 258.5h1M13 262.5h1M183 262.5h1M352 262.5h1M522 262.5h1M692 262.5h1M1031 262.5h1M1201 262.5h1M1371 262.5h1M1540 262.5h1M13 267.5h1M47 267.5h1M81 267.5h1M115 267.5h1M149 267.5h1M183 267.5h1M217 267.5h1M251 267.5h1M285 267.5h1M319 267.5h1M352 267.5h1M386 267.5h1M420 267.5h1M454 267.5h1M488 267.5h1M522 267.5h1M556 267.5h1M590 267.5h1M624 267.5h1M658 267.5h1M692 267.5h1M726 267.5h1M760 267.5h1M794 267.5h1M828 267.5h1M862 267.5h1M895 267.5h1M929 267.5h1M963 267.5h1M997 267.5h1M1031 267.5h1M1065 267.5h1M1099 267.5h1M1133 267.5h1M1167 267.5h1M1201 267.5h1M1235 267.5h1M1269 267.5h1M1303 267.5h1M1337 267.5h1M1371 267.5h1M1405 267.5h1M1439 267.5h1M1472 267.5h1M1506 267.5h1M1540 267.5h1M1574 267.5h1M1608 267.5h1M1642 267.5h1M1676 267.5h1M13 271.5h1M183 271.5h1M352 271.5h1M522 271.5h1M692 271.5h1M1031 271.5h1M1201 271.5h1M1371 271.5h1M1540 271.5h1M13 275.5h1M183 275.5h1M352 275.5h1M522 275.5h1M692 275.5h1M1031 275.5h1M1201 275.5h1M1371 275.5h1M1540 275.5h1M13 280.5h1M183 280.5h1M352 280.5h1M522 280.5h1M692 280.5h1M1031 280.5h1M1201 280.5h1M1371 280.5h1M1540 280.5h1M13 284.5h1M183 284.5h1M352 284.5h1M522 284.5h1M692 284.5h1M1031 284.5h1M1201 284.5h1M1371 284.5h1M1540 284.5h1M13 288.5h1M47 288.5h1M81 288.5h1M115 288.5h1M149 288.5h1M183 288.5h1M217 288.5h1M251 288.5h1M285 288.5h1M319 288.5h1M352 288.5h1M386 288.5h1M420 288.5h1M454 288.5h1M488 288.5h1M522 288.5h1M556 288.5h1M590 288.5h1M624 288.5h1M658 288.5h1M692 288.5h1M726 288.5h1M760 288.5h1M794 288.5h1M828 288.5h1M862 288.5h1M895 288.5h1M929 288.5h1M963 288.5h1M997 288.5h1M1031 288.5h1M1065 288.5h1M1099 288.5h1M1133 288.5h1M1167 288.5h1M1201 288.5h1M1235 288.5h1M1269 288.5h1M1303 288.5h1M1337 288.5h1M1371 288.5h1M1405 288.5h1M1439 288.5h1M1472 288.5h1M1506 288.5h1M1540 288.5h1M1574 288.5h1M1608 288.5h1M1642 288.5h1M1676 288.5h1M13 293.5h1M183 293.5h1M352 293.5h1M522 293.5h1M692 293.5h1M1031 293.5h1M1201 293.5h1M1371 293.5h1M1540 293.5h1M13 297.5h1M183 297.5h1M352 297.5h1M522 297.5h1M692 297.5h1M1031 297.5h1M1201 297.5h1M1371 297.5h1M1540 297.5h1M13 301.5h1M183 301.5h1M352 301.5h1M522 301.5h1M692 301.5h1M1031 301.5h1M1201 301.5h1M1371 301.5h1M1540 301.5h1M13 308.5h1M47 308.5h1M81 308.5h1M115 308.5h1M149 308.5h1M183 308.5h1M217 308.5h1M251 308.5h1M285 308.5h1M319 308.5h1M352 308.5h1M386 308.5h1M420 308.5h1M454 308.5h1M488 308.5h1M522 308.5h1M556 308.5h1M590 308.5h1M624 308.5h1M658 308.5h1M692 308.5h1M726 308.5h1M760 308.5h1M794 308.5h1M828 308.5h1M862 308.5h1M895 308.5h1M929 308.5h1M963 308.5h1M997 308.5h1M1031 308.5h1M1065 308.5h1M1099 308.5h1M1133 308.5h1M1167 308.5h1M1201 308.5h1M1235 308.5h1M1269 308.5h1M1303 308.5h1M1337 308.5h1M1371 308.5h1M1405 308.5h1M1439 308.5h1M1472 308.5h1M1506 308.5h1M1540 308.5h1M1574 308.5h1M1608 308.5h1M1642 308.5h1M1676 308.5h1M13 313.5h1M183 313.5h1M352 313.5h1M522 313.5h1M692 313.5h1M1031 313.5h1M1201 313.5h1M1371 313.5h1M1540 313.5h1M13 317.5h1M183 317.5h1M352 317.5h1M522 317.5h1M692 317.5h1M1031 317.5h1M1201 317.5h1M1371 317.5h1M1540 317.5h1M13 322.5h1M183 322.5h1M352 322.5h1M522 322.5h1M692 322.5h1M1031 322.5h1M1201 322.5h1M1371 322.5h1M1540 322.5h1M13 326.5h1M183 326.5h1M352 326.5h1M522 326.5h1M692 326.5h1M1031 326.5h1M1201 326.5h1M1371 326.5h1M1540 326.5h1M13 330.5h1M47 330.5h1M81 330.5h1M115 330.5h1M149 330.5h1M183 330.5h1M217 330.5h1M251 330.5h1M285 330.5h1M319 330.5h1M352 330.5h1M386 330.5h1M420 330.5h1M454 330.5h1M488 330.5h1M522 330.5h1M556 330.5h1M590 330.5h1M624 330.5h1M658 330.5h1M692 330.5h1M726 330.5h1M760 330.5h1M794 330.5h1M828 330.5h1M862 330.5h1M895 330.5h1M929 330.5h1M963 330.5h1M997 330.5h1M1031 330.5h1M1065 330.5h1M1099 330.5h1M1133 330.5h1M1167 330.5h1M1201 330.5h1M1235 330.5h1M1269 330.5h1M1303 330.5h1M1337 330.5h1M1371 330.5h1M1405 330.5h1M1439 330.5h1M1472 330.5h1M1506 330.5h1M1540 330.5h1M1574 330.5h1M1608 330.5h1M1642 330.5h1M1676 330.5h1M13 335.5h1M183 335.5h1M352 335.5h1M522 335.5h1M692 335.5h1M1031 335.5h1M1201 335.5h1M1371 335.5h1M1540 335.5h1M13 339.5h1M183 339.5h1M352 339.5h1M522 339.5h1M692 339.5h1M1031 339.5h1M1201 339.5h1M1371 339.5h1M1540 339.5h1M13 343.5h1M183 343.5h1M352 343.5h1M522 343.5h1M692 343.5h1M1031 343.5h1M1201 343.5h1M1371 343.5h1M1540 343.5h1M13 348.5h1M183 348.5h1M352 348.5h1M522 348.5h1M692 348.5h1M1031 348.5h1M1201 348.5h1M1371 348.5h1M1540 348.5h1M13 352.5h1M47 352.5h1M81 352.5h1M115 352.5h1M149 352.5h1M183 352.5h1M217 352.5h1M251 352.5h1M285 352.5h1M319 352.5h1M352 352.5h1M386 352.5h1M420 352.5h1M454 352.5h1M488 352.5h1M522 352.5h1M556 352.5h1M590 352.5h1M624 352.5h1M658 352.5h1M692 352.5h1M726 352.5h1M760 352.5h1M794 352.5h1M828 352.5h1M862 352.5h1M895 352.5h1M929 352.5h1M963 352.5h1M997 352.5h1M1031 352.5h1M1065 352.5h1M1099 352.5h1M1133 352.5h1M1167 352.5h1M1201 352.5h1M1235 352.5h1M1269 352.5h1M1303 352.5h1M1337 352.5h1M1371 352.5h1M1405 352.5h1M1439 352.5h1M1472 352.5h1M1506 352.5h1M1540 352.5h1M1574 352.5h1M1608 352.5h1M1642 352.5h1M1676 352.5h1M13 356.5h1M183 356.5h1M352 356.5h1M522 356.5h1M692 356.5h1M1031 356.5h1M1201 356.5h1M1371 356.5h1M1540 356.5h1M13 361.5h1M183 361.5h1M352 361.5h1M522 361.5h1M692 361.5h1M1031 361.5h1M1201 361.5h1M1371 361.5h1M1540 361.5h1M13 365.5h1M183 365.5h1M352 365.5h1M522 365.5h1M692 365.5h1M1031 365.5h1M1201 365.5h1M1371 365.5h1M1540 365.5h1M13 370.5h1M183 370.5h1M352 370.5h1M522 370.5h1M692 370.5h1M1031 370.5h1M1201 370.5h1M1371 370.5h1M1540 370.5h1M13 374.5h1M47 374.5h1M81 374.5h1M115 374.5h1M149 374.5h1M183 374.5h1M217 374.5h1M251 374.5h1M285 374.5h1M319 374.5h1M352 374.5h1M386 374.5h1M420 374.5h1M454 374.5h1M488 374.5h1M522 374.5h1M556 374.5h1M590 374.5h1M624 374.5h1M658 374.5h1M692 374.5h1M726 374.5h1M760 374.5h1M794 374.5h1M828 374.5h1M862 374.5h1M895 374.5h1M929 374.5h1M963 374.5h1M997 374.5h1M1031 374.5h1M1065 374.5h1M1099 374.5h1M1133 374.5h1M1167 374.5h1M1201 374.5h1M1235 374.5h1M1269 374.5h1M1303 374.5h1M1337 374.5h1M1371 374.5h1M1405 374.5h1M1439 374.5h1M1472 374.5h1M1506 374.5h1M1540 374.5h1M1574 374.5h1M1608 374.5h1M1642 374.5h1M1676 374.5h1M13 378.5h1M183 378.5h1M352 378.5h1M522 378.5h1M692 378.5h1M1031 378.5h1M1201 378.5h1M1371 378.5h1M1540 378.5h1M13 383.5h1M183 383.5h1M352 383.5h1M522 383.5h1M692 383.5h1M1031 383.5h1M1201 383.5h1M1371 383.5h1M1540 383.5h1M13 387.5h1M183 387.5h1M352 387.5h1M522 387.5h1M692 387.5h1M1031 387.5h1M1201 387.5h1M1371 387.5h1M1540 387.5h1M13 391.5h1M183 391.5h1M352 391.5h1M522 391.5h1M692 391.5h1M1031 391.5h1M1201 391.5h1M1371 391.5h1M1540 391.5h1M13 396.5h1M47 396.5h1M81 396.5h1M115 396.5h1M149 396.5h1M183 396.5h1M217 396.5h1M251 396.5h1M285 396.5h1M319 396.5h1M352 396.5h1M386 396.5h1M420 396.5h1M454 396.5h1M488 396.5h1M522 396.5h1M556 396.5h1M590 396.5h1M624 396.5h1M658 396.5h1M692 396.5h1M726 396.5h1M760 396.5h1M794 396.5h1M828 396.5h1M862 396.5h1M895 396.5h1M929 396.5h1M963 396.5h1M997 396.5h1M1031 396.5h1M1065 396.5h1M1099 396.5h1M1133 396.5h1M1167 396.5h1M1201 396.5h1M1235 396.5h1M1269 396.5h1M1303 396.5h1M1337 396.5h1M1371 396.5h1M1405 396.5h1M1439 396.5h1M1472 396.5h1M1506 396.5h1M1540 396.5h1M1574 396.5h1M1608 396.5h1M1642 396.5h1M1676 396.5h1M13 400.5h1M183 400.5h1M352 400.5h1M522 400.5h1M692 400.5h1M1031 400.5h1M1201 400.5h1M1371 400.5h1M1540 400.5h1M13 404.5h1M183 404.5h1M352 404.5h1M522 404.5h1M692 404.5h1M1031 404.5h1M1201 404.5h1M1371 404.5h1M1540 404.5h1M13 409.5h1M183 409.5h1M352 409.5h1M522 409.5h1M692 409.5h1M1031 409.5h1M1201 409.5h1M1371 409.5h1M1540 409.5h1M13 413.5h1M183 413.5h1M352 413.5h1M522 413.5h1M692 413.5h1M1031 413.5h1M1201 413.5h1M1371 413.5h1M1540 413.5h1M13 418.5h1M47 418.5h1M81 418.5h1M115 418.5h1M149 418.5h1M183 418.5h1M217 418.5h1M251 418.5h1M285 418.5h1M319 418.5h1M352 418.5h1M386 418.5h1M420 418.5h1M454 418.5h1M488 418.5h1M522 418.5h1M556 418.5h1M590 418.5h1M624 418.5h1M658 418.5h1M692 418.5h1M726 418.5h1M760 418.5h1M794 418.5h1M828 418.5h1M862 418.5h1M895 418.5h1M929 418.5h1M963 418.5h1M997 418.5h1M1031 418.5h1M1065 418.5h1M1099 418.5h1M1133 418.5h1M1167 418.5h1M1201 418.5h1M1235 418.5h1M1269 418.5h1M1303 418.5h1M1337 418.5h1M1371 418.5h1M1405 418.5h1M1439 418.5h1M1472 418.5h1M1506 418.5h1M1540 418.5h1M1574 418.5h1M1608 418.5h1M1642 418.5h1M1676 418.5h1M13 422.5h1M183 422.5h1M352 422.5h1M522 422.5h1M692 422.5h1M1031 422.5h1M1201 422.5h1M1371 422.5h1M1540 422.5h1M13 426.5h1M183 426.5h1M352 426.5h1M522 426.5h1M692 426.5h1M1031 426.5h1M1201 426.5h1M1371 426.5h1M1540 426.5h1M13 431.5h1M183 431.5h1M352 431.5h1M522 431.5h1M692 431.5h1M1031 431.5h1M1201 431.5h1M1371 431.5h1M1540 431.5h1M13 435.5h1M183 435.5h1M352 435.5h1M522 435.5h1M692 435.5h1M1031 435.5h1M1201 435.5h1M1371 435.5h1M1540 435.5h1M13 439.5h1M47 439.5h1M81 439.5h1M115 439.5h1M149 439.5h1M183 439.5h1M217 439.5h1M251 439.5h1M285 439.5h1M319 439.5h1M352 439.5h1M386 439.5h1M420 439.5h1M454 439.5h1M488 439.5h1M522 439.5h1M556 439.5h1M590 439.5h1M624 439.5h1M658 439.5h1M692 439.5h1M726 439.5h1M760 439.5h1M794 439.5h1M828 439.5h1M862 439.5h1M895 439.5h1M929 439.5h1M963 439.5h1M997 439.5h1M1031 439.5h1M1065 439.5h1M1099 439.5h1M1133 439.5h1M1167 439.5h1M1201 439.5h1M1235 439.5h1M1269 439.5h1M1303 439.5h1M1337 439.5h1M1371 439.5h1M1405 439.5h1M1439 439.5h1M1472 439.5h1M1506 439.5h1M1540 439.5h1M1574 439.5h1M1608 439.5h1M1642 439.5h1M1676 439.5h1M13 444.5h1M183 444.5h1M352 444.5h1M522 444.5h1M692 444.5h1M1031 444.5h1M1201 444.5h1M1371 444.5h1M1540 444.5h1M13 448.5h1M183 448.5h1M352 448.5h1M522 448.5h1M692 448.5h1M1031 448.5h1M1201 448.5h1M1371 448.5h1M1540 448.5h1M13 452.5h1M183 452.5h1M352 452.5h1M522 452.5h1M692 452.5h1M1031 452.5h1M1201 452.5h1M1371 452.5h1M1540 452.5h1M13 457.5h1M183 457.5h1M352 457.5h1M522 457.5h1M692 457.5h1M1031 457.5h1M1201 457.5h1M1371 457.5h1M1540 457.5h1M13 461.5h1M47 461.5h1M81 461.5h1M115 461.5h1M149 461.5h1M183 461.5h1M217 461.5h1M251 461.5h1M285 461.5h1M319 461.5h1M352 461.5h1M386 461.5h1M420 461.5h1M454 461.5h1M488 461.5h1M522 461.5h1M556 461.5h1M590 461.5h1M624 461.5h1M658 461.5h1M692 461.5h1M726 461.5h1M760 461.5h1M794 461.5h1M828 461.5h1M862 461.5h1M895 461.5h1M929 461.5h1M963 461.5h1M997 461.5h1M1031 461.5h1M1065 461.5h1M1099 461.5h1M1133 461.5h1M1167 461.5h1M1201 461.5h1M1235 461.5h1M1269 461.5h1M1303 461.5h1M1337 461.5h1M1371 461.5h1M1405 461.5h1M1439 461.5h1M1472 461.5h1M1506 461.5h1M1540 461.5h1M1574 461.5h1M1608 461.5h1M1642 461.5h1M1676 461.5h1M13 465.5h1M183 465.5h1M352 465.5h1M522 465.5h1M692 465.5h1M1031 465.5h1M1201 465.5h1M1371 465.5h1M1540 465.5h1M13 470.5h1M183 470.5h1M352 470.5h1M522 470.5h1M692 470.5h1M1031 470.5h1M1201 470.5h1M1371 470.5h1M1540 470.5h1M13 474.5h1M183 474.5h1M352 474.5h1M522 474.5h1M692 474.5h1M1031 474.5h1M1201 474.5h1M1371 474.5h1M1540 474.5h1M13 479.5h1M183 479.5h1M352 479.5h1M522 479.5h1M692 479.5h1M1031 479.5h1M1201 479.5h1M1371 479.5h1M1540 479.5h1M13 483.5h1M47 483.5h1M81 483.5h1M115 483.5h1M149 483.5h1M183 483.5h1M217 483.5h1M251 483.5h1M285 483.5h1M319 483.5h1M352 483.5h1M386 483.5h1M420 483.5h1M454 483.5h1M488 483.5h1M522 483.5h1M556 483.5h1M590 483.5h1M624 483.5h1M658 483.5h1M692 483.5h1M726 483.5h1M760 483.5h1M794 483.5h1M828 483.5h1M862 483.5h1M895 483.5h1M929 483.5h1M963 483.5h1M997 483.5h1M1031 483.5h1M1065 483.5h1M1099 483.5h1M1133 483.5h1M1167 483.5h1M1201 483.5h1M1235 483.5h1M1269 483.5h1M1303 483.5h1M1337 483.5h1M1371 483.5h1M1405 483.5h1M1439 483.5h1M1472 483.5h1M1506 483.5h1M1540 483.5h1M1574 483.5h1M1608 483.5h1M1642 483.5h1M1676 483.5h1M13 487.5h1M183 487.5h1M352 487.5h1M522 487.5h1M692 487.5h1M1031 487.5h1M1201 487.5h1M1371 487.5h1M1540 487.5h1M13 492.5h1M183 492.5h1M352 492.5h1M522 492.5h1M692 492.5h1M1031 492.5h1M1201 492.5h1M1371 492.5h1M1540 492.5h1M13 496.5h1M183 496.5h1M352 496.5h1M522 496.5h1M692 496.5h1M1031 496.5h1M1201 496.5h1M1371 496.5h1M1540 496.5h1M13 500.5h1M183 500.5h1M352 500.5h1M522 500.5h1M692 500.5h1M1031 500.5h1M1201 500.5h1M1371 500.5h1M1540 500.5h1M13 505.5h1M47 505.5h1M81 505.5h1M115 505.5h1M149 505.5h1M183 505.5h1M217 505.5h1M251 505.5h1M285 505.5h1M319 505.5h1M352 505.5h1M386 505.5h1M420 505.5h1M454 505.5h1M488 505.5h1M522 505.5h1M556 505.5h1M590 505.5h1M624 505.5h1M658 505.5h1M692 505.5h1M726 505.5h1M760 505.5h1M794 505.5h1M828 505.5h1M862 505.5h1M895 505.5h1M929 505.5h1M963 505.5h1M997 505.5h1M1031 505.5h1M1065 505.5h1M1099 505.5h1M1133 505.5h1M1167 505.5h1M1201 505.5h1M1235 505.5h1M1269 505.5h1M1303 505.5h1M1337 505.5h1M1371 505.5h1M1405 505.5h1M1439 505.5h1M1472 505.5h1M1506 505.5h1M1540 505.5h1M1574 505.5h1M1608 505.5h1M1642 505.5h1M1676 505.5h1M13 509.5h1M183 509.5h1M352 509.5h1M522 509.5h1M692 509.5h1M1031 509.5h1M1201 509.5h1M1371 509.5h1M1540 509.5h1M13 513.5h1M183 513.5h1M352 513.5h1M522 513.5h1M692 513.5h1M1031 513.5h1M1201 513.5h1M1371 513.5h1M1540 513.5h1M13 518.5h1M183 518.5h1M352 518.5h1M522 518.5h1M692 518.5h1M1031 518.5h1M1201 518.5h1M1371 518.5h1M1540 518.5h1M13 522.5h1M183 522.5h1M352 522.5h1M522 522.5h1M692 522.5h1M1031 522.5h1M1201 522.5h1M1371 522.5h1M1540 522.5h1M13 526.5h1M183 526.5h1M352 526.5h1M522 526.5h1M692 526.5h1M1031 526.5h1M1201 526.5h1M1371 526.5h1M1540 526.5h1M13 531.5h1M183 531.5h1M352 531.5h1M522 531.5h1M692 531.5h1M1031 531.5h1M1201 531.5h1M1371 531.5h1M1540 531.5h1M13 535.5h1M183 535.5h1M352 535.5h1M522 535.5h1M692 535.5h1M1031 535.5h1M1201 535.5h1M1371 535.5h1M1540 535.5h1M13 540.5h1M183 540.5h1M352 540.5h1M522 540.5h1M692 540.5h1M1031 540.5h1M1201 540.5h1M1371 540.5h1M1540 540.5h1M13 545.5h1M47 545.5h1M81 545.5h1M115 545.5h1M149 545.5h1M183 545.5h1M217 545.5h1M251 545.5h1M285 545.5h1M319 545.5h1M352 545.5h1M386 545.5h1M420 545.5h1M454 545.5h1M488 545.5h1M522 545.5h1M556 545.5h1M590 545.5h1M624 545.5h1M658 545.5h1M692 545.5h1M726 545.5h1M760 545.5h1M794 545.5h1M828 545.5h1M862 545.5h1M895 545.5h1M929 545.5h1M963 545.5h1M997 545.5h1M1031 545.5h1M1065 545.5h1M1099 545.5h1M1133 545.5h1M1167 545.5h1M1201 545.5h1M1235 545.5h1M1269 545.5h1M1303 545.5h1M1337 545.5h1M1371 545.5h1M1405 545.5h1M1439 545.5h1M1472 545.5h1M1506 545.5h1M1540 545.5h1M1574 545.5h1M1608 545.5h1M1642 545.5h1M1676 545.5h1M13 549.5h1M183 549.5h1M352 549.5h1M522 549.5h1M692 549.5h1M1031 549.5h1M1201 549.5h1M1371 549.5h1M1540 549.5h1M13 554.5h1M183 554.5h1M352 554.5h1M522 554.5h1M692 554.5h1M1031 554.5h1M1201 554.5h1M1371 554.5h1M1540 554.5h1M13 559.5h1M183 559.5h1M352 559.5h1M522 559.5h1M692 559.5h1M1031 559.5h1M1201 559.5h1M1371 559.5h1M1540 559.5h1M13 563.5h1M183 563.5h1M352 563.5h1M522 563.5h1M692 563.5h1M1031 563.5h1M1201 563.5h1M1371 563.5h1M1540 563.5h1M13 568.5h1M47 568.5h1M81 568.5h1M115 568.5h1M149 568.5h1M183 568.5h1M217 568.5h1M251 568.5h1M285 568.5h1M319 568.5h1M352 568.5h1M386 568.5h1M420 568.5h1M454 568.5h1M488 568.5h1M522 568.5h1M556 568.5h1M590 568.5h1M624 568.5h1M658 568.5h1M692 568.5h1M726 568.5h1M760 568.5h1M794 568.5h1M828 568.5h1M862 568.5h1M895 568.5h1M929 568.5h1M963 568.5h1M997 568.5h1M1031 568.5h1M1065 568.5h1M1099 568.5h1M1133 568.5h1M1167 568.5h1M1201 568.5h1M1235 568.5h1M1269 568.5h1M1303 568.5h1M1337 568.5h1M1371 568.5h1M1405 568.5h1M1439 568.5h1M1472 568.5h1M1506 568.5h1M1540 568.5h1M1574 568.5h1M1608 568.5h1M1642 568.5h1M1676 568.5h1M13 573.5h1M183 573.5h1M352 573.5h1M522 573.5h1M692 573.5h1M1031 573.5h1M1201 573.5h1M1371 573.5h1M1540 573.5h1M13 578.5h1M183 578.5h1M352 578.5h1M522 578.5h1M692 578.5h1M1031 578.5h1M1201 578.5h1M1371 578.5h1M1540 578.5h1M13 582.5h1M183 582.5h1M352 582.5h1M522 582.5h1M692 582.5h1M1031 582.5h1M1201 582.5h1M1371 582.5h1M1540 582.5h1M13 587.5h1M183 587.5h1M352 587.5h1M522 587.5h1M692 587.5h1M1031 587.5h1M1201 587.5h1M1371 587.5h1M1540 587.5h1M13 592.5h1M47 592.5h1M81 592.5h1M115 592.5h1M149 592.5h1M183 592.5h1M217 592.5h1M251 592.5h1M285 592.5h1M319 592.5h1M352 592.5h1M386 592.5h1M420 592.5h1M454 592.5h1M488 592.5h1M522 592.5h1M556 592.5h1M590 592.5h1M624 592.5h1M658 592.5h1M692 592.5h1M726 592.5h1M760 592.5h1M794 592.5h1M828 592.5h1M862 592.5h1M895 592.5h1M929 592.5h1M963 592.5h1M997 592.5h1M1031 592.5h1M1065 592.5h1M1099 592.5h1M1133 592.5h1M1167 592.5h1M1201 592.5h1M1235 592.5h1M1269 592.5h1M1303 592.5h1M1337 592.5h1M1371 592.5h1M1405 592.5h1M1439 592.5h1M1472 592.5h1M1506 592.5h1M1540 592.5h1M1574 592.5h1M1608 592.5h1M1642 592.5h1M1676 592.5h1M13 596.5h1M183 596.5h1M352 596.5h1M522 596.5h1M692 596.5h1M1031 596.5h1M1201 596.5h1M1371 596.5h1M1540 596.5h1M13 601.5h1M183 601.5h1M352 601.5h1M522 601.5h1M692 601.5h1M1031 601.5h1M1201 601.5h1M1371 601.5h1M1540 601.5h1M13 606.5h1M183 606.5h1M352 606.5h1M522 606.5h1M692 606.5h1M1031 606.5h1M1201 606.5h1M1371 606.5h1M1540 606.5h1M13 610.5h1M183 610.5h1M352 610.5h1M522 610.5h1M692 610.5h1M1031 610.5h1M1201 610.5h1M1371 610.5h1M1540 610.5h1M13 615.5h1M47 615.5h1M81 615.5h1M115 615.5h1M149 615.5h1M183 615.5h1M217 615.5h1M251 615.5h1M285 615.5h1M319 615.5h1M352 615.5h1M386 615.5h1M420 615.5h1M454 615.5h1M488 615.5h1M522 615.5h1M556 615.5h1M590 615.5h1M624 615.5h1M658 615.5h1M692 615.5h1M726 615.5h1M760 615.5h1M794 615.5h1M828 615.5h1M862 615.5h1M895 615.5h1M929 615.5h1M963 615.5h1M997 615.5h1M1031 615.5h1M1065 615.5h1M1099 615.5h1M1133 615.5h1M1167 615.5h1M1201 615.5h1M1235 615.5h1M1269 615.5h1M1303 615.5h1M1337 615.5h1M1371 615.5h1M1405 615.5h1M1439 615.5h1M1472 615.5h1M1506 615.5h1M1540 615.5h1M1574 615.5h1M1608 615.5h1M1642 615.5h1M1676 615.5h1M13 620.5h1M183 620.5h1M352 620.5h1M522 620.5h1M692 620.5h1M1031 620.5h1M1201 620.5h1M1371 620.5h1M1540 620.5h1M13 625.5h1M183 625.5h1M352 625.5h1M522 625.5h1M692 625.5h1M1031 625.5h1M1201 625.5h1M1371 625.5h1M1540 625.5h1M13 629.5h1M183 629.5h1M352 629.5h1M522 629.5h1M692 629.5h1M1031 629.5h1M1201 629.5h1M1371 629.5h1M1540 629.5h1M13 634.5h1M183 634.5h1M352 634.5h1M522 634.5h1M692 634.5h1M1031 634.5h1M1201 634.5h1M1371 634.5h1M1540 634.5h1M13 639.5h1M47 639.5h1M81 639.5h1M115 639.5h1M149 639.5h1M183 639.5h1M217 639.5h1M251 639.5h1M285 639.5h1M319 639.5h1M352 639.5h1M386 639.5h1M420 639.5h1M454 639.5h1M488 639.5h1M522 639.5h1M556 639.5h1M590 639.5h1M624 639.5h1M658 639.5h1M692 639.5h1M726 639.5h1M760 639.5h1M794 639.5h1M828 639.5h1M862 639.5h1M895 639.5h1M929 639.5h1M963 639.5h1M997 639.5h1M1031 639.5h1M1065 639.5h1M1099 639.5h1M1133 639.5h1M1167 639.5h1M1201 639.5h1M1235 639.5h1M1269 639.5h1M1303 639.5h1M1337 639.5h1M1371 639.5h1M1405 639.5h1M1439 639.5h1M1472 639.5h1M1506 639.5h1M1540 639.5h1M1574 639.5h1M1608 639.5h1M1642 639.5h1M1676 639.5h1M13 643.5h1M183 643.5h1M352 643.5h1M522 643.5h1M692 643.5h1M1031 643.5h1M1201 643.5h1M1371 643.5h1M1540 643.5h1M13 648.5h1M183 648.5h1M352 648.5h1M522 648.5h1M692 648.5h1M1031 648.5h1M1201 648.5h1M1371 648.5h1M1540 648.5h1M13 653.5h1M183 653.5h1M352 653.5h1M522 653.5h1M692 653.5h1M1031 653.5h1M1201 653.5h1M1371 653.5h1M1540 653.5h1M13 657.5h1M183 657.5h1M352 657.5h1M522 657.5h1M692 657.5h1M1031 657.5h1M1201 657.5h1M1371 657.5h1M1540 657.5h1M13 662.5h1M47 662.5h1M81 662.5h1M115 662.5h1M149 662.5h1M183 662.5h1M217 662.5h1M251 662.5h1M285 662.5h1M319 662.5h1M352 662.5h1M386 662.5h1M420 662.5h1M454 662.5h1M488 662.5h1M522 662.5h1M556 662.5h1M590 662.5h1M624 662.5h1M658 662.5h1M692 662.5h1M726 662.5h1M760 662.5h1M794 662.5h1M828 662.5h1M862 662.5h1M895 662.5h1M929 662.5h1M963 662.5h1M997 662.5h1M1031 662.5h1M1065 662.5h1M1099 662.5h1M1133 662.5h1M1167 662.5h1M1201 662.5h1M1235 662.5h1M1269 662.5h1M1303 662.5h1M1337 662.5h1M1371 662.5h1M1405 662.5h1M1439 662.5h1M1472 662.5h1M1506 662.5h1M1540 662.5h1M1574 662.5h1M1608 662.5h1M1642 662.5h1M1676 662.5h1M13 667.5h1M183 667.5h1M352 667.5h1M522 667.5h1M692 667.5h1M1031 667.5h1M1201 667.5h1M1371 667.5h1M1540 667.5h1M13 672.5h1M183 672.5h1M352 672.5h1M522 672.5h1M692 672.5h1M1031 672.5h1M1201 672.5h1M1371 672.5h1M1540 672.5h1M13 676.5h1M183 676.5h1M352 676.5h1M522 676.5h1M692 676.5h1M1031 676.5h1M1201 676.5h1M1371 676.5h1M1540 676.5h1M13 681.5h1M183 681.5h1M352 681.5h1M522 681.5h1M692 681.5h1M1031 681.5h1M1201 681.5h1M1371 681.5h1M1540 681.5h1M13 686.5h1M47 686.5h1M81 686.5h1M115 686.5h1M149 686.5h1M183 686.5h1M217 686.5h1M251 686.5h1M285 686.5h1M319 686.5h1M352 686.5h1M386 686.5h1M420 686.5h1M454 686.5h1M488 686.5h1M522 686.5h1M556 686.5h1M590 686.5h1M624 686.5h1M658 686.5h1M692 686.5h1M726 686.5h1M760 686.5h1M794 686.5h1M828 686.5h1M862 686.5h1M895 686.5h1M929 686.5h1M963 686.5h1M997 686.5h1M1031 686.5h1M1065 686.5h1M1099 686.5h1M1133 686.5h1M1167 686.5h1M1201 686.5h1M1235 686.5h1M1269 686.5h1M1303 686.5h1M1337 686.5h1M1371 686.5h1M1405 686.5h1M1439 686.5h1M1472 686.5h1M1506 686.5h1M1540 686.5h1M1574 686.5h1M1608 686.5h1M1642 686.5h1M1676 686.5h1M13 690.5h1M183 690.5h1M352 690.5h1M522 690.5h1M692 690.5h1M1031 690.5h1M1201 690.5h1M1371 690.5h1M1540 690.5h1M13 695.5h1M183 695.5h1M352 695.5h1M522 695.5h1M692 695.5h1M1031 695.5h1M1201 695.5h1M1371 695.5h1M1540 695.5h1M13 700.5h1M183 700.5h1M352 700.5h1M522 700.5h1M692 700.5h1M1031 700.5h1M1201 700.5h1M1371 700.5h1M1540 700.5h1M13 704.5h1M183 704.5h1M352 704.5h1M522 704.5h1M692 704.5h1M1031 704.5h1M1201 704.5h1M1371 704.5h1M1540 704.5h1M13 709.5h1M47 709.5h1M81 709.5h1M115 709.5h1M149 709.5h1M183 709.5h1M217 709.5h1M251 709.5h1M285 709.5h1M319 709.5h1M352 709.5h1M386 709.5h1M420 709.5h1M454 709.5h1M488 709.5h1M522 709.5h1M556 709.5h1M590 709.5h1M624 709.5h1M658 709.5h1M692 709.5h1M726 709.5h1M760 709.5h1M794 709.5h1M828 709.5h1M862 709.5h1M895 709.5h1M929 709.5h1M963 709.5h1M997 709.5h1M1031 709.5h1M1065 709.5h1M1099 709.5h1M1133 709.5h1M1167 709.5h1M1201 709.5h1M1235 709.5h1M1269 709.5h1M1303 709.5h1M1337 709.5h1M1371 709.5h1M1405 709.5h1M1439 709.5h1M1472 709.5h1M1506 709.5h1M1540 709.5h1M1574 709.5h1M1608 709.5h1M1642 709.5h1M1676 709.5h1M13 714.5h1M183 714.5h1M352 714.5h1M522 714.5h1M692 714.5h1M1031 714.5h1M1201 714.5h1M1371 714.5h1M1540 714.5h1M13 719.5h1M183 719.5h1M352 719.5h1M522 719.5h1M692 719.5h1M1031 719.5h1M1201 719.5h1M1371 719.5h1M1540 719.5h1M13 723.5h1M183 723.5h1M352 723.5h1M522 723.5h1M692 723.5h1M1031 723.5h1M1201 723.5h1M1371 723.5h1M1540 723.5h1M13 728.5h1M183 728.5h1M352 728.5h1M522 728.5h1M692 728.5h1M1031 728.5h1M1201 728.5h1M1371 728.5h1M1540 728.5h1M13 733.5h1M47 733.5h1M81 733.5h1M115 733.5h1M149 733.5h1M183 733.5h1M217 733.5h1M251 733.5h1M285 733.5h1M319 733.5h1M352 733.5h1M386 733.5h1M420 733.5h1M454 733.5h1M488 733.5h1M522 733.5h1M556 733.5h1M590 733.5h1M624 733.5h1M658 733.5h1M692 733.5h1M726 733.5h1M760 733.5h1M794 733.5h1M828 733.5h1M862 733.5h1M895 733.5h1M929 733.5h1M963 733.5h1M997 733.5h1M1031 733.5h1M1065 733.5h1M1099 733.5h1M1133 733.5h1M1167 733.5h1M1201 733.5h1M1235 733.5h1M1269 733.5h1M1303 733.5h1M1337 733.5h1M1371 733.5h1M1405 733.5h1M1439 733.5h1M1472 733.5h1M1506 733.5h1M1540 733.5h1M1574 733.5h1M1608 733.5h1M1642 733.5h1M1676 733.5h1M13 737.5h1M183 737.5h1M352 737.5h1M522 737.5h1M692 737.5h1M1031 737.5h1M1201 737.5h1M1371 737.5h1M1540 737.5h1M13 742.5h1M183 742.5h1M352 742.5h1M522 742.5h1M692 742.5h1M1031 742.5h1M1201 742.5h1M1371 742.5h1M1540 742.5h1M13 747.5h1M183 747.5h1M352 747.5h1M522 747.5h1M692 747.5h1M1031 747.5h1M1201 747.5h1M1371 747.5h1M1540 747.5h1M13 751.5h1M183 751.5h1M352 751.5h1M522 751.5h1M692 751.5h1M1031 751.5h1M1201 751.5h1M1371 751.5h1M1540 751.5h1M13 756.5h1M47 756.5h1M81 756.5h1M115 756.5h1M149 756.5h1M183 756.5h1M217 756.5h1M251 756.5h1M285 756.5h1M319 756.5h1M352 756.5h1M386 756.5h1M420 756.5h1M454 756.5h1M488 756.5h1M522 756.5h1M556 756.5h1M590 756.5h1M624 756.5h1M658 756.5h1M692 756.5h1M726 756.5h1M760 756.5h1M794 756.5h1M828 756.5h1M862 756.5h1M895 756.5h1M929 756.5h1M963 756.5h1M997 756.5h1M1031 756.5h1M1065 756.5h1M1099 756.5h1M1133 756.5h1M1167 756.5h1M1201 756.5h1M1235 756.5h1M1269 756.5h1M1303 756.5h1M1337 756.5h1M1371 756.5h1M1405 756.5h1M1439 756.5h1M1472 756.5h1M1506 756.5h1M1540 756.5h1M1574 756.5h1M1608 756.5h1M1642 756.5h1M1676 756.5h1M13 762.5h1M183 762.5h1M352 762.5h1M522 762.5h1M692 762.5h1M1031 762.5h1M1201 762.5h1M1371 762.5h1M1540 762.5h1M13 766.5h1M47 766.5h1M81 766.5h1M115 766.5h1M149 766.5h1M183 766.5h1M217 766.5h1M251 766.5h1M285 766.5h1M319 766.5h1M352 766.5h1M386 766.5h1M420 766.5h1M454 766.5h1M488 766.5h1M522 766.5h1M556 766.5h1M590 766.5h1M624 766.5h1M658 766.5h1M692 766.5h1M726 766.5h1M760 766.5h1M794 766.5h1M828 766.5h1M862 766.5h1M895 766.5h1M929 766.5h1M963 766.5h1M997 766.5h1M1031 766.5h1M1065 766.5h1M1099 766.5h1M1133 766.5h1M1167 766.5h1M1201 766.5h1M1235 766.5h1M1269 766.5h1M1303 766.5h1M1337 766.5h1M1371 766.5h1M1405 766.5h1M1439 766.5h1M1472 766.5h1M1506 766.5h1M1540 766.5h1M1574 766.5h1M1608 766.5h1M1642 766.5h1M1676 766.5h1M13 770.5h1M183 770.5h1M352 770.5h1M522 770.5h1M692 770.5h1M1031 770.5h1M1201 770.5h1M1371 770.5h1M1540 770.5h1M13 774.5h1M183 774.5h1M352 774.5h1M522 774.5h1M692 774.5h1M1031 774.5h1M1201 774.5h1M1371 774.5h1M1540 774.5h1M13 778.5h1M183 778.5h1M352 778.5h1M522 778.5h1M692 778.5h1M1031 778.5h1M1201 778.5h1M1371 778.5h1M1540 778.5h1M13 782.5h1M183 782.5h1M352 782.5h1M522 782.5h1M692 782.5h1M1031 782.5h1M1201 782.5h1M1371 782.5h1M1540 782.5h1M13 786.5h1M47 786.5h1M81 786.5h1M115 786.5h1M149 786.5h1M183 786.5h1M217 786.5h1M251 786.5h1M285 786.5h1M319 786.5h1M352 786.5h1M386 786.5h1M420 786.5h1M454 786.5h1M488 786.5h1M522 786.5h1M556 786.5h1M590 786.5h1M624 786.5h1M658 786.5h1M692 786.5h1M726 786.5h1M760 786.5h1M794 786.5h1M828 786.5h1M862 786.5h1M895 786.5h1M929 786.5h1M963 786.5h1M997 786.5h1M1031 786.5h1M1065 786.5h1M1099 786.5h1M1133 786.5h1M1167 786.5h1M1201 786.5h1M1235 786.5h1M1269 786.5h1M1303 786.5h1M1337 786.5h1M1371 786.5h1M1405 786.5h1M1439 786.5h1M1472 786.5h1M1506 786.5h1M1540 786.5h1M1574 786.5h1M1608 786.5h1M1642 786.5h1M1676 786.5h1M13 790.5h1M183 790.5h1M352 790.5h1M522 790.5h1M692 790.5h1M1031 790.5h1M1201 790.5h1M1371 790.5h1M1540 790.5h1M13 794.5h1M183 794.5h1M352 794.5h1M522 794.5h1M692 794.5h1M1031 794.5h1M1201 794.5h1M1371 794.5h1M1540 794.5h1M13 799.5h1M183 799.5h1M352 799.5h1M522 799.5h1M692 799.5h1M1031 799.5h1M1201 799.5h1M1371 799.5h1M1540 799.5h1M13 803.5h1M183 803.5h1M352 803.5h1M522 803.5h1M692 803.5h1M1031 803.5h1M1201 803.5h1M1371 803.5h1M1540 803.5h1M13 807.5h1M47 807.5h1M81 807.5h1M115 807.5h1M149 807.5h1M183 807.5h1M217 807.5h1M251 807.5h1M285 807.5h1M319 807.5h1M352 807.5h1M386 807.5h1M420 807.5h1M454 807.5h1M488 807.5h1M522 807.5h1M556 807.5h1M590 807.5h1M624 807.5h1M658 807.5h1M692 807.5h1M726 807.5h1M760 807.5h1M794 807.5h1M828 807.5h1M862 807.5h1M895 807.5h1M929 807.5h1M963 807.5h1M997 807.5h1M1031 807.5h1M1065 807.5h1M1099 807.5h1M1133 807.5h1M1167 807.5h1M1201 807.5h1M1235 807.5h1M1269 807.5h1M1303 807.5h1M1337 807.5h1M1371 807.5h1M1405 807.5h1M1439 807.5h1M1472 807.5h1M1506 807.5h1M1540 807.5h1M1574 807.5h1M1608 807.5h1M1642 807.5h1M1676 807.5h1M13 811.5h1M183 811.5h1M352 811.5h1M522 811.5h1M692 811.5h1M1031 811.5h1M1201 811.5h1M1371 811.5h1M1540 811.5h1M13 815.5h1M183 815.5h1M352 815.5h1M522 815.5h1M692 815.5h1M1031 815.5h1M1201 815.5h1M1371 815.5h1M1540 815.5h1M13 819.5h1M183 819.5h1M352 819.5h1M522 819.5h1M692 819.5h1M1031 819.5h1M1201 819.5h1M1371 819.5h1M1540 819.5h1M13 823.5h1M183 823.5h1M352 823.5h1M522 823.5h1M692 823.5h1M1031 823.5h1M1201 823.5h1M1371 823.5h1M1540 823.5h1M13 827.5h1M47 827.5h1M81 827.5h1M115 827.5h1M149 827.5h1M183 827.5h1M217 827.5h1M251 827.5h1M285 827.5h1M319 827.5h1M352 827.5h1M386 827.5h1M420 827.5h1M454 827.5h1M488 827.5h1M522 827.5h1M556 827.5h1M590 827.5h1M624 827.5h1M658 827.5h1M692 827.5h1M726 827.5h1M760 827.5h1M794 827.5h1M828 827.5h1M862 827.5h1M895 827.5h1M929 827.5h1M963 827.5h1M997 827.5h1M1031 827.5h1M1065 827.5h1M1099 827.5h1M1133 827.5h1M1167 827.5h1M1201 827.5h1M1235 827.5h1M1269 827.5h1M1303 827.5h1M1337 827.5h1M1371 827.5h1M1405 827.5h1M1439 827.5h1M1472 827.5h1M1506 827.5h1M1540 827.5h1M1574 827.5h1M1608 827.5h1M1642 827.5h1M1676 827.5h1M13 831.5h1M183 831.5h1M352 831.5h1M522 831.5h1M692 831.5h1M1031 831.5h1M1201 831.5h1M1371 831.5h1M1540 831.5h1M13 836.5h1M183 836.5h1M352 836.5h1M522 836.5h1M692 836.5h1M1031 836.5h1M1201 836.5h1M1371 836.5h1M1540 836.5h1M13 840.5h1M183 840.5h1M352 840.5h1M522 840.5h1M692 840.5h1M1031 840.5h1M1201 840.5h1M1371 840.5h1M1540 840.5h1M13 844.5h1M183 844.5h1M352 844.5h1M522 844.5h1M692 844.5h1M1031 844.5h1M1201 844.5h1M1371 844.5h1M1540 844.5h1M13 848.5h1M47 848.5h1M81 848.5h1M115 848.5h1M149 848.5h1M183 848.5h1M217 848.5h1M251 848.5h1M285 848.5h1M319 848.5h1M352 848.5h1M386 848.5h1M420 848.5h1M454 848.5h1M488 848.5h1M522 848.5h1M556 848.5h1M590 848.5h1M624 848.5h1M658 848.5h1M692 848.5h1M726 848.5h1M760 848.5h1M794 848.5h1M828 848.5h1M862 848.5h1M895 848.5h1M929 848.5h1M963 848.5h1M997 848.5h1M1031 848.5h1M1065 848.5h1M1099 848.5h1M1133 848.5h1M1167 848.5h1M1201 848.5h1M1235 848.5h1M1269 848.5h1M1303 848.5h1M1337 848.5h1M1371 848.5h1M1405 848.5h1M1439 848.5h1M1472 848.5h1M1506 848.5h1M1540 848.5h1M1574 848.5h1M1608 848.5h1M1642 848.5h1M1676 848.5h1M13 852.5h1M183 852.5h1M352 852.5h1M522 852.5h1M692 852.5h1M1031 852.5h1M1201 852.5h1M1371 852.5h1M1540 852.5h1M13 856.5h1M183 856.5h1M352 856.5h1M522 856.5h1M692 856.5h1M1031 856.5h1M1201 856.5h1M1371 856.5h1M1540 856.5h1M13 860.5h1M183 860.5h1M352 860.5h1M522 860.5h1M692 860.5h1M1031 860.5h1M1201 860.5h1M1371 860.5h1M1540 860.5h1M13 864.5h1M183 864.5h1M352 864.5h1M522 864.5h1M692 864.5h1M1031 864.5h1M1201 864.5h1M1371 864.5h1M1540 864.5h1M13 868.5h1M47 868.5h1M81 868.5h1M115 868.5h1M149 868.5h1M183 868.5h1M217 868.5h1M251 868.5h1M285 868.5h1M319 868.5h1M352 868.5h1M386 868.5h1M420 868.5h1M454 868.5h1M488 868.5h1M522 868.5h1M556 868.5h1M590 868.5h1M624 868.5h1M658 868.5h1M692 868.5h1M726 868.5h1M760 868.5h1M794 868.5h1M828 868.5h1M862 868.5h1M895 868.5h1M929 868.5h1M963 868.5h1M997 868.5h1M1031 868.5h1M1065 868.5h1M1099 868.5h1M1133 868.5h1M1167 868.5h1M1201 868.5h1M1235 868.5h1M1269 868.5h1M1303 868.5h1M1337 868.5h1M1371 868.5h1M1405 868.5h1M1439 868.5h1M1472 868.5h1M1506 868.5h1M1540 868.5h1M1574 868.5h1M1608 868.5h1M1642 868.5h1M1676 868.5h1M13 872.5h1M183 872.5h1M352 872.5h1M522 872.5h1M692 872.5h1M1031 872.5h1M1201 872.5h1M1371 872.5h1M1540 872.5h1M13 877.5h1M183 877.5h1M352 877.5h1M522 877.5h1M692 877.5h1M1031 877.5h1M1201 877.5h1M1371 877.5h1M1540 877.5h1M13 881.5h1M183 881.5h1M352 881.5h1M522 881.5h1M692 881.5h1M1031 881.5h1M1201 881.5h1M1371 881.5h1M1540 881.5h1M13 885.5h1M183 885.5h1M352 885.5h1M522 885.5h1M692 885.5h1M1031 885.5h1M1201 885.5h1M1371 885.5h1M1540 885.5h1M13 889.5h1M47 889.5h1M81 889.5h1M115 889.5h1M149 889.5h1M183 889.5h1M217 889.5h1M251 889.5h1M285 889.5h1M319 889.5h1M352 889.5h1M386 889.5h1M420 889.5h1M454 889.5h1M488 889.5h1M522 889.5h1M556 889.5h1M590 889.5h1M624 889.5h1M658 889.5h1M692 889.5h1M726 889.5h1M760 889.5h1M794 889.5h1M828 889.5h1M862 889.5h1M895 889.5h1M929 889.5h1M963 889.5h1M997 889.5h1M1031 889.5h1M1065 889.5h1M1099 889.5h1M1133 889.5h1M1167 889.5h1M1201 889.5h1M1235 889.5h1M1269 889.5h1M1303 889.5h1M1337 889.5h1M1371 889.5h1M1405 889.5h1M1439 889.5h1M1472 889.5h1M1506 889.5h1M1540 889.5h1M1574 889.5h1M1608 889.5h1M1642 889.5h1M1676 889.5h1M13 893.5h1M183 893.5h1M352 893.5h1M522 893.5h1M692 893.5h1M1031 893.5h1M1201 893.5h1M1371 893.5h1M1540 893.5h1M13 897.5h1M183 897.5h1M352 897.5h1M522 897.5h1M692 897.5h1M1031 897.5h1M1201 897.5h1M1371 897.5h1M1540 897.5h1M13 901.5h1M183 901.5h1M352 901.5h1M522 901.5h1M692 901.5h1M1031 901.5h1M1201 901.5h1M1371 901.5h1M1540 901.5h1M13 905.5h1M183 905.5h1M352 905.5h1M522 905.5h1M692 905.5h1M1031 905.5h1M1201 905.5h1M1371 905.5h1M1540 905.5h1M13 909.5h1M47 909.5h1M81 909.5h1M115 909.5h1M149 909.5h1M183 909.5h1M217 909.5h1M251 909.5h1M285 909.5h1M319 909.5h1M352 909.5h1M386 909.5h1M420 909.5h1M454 909.5h1M488 909.5h1M522 909.5h1M556 909.5h1M590 909.5h1M624 909.5h1M658 909.5h1M692 909.5h1M726 909.5h1M760 909.5h1M794 909.5h1M828 909.5h1M862 909.5h1M895 909.5h1M929 909.5h1M963 909.5h1M997 909.5h1M1031 909.5h1M1065 909.5h1M1099 909.5h1M1133 909.5h1M1167 909.5h1M1201 909.5h1M1235 909.5h1M1269 909.5h1M1303 909.5h1M1337 909.5h1M1371 909.5h1M1405 909.5h1M1439 909.5h1M1472 909.5h1M1506 909.5h1M1540 909.5h1M1574 909.5h1M1608 909.5h1M1642 909.5h1M1676 909.5h1M13 914.5h1M183 914.5h1M352 914.5h1M522 914.5h1M692 914.5h1M1031 914.5h1M1201 914.5h1M1371 914.5h1M1540 914.5h1M13 918.5h1M183 918.5h1M352 918.5h1M522 918.5h1M692 918.5h1M1031 918.5h1M1201 918.5h1M1371 918.5h1M1540 918.5h1M13 922.5h1M183 922.5h1M352 922.5h1M522 922.5h1M692 922.5h1M1031 922.5h1M1201 922.5h1M1371 922.5h1M1540 922.5h1M13 926.5h1M183 926.5h1M352 926.5h1M522 926.5h1M692 926.5h1M1031 926.5h1M1201 926.5h1M1371 926.5h1M1540 926.5h1M13 930.5h1M47 930.5h1M81 930.5h1M115 930.5h1M149 930.5h1M183 930.5h1M217 930.5h1M251 930.5h1M285 930.5h1M319 930.5h1M352 930.5h1M386 930.5h1M420 930.5h1M454 930.5h1M488 930.5h1M522 930.5h1M556 930.5h1M590 930.5h1M624 930.5h1M658 930.5h1M692 930.5h1M726 930.5h1M760 930.5h1M794 930.5h1M828 930.5h1M862 930.5h1M895 930.5h1M929 930.5h1M963 930.5h1M997 930.5h1M1031 930.5h1M1065 930.5h1M1099 930.5h1M1133 930.5h1M1167 930.5h1M1201 930.5h1M1235 930.5h1M1269 930.5h1M1303 930.5h1M1337 930.5h1M1371 930.5h1M1405 930.5h1M1439 930.5h1M1472 930.5h1M1506 930.5h1M1540 930.5h1M1574 930.5h1M1608 930.5h1M1642 930.5h1M1676 930.5h1M13 934.5h1M183 934.5h1M352 934.5h1M522 934.5h1M692 934.5h1M1031 934.5h1M1201 934.5h1M1371 934.5h1M1540 934.5h1M13 938.5h1M183 938.5h1M352 938.5h1M522 938.5h1M692 938.5h1M1031 938.5h1M1201 938.5h1M1371 938.5h1M1540 938.5h1M13 942.5h1M183 942.5h1M352 942.5h1M522 942.5h1M692 942.5h1M1031 942.5h1M1201 942.5h1M1371 942.5h1M1540 942.5h1M13 946.5h1M183 946.5h1M352 946.5h1M522 946.5h1M692 946.5h1M1031 946.5h1M1201 946.5h1M1371 946.5h1M1540 946.5h1M13 950.5h1M47 950.5h1M81 950.5h1M115 950.5h1M149 950.5h1M183 950.5h1M217 950.5h1M251 950.5h1M285 950.5h1M319 950.5h1M352 950.5h1M386 950.5h1M420 950.5h1M454 950.5h1M488 950.5h1M522 950.5h1M556 950.5h1M590 950.5h1M624 950.5h1M658 950.5h1M692 950.5h1M726 950.5h1M760 950.5h1M794 950.5h1M828 950.5h1M862 950.5h1M895 950.5h1M929 950.5h1M963 950.5h1M997 950.5h1M1031 950.5h1M1065 950.5h1M1099 950.5h1M1133 950.5h1M1167 950.5h1M1201 950.5h1M1235 950.5h1M1269 950.5h1M1303 950.5h1M1337 950.5h1M1371 950.5h1M1405 950.5h1M1439 950.5h1M1472 950.5h1M1506 950.5h1M1540 950.5h1M1574 950.5h1M1608 950.5h1M1642 950.5h1M1676 950.5h1M13 955.5h1M183 955.5h1M352 955.5h1M522 955.5h1M692 955.5h1M1031 955.5h1M1201 955.5h1M1371 955.5h1M1540 955.5h1M13 959.5h1M183 959.5h1M352 959.5h1M522 959.5h1M692 959.5h1M1031 959.5h1M1201 959.5h1M1371 959.5h1M1540 959.5h1M13 963.5h1M183 963.5h1M352 963.5h1M522 963.5h1M692 963.5h1M1031 963.5h1M1201 963.5h1M1371 963.5h1M1540 963.5h1" stroke="#b8b8b8" stroke-opacity=".3" stroke-width="1" fill="none" shape-rendering="crispEdges"/>
</g>
<path d="M586.5 62.5H580.5V78.5H586.5M1137.5 62.5H1143.5V78.5H1137.5" fill="none" stroke="#d8d8d8" stroke-width="1.3"/>
<path d="M581 70.8H1143" stroke="#d0d0d0" stroke-width="2"/>
<path d="M853.5 57.5H869.5L861.5 62.5Z" fill="#f7912b"/>
<path d="M855.5 69.5H867.5V81.5H864L861.5 84.8L859 81.5H855.5Z" fill="#000" stroke="#f0943a" stroke-width="1.4" stroke-linejoin="round"/>
<text x="861.5" y="80" text-anchor="middle" font-family="DejaVu Sans, sans-serif" font-weight="bold" font-size="10" fill="#f0943a">T</text>
<path d="M850.5 86H872.5L861.5 96.5Z" fill="#f7912b"/>
<path d="M493.5 159.5L504.5 176.5H482.5Z" fill="#ff9632"/>
<path d="M852.2 305.2H870.4V325H865L861.4 332L857.8 325H852.2Z" fill="#000" stroke="#f58a1f" stroke-width="1.3"/>
<text x="861.3" y="320.6" text-anchor="middle" font-family="DejaVu Sans, sans-serif" font-size="14.5" fill="#f58a1f" stroke="#f58a1f" stroke-width=".45">T</text>
<path d="M1689.5 361.3L1702 350.5V359.8H1710V362.8H1702V372Z" fill="#28c8d2"/>
<path d="M19 251.5H44L58 266.5L44 281.5H19Q16.8 281.5 16.8 279.3V253.7Q16.8 251.5 19 251.5Z" fill="#26240a" stroke="#dcd638" stroke-width="1.3" stroke-linejoin="round"/>
<text x="37.6" y="270.8" text-anchor="middle" font-family="DejaVu Sans, sans-serif" font-size="12.5" letter-spacing="-.8" fill="#f0e632" xml:space="preserve">C 1</text>
<path d="M19 467.2H44L58 482.2L44 497.2H19Q16.8 497.2 16.8 495V469.4Q16.8 467.2 19 467.2Z" fill="#071e20" stroke="#2ab4bc" stroke-width="1.3" stroke-linejoin="round"/>
<text x="37.6" y="486.5" text-anchor="middle" font-family="DejaVu Sans, sans-serif" font-size="12.5" letter-spacing="-.8" fill="#3cd2d8" xml:space="preserve">C 2</text>
<path d="M19 717.4H44L58 732.4L44 747.4H19Q16.8 747.4 16.8 745.2V719.6Q16.8 717.4 19 717.4Z" fill="#1a080b" stroke="#c83c58" stroke-width="1.3" stroke-linejoin="round"/>
<text x="37.6" y="736.7" text-anchor="middle" font-family="DejaVu Sans, sans-serif" font-size="12.5" letter-spacing="-.8" fill="#f0f0f0" xml:space="preserve">C 3</text>
<path d="M19 893.4H44L58 908.4L44 923.4H19Q16.8 923.4 16.8 921.2V895.6Q16.8 893.4 19 893.4Z" fill="#8fd032" stroke="#8fd032" stroke-width="1.3" stroke-linejoin="round"/>
<text x="37.6" y="912.7" text-anchor="middle" font-family="DejaVu Sans, sans-serif" font-size="12.5" letter-spacing="-.8" fill="#0a1404" xml:space="preserve">C 4</text>
<path d="M13.5 86V304M1709.5 86V304" stroke="#e8c898" stroke-width="1" stroke-dasharray="5 5" shape-rendering="crispEdges"/>
</svg>
<div class="lbl" style="left:1673px;width:9.5px;overflow:hidden;top:105.3px;color:#d9d23c">28 V</div>
<div class="lbl ylab" style="top:127.2px;color:#d9d23c;">24 V</div>
<div class="lbl ylab" style="top:149.1px;color:#d9d23c;">20 V</div>
<div class="lbl ylab" style="top:171px;color:#d9d23c;">16 V</div>
<div class="lbl ylab" style="top:192.9px;color:#d9d23c;">12 V</div>
<div class="lbl ylab" style="top:214.8px;color:#d9d23c;">8 V</div>
<div class="lbl ylab" style="top:236.7px;color:#d9d23c;">4 V</div>
<div class="lbl ylab" style="top:258.6px;color:#d9d23c;">0 V</div>
<div class="lbl ylab" style="top:280.5px;color:#d9d23c;">-4 V</div>
<div class="lbl ylab" style="top:321.1px;color:#2db4b4;">4.9 A</div>
<div class="lbl ylab" style="top:343px;color:#2db4b4;">4.2 A</div>
<div class="lbl ylab" style="top:364.9px;color:#2db4b4;">3.5 A</div>
<div class="lbl ylab" style="top:386.8px;color:#2db4b4;">2.8 A</div>
<div class="lbl ylab" style="top:408.7px;color:#2db4b4;">2.1 A</div>
<div class="lbl ylab" style="top:430.6px;color:#2db4b4;">1.4 A</div>
<div class="lbl ylab" style="top:452.5px;color:#2db4b4;">700 mA</div>
<div class="lbl ylab" style="top:474.4px;color:#2db4b4;">0 A</div>
<div class="lbl ylab" style="top:496.3px;color:#2db4b4;">-700 mA</div>
<div class="lbl ylab" style="top:536.1px;color:#d64660;">560 V</div>
<div class="lbl ylab" style="top:559.6px;color:#d64660;">490 V</div>
<div class="lbl ylab" style="top:583.2px;color:#d64660;">420 V</div>
<div class="lbl ylab" style="top:606.8px;color:#d23050;text-shadow:1px 1px 0 #2c040c,0 1px 0 #2c040c,1px 0 0 #2c040c">350 V</div>
<div class="lbl ylab" style="top:630.3px;color:#d23050;text-shadow:1px 1px 0 #2c040c,0 1px 0 #2c040c,1px 0 0 #2c040c">280 V</div>
<div class="lbl ylab" style="top:653.9px;color:#d23050;text-shadow:1px 1px 0 #2c040c,0 1px 0 #2c040c,1px 0 0 #2c040c">210 V</div>
<div class="lbl ylab" style="top:677.4px;color:#d23050;text-shadow:1px 1px 0 #2c040c,0 1px 0 #2c040c,1px 0 0 #2c040c">140 V</div>
<div class="lbl ylab" style="top:701px;color:#d23050;text-shadow:1px 1px 0 #2c040c,0 1px 0 #2c040c,1px 0 0 #2c040c">70 V</div>
<div class="lbl ylab" style="top:724.5px;color:#d23050;text-shadow:1px 1px 0 #2c040c,0 1px 0 #2c040c,1px 0 0 #2c040c">0 V</div>
<div class="lbl ylab" style="top:778.4px;color:#8cbe3c;">3.6 V</div>
<div class="lbl ylab" style="top:798.9px;color:#8cbe3c;">3 V</div>
<div class="lbl ylab" style="top:819.3px;color:#8cbe3c;">2.4 V</div>
<div class="lbl ylab" style="top:839.8px;color:#8cbe3c;">1.8 V</div>
<div class="lbl ylab" style="top:860.2px;color:#8cbe3c;">1.2 V</div>
<div class="lbl ylab" style="top:880.6px;color:#8cbe3c;">600 mV</div>
<div class="lbl ylab" style="top:901.1px;color:#8cbe3c;">0 V</div>
<div class="lbl ylab" style="top:921.6px;color:#8cbe3c;">-600 mV</div>
<div class="lbl ylab" style="top:942px;color:#8cbe3c;">-1.2 V</div>
<div class="lbl tl" style="left:183px">-40 ms</div>
<div class="lbl tl" style="left:352.6px">-30 ms</div>
<div class="lbl tl" style="left:522.2px">-20 ms</div>
<div class="lbl tl" style="left:691.8px">-10 ms</div>
<div class="lbl tl" style="left:861.4px">0 s</div>
<div class="lbl tl" style="left:1031px">10 ms</div>
<div class="lbl tl" style="left:1200.6px">20 ms</div>
<div class="lbl tl" style="left:1370.2px">30 ms</div>
<div class="lbl tl" style="left:1539.8px">40 ms</div>
<svg class="abs" style="left:1660px;top:92px" width="46" height="44" viewBox="1660 92 46 44"><path d="M1662 94H1699Q1703 94 1703 98V133Z" fill="#5a5a5a"/><circle cx="1694" cy="101.5" r="4.6" fill="none" stroke="#b4b4b4" stroke-width="1.8"/><path d="M1690.5 105.5L1683.5 111.5" stroke="#b4b4b4" stroke-width="2.6" stroke-linecap="round"/></svg>
<div class="chname" style="left:65px;top:271px;color:#f0e632">Vout</div>
<div class="chname" style="left:62px;top:490.5px;color:#28c3cd">Iout</div>
<div class="chname" style="left:62px;top:931.5px;color:#8cc83c">Vfb</div>
<div id="rpanel"></div>
<div id="addnew">Add New...</div>
<div class="btn" style="left:1738px;top:81px">Cursors</div>
<div class="btn" style="left:1825px;top:81px">Callout</div>
<div class="btn" style="left:1738px;top:137px">Measure</div>
<div class="btn" style="left:1825px;top:137px">Search</div>
<div class="btn two" style="left:1738px;top:192px">Results<br>Table</div>
<div class="btn" style="left:1825px;top:192px">Plot</div>
<div class="btn" style="left:1738px;top:253px"><svg class="abs" style="left:20px;top:6px" width="36" height="32" viewBox="1760 261 36 32"><rect x="1765.3" y="265.2" width="21.6" height="18.6" fill="none" stroke="#c4c4c4" stroke-width="2.4" stroke-dasharray="3.4 3.2" stroke-dashoffset="1.7"/><circle cx="1778.3" cy="272.6" r="4.4" fill="#2c2c2c" stroke="#c8c8c8" stroke-width="1.7"/><path d="M1774.6 276L1770.4 279.4" stroke="#c8c8c8" stroke-width="2.8" stroke-linecap="round"/><path d="M1782.6 279.4L1791.4 283.2L1787.6 284.6L1790.2 289.2L1788.4 290.2L1785.8 285.6L1783.2 288.2Z" fill="#b8b8b8"/></svg></div>
<div class="btn" style="left:1825px;top:253px">More...</div>
<div class="hr" style="left:1734px;top:245px;width:172px"></div>
<div class="hr" style="left:1734px;top:307px;width:172px"></div>
<div class="hr" style="left:1736px;top:690px;width:168px"></div>
<div class="meas" style="top:322px"><div class="h">Meas 1<span class="chip" style="background:#8cc63f">4</span></div><div class="l1">Mean</div><div class="l2">μ': 1.457 V</div></div>
<div class="meas" style="top:397.5px"><div class="h">Meas 2<span class="chip" style="background:#f0e632">1</span></div><div class="l1">Maximum</div><div class="l2">μ': 20.69 V</div></div>
<div class="meas" style="top:473px"><div class="h" style="background:#000;color:#f0e632">Meas 3<span class="chip" style="background:#f0e632">1</span></div><div class="l1">Minimum</div><div class="l2">μ': 19.33 V</div></div>
<div class="meas" style="top:548.5px"><div class="h">Meas 4<span class="chip" style="background:#28c8d2">2</span></div><div class="l1">Maximum</div><div class="l2">μ': 4.689 A</div></div>
<div class="meas" style="top:624px"><div class="h">Meas 5<span class="chip" style="background:#e84060;color:#fff">3</span></div><div class="l1">Maximum</div><div class="l2">μ': 525.3 V</div></div>
<div class="abs" style="left:1720px;top:500px;width:4px;height:4px;border-radius:2px;background:#c8c8c8"></div>
<div class="abs" style="left:1720px;top:508px;width:4px;height:4px;border-radius:2px;background:#c8c8c8"></div>
<div class="abs" style="left:1720px;top:516px;width:4px;height:4px;border-radius:2px;background:#c8c8c8"></div>
<div class="badge" style="left:14px"><div class="h" style="background:#514b21;color:#f0e632">Ch 1</div><div class="r" style="top:23.2px">4 V/div</div><svg class="abs" style="left:5px;top:46px" width="22" height="18" viewBox="5 46 22 18"><path d="M9.2 55.5C9.6 50.5 12 48.3 15.6 48.3C19.4 48.3 21.8 51 22.2 55.8" fill="none" stroke="#333" stroke-width="1.5"/><circle cx="15.6" cy="52" r="3" fill="none" stroke="#222" stroke-width="1.4"/><rect x="7.2" y="54.6" width="3.8" height="5.8" rx="1.6" fill="#ccc" stroke="#666" stroke-width="1"/><rect x="20" y="55.6" width="4.6" height="6" rx=".8" fill="#eee" stroke="#6a6a6a" stroke-width="1.1"/></svg><div class="r" style="top:68.2px">500 MHz</div></div>
<div class="badge" style="left:128px"><div class="h" style="background:#1d4a4f;color:#3cd2d8">Ch 2</div><div class="r" style="top:23.2px">700 mA/div</div><div class="r" style="top:45.7px">1 MΩ</div><div class="r" style="top:68.2px">500 MHz</div></div>
<div class="badge" style="left:242px"><div class="h" style="background:#54272f;color:#ffffff">Ch 3</div><div class="r" style="top:23.2px">70 V/div</div><div class="r" style="top:45.7px">1 MΩ</div><div class="r" style="top:68.2px">500 MHz</div></div>
<div class="badge" style="left:356px"><div class="h" style="background:#8ece36;color:#111111;height:24px">Ch 4</div><div class="r" style="top:23.2px">600 mV/div</div><svg class="abs" style="left:5px;top:46px" width="22" height="18" viewBox="5 46 22 18"><path d="M9.2 55.5C9.6 50.5 12 48.3 15.6 48.3C19.4 48.3 21.8 51 22.2 55.8" fill="none" stroke="#333" stroke-width="1.5"/><circle cx="15.6" cy="52" r="3" fill="none" stroke="#222" stroke-width="1.4"/><rect x="7.2" y="54.6" width="3.8" height="5.8" rx="1.6" fill="#ccc" stroke="#666" stroke-width="1"/><rect x="20" y="55.6" width="4.6" height="6" rx=".8" fill="#eee" stroke="#6a6a6a" stroke-width="1.1"/></svg><div class="r" style="top:68.2px">500 MHz</div></div>
<div class="sbtn" style="left:833.5px"><div class="bar" style="background:#f59331"></div><div class="n">5</div></div>
<div class="sbtn" style="left:887px"><div class="bar" style="background:#2a2aa0"></div><div class="n">6</div></div>
<div class="vr" style="left:947px;top:975px;height:93px"></div>
<div class="sbtn" style="left:960px"><div class="bar" style="background:#f59331"></div><div class="t">Add<br>New<br>Math</div></div>
<div class="sbtn" style="left:1014px"><div class="bar" style="background:#c8c8c8"></div><div class="t">Add<br>New<br>Ref</div></div>
<div class="sbtn" style="left:1068px"><div class="bar" style="background:#b45ae0"></div><div class="t">Add<br>New<br>Bus</div></div>
<div class="vr" style="left:1128px;top:975px;height:93px"></div>
<div class="info" style="left:1142px;width:238px"><div class="h">Horizontal</div><div class="r" style="left:6px;top:22px">10 ms/div</div><div class="r" style="left:132px;top:22px">100 ms</div><div class="r" style="left:6px;top:44.5px">SR: 2.5 MS/s</div><div class="r" style="left:132px;top:44.5px">400 ns/pt</div><div class="r" style="left:6px;top:67px">RL: 250 kpts</div><svg class="abs" style="left:129px;top:68px" width="16" height="18" viewBox="0 0 16 18"><path d="M3 2.2H13V12L8 16.6L3 12Z" fill="#111" stroke="#f0943a" stroke-width="1.4"/><text x="8" y="11" text-anchor="middle" font-family="DejaVu Sans, sans-serif" font-weight="bold" font-size="8.5" fill="#fff">T</text></svg><div class="r" style="left:150px;top:67px">50%</div></div>
<div class="info" style="left:1388px;width:190px"><div class="h">Trigger</div><div class="abs" style="left:5px;top:23px;width:36px;height:19px;box-sizing:border-box;border:1.5px solid #0a3c42;border-radius:5px;background:#22d2da;font-size:17px;line-height:14px;text-align:center;color:#06282c;overflow:hidden">2</div><svg class="abs" style="left:50px;top:24px" width="26" height="18" viewBox="1438 1005 26 18"><path d="M1441 1008.4H1446.5L1455.8 1019.2H1460" fill="none" stroke="#4a4a5c" stroke-width="1.4"/></svg><div class="r" style="left:85px;top:22px">3.89 A</div></div>
<div class="info" style="left:1586px;width:178px"><div class="h">Acquisition</div><div class="r" style="left:5px;top:22px">Auto,</div><div class="r" style="left:102px;top:22px">Analyze</div><div class="r" style="left:5px;top:44.5px">Sample: 12 bits</div><div class="r" style="left:5px;top:67px">Single: 1 /1</div></div>
<div class="vr" style="left:1778px;top:975px;height:93px"></div>
<div id="stopped">Stopped</div>
<div id="datebox">05 Nov 2025<br>3:48:03 PM</div>
</body></html>
